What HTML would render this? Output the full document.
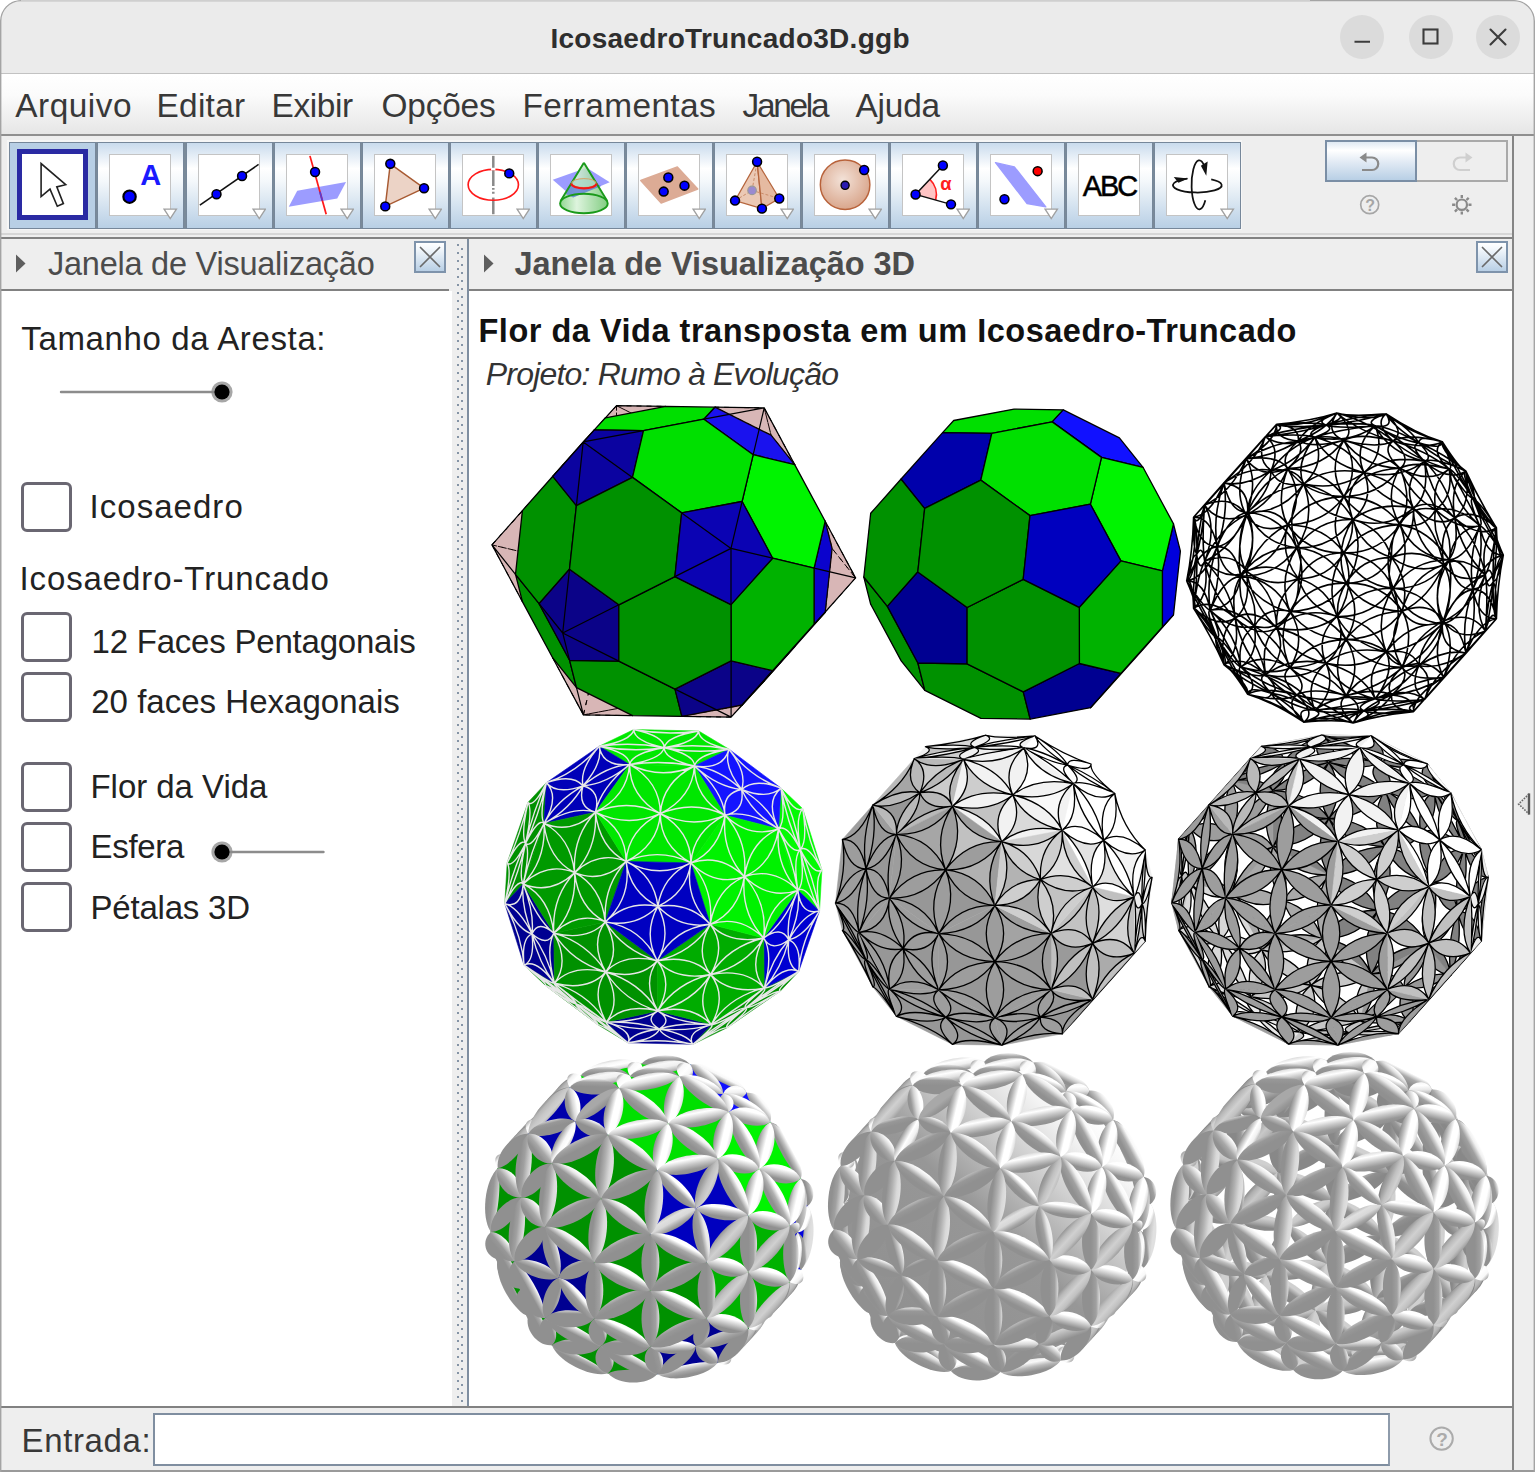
<!DOCTYPE html>
<html><head><meta charset="utf-8"><title>IcosaedroTruncado3D.ggb</title>
<style>
html,body{margin:0;padding:0;background:#fff;}
body{width:1535px;height:1472px;position:relative;overflow:hidden;font-family:"Liberation Sans",sans-serif;}
#win{position:absolute;left:0;top:0;width:1535px;height:1472px;background:#eeeeee;border-radius:21px 21px 0 0;overflow:hidden;}
#win div,#win svg{position:absolute;}
.tx{white-space:nowrap;}
#title{left:0;top:0;width:1535px;height:73px;background:#ebebeb;}
.wb{top:15px;width:44px;height:44px;border-radius:50%;background:#dbdbdb;}
#menu{left:0;top:74px;width:1535px;height:60px;background:linear-gradient(#ffffff 0%,#fbfbfb 35%,#e6e6e6 100%);}
.tb{top:141.5px;width:85px;height:85px;background:linear-gradient(#c9dbed 0%,#ffffff 30%,#f4f8fb 45%,#b8cfe5 100%);border:1px solid #76879a;}
.ic{left:11.3px;top:11.3px;width:60px;height:60px;background:#fff;border:1px solid #c4c4c4;}
.ic svg{left:0;top:0;}
.dd{left:65.3px;top:65.6px;}
.ph{top:239px;height:50px;background:#eeeeee;}
.cbx{left:21px;width:45px;height:44px;border:3px solid #6a6772;border-radius:6px;background:#fff;}
.xb{top:241px;width:28px;height:28px;border:2px solid #7e93ab;background:linear-gradient(#ffffff 0%,#f4f8fc 20%,#b8cfe5 100%);}
</style></head><body>
<div id="win">
<div id="title"></div><div style="left:0;top:73px;width:1535px;height:1.7px;background:#c2c2c2"></div>
<div class="wb" style="left:1340px"></div><div class="wb" style="left:1408.5px"></div><div class="wb" style="left:1476px"></div>
<svg style="left:1330px;top:10px" width="200" height="56" viewBox="1330 10 200 56" fill="none" stroke="#3c3c3c" stroke-width="2.1"><path d="M1354.5,41.8 L1370,41.8"/><rect x="1423.5" y="29.5" width="14" height="14"/><path d="M1490.5,29.5 L1505.5,44.5 M1505.5,29.5 L1490.5,44.5" stroke-linecap="round"/></svg>
<div id="menu"></div><div style="left:0;top:134px;width:1535px;height:2px;background:#8f8f8f"></div>
<div style="left:7px;top:140px;width:1235px;height:90px;background:#f6f6f6"></div><div style="left:9.2px;top:141.5px;width:1231.7px;height:87px;background:#7a8a99"></div>
<div class="tb" style="left:9.0px;background:#b8cfe5"><div class="ic" style="left:6.6px;top:6.4px;width:61px;height:61px;border:5.5px solid #2a2aa3"><svg width="61" height="61" viewBox="0 0 61 61"><path d="M19.1,9.6 L19.1,42.5 L28,35.1 L35.3,52.2 L41.4,49.6 L34.8,32.9 L43.7,30.7 Z" fill="#fff" stroke="#222" stroke-width="1.6" stroke-linejoin="miter"/></svg></div></div>
<div class="tb" style="left:97.0px"><div class="ic"><svg width="60" height="60" viewBox="0 0 62 62"><circle cx="20.2" cy="43.1" r="6.4" fill="#0000ff" stroke="#000" stroke-width="2.2"/><text x="31.2" y="30.8" font-family="Liberation Sans, sans-serif" font-weight="bold" font-size="30" fill="#1a1aff">A</text></svg></div><svg class="dd" width="14.5" height="11.8" viewBox="0 0 16 13"><path d="M1.2,1.2 L14.8,1.2 L8,11.6 Z" fill="#fff" stroke="#a0a0a0" stroke-width="1.5"/></svg></div>
<div class="tb" style="left:185.5px"><div class="ic"><svg width="60" height="60" viewBox="0 0 62 62"><path d="M0.9,51.9 L61.6,9.7" stroke="#111" stroke-width="1.6"/><circle cx="18.1" cy="40.5" r="4.6" fill="#0000ff" stroke="#000" stroke-width="1.6"/><circle cx="44.5" cy="21.7" r="4.6" fill="#0000ff" stroke="#000" stroke-width="1.6"/></svg></div><svg class="dd" width="14.5" height="11.8" viewBox="0 0 16 13"><path d="M1.2,1.2 L14.8,1.2 L8,11.6 Z" fill="#fff" stroke="#a0a0a0" stroke-width="1.5"/></svg></div>
<div class="tb" style="left:273.5px"><div class="ic"><svg width="60" height="60" viewBox="0 0 62 62"><path d="M1.8,53.6 L10.6,36.9 L61,27.8 L51.9,44.9 Z" fill="#9c9cff"/><path d="M23.7,0.9 L40.5,61.2" stroke="#ff1a1a" stroke-width="1.8"/><path d="M34,38 L36.5,47" stroke="#5a3ad0" stroke-width="1.8"/><circle cx="29" cy="17.6" r="4.6" fill="#0000ff" stroke="#000" stroke-width="1.6"/></svg></div><svg class="dd" width="14.5" height="11.8" viewBox="0 0 16 13"><path d="M1.2,1.2 L14.8,1.2 L8,11.6 Z" fill="#fff" stroke="#a0a0a0" stroke-width="1.5"/></svg></div>
<div class="tb" style="left:361.5px"><div class="ic"><svg width="60" height="60" viewBox="0 0 62 62"><path d="M15.8,9.1 L50.7,34.3 L10.6,53.1 Z" fill="#ecd3c6" stroke="#a85a32" stroke-width="1.5"/><circle cx="15.8" cy="9.1" r="4.6" fill="#0000ff" stroke="#000" stroke-width="1.6"/><circle cx="50.7" cy="34.3" r="4.6" fill="#0000ff" stroke="#000" stroke-width="1.6"/><circle cx="10.6" cy="53.1" r="4.6" fill="#0000ff" stroke="#000" stroke-width="1.6"/></svg></div><svg class="dd" width="14.5" height="11.8" viewBox="0 0 16 13"><path d="M1.2,1.2 L14.8,1.2 L8,11.6 Z" fill="#fff" stroke="#a0a0a0" stroke-width="1.5"/></svg></div>
<div class="tb" style="left:449.5px"><div class="ic"><svg width="60" height="60" viewBox="0 0 62 62"><path d="M31.3,0.9 L31.3,30" stroke="#8a8a8a" stroke-width="2.6"/><path d="M31.3,30 L31.3,42" stroke="#8a8a8a" stroke-width="2.6" stroke-dasharray="2 2"/><path d="M31.3,44 L31.3,61.2" stroke="#8a8a8a" stroke-width="2.6"/><ellipse cx="31.3" cy="30.8" rx="26" ry="16" fill="none" stroke="#ff1a1a" stroke-width="1.7"/><path d="M29,14.5 L33.5,14.5" stroke="#fff" stroke-width="2.6"/><circle cx="47.8" cy="19" r="4.6" fill="#0000ff" stroke="#000" stroke-width="1.6"/></svg></div><svg class="dd" width="14.5" height="11.8" viewBox="0 0 16 13"><path d="M1.2,1.2 L14.8,1.2 L8,11.6 Z" fill="#fff" stroke="#a0a0a0" stroke-width="1.5"/></svg></div>
<div class="tb" style="left:537.5px"><div class="ic"><svg width="60" height="60" viewBox="0 0 62 62"><defs><linearGradient id="cg" x1="0" x2="1" y1="0" y2="0"><stop offset="0" stop-color="#7fcf7f"/><stop offset="0.35" stop-color="#d8f2d8"/><stop offset="1" stop-color="#6cc46c"/></linearGradient></defs>
<path d="M1.8,25.5 L36.9,13.2 L60.7,28.1 L22.9,44 Z" fill="#9c9cff"/>
<path d="M34,7.9 L9.4,50.1 A24.6,10 0 0 0 58.6,50.1 Z" fill="url(#cg)" fill-opacity="0.85"/>
<path d="M20.5,30 L14.5,40 L22.9,44 L52,32 L47.5,30 A13.2,5 0 0 1 20.5,30Z" fill="#5a78d8" fill-opacity="0.75"/>
<ellipse cx="34" cy="50.1" rx="24.6" ry="10" fill="none" stroke="#1a9a1a" stroke-width="2"/>
<path d="M34,7.9 L9.9,47.5 M34,7.9 L58.1,47.5" stroke="#1a9a1a" stroke-width="2" fill="none"/>
<ellipse cx="34" cy="29" rx="12.6" ry="4.6" fill="#a8d8c8" fill-opacity="0.7" stroke="#d8a060" stroke-width="1"/>
<path d="M21,29.5 A13,5 0 0 0 47,29.5" fill="none" stroke="#f01818" stroke-width="2.2"/></svg></div></div>
<div class="tb" style="left:625.5px"><div class="ic"><svg width="60" height="60" viewBox="0 0 62 62"><path d="M1.8,26.4 L39.6,12.3 L60.7,35.2 L22.9,49.6 Z" fill="#dcab95" stroke="#dcab95" stroke-width="1.5" stroke-linejoin="round"/><circle cx="30.3" cy="23.2" r="4.6" fill="#0000ff" stroke="#000" stroke-width="1.6"/><circle cx="47" cy="31.7" r="4.6" fill="#0000ff" stroke="#000" stroke-width="1.6"/><circle cx="25.5" cy="37.8" r="4.6" fill="#0000ff" stroke="#000" stroke-width="1.6"/></svg></div><svg class="dd" width="14.5" height="11.8" viewBox="0 0 16 13"><path d="M1.2,1.2 L14.8,1.2 L8,11.6 Z" fill="#fff" stroke="#a0a0a0" stroke-width="1.5"/></svg></div>
<div class="tb" style="left:713.5px"><div class="ic"><svg width="60" height="60" viewBox="0 0 62 62"><path d="M31.1,7 L8.3,47.1 L36.1,55.4 Z" fill="#e9c3ad" fill-opacity="0.9" stroke="#b5653d" stroke-width="1.3"/>
<path d="M31.1,7 L36.1,55.4 L54,44.9 Z" fill="#e2b297" fill-opacity="0.9" stroke="#b5653d" stroke-width="1.3"/>
<path d="M8.3,47.1 L25.9,36.6 L54,44.9 M25.9,36.6 L31.1,7" fill="none" stroke="#c88a68" stroke-width="1" stroke-dasharray="3 2"/>
<circle cx="25.9" cy="36.6" r="4.4" fill="#9a8ad0" stroke="#999" stroke-width="1.2"/><circle cx="31.1" cy="7" r="4.6" fill="#0000ff" stroke="#000" stroke-width="1.6"/><circle cx="8.3" cy="47.1" r="4.6" fill="#0000ff" stroke="#000" stroke-width="1.6"/><circle cx="36.1" cy="55.4" r="4.6" fill="#0000ff" stroke="#000" stroke-width="1.6"/><circle cx="54" cy="44.9" r="4.6" fill="#0000ff" stroke="#000" stroke-width="1.6"/></svg></div><svg class="dd" width="14.5" height="11.8" viewBox="0 0 16 13"><path d="M1.2,1.2 L14.8,1.2 L8,11.6 Z" fill="#fff" stroke="#a0a0a0" stroke-width="1.5"/></svg></div>
<div class="tb" style="left:801.5px"><div class="ic"><svg width="60" height="60" viewBox="0 0 62 62"><defs><radialGradient id="sg" cx="0.45" cy="0.4" r="0.6"><stop offset="0" stop-color="#f3e2d8"/><stop offset="1" stop-color="#d9a68c"/></radialGradient></defs>
<circle cx="31.1" cy="30.8" r="25.6" fill="url(#sg)" stroke="#b8623a" stroke-width="1.5"/><circle cx="31.1" cy="31.3" r="4.2" fill="#2a1ab0" stroke="#000" stroke-width="1.4"/><circle cx="50.8" cy="15.5" r="4.6" fill="#0000ff" stroke="#000" stroke-width="1.6"/></svg></div><svg class="dd" width="14.5" height="11.8" viewBox="0 0 16 13"><path d="M1.2,1.2 L14.8,1.2 L8,11.6 Z" fill="#fff" stroke="#a0a0a0" stroke-width="1.5"/></svg></div>
<div class="tb" style="left:889.5px"><div class="ic"><svg width="60" height="60" viewBox="0 0 62 62"><path d="M13,40.8 L27.8,25.1 A21.6,21.6 0 0 1 33.7,46.6 Z" fill="#ffc4c4"/><path d="M27.8,25.1 A21.6,21.6 0 0 1 33.7,46.6" fill="none" stroke="#ff2020" stroke-width="1.7"/>
<path d="M41.2,10.9 L13,40.8 L49.6,51" fill="none" stroke="#111" stroke-width="1.5"/>
<text x="38.5" y="36.5" font-family="Liberation Sans, sans-serif" font-weight="bold" font-size="19" fill="#ff2020">α</text><circle cx="13" cy="40.8" r="4.6" fill="#0000ff" stroke="#000" stroke-width="1.6"/><circle cx="41.2" cy="10.9" r="4.6" fill="#0000ff" stroke="#000" stroke-width="1.6"/><circle cx="49.6" cy="51" r="4.6" fill="#0000ff" stroke="#000" stroke-width="1.6"/></svg></div><svg class="dd" width="14.5" height="11.8" viewBox="0 0 16 13"><path d="M1.2,1.2 L14.8,1.2 L8,11.6 Z" fill="#fff" stroke="#a0a0a0" stroke-width="1.5"/></svg></div>
<div class="tb" style="left:978.0px"><div class="ic"><svg width="60" height="60" viewBox="0 0 62 62"><path d="M4.7,7.9 L24.1,12.3 L56.6,53.6 L37.3,50.1 Z" fill="#9c9cff" stroke="#9c9cff" stroke-width="1.5" stroke-linejoin="round"/><circle cx="48.2" cy="16.7" r="4.6" fill="#ff0000" stroke="#000" stroke-width="1.6"/><circle cx="13.9" cy="45.7" r="4.6" fill="#0000ff" stroke="#000" stroke-width="1.6"/></svg></div><svg class="dd" width="14.5" height="11.8" viewBox="0 0 16 13"><path d="M1.2,1.2 L14.8,1.2 L8,11.6 Z" fill="#fff" stroke="#a0a0a0" stroke-width="1.5"/></svg></div>
<div class="tb" style="left:1066.0px"><div class="ic"><svg width="60" height="60" viewBox="0 0 62 62"><text x="4" y="42.2" font-family="Liberation Sans, sans-serif" font-size="30" letter-spacing="-2.2" fill="#000" stroke="#000" stroke-width="0.5">ABC</text></svg></div></div>
<div class="tb" style="left:1154.0px"><div class="ic"><svg width="60" height="60" viewBox="0 0 62 62"><path d="M21.1,24.4 A25.2,7.5 0 1 0 45.7,25.1" fill="none" stroke="#111" stroke-width="1.8"/>
<path d="M22,24.2 L7,22.8 L11.8,28.6 Z" fill="#111"/>
<path d="M38.5,11.3 A8,25.3 0 1 0 39.6,46.8" fill="none" stroke="#111" stroke-width="1.8"/>
<path d="M40.6,21.4 L35,11 L42,6.8 Z" fill="#111"/></svg></div><svg class="dd" width="14.5" height="11.8" viewBox="0 0 16 13"><path d="M1.2,1.2 L14.8,1.2 L8,11.6 Z" fill="#fff" stroke="#a0a0a0" stroke-width="1.5"/></svg></div>
<div style="left:1324.5px;top:139.8px;width:88px;height:38.5px;border:2px solid #7a8ea5;background:linear-gradient(#dfe9f3 0%,#ffffff 22%,#e4ecf5 50%,#b8cfe5 100%)"></div>
<div style="left:1416.5px;top:139.8px;width:89px;height:38.5px;border:2px solid #a9a9a9;border-left:none;background:#eeeeee"></div>
<svg style="left:1320px;top:136px" width="192" height="100" viewBox="1320 136 192 100" fill="none">
<path d="M1363,157.5 L1372,157.5 A6.2,6.2 0 0 1 1372,170 L1362,170" stroke="#8a8a8a" stroke-width="2.2"/><path d="M1359.5,157.5 L1366.5,152.5 L1366.5,162.5 Z" fill="#8a8a8a"/>
<path d="M1469,157.5 L1460,157.5 A6.2,6.2 0 0 0 1460,170 L1470,170" stroke="#cfcfcf" stroke-width="2.2"/><path d="M1472.5,157.5 L1465.5,152.5 L1465.5,162.5 Z" fill="#cfcfcf"/>
<circle cx="1369.7" cy="204.7" r="9" stroke="#a6a6a6" stroke-width="1.7"/>
<text x="1365.3" y="210.6" font-family="Liberation Sans, sans-serif" font-size="16" font-weight="bold" fill="#a6a6a6">?</text>
<g stroke="#8a8a8a" stroke-width="2.4"><circle cx="1461.8" cy="204.7" r="5.2" stroke-width="2.2"/><path d="M1461.8,195 L1461.8,198 M1461.8,211.4 L1461.8,214.4 M1452.1,204.7 L1455.1,204.7 M1468.5,204.7 L1471.5,204.7 M1454.9,197.8 L1457.1,200 M1466.5,209.4 L1468.7,211.6 M1454.9,211.6 L1457.1,209.4 M1466.5,200 L1468.7,197.8"/></g>
</svg>
<div style="left:0;top:233px;width:1513px;height:2px;background:#d6d6d6"></div>
<div style="left:0;top:237px;width:1513px;height:2px;background:#818181"></div>
<div style="left:2px;top:291px;width:450px;height:1115px;background:#fff"></div>
<div class="ph" style="left:2px;width:447px"></div><div style="left:0;top:289px;width:449px;height:2px;background:#818181"></div>
<svg style="left:14px;top:252px" width="14" height="24" viewBox="0 0 14 24"><path d="M2,2.5 L11.5,11.5 L2,20.5 Z" fill="#5e5e5e"/></svg>
<div class="xb" style="left:413.5px"><svg width="28" height="28" viewBox="0 0 28 28" style="left:0;top:0"><path d="M4.5,4.5 L23.5,23.5 M23.5,4.5 L4.5,23.5" stroke="#6a6a6a" stroke-width="1.7" stroke-linecap="round"/></svg></div>
<div style="left:452px;top:239px;width:15px;height:1167px;background:#eeeeee"></div>
<svg style="left:0;top:0" width="470" height="1410" fill="#8594a6"><rect x="457" y="244" width="2" height="2"/><rect x="461" y="248" width="2" height="2"/><rect x="457" y="252" width="2" height="2"/><rect x="461" y="256" width="2" height="2"/><rect x="457" y="260" width="2" height="2"/><rect x="461" y="264" width="2" height="2"/><rect x="457" y="268" width="2" height="2"/><rect x="461" y="272" width="2" height="2"/><rect x="457" y="276" width="2" height="2"/><rect x="461" y="280" width="2" height="2"/><rect x="457" y="284" width="2" height="2"/><rect x="461" y="288" width="2" height="2"/><rect x="457" y="292" width="2" height="2"/><rect x="461" y="296" width="2" height="2"/><rect x="457" y="300" width="2" height="2"/><rect x="461" y="304" width="2" height="2"/><rect x="457" y="308" width="2" height="2"/><rect x="461" y="312" width="2" height="2"/><rect x="457" y="316" width="2" height="2"/><rect x="461" y="320" width="2" height="2"/><rect x="457" y="324" width="2" height="2"/><rect x="461" y="328" width="2" height="2"/><rect x="457" y="332" width="2" height="2"/><rect x="461" y="336" width="2" height="2"/><rect x="457" y="340" width="2" height="2"/><rect x="461" y="344" width="2" height="2"/><rect x="457" y="348" width="2" height="2"/><rect x="461" y="352" width="2" height="2"/><rect x="457" y="356" width="2" height="2"/><rect x="461" y="360" width="2" height="2"/><rect x="457" y="364" width="2" height="2"/><rect x="461" y="368" width="2" height="2"/><rect x="457" y="372" width="2" height="2"/><rect x="461" y="376" width="2" height="2"/><rect x="457" y="380" width="2" height="2"/><rect x="461" y="384" width="2" height="2"/><rect x="457" y="388" width="2" height="2"/><rect x="461" y="392" width="2" height="2"/><rect x="457" y="396" width="2" height="2"/><rect x="461" y="400" width="2" height="2"/><rect x="457" y="404" width="2" height="2"/><rect x="461" y="408" width="2" height="2"/><rect x="457" y="412" width="2" height="2"/><rect x="461" y="416" width="2" height="2"/><rect x="457" y="420" width="2" height="2"/><rect x="461" y="424" width="2" height="2"/><rect x="457" y="428" width="2" height="2"/><rect x="461" y="432" width="2" height="2"/><rect x="457" y="436" width="2" height="2"/><rect x="461" y="440" width="2" height="2"/><rect x="457" y="444" width="2" height="2"/><rect x="461" y="448" width="2" height="2"/><rect x="457" y="452" width="2" height="2"/><rect x="461" y="456" width="2" height="2"/><rect x="457" y="460" width="2" height="2"/><rect x="461" y="464" width="2" height="2"/><rect x="457" y="468" width="2" height="2"/><rect x="461" y="472" width="2" height="2"/><rect x="457" y="476" width="2" height="2"/><rect x="461" y="480" width="2" height="2"/><rect x="457" y="484" width="2" height="2"/><rect x="461" y="488" width="2" height="2"/><rect x="457" y="492" width="2" height="2"/><rect x="461" y="496" width="2" height="2"/><rect x="457" y="500" width="2" height="2"/><rect x="461" y="504" width="2" height="2"/><rect x="457" y="508" width="2" height="2"/><rect x="461" y="512" width="2" height="2"/><rect x="457" y="516" width="2" height="2"/><rect x="461" y="520" width="2" height="2"/><rect x="457" y="524" width="2" height="2"/><rect x="461" y="528" width="2" height="2"/><rect x="457" y="532" width="2" height="2"/><rect x="461" y="536" width="2" height="2"/><rect x="457" y="540" width="2" height="2"/><rect x="461" y="544" width="2" height="2"/><rect x="457" y="548" width="2" height="2"/><rect x="461" y="552" width="2" height="2"/><rect x="457" y="556" width="2" height="2"/><rect x="461" y="560" width="2" height="2"/><rect x="457" y="564" width="2" height="2"/><rect x="461" y="568" width="2" height="2"/><rect x="457" y="572" width="2" height="2"/><rect x="461" y="576" width="2" height="2"/><rect x="457" y="580" width="2" height="2"/><rect x="461" y="584" width="2" height="2"/><rect x="457" y="588" width="2" height="2"/><rect x="461" y="592" width="2" height="2"/><rect x="457" y="596" width="2" height="2"/><rect x="461" y="600" width="2" height="2"/><rect x="457" y="604" width="2" height="2"/><rect x="461" y="608" width="2" height="2"/><rect x="457" y="612" width="2" height="2"/><rect x="461" y="616" width="2" height="2"/><rect x="457" y="620" width="2" height="2"/><rect x="461" y="624" width="2" height="2"/><rect x="457" y="628" width="2" height="2"/><rect x="461" y="632" width="2" height="2"/><rect x="457" y="636" width="2" height="2"/><rect x="461" y="640" width="2" height="2"/><rect x="457" y="644" width="2" height="2"/><rect x="461" y="648" width="2" height="2"/><rect x="457" y="652" width="2" height="2"/><rect x="461" y="656" width="2" height="2"/><rect x="457" y="660" width="2" height="2"/><rect x="461" y="664" width="2" height="2"/><rect x="457" y="668" width="2" height="2"/><rect x="461" y="672" width="2" height="2"/><rect x="457" y="676" width="2" height="2"/><rect x="461" y="680" width="2" height="2"/><rect x="457" y="684" width="2" height="2"/><rect x="461" y="688" width="2" height="2"/><rect x="457" y="692" width="2" height="2"/><rect x="461" y="696" width="2" height="2"/><rect x="457" y="700" width="2" height="2"/><rect x="461" y="704" width="2" height="2"/><rect x="457" y="708" width="2" height="2"/><rect x="461" y="712" width="2" height="2"/><rect x="457" y="716" width="2" height="2"/><rect x="461" y="720" width="2" height="2"/><rect x="457" y="724" width="2" height="2"/><rect x="461" y="728" width="2" height="2"/><rect x="457" y="732" width="2" height="2"/><rect x="461" y="736" width="2" height="2"/><rect x="457" y="740" width="2" height="2"/><rect x="461" y="744" width="2" height="2"/><rect x="457" y="748" width="2" height="2"/><rect x="461" y="752" width="2" height="2"/><rect x="457" y="756" width="2" height="2"/><rect x="461" y="760" width="2" height="2"/><rect x="457" y="764" width="2" height="2"/><rect x="461" y="768" width="2" height="2"/><rect x="457" y="772" width="2" height="2"/><rect x="461" y="776" width="2" height="2"/><rect x="457" y="780" width="2" height="2"/><rect x="461" y="784" width="2" height="2"/><rect x="457" y="788" width="2" height="2"/><rect x="461" y="792" width="2" height="2"/><rect x="457" y="796" width="2" height="2"/><rect x="461" y="800" width="2" height="2"/><rect x="457" y="804" width="2" height="2"/><rect x="461" y="808" width="2" height="2"/><rect x="457" y="812" width="2" height="2"/><rect x="461" y="816" width="2" height="2"/><rect x="457" y="820" width="2" height="2"/><rect x="461" y="824" width="2" height="2"/><rect x="457" y="828" width="2" height="2"/><rect x="461" y="832" width="2" height="2"/><rect x="457" y="836" width="2" height="2"/><rect x="461" y="840" width="2" height="2"/><rect x="457" y="844" width="2" height="2"/><rect x="461" y="848" width="2" height="2"/><rect x="457" y="852" width="2" height="2"/><rect x="461" y="856" width="2" height="2"/><rect x="457" y="860" width="2" height="2"/><rect x="461" y="864" width="2" height="2"/><rect x="457" y="868" width="2" height="2"/><rect x="461" y="872" width="2" height="2"/><rect x="457" y="876" width="2" height="2"/><rect x="461" y="880" width="2" height="2"/><rect x="457" y="884" width="2" height="2"/><rect x="461" y="888" width="2" height="2"/><rect x="457" y="892" width="2" height="2"/><rect x="461" y="896" width="2" height="2"/><rect x="457" y="900" width="2" height="2"/><rect x="461" y="904" width="2" height="2"/><rect x="457" y="908" width="2" height="2"/><rect x="461" y="912" width="2" height="2"/><rect x="457" y="916" width="2" height="2"/><rect x="461" y="920" width="2" height="2"/><rect x="457" y="924" width="2" height="2"/><rect x="461" y="928" width="2" height="2"/><rect x="457" y="932" width="2" height="2"/><rect x="461" y="936" width="2" height="2"/><rect x="457" y="940" width="2" height="2"/><rect x="461" y="944" width="2" height="2"/><rect x="457" y="948" width="2" height="2"/><rect x="461" y="952" width="2" height="2"/><rect x="457" y="956" width="2" height="2"/><rect x="461" y="960" width="2" height="2"/><rect x="457" y="964" width="2" height="2"/><rect x="461" y="968" width="2" height="2"/><rect x="457" y="972" width="2" height="2"/><rect x="461" y="976" width="2" height="2"/><rect x="457" y="980" width="2" height="2"/><rect x="461" y="984" width="2" height="2"/><rect x="457" y="988" width="2" height="2"/><rect x="461" y="992" width="2" height="2"/><rect x="457" y="996" width="2" height="2"/><rect x="461" y="1000" width="2" height="2"/><rect x="457" y="1004" width="2" height="2"/><rect x="461" y="1008" width="2" height="2"/><rect x="457" y="1012" width="2" height="2"/><rect x="461" y="1016" width="2" height="2"/><rect x="457" y="1020" width="2" height="2"/><rect x="461" y="1024" width="2" height="2"/><rect x="457" y="1028" width="2" height="2"/><rect x="461" y="1032" width="2" height="2"/><rect x="457" y="1036" width="2" height="2"/><rect x="461" y="1040" width="2" height="2"/><rect x="457" y="1044" width="2" height="2"/><rect x="461" y="1048" width="2" height="2"/><rect x="457" y="1052" width="2" height="2"/><rect x="461" y="1056" width="2" height="2"/><rect x="457" y="1060" width="2" height="2"/><rect x="461" y="1064" width="2" height="2"/><rect x="457" y="1068" width="2" height="2"/><rect x="461" y="1072" width="2" height="2"/><rect x="457" y="1076" width="2" height="2"/><rect x="461" y="1080" width="2" height="2"/><rect x="457" y="1084" width="2" height="2"/><rect x="461" y="1088" width="2" height="2"/><rect x="457" y="1092" width="2" height="2"/><rect x="461" y="1096" width="2" height="2"/><rect x="457" y="1100" width="2" height="2"/><rect x="461" y="1104" width="2" height="2"/><rect x="457" y="1108" width="2" height="2"/><rect x="461" y="1112" width="2" height="2"/><rect x="457" y="1116" width="2" height="2"/><rect x="461" y="1120" width="2" height="2"/><rect x="457" y="1124" width="2" height="2"/><rect x="461" y="1128" width="2" height="2"/><rect x="457" y="1132" width="2" height="2"/><rect x="461" y="1136" width="2" height="2"/><rect x="457" y="1140" width="2" height="2"/><rect x="461" y="1144" width="2" height="2"/><rect x="457" y="1148" width="2" height="2"/><rect x="461" y="1152" width="2" height="2"/><rect x="457" y="1156" width="2" height="2"/><rect x="461" y="1160" width="2" height="2"/><rect x="457" y="1164" width="2" height="2"/><rect x="461" y="1168" width="2" height="2"/><rect x="457" y="1172" width="2" height="2"/><rect x="461" y="1176" width="2" height="2"/><rect x="457" y="1180" width="2" height="2"/><rect x="461" y="1184" width="2" height="2"/><rect x="457" y="1188" width="2" height="2"/><rect x="461" y="1192" width="2" height="2"/><rect x="457" y="1196" width="2" height="2"/><rect x="461" y="1200" width="2" height="2"/><rect x="457" y="1204" width="2" height="2"/><rect x="461" y="1208" width="2" height="2"/><rect x="457" y="1212" width="2" height="2"/><rect x="461" y="1216" width="2" height="2"/><rect x="457" y="1220" width="2" height="2"/><rect x="461" y="1224" width="2" height="2"/><rect x="457" y="1228" width="2" height="2"/><rect x="461" y="1232" width="2" height="2"/><rect x="457" y="1236" width="2" height="2"/><rect x="461" y="1240" width="2" height="2"/><rect x="457" y="1244" width="2" height="2"/><rect x="461" y="1248" width="2" height="2"/><rect x="457" y="1252" width="2" height="2"/><rect x="461" y="1256" width="2" height="2"/><rect x="457" y="1260" width="2" height="2"/><rect x="461" y="1264" width="2" height="2"/><rect x="457" y="1268" width="2" height="2"/><rect x="461" y="1272" width="2" height="2"/><rect x="457" y="1276" width="2" height="2"/><rect x="461" y="1280" width="2" height="2"/><rect x="457" y="1284" width="2" height="2"/><rect x="461" y="1288" width="2" height="2"/><rect x="457" y="1292" width="2" height="2"/><rect x="461" y="1296" width="2" height="2"/><rect x="457" y="1300" width="2" height="2"/><rect x="461" y="1304" width="2" height="2"/><rect x="457" y="1308" width="2" height="2"/><rect x="461" y="1312" width="2" height="2"/><rect x="457" y="1316" width="2" height="2"/><rect x="461" y="1320" width="2" height="2"/><rect x="457" y="1324" width="2" height="2"/><rect x="461" y="1328" width="2" height="2"/><rect x="457" y="1332" width="2" height="2"/><rect x="461" y="1336" width="2" height="2"/><rect x="457" y="1340" width="2" height="2"/><rect x="461" y="1344" width="2" height="2"/><rect x="457" y="1348" width="2" height="2"/><rect x="461" y="1352" width="2" height="2"/><rect x="457" y="1356" width="2" height="2"/><rect x="461" y="1360" width="2" height="2"/><rect x="457" y="1364" width="2" height="2"/><rect x="461" y="1368" width="2" height="2"/><rect x="457" y="1372" width="2" height="2"/><rect x="461" y="1376" width="2" height="2"/><rect x="457" y="1380" width="2" height="2"/><rect x="461" y="1384" width="2" height="2"/><rect x="457" y="1388" width="2" height="2"/><rect x="461" y="1392" width="2" height="2"/><rect x="457" y="1396" width="2" height="2"/><rect x="461" y="1400" width="2" height="2"/></svg>
<div style="left:467px;top:239px;width:2px;height:1167px;background:#7f8ea0"></div>
<div style="left:469px;top:291px;width:1043px;height:1115px;background:#fff"></div>
<div class="ph" style="left:469px;width:1043px"></div><div style="left:469px;top:289px;width:1044px;height:2px;background:#818181"></div>
<svg style="left:482px;top:252px" width="14" height="24" viewBox="0 0 14 24"><path d="M2,2.5 L11.5,11.5 L2,20.5 Z" fill="#5e5e5e"/></svg>
<div class="xb" style="left:1476px"><svg width="28" height="28" viewBox="0 0 28 28" style="left:0;top:0"><path d="M4.5,4.5 L23.5,23.5 M23.5,4.5 L4.5,23.5" stroke="#6a6a6a" stroke-width="1.7" stroke-linecap="round"/></svg></div>
<div style="left:1512px;top:136px;width:2px;height:1334px;background:#858585"></div>
<svg style="left:1514px;top:788px" width="20" height="32" viewBox="1514 788 20 32"><path d="M1529,794 L1518.6,804 L1529,814" fill="#e4e4e4" stroke="#666" stroke-width="1.6" stroke-dasharray="1.6 1.2"/><path d="M1529,793.4 L1529,814.6" stroke="#5a5a5a" stroke-width="2.4"/></svg>
<svg style="left:0;top:0" width="1535" height="1472" viewBox="0 0 1535 1472"><g fill="#8a2a2a" fill-opacity="0.15" stroke="none"><path d="M855.6,577.9L825.2,521.2L814.1,568.1Z"/><path d="M855.6,577.9L814.1,568.1L814.1,624.3Z"/><path d="M855.6,577.9L814.1,624.3L825.2,612.2Z"/><path d="M764.2,407.9L703.9,419.2L753.2,454.7Z"/><path d="M764.2,407.9L753.2,454.7L794.7,464.6Z"/><path d="M764.2,407.9L715,407.2L703.9,419.2Z"/><path d="M583.2,441.9L632.5,477.4L643.5,430.6Z"/><path d="M583.2,441.9L643.5,430.6L594.3,429.9Z"/><path d="M583.2,441.9L552.8,476.3L576.4,505.6Z"/><path d="M583.2,441.9L576.4,505.6L632.5,477.4Z"/><path d="M562.7,633L569.5,569.3L539.1,603.7Z"/><path d="M562.7,633L539.1,603.7L569.6,660.3Z"/><path d="M562.7,633L569.6,660.3L618.8,661.1Z"/><path d="M562.7,633L618.8,661.1L618.8,604.8Z"/><path d="M562.7,633L618.8,604.8L569.5,569.3Z"/><path d="M492,544.9L522.4,601.6L515.5,574.3Z"/><path d="M492,544.9L515.5,574.3L522.4,510.6Z"/><path d="M616.5,405.7L605.4,417.8L665.7,406.4Z"/><path d="M731.1,717.1L742.2,705L772.6,670.7Z"/><path d="M731.1,717.1L772.6,670.7L731.1,660.8Z"/><path d="M731.1,717.1L731.1,660.8L675,689.1Z"/><path d="M731.1,717.1L675,689.1L681.9,716.4Z"/><path d="M764.4,680.9L794.8,646.5L753.3,692.9Z"/><path d="M583.4,714.9L632.6,715.6L576.5,687.6Z"/><path d="M583.4,714.9L576.5,687.6L552.9,658.2Z"/><path d="M731,548.4L674.9,576.6L731,604.6Z"/><path d="M731,548.4L731,604.6L772.6,558.2Z"/><path d="M731,548.4L772.6,558.2L742.1,501.5Z"/><path d="M731,548.4L742.1,501.5L681.7,512.9Z"/><path d="M731,548.4L681.7,512.9L674.9,576.6Z"/></g><g fill="#8a2a2a" fill-opacity="0.15" stroke="#000" stroke-width="1" stroke-dasharray="5 5" stroke-linejoin="round"><path d="M855.6,577.9L832.1,548.5L825.2,521.2Z"/><path d="M855.6,577.9L825.2,612.2L832.1,548.5Z"/><path d="M764.2,407.9L794.7,464.6L771.1,435.2Z"/><path d="M764.2,407.9L771.1,435.2L715,407.2Z"/><path d="M616.6,574.4L575,564.6L616.6,518.2Z"/><path d="M616.6,574.4L616.6,518.2L672.7,546.2Z"/><path d="M616.6,574.4L672.7,546.2L665.9,609.9Z"/><path d="M616.6,574.4L665.9,609.9L605.5,621.3Z"/><path d="M616.6,574.4L605.5,621.3L575,564.6Z"/><path d="M583.2,441.9L594.3,429.9L552.8,476.3Z"/><path d="M492,544.9L522.4,510.6L533.5,498.5Z"/><path d="M492,544.9L533.5,498.5L533.5,554.7Z"/><path d="M492,544.9L533.5,554.7L522.4,601.6Z"/><path d="M616.5,405.7L575,452.1L605.4,417.8Z"/><path d="M616.5,405.7L665.7,406.4L672.6,433.7Z"/><path d="M616.5,405.7L672.6,433.7L616.5,462Z"/><path d="M616.5,405.7L616.5,462L575,452.1Z"/><path d="M784.9,489.8L778.1,553.5L728.8,518Z"/><path d="M784.9,489.8L728.8,518L728.8,461.7Z"/><path d="M784.9,489.8L728.8,461.7L778,462.5Z"/><path d="M784.9,489.8L778,462.5L808.5,519.1Z"/><path d="M784.9,489.8L808.5,519.1L778.1,553.5Z"/><path d="M731.1,717.1L681.9,716.4L742.2,705Z"/><path d="M764.4,680.9L753.3,692.9L704.1,692.2Z"/><path d="M764.4,680.9L704.1,692.2L715.1,645.4Z"/><path d="M764.4,680.9L715.1,645.4L771.2,617.2Z"/><path d="M764.4,680.9L771.2,617.2L794.8,646.5Z"/><path d="M583.4,714.9L594.4,668.1L643.7,703.6Z"/><path d="M583.4,714.9L643.7,703.6L632.6,715.6Z"/><path d="M583.4,714.9L552.9,658.2L594.4,668.1Z"/></g><g stroke="#000" stroke-width="1.3" stroke-linejoin="round"><path d="M753.3,692.9L794.8,646.5L825.2,612.2L814.1,624.3L772.6,670.7L742.2,705Z" fill="#009400"/><path d="M522.4,601.6L552.9,658.2L576.5,687.6L569.6,660.3L539.1,603.7L515.5,574.3Z" fill="#009100"/><path d="M832.1,548.5L825.2,521.2L814.1,568.1L814.1,624.3L825.2,612.2Z" fill="#0000dc"/><path d="M703.9,419.2L715,407.2L665.7,406.4L605.4,417.8L594.3,429.9L643.5,430.6Z" fill="#00df00"/><path d="M703.9,419.2L753.2,454.7L794.7,464.6L771.1,435.2L715,407.2Z" fill="#1111ff"/><path d="M675,689.1L618.8,661.1L569.6,660.3L576.5,687.6L632.6,715.6L681.9,716.4Z" fill="#009100"/><path d="M681.9,716.4L742.2,705L772.6,670.7L731.1,660.8L675,689.1Z" fill="#000091"/><path d="M569.5,569.3L576.4,505.6L552.8,476.3L522.4,510.6L515.5,574.3L539.1,603.7Z" fill="#009100"/><path d="M742.1,501.5L772.6,558.2L814.1,568.1L825.2,521.2L794.7,464.6L753.2,454.7Z" fill="#00f400"/><path d="M632.5,477.4L643.5,430.6L594.3,429.9L552.8,476.3L576.4,505.6Z" fill="#0000ab"/><path d="M772.6,670.7L814.1,624.3L814.1,568.1L772.6,558.2L731,604.6L731.1,660.8Z" fill="#00b200"/><path d="M569.5,569.3L539.1,603.7L569.6,660.3L618.8,661.1L618.8,604.8Z" fill="#000091"/><path d="M643.5,430.6L632.5,477.4L681.7,512.9L742.1,501.5L753.2,454.7L703.9,419.2Z" fill="#00e000"/><path d="M675,689.1L731.1,660.8L731,604.6L674.9,576.6L618.8,604.8L618.8,661.1Z" fill="#009100"/><path d="M569.5,569.3L618.8,604.8L674.9,576.6L681.7,512.9L632.5,477.4L576.4,505.6Z" fill="#009100"/><path d="M674.9,576.6L731,604.6L772.6,558.2L742.1,501.5L681.7,512.9Z" fill="#0000bf"/></g><g fill="#8a2a2a" fill-opacity="0.08" stroke="none"><path d="M855.6,577.9L825.2,521.2L814.1,568.1Z"/><path d="M855.6,577.9L814.1,568.1L814.1,624.3Z"/><path d="M855.6,577.9L814.1,624.3L825.2,612.2Z"/><path d="M764.2,407.9L703.9,419.2L753.2,454.7Z"/><path d="M764.2,407.9L753.2,454.7L794.7,464.6Z"/><path d="M764.2,407.9L715,407.2L703.9,419.2Z"/><path d="M583.2,441.9L632.5,477.4L643.5,430.6Z"/><path d="M583.2,441.9L643.5,430.6L594.3,429.9Z"/><path d="M583.2,441.9L552.8,476.3L576.4,505.6Z"/><path d="M583.2,441.9L576.4,505.6L632.5,477.4Z"/><path d="M562.7,633L569.5,569.3L539.1,603.7Z"/><path d="M562.7,633L539.1,603.7L569.6,660.3Z"/><path d="M562.7,633L569.6,660.3L618.8,661.1Z"/><path d="M562.7,633L618.8,661.1L618.8,604.8Z"/><path d="M562.7,633L618.8,604.8L569.5,569.3Z"/><path d="M492,544.9L522.4,601.6L515.5,574.3Z"/><path d="M492,544.9L515.5,574.3L522.4,510.6Z"/><path d="M616.5,405.7L605.4,417.8L665.7,406.4Z"/><path d="M731.1,717.1L742.2,705L772.6,670.7Z"/><path d="M731.1,717.1L772.6,670.7L731.1,660.8Z"/><path d="M731.1,717.1L731.1,660.8L675,689.1Z"/><path d="M731.1,717.1L675,689.1L681.9,716.4Z"/><path d="M764.4,680.9L794.8,646.5L753.3,692.9Z"/><path d="M583.4,714.9L632.6,715.6L576.5,687.6Z"/><path d="M583.4,714.9L576.5,687.6L552.9,658.2Z"/><path d="M731,548.4L674.9,576.6L731,604.6Z"/><path d="M731,548.4L731,604.6L772.6,558.2Z"/><path d="M731,548.4L772.6,558.2L742.1,501.5Z"/><path d="M731,548.4L742.1,501.5L681.7,512.9Z"/><path d="M731,548.4L681.7,512.9L674.9,576.6Z"/></g><path d="M855.6,577.9L825.2,521.2M855.6,577.9L814.1,568.1M855.6,577.9L814.1,624.3M855.6,577.9L825.2,612.2M764.2,407.9L703.9,419.2M764.2,407.9L753.2,454.7M764.2,407.9L794.7,464.6M764.2,407.9L715,407.2M583.2,441.9L632.5,477.4M583.2,441.9L643.5,430.6M583.2,441.9L594.3,429.9M583.2,441.9L552.8,476.3M583.2,441.9L576.4,505.6M562.7,633L569.5,569.3M562.7,633L539.1,603.7M562.7,633L569.6,660.3M562.7,633L618.8,661.1M562.7,633L618.8,604.8M492,544.9L522.4,601.6M492,544.9L515.5,574.3M492,544.9L522.4,510.6M616.5,405.7L605.4,417.8M616.5,405.7L665.7,406.4M731.1,717.1L681.9,716.4M731.1,717.1L742.2,705M731.1,717.1L772.6,670.7M731.1,717.1L731.1,660.8M731.1,717.1L675,689.1M764.4,680.9L794.8,646.5M764.4,680.9L753.3,692.9M583.4,714.9L632.6,715.6M583.4,714.9L576.5,687.6M583.4,714.9L552.9,658.2M731,548.4L674.9,576.6M731,548.4L731,604.6M731,548.4L772.6,558.2M731,548.4L742.1,501.5M731,548.4L681.7,512.9" stroke="#000" stroke-width="1.2" fill="none" stroke-linecap="round"/><g stroke="#000" stroke-width="1.3" stroke-linejoin="round"><path d="M1101.6,695.6L1143.1,649.2L1173.5,614.9L1162.4,627L1120.9,673.4L1090.5,707.7Z" fill="#009400"/><path d="M870.7,604.3L901.2,660.9L924.8,690.3L917.9,663L887.4,606.4L863.8,577Z" fill="#009100"/><path d="M1180.4,551.2L1173.5,523.9L1162.4,570.8L1162.4,627L1173.5,614.9Z" fill="#0000dc"/><path d="M1052.2,421.9L1063.3,409.9L1014,409.1L953.7,420.5L942.6,432.6L991.8,433.3Z" fill="#00df00"/><path d="M1052.2,421.9L1101.5,457.4L1143,467.3L1119.4,437.9L1063.3,409.9Z" fill="#1111ff"/><path d="M1023.3,691.8L967.1,663.8L917.9,663L924.8,690.3L980.9,718.3L1030.2,719.1Z" fill="#009100"/><path d="M1030.2,719.1L1090.5,707.7L1120.9,673.4L1079.4,663.5L1023.3,691.8Z" fill="#000091"/><path d="M917.8,572L924.7,508.3L901.1,479L870.7,513.3L863.8,577L887.4,606.4Z" fill="#009100"/><path d="M1090.4,504.2L1120.9,560.9L1162.4,570.8L1173.5,523.9L1143,467.3L1101.5,457.4Z" fill="#00f400"/><path d="M980.8,480.1L991.8,433.3L942.6,432.6L901.1,479L924.7,508.3Z" fill="#0000ab"/><path d="M1120.9,673.4L1162.4,627L1162.4,570.8L1120.9,560.9L1079.3,607.3L1079.4,663.5Z" fill="#00b200"/><path d="M917.8,572L887.4,606.4L917.9,663L967.1,663.8L967.1,607.5Z" fill="#000091"/><path d="M991.8,433.3L980.8,480.1L1030,515.6L1090.4,504.2L1101.5,457.4L1052.2,421.9Z" fill="#00e000"/><path d="M1023.3,691.8L1079.4,663.5L1079.3,607.3L1023.2,579.3L967.1,607.5L967.1,663.8Z" fill="#009100"/><path d="M917.8,572L967.1,607.5L1023.2,579.3L1030,515.6L980.8,480.1L924.7,508.3Z" fill="#009100"/><path d="M1023.2,579.3L1079.3,607.3L1120.9,560.9L1090.4,504.2L1030,515.6Z" fill="#0000bf"/></g><path d="M1493.3,581.5Q1498.3,555.5 1503.3,555.1Q1498.3,581.1 1493.3,581.5M1493.3,581.5Q1492.3,557.4 1496.4,527.8Q1497.4,551.9 1493.3,581.5M1493.3,581.5Q1487.8,592.6 1485.3,574.7Q1490.9,563.5 1493.3,581.5M1493.3,581.5Q1490.9,612.4 1485.3,630.9Q1487.8,600 1493.3,581.5M1493.3,581.5Q1497.4,589.5 1496.4,618.8Q1492.4,610.8 1493.3,581.5M1503.3,555.1Q1497.3,557.1 1496.4,527.8M1496.4,527.8Q1491.8,563 1485.3,574.7M1485.3,574.7Q1488.4,594.5 1485.3,630.9M1485.3,630.9Q1491.8,608 1496.4,618.8M1496.4,618.8Q1497.3,584.8 1503.3,555.1M1454.8,518Q1437.1,529.1 1413.3,508.1Q1431.1,497 1454.8,518M1454.8,518Q1460.4,551.7 1443.8,564.8Q1438.2,531.1 1454.8,518M1454.8,518Q1478.2,540.6 1485.3,574.7Q1461.9,552 1454.8,518M1454.8,518Q1472.6,506.9 1496.4,527.8Q1478.6,538.9 1454.8,518M1454.8,518Q1449.2,484.3 1465.9,471.2Q1471.5,504.9 1454.8,518M1454.8,518Q1431.5,495.4 1424.4,461.3Q1447.7,483.9 1454.8,518M1413.3,508.1Q1436.7,530.7 1443.8,564.8M1443.8,564.8Q1461.5,553.7 1485.3,574.7M1485.3,574.7Q1479.7,541 1496.4,527.8M1496.4,527.8Q1473,505.2 1465.9,471.2M1465.9,471.2Q1448.1,482.2 1424.4,461.3M1424.4,461.3Q1430,495 1413.3,508.1M1364,472.7Q1328.3,463.9 1314.7,437.2Q1350.4,445.9 1364,472.7M1364,472.7Q1339.8,491.1 1303.7,484Q1327.9,465.6 1364,472.7M1364,472.7Q1375.4,499.8 1352.9,519.5Q1341.5,492.3 1364,472.7M1364,472.7Q1399.7,481.4 1413.3,508.1Q1377.6,499.4 1364,472.7M1364,472.7Q1388.3,454.2 1424.4,461.3Q1400.1,479.7 1364,472.7M1364,472.7Q1352.6,445.5 1375.1,425.8Q1386.5,453 1364,472.7M1314.7,437.2Q1326.2,464.3 1303.7,484M1303.7,484Q1339.4,492.7 1352.9,519.5M1352.9,519.5Q1377.2,501.1 1413.3,508.1M1413.3,508.1Q1401.9,481 1424.4,461.3M1424.4,461.3Q1388.7,452.6 1375.1,425.8M1375.1,425.8Q1350.8,444.2 1314.7,437.2M1418.8,442.8Q1402.3,441 1375.1,425.8Q1391.6,427.6 1418.8,442.8M1418.8,442.8Q1434.4,458.4 1424.4,461.3Q1408.8,445.6 1418.8,442.8M1418.8,442.8Q1444.9,454.2 1465.9,471.2Q1439.8,459.7 1418.8,442.8M1418.8,442.8Q1419.3,434.2 1442.3,441.8Q1441.8,450.3 1418.8,442.8M1418.8,442.8Q1393,426 1386.2,413.8Q1412,430.5 1418.8,442.8M1375.1,425.8Q1407.1,443.2 1424.4,461.3M1424.4,461.3Q1434.9,457.1 1465.9,471.2M1465.9,471.2Q1440.4,451.1 1442.3,441.8M1442.3,441.8Q1416,433.6 1386.2,413.8M1386.2,413.8Q1395.5,428.7 1375.1,425.8M1472.8,498.4Q1460.1,470.4 1442.3,441.8Q1455,469.8 1472.8,498.4M1472.8,498.4Q1477.7,498.1 1465.9,471.2Q1461,471.5 1472.8,498.4M1472.8,498.4Q1490.4,526.1 1496.4,527.8Q1478.8,500.1 1472.8,498.4M1472.8,498.4Q1485.4,526.5 1503.3,555.1Q1490.6,527.1 1472.8,498.4M1472.8,498.4Q1467.9,498.8 1479.7,525.7Q1484.6,525.4 1472.8,498.4M1472.8,498.4Q1455.2,470.8 1449.2,469.1Q1466.8,496.7 1472.8,498.4M1442.3,441.8Q1459.9,469.4 1465.9,471.2M1465.9,471.2Q1478.6,499.2 1496.4,527.8M1496.4,527.8Q1491.5,528.2 1503.3,555.1M1503.3,555.1Q1485.7,527.4 1479.7,525.7M1479.7,525.7Q1467,497.7 1449.2,469.1M1449.2,469.1Q1454.1,468.7 1442.3,441.8M1393.1,441Q1414.6,459.2 1449.2,469.1Q1427.7,450.9 1393.1,441M1393.1,441Q1380.2,450.3 1400,468.3Q1412.8,459.1 1393.1,441M1393.1,441Q1358.7,432.1 1343.8,440.3Q1378.2,449.2 1393.1,441M1393.1,441Q1371.6,422.9 1336.9,413Q1358.5,431.2 1393.1,441M1393.1,441Q1405.9,431.8 1386.2,413.8Q1373.3,423 1393.1,441M1393.1,441Q1427.4,450 1442.3,441.8Q1408,432.9 1393.1,441M1449.2,469.1Q1414.8,460.1 1400,468.3M1400,468.3Q1378.4,450.2 1343.8,440.3M1343.8,440.3Q1356.7,431.1 1336.9,413M1336.9,413Q1371.3,422 1386.2,413.8M1386.2,413.8Q1407.7,431.9 1442.3,441.8M1442.3,441.8Q1429.5,451 1449.2,469.1M1298.3,578.6Q1273.8,560.4 1246.2,571.2Q1270.7,589.4 1298.3,578.6M1298.3,578.6Q1306.8,549.1 1287.8,524.8Q1279.3,554.3 1298.3,578.6M1298.3,578.6Q1328.1,578.6 1343.9,552.8Q1314.2,552.8 1298.3,578.6M1298.3,578.6Q1308.2,608.2 1337.1,616.5Q1327.2,587 1298.3,578.6M1298.3,578.6Q1274.7,596.9 1276.7,627.9Q1300.3,609.6 1298.3,578.6M1246.2,571.2Q1279.2,559.9 1287.8,524.8M1287.8,524.8Q1309,554.3 1343.9,552.8M1343.9,552.8Q1324.1,582.3 1337.1,616.5M1337.1,616.5Q1303.6,605.2 1276.7,627.9M1276.7,627.9Q1275.8,591.4 1246.2,571.2M1325.8,425.1Q1361.5,421.8 1375.1,425.8Q1339.4,429.1 1325.8,425.1M1325.8,425.1Q1350.1,417.5 1386.2,413.8Q1361.9,421.4 1325.8,425.1M1325.8,425.1Q1314.4,420.7 1336.9,413Q1348.4,417.4 1325.8,425.1M1325.8,425.1Q1290.2,428.4 1276.6,424.4Q1312.3,421.1 1325.8,425.1M1325.8,425.1Q1301.6,432.8 1265.5,436.5Q1289.8,428.8 1325.8,425.1M1325.8,425.1Q1337.3,429.5 1314.7,437.2Q1303.3,432.8 1325.8,425.1M1375.1,425.8Q1363.7,421.4 1386.2,413.8M1386.2,413.8Q1350.5,417 1336.9,413M1336.9,413Q1312.7,420.7 1276.6,424.4M1276.6,424.4Q1288,428.8 1265.5,436.5M1265.5,436.5Q1301.2,433.2 1314.7,437.2M1314.7,437.2Q1339,429.5 1375.1,425.8M1235.1,470.8Q1217.3,490.5 1193.6,517.2Q1211.3,497.4 1235.1,470.8M1235.1,470.8Q1240.7,464.3 1224,482.9Q1218.4,489.3 1235.1,470.8M1235.1,470.8Q1258.4,444.6 1265.5,436.5Q1242.2,462.7 1235.1,470.8M1235.1,470.8Q1252.9,451 1276.6,424.4Q1258.8,444.1 1235.1,470.8M1235.1,470.8Q1229.5,477.2 1246.2,458.7Q1251.8,452.3 1235.1,470.8M1235.1,470.8Q1211.7,497 1204.7,505.1Q1228,478.9 1235.1,470.8M1193.6,517.2Q1216.9,491 1224,482.9M1224,482.9Q1241.8,463.1 1265.5,436.5M1265.5,436.5Q1259.9,442.9 1276.6,424.4M1276.6,424.4Q1253.3,450.6 1246.2,458.7M1246.2,458.7Q1228.4,478.5 1204.7,505.1M1204.7,505.1Q1210.2,498.6 1193.6,517.2M1271.1,470.5Q1296.8,466.7 1303.7,484Q1277.9,487.9 1271.1,470.5M1271.1,470.5Q1287.5,447.2 1314.7,437.2Q1298.3,460.6 1271.1,470.5M1271.1,470.5Q1255.5,459.9 1265.5,436.5Q1281.1,447.1 1271.1,470.5M1271.1,470.5Q1245,487.4 1224,482.9Q1250.1,466 1271.1,470.5M1271.1,470.5Q1270.6,491.6 1247.6,512.2Q1248.1,491.2 1271.1,470.5M1303.7,484Q1294.4,464.5 1314.7,437.2M1314.7,437.2Q1282.7,450 1265.5,436.5M1265.5,436.5Q1255,463.9 1224,482.9M1224,482.9Q1249.5,487 1247.6,512.2M1247.6,512.2Q1273.9,487.4 1303.7,484M1254.4,626.4Q1236.3,601 1240.7,575.9Q1258.8,601.3 1254.4,626.4M1254.4,626.4Q1232.4,631.2 1210.3,610.3Q1232.4,605.5 1254.4,626.4M1254.4,626.4Q1258.8,654.8 1240.8,666.9Q1236.4,638.6 1254.4,626.4M1254.4,626.4Q1279.1,639.2 1290,667.7Q1265.3,654.9 1254.4,626.4M1254.4,626.4Q1265.3,606 1290,611.4Q1279.1,631.8 1254.4,626.4M1240.7,575.9Q1236.8,606.1 1210.3,610.3M1210.3,610.3Q1236.8,633.9 1240.8,666.9M1240.8,666.9Q1261.1,651.4 1290,667.7M1290,667.7Q1276.2,634.4 1290,611.4M1290,611.4Q1261.1,606.4 1240.7,575.9M1217.2,546.6Q1234.7,546.1 1240.7,575.9Q1223.2,576.4 1217.2,546.6M1217.2,546.6Q1229.8,515 1247.6,512.2Q1235,543.8 1217.2,546.6M1217.2,546.6Q1212.2,515.5 1224,482.9Q1228.9,513.9 1217.2,546.6M1217.2,546.6Q1199.6,547 1193.6,517.2Q1211.1,516.7 1217.2,546.6M1217.2,546.6Q1204.5,578.1 1186.7,580.9Q1199.4,549.3 1217.2,546.6M1217.2,546.6Q1222.1,577.6 1210.3,610.3Q1205.4,579.2 1217.2,546.6M1240.7,575.9Q1235.8,544.8 1247.6,512.2M1247.6,512.2Q1230,512.7 1224,482.9M1224,482.9Q1211.4,514.4 1193.6,517.2M1193.6,517.2Q1198.5,548.3 1186.7,580.9M1186.7,580.9Q1204.3,580.4 1210.3,610.3M1210.3,610.3Q1222.9,578.7 1240.7,575.9M1196.7,554.5Q1192.6,584.1 1193.6,608.2Q1197.7,578.6 1196.7,554.5M1196.7,554.5Q1191.7,554.9 1186.7,580.9Q1191.7,580.5 1196.7,554.5M1196.7,554.5Q1197.6,525.2 1193.6,517.2Q1192.6,546.5 1196.7,554.5M1196.7,554.5Q1202.2,536 1204.7,505.1Q1199.1,523.6 1196.7,554.5M1196.7,554.5Q1199.1,572.5 1204.7,561.3Q1202.2,543.4 1196.7,554.5M1193.6,608.2Q1192.7,578.9 1186.7,580.9M1186.7,580.9Q1192.7,551.2 1193.6,517.2M1193.6,517.2Q1198.2,528 1204.7,505.1M1204.7,505.1Q1201.6,541.5 1204.7,561.3M1204.7,561.3Q1198.2,573 1193.6,608.2M1364.2,710.9Q1341.6,718.6 1353.1,723Q1375.6,715.3 1364.2,710.9M1364.2,710.9Q1328.1,714.6 1303.8,722.2Q1339.9,718.5 1364.2,710.9M1364.2,710.9Q1350.6,706.9 1314.9,710.2Q1328.5,714.2 1364.2,710.9M1364.2,710.9Q1386.7,703.2 1375.3,698.8Q1352.7,706.5 1364.2,710.9M1364.2,710.9Q1400.2,707.2 1424.5,699.5Q1388.4,703.2 1364.2,710.9M1364.2,710.9Q1377.7,714.9 1413.4,711.6Q1399.8,707.6 1364.2,710.9M1353.1,723Q1339.5,719 1303.8,722.2M1303.8,722.2Q1326.3,714.6 1314.9,710.2M1314.9,710.2Q1351,706.5 1375.3,698.8M1375.3,698.8Q1388.8,702.8 1424.5,699.5M1424.5,699.5Q1402,707.2 1413.4,711.6M1413.4,711.6Q1377.3,715.3 1353.1,723M1246.2,514.9Q1231.9,494.1 1204.7,505.1Q1219,525.9 1246.2,514.9M1246.2,514.9Q1259,481.2 1246.2,458.7Q1233.3,492.5 1246.2,514.9M1246.2,514.9Q1273.4,502 1287.7,468.6Q1260.5,481.5 1246.2,514.9M1246.2,514.9Q1260.6,535.8 1287.8,524.8Q1273.4,504 1246.2,514.9M1246.2,514.9Q1233.4,548.7 1246.2,571.2Q1259.1,537.4 1246.2,514.9M1246.2,514.9Q1219,527.9 1204.7,561.3Q1231.9,548.4 1246.2,514.9M1204.7,505.1Q1231.9,492.1 1246.2,458.7M1246.2,458.7Q1260.5,479.5 1287.7,468.6M1287.7,468.6Q1274.9,502.3 1287.8,524.8M1287.8,524.8Q1260.6,537.8 1246.2,571.2M1246.2,571.2Q1231.9,550.4 1204.7,561.3M1204.7,561.3Q1217.5,527.6 1204.7,505.1M1298.3,441Q1270.7,443.6 1246.2,458.7Q1273.8,456.1 1298.3,441M1298.3,441Q1300.2,426.3 1276.6,424.4Q1274.6,439.1 1298.3,441M1298.3,441Q1327.1,429.3 1336.9,413Q1308.1,424.8 1298.3,441M1298.3,441Q1314.1,448.5 1343.8,440.3Q1328,432.8 1298.3,441M1298.3,441Q1279.2,457.4 1287.7,468.6Q1306.7,452.2 1298.3,441M1246.2,458.7Q1275.7,441.3 1276.6,424.4M1276.6,424.4Q1303.5,427.4 1336.9,413M1336.9,413Q1324,432.3 1343.8,440.3M1343.8,440.3Q1309,449.2 1287.7,468.6M1287.7,468.6Q1279.1,454.8 1246.2,458.7M1435.6,509.6Q1431.2,534.7 1449.3,560.1Q1453.7,535 1435.6,509.6M1435.6,509.6Q1410.9,504.2 1400,524.6Q1424.7,530 1435.6,509.6M1435.6,509.6Q1424.7,481.1 1400,468.3Q1410.9,496.8 1435.6,509.6M1435.6,509.6Q1453.6,497.4 1449.2,469.1Q1431.2,481.2 1435.6,509.6M1435.6,509.6Q1457.6,530.5 1479.7,525.7Q1457.6,504.8 1435.6,509.6M1449.3,560.1Q1428.9,529.6 1400,524.6M1400,524.6Q1413.8,501.6 1400,468.3M1400,468.3Q1428.9,484.6 1449.2,469.1M1449.2,469.1Q1453.2,502.1 1479.7,525.7M1479.7,525.7Q1453.2,529.9 1449.3,560.1M1343.9,496.6Q1307.1,497.7 1287.8,524.8Q1324.5,523.7 1343.9,496.6M1343.9,496.6Q1324.5,469.5 1287.7,468.6Q1307.1,495.6 1343.9,496.6M1343.9,496.6Q1361.2,468.4 1343.8,440.3Q1326.5,468.5 1343.9,496.6M1343.9,496.6Q1380.6,495.5 1400,468.3Q1363.2,469.4 1343.9,496.6M1343.9,496.6Q1363.2,523.6 1400,524.6Q1380.6,497.5 1343.9,496.6M1343.9,496.6Q1326.5,524.7 1343.9,552.8Q1361.2,524.7 1343.9,496.6M1287.8,524.8Q1305.1,496.6 1287.7,468.6M1287.7,468.6Q1324.5,467.5 1343.8,440.3M1343.8,440.3Q1363.2,467.4 1400,468.3M1400,468.3Q1382.6,496.5 1400,524.6M1400,524.6Q1363.3,525.7 1343.9,552.8M1343.9,552.8Q1324.5,525.7 1287.8,524.8M1393.2,588.3Q1358.5,587.1 1337.1,616.5Q1371.7,617.7 1393.2,588.3M1393.2,588.3Q1378.3,556.3 1343.9,552.8Q1358.8,584.8 1393.2,588.3M1393.2,588.3Q1412.9,557.6 1400,524.6Q1380.3,555.3 1393.2,588.3M1393.2,588.3Q1427.8,589.5 1449.3,560.1Q1414.6,558.8 1393.2,588.3M1393.2,588.3Q1408.1,620.2 1442.4,623.8Q1427.5,591.8 1393.2,588.3M1393.2,588.3Q1373.4,619 1386.3,652Q1406,621.3 1393.2,588.3M1337.1,616.5Q1356.8,585.8 1343.9,552.8M1343.9,552.8Q1378.5,554 1400,524.6M1400,524.6Q1414.9,556.5 1449.3,560.1M1449.3,560.1Q1429.5,590.8 1442.4,623.8M1442.4,623.8Q1407.8,622.5 1386.3,652M1386.3,652Q1371.4,620 1337.1,616.5M1391.7,695Q1381.9,711.2 1353.1,723Q1362.9,706.7 1391.7,695M1391.7,695Q1415.4,696.9 1413.4,711.6Q1389.8,709.7 1391.7,695M1391.7,695Q1416.2,679.9 1443.8,677.3Q1419.3,692.4 1391.7,695M1391.7,695Q1383.3,683.8 1402.3,667.4Q1410.8,678.6 1391.7,695M1391.7,695Q1362,703.2 1346.2,695.7Q1375.9,687.5 1391.7,695M1353.1,723Q1386.5,708.6 1413.4,711.6M1413.4,711.6Q1414.3,694.7 1443.8,677.3M1443.8,677.3Q1410.9,681.2 1402.3,667.4M1402.3,667.4Q1381,686.8 1346.2,695.7M1346.2,695.7Q1366,703.7 1353.1,723M1472.8,589.4Q1466.8,559.6 1449.3,560.1Q1455.3,589.9 1472.8,589.4M1472.8,589.4Q1484.6,556.8 1479.7,525.7Q1467.9,558.4 1472.8,589.4M1472.8,589.4Q1490.6,586.7 1503.3,555.1Q1485.5,557.9 1472.8,589.4M1472.8,589.4Q1478.9,619.3 1496.4,618.8Q1490.4,589 1472.8,589.4M1472.8,589.4Q1461.1,622.1 1466,653.1Q1477.8,620.5 1472.8,589.4M1472.8,589.4Q1455,592.2 1442.4,623.8Q1460.2,621 1472.8,589.4M1449.3,560.1Q1467.1,557.3 1479.7,525.7M1479.7,525.7Q1485.7,555.6 1503.3,555.1M1503.3,555.1Q1491.5,587.7 1496.4,618.8M1496.4,618.8Q1478.6,621.6 1466,653.1M1466,653.1Q1460,623.3 1442.4,623.8M1442.4,623.8Q1454.2,591.2 1449.3,560.1M1454.9,665.2Q1447.8,673.3 1424.5,699.5Q1431.6,691.4 1454.9,665.2M1454.9,665.2Q1471.6,646.7 1466,653.1Q1449.3,671.7 1454.9,665.2M1454.9,665.2Q1478.7,638.6 1496.4,618.8Q1472.7,645.5 1454.9,665.2M1454.9,665.2Q1462,657.1 1485.3,630.9Q1478.3,639 1454.9,665.2M1454.9,665.2Q1438.2,683.7 1443.8,677.3Q1460.5,658.8 1454.9,665.2M1454.9,665.2Q1431.2,691.9 1413.4,711.6Q1437.1,685 1454.9,665.2M1424.5,699.5Q1448.2,672.9 1466,653.1M1466,653.1Q1473.1,645 1496.4,618.8M1496.4,618.8Q1479.8,637.4 1485.3,630.9M1485.3,630.9Q1461.6,657.5 1443.8,677.3M1443.8,677.3Q1436.7,685.4 1413.4,711.6M1413.4,711.6Q1430.1,693.1 1424.5,699.5M1418.9,665.5Q1439.9,670 1466,653.1Q1445,648.6 1418.9,665.5M1418.9,665.5Q1408.9,688.9 1424.5,699.5Q1434.5,676.1 1418.9,665.5M1418.9,665.5Q1391.7,675.4 1375.3,698.8Q1402.5,688.8 1418.9,665.5M1418.9,665.5Q1412.1,648.1 1386.3,652Q1393.2,669.3 1418.9,665.5M1418.9,665.5Q1441.9,644.8 1442.4,623.8Q1419.4,644.4 1418.9,665.5M1466,653.1Q1435,672.1 1424.5,699.5M1424.5,699.5Q1407.3,686 1375.3,698.8M1375.3,698.8Q1395.6,671.5 1386.3,652M1386.3,652Q1416.1,648.6 1442.4,623.8M1442.4,623.8Q1440.5,649 1466,653.1M1296.9,695Q1311.8,686.8 1346.2,695.7Q1331.3,703.9 1296.9,695M1296.9,695Q1277.2,676.9 1290,667.7Q1309.8,685.7 1296.9,695M1296.9,695Q1262.3,685.1 1240.8,666.9Q1275.4,676.8 1296.9,695M1296.9,695Q1282,703.1 1247.7,694.2Q1262.6,686 1296.9,695M1296.9,695Q1316.7,713 1303.8,722.2Q1284.1,704.2 1296.9,695M1296.9,695Q1331.5,704.8 1353.1,723Q1318.4,713.1 1296.9,695M1346.2,695.7Q1311.6,685.8 1290,667.7M1290,667.7Q1275.2,675.9 1240.8,666.9M1240.8,666.9Q1260.5,685 1247.7,694.2M1247.7,694.2Q1282.3,704.1 1303.8,722.2M1303.8,722.2Q1318.7,714 1353.1,723M1353.1,723Q1333.3,704.9 1346.2,695.7M1217.2,637.6Q1211.2,635.9 1193.6,608.2Q1199.6,609.9 1217.2,637.6M1217.2,637.6Q1229,664.5 1224.1,664.8Q1212.3,637.9 1217.2,637.6M1217.2,637.6Q1235,666.2 1247.7,694.2Q1229.9,665.6 1217.2,637.6M1217.2,637.6Q1223.2,639.3 1240.8,666.9Q1234.8,665.2 1217.2,637.6M1217.2,637.6Q1205.4,610.6 1210.3,610.3Q1222.1,637.2 1217.2,637.6M1217.2,637.6Q1199.4,608.9 1186.7,580.9Q1204.6,609.5 1217.2,637.6M1193.6,608.2Q1211.4,636.8 1224.1,664.8M1224.1,664.8Q1230.1,666.6 1247.7,694.2M1247.7,694.2Q1235.9,667.3 1240.8,666.9M1240.8,666.9Q1223,638.3 1210.3,610.3M1210.3,610.3Q1204.3,608.6 1186.7,580.9M1186.7,580.9Q1198.5,607.8 1193.6,608.2M1235.2,618Q1251.8,604.9 1246.2,571.2Q1229.6,584.3 1235.2,618M1235.2,618Q1258.9,639 1276.7,627.9Q1252.9,606.9 1235.2,618M1235.2,618Q1242.3,652.1 1265.6,674.7Q1258.5,640.6 1235.2,618M1235.2,618Q1218.5,631.1 1224.1,664.8Q1240.8,651.7 1235.2,618M1235.2,618Q1211.4,597.1 1193.6,608.2Q1217.4,629.1 1235.2,618M1235.2,618Q1228.1,584 1204.7,561.3Q1211.8,595.4 1235.2,618M1246.2,571.2Q1253.3,605.3 1276.7,627.9M1276.7,627.9Q1260,641 1265.6,674.7M1265.6,674.7Q1241.9,653.8 1224.1,664.8M1224.1,664.8Q1217,630.8 1193.6,608.2M1193.6,608.2Q1210.3,595 1204.7,561.3M1204.7,561.3Q1228.5,582.3 1246.2,571.2M1326,663.3Q1348.5,643.7 1337.1,616.5Q1314.6,636.2 1326,663.3M1326,663.3Q1362.1,670.4 1386.3,652Q1350.2,644.9 1326,663.3M1326,663.3Q1339.6,690.1 1375.3,698.8Q1361.7,672.1 1326,663.3M1326,663.3Q1303.5,683 1314.9,710.2Q1337.4,690.5 1326,663.3M1326,663.3Q1289.9,656.3 1265.6,674.7Q1301.7,681.8 1326,663.3M1326,663.3Q1312.4,636.6 1276.7,627.9Q1290.3,654.6 1326,663.3M1337.1,616.5Q1350.6,643.3 1386.3,652M1386.3,652Q1363.8,671.7 1375.3,698.8M1375.3,698.8Q1339.2,691.8 1314.9,710.2M1314.9,710.2Q1301.3,683.4 1265.6,674.7M1265.6,674.7Q1288.1,655 1276.7,627.9M1276.7,627.9Q1312.8,634.9 1337.1,616.5M1271.2,693.2Q1281.2,690.4 1265.6,674.7Q1255.6,677.6 1271.2,693.2M1271.2,693.2Q1298.4,708.4 1314.9,710.2Q1287.7,695 1271.2,693.2M1271.2,693.2Q1278,705.5 1303.8,722.2Q1297,710 1271.2,693.2M1271.2,693.2Q1248.2,685.7 1247.7,694.2Q1270.7,701.8 1271.2,693.2M1271.2,693.2Q1250.2,676.3 1224.1,664.8Q1245.1,681.8 1271.2,693.2M1265.6,674.7Q1282.9,692.8 1314.9,710.2M1314.9,710.2Q1294.5,707.3 1303.8,722.2M1303.8,722.2Q1274,702.4 1247.7,694.2M1247.7,694.2Q1249.6,684.9 1224.1,664.8M1224.1,664.8Q1255.1,678.9 1265.6,674.7M1443.8,621.1Q1456.7,643.5 1443.8,677.3Q1431,654.8 1443.8,621.1M1443.8,621.1Q1471,610.1 1485.3,630.9Q1458.1,641.9 1443.8,621.1M1443.8,621.1Q1458.1,587.6 1485.3,574.7Q1471,608.1 1443.8,621.1M1443.8,621.1Q1430.9,598.6 1443.8,564.8Q1456.6,587.3 1443.8,621.1M1443.8,621.1Q1416.6,632 1402.2,611.2Q1429.4,600.2 1443.8,621.1M1443.8,621.1Q1429.5,654.5 1402.3,667.4Q1416.6,634 1443.8,621.1M1443.8,677.3Q1458.1,643.9 1485.3,630.9M1485.3,630.9Q1472.5,608.4 1485.3,574.7M1485.3,574.7Q1458.1,585.6 1443.8,564.8M1443.8,564.8Q1429.4,598.2 1402.2,611.2M1402.2,611.2Q1415.1,633.7 1402.3,667.4M1402.3,667.4Q1429.5,656.5 1443.8,677.3M1296.8,547.7Q1275.4,577.2 1240.7,575.9Q1262.2,546.5 1296.8,547.7M1296.8,547.7Q1309.7,580.7 1290,611.4Q1277.1,578.4 1296.8,547.7M1296.8,547.7Q1331.2,551.2 1346.1,583.2Q1311.7,579.7 1296.8,547.7M1296.8,547.7Q1318.3,518.3 1352.9,519.5Q1331.5,548.9 1296.8,547.7M1296.8,547.7Q1284,514.7 1303.7,484Q1316.6,517 1296.8,547.7M1296.8,547.7Q1262.5,544.2 1247.6,512.2Q1281.9,515.8 1296.8,547.7M1240.7,575.9Q1275.1,579.5 1290,611.4M1290,611.4Q1311.5,582 1346.1,583.2M1346.1,583.2Q1333.2,550.2 1352.9,519.5M1352.9,519.5Q1318.6,516 1303.7,484M1303.7,484Q1282.2,513.5 1247.6,512.2M1247.6,512.2Q1260.5,545.2 1240.7,575.9M1391.7,557.4Q1375.8,583.2 1346.1,583.2Q1361.9,557.4 1391.7,557.4M1391.7,557.4Q1410.7,581.7 1402.2,611.2Q1383.2,586.9 1391.7,557.4M1391.7,557.4Q1419.3,546.6 1443.8,564.8Q1416.2,575.6 1391.7,557.4M1391.7,557.4Q1389.7,526.4 1413.3,508.1Q1415.3,539.1 1391.7,557.4M1391.7,557.4Q1362.8,549 1352.9,519.5Q1381.8,527.8 1391.7,557.4M1346.1,583.2Q1381,581.7 1402.2,611.2M1402.2,611.2Q1410.8,576.1 1443.8,564.8M1443.8,564.8Q1414.2,544.6 1413.3,508.1M1413.3,508.1Q1386.4,530.8 1352.9,519.5M1352.9,519.5Q1365.9,553.7 1346.1,583.2M1346.1,639.4Q1363.5,667.5 1346.2,695.7Q1328.8,667.6 1346.1,639.4M1346.1,639.4Q1382.9,640.4 1402.3,667.4Q1365.5,666.5 1346.1,639.4M1346.1,639.4Q1365.5,612.3 1402.2,611.2Q1382.9,638.3 1346.1,639.4M1346.1,639.4Q1328.8,611.3 1346.1,583.2Q1363.5,611.3 1346.1,639.4M1346.1,639.4Q1309.4,638.5 1290,611.4Q1326.8,612.4 1346.1,639.4M1346.1,639.4Q1326.8,666.6 1290,667.7Q1309.4,640.5 1346.1,639.4M1346.2,695.7Q1365.5,668.5 1402.3,667.4M1402.3,667.4Q1384.9,639.4 1402.2,611.2M1402.2,611.2Q1365.5,610.3 1346.1,583.2M1346.1,583.2Q1326.7,610.3 1290,611.4M1290,611.4Q1307.4,639.5 1290,667.7M1290,667.7Q1326.8,668.6 1346.2,695.7" fill="none" stroke="#000" stroke-width="1.6" stroke-linejoin="round"/><path d="M554.4,983.3L524.1,965.1L545.7,985.7L597.7,1024.6L628,1042.8L606.3,1022.2Z" fill="#009100" stroke="#009100" stroke-width="0.6"/><path d="M764.2,988.1L711.3,1024.6L692.9,1044.3L727.4,1027.6L780.3,991.1L798.7,971.4Z" fill="#009100" stroke="#009100" stroke-width="0.6"/><path d="M504.8,903.6L523.2,883.9L544,823.5L546.4,782.7L528,802.4L507.2,862.9Z" fill="#009100" stroke="#009100" stroke-width="0.6"/><path d="M778.6,828.9L797.9,890.3L819.5,910.9L821.9,870.1L802.7,808.7L781,788.1Z" fill="#03fa03" stroke="#03fa03" stroke-width="0.6"/><path d="M698.7,731L633.9,729.5L599.3,746.2L629.6,764.5L694.5,766L729,749.2Z" fill="#00e800" stroke="#00e800" stroke-width="0.6"/><path d="M657.8,1010.9L606.3,1022.2L628,1042.8L692.9,1044.3L711.3,1024.6Z" fill="#000091" stroke="#000091" stroke-width="0.6"/><path d="M554.4,983.3L553.8,933.2L523.2,883.9L504.8,903.6L524.1,965.1Z" fill="#000091" stroke="#000091" stroke-width="0.6"/><path d="M764.2,988.1L798.7,971.4L819.5,910.9L797.9,890.3L763.7,938Z" fill="#0000d2" stroke="#0000d2" stroke-width="0.6"/><path d="M546.4,782.7L544,823.5L595.4,812.2L629.6,764.5L599.3,746.2Z" fill="#0000b8" stroke="#0000b8" stroke-width="0.6"/><path d="M781,788.1L729,749.2L694.5,766L725.1,815.2L778.6,828.9Z" fill="#1414ff" stroke="#1414ff" stroke-width="0.6"/><path d="M606.3,1022.2L657.8,1010.9L657.3,960.8L605.3,921.9L553.8,933.2L554.4,983.3Z" fill="#009100" stroke="#009100" stroke-width="0.6"/><path d="M764.2,988.1L763.7,938L710.2,924.3L657.3,960.8L657.8,1010.9L711.3,1024.6Z" fill="#00ac00" stroke="#00ac00" stroke-width="0.6"/><path d="M605.3,921.9L626.1,861.4L595.4,812.2L544,823.5L523.2,883.9L553.8,933.2Z" fill="#009a00" stroke="#009a00" stroke-width="0.6"/><path d="M778.6,828.9L725.1,815.2L690.9,862.9L710.2,924.3L763.7,938L797.9,890.3Z" fill="#00f200" stroke="#00f200" stroke-width="0.6"/><path d="M694.5,766L629.6,764.5L595.4,812.2L626.1,861.4L690.9,862.9L725.1,815.2Z" fill="#00e700" stroke="#00e700" stroke-width="0.6"/><path d="M710.2,924.3L690.9,862.9L626.1,861.4L605.3,921.9L657.3,960.8Z" fill="#0000c1" stroke="#0000c1" stroke-width="0.6"/><path d="M576,1003.9Q552.5,984.8 554.4,983.3Q577.9,1002.5 576,1003.9M576,1003.9Q548.7,984.9 524.1,965.1Q551.4,984.1 576,1003.9M576,1003.9Q572.3,1004 545.7,985.7Q549.5,985.6 576,1003.9M576,1003.9Q599.6,1023.1 597.7,1024.6Q574.1,1005.4 576,1003.9M576,1003.9Q603.4,1023 628,1042.8Q600.7,1023.7 576,1003.9M576,1003.9Q579.8,1003.8 606.3,1022.2Q602.6,1022.3 576,1003.9M554.4,983.3Q550.6,983.4 524.1,965.1M524.1,965.1Q547.6,984.2 545.7,985.7M545.7,985.7Q573.1,1004.8 597.7,1024.6M597.7,1024.6Q601.5,1024.5 628,1042.8M628,1042.8Q604.5,1023.7 606.3,1022.2M606.3,1022.2Q579,1003.1 554.4,983.3M745.8,1007.9Q741.5,1006.2 764.2,988.1Q768.5,989.8 745.8,1007.9M745.8,1007.9Q717.5,1024.9 711.3,1024.6Q739.6,1007.5 745.8,1007.9M745.8,1007.9Q721.8,1026.5 692.9,1044.3Q716.8,1025.6 745.8,1007.9M745.8,1007.9Q750.1,1009.5 727.4,1027.6Q723.1,1025.9 745.8,1007.9M745.8,1007.9Q774.1,990.8 780.3,991.1Q752,1008.2 745.8,1007.9M745.8,1007.9Q769.8,989.2 798.7,971.4Q774.8,990.1 745.8,1007.9M764.2,988.1Q740.2,1006.8 711.3,1024.6M711.3,1024.6Q715.6,1026.2 692.9,1044.3M692.9,1044.3Q721.2,1027.2 727.4,1027.6M727.4,1027.6Q751.4,1008.9 780.3,991.1M780.3,991.1Q776,989.5 798.7,971.4M798.7,971.4Q770.4,988.5 764.2,988.1M525.6,843.2Q517.7,876.7 504.8,903.6Q512.7,870.1 525.6,843.2M525.6,843.2Q530.5,851.1 523.2,883.9Q518.3,876 525.6,843.2M525.6,843.2Q538.4,817.6 544,823.5Q531.2,849 525.6,843.2M525.6,843.2Q533.5,809.7 546.4,782.7Q538.5,816.2 525.6,843.2M525.6,843.2Q520.7,835.2 528,802.4Q532.9,810.4 525.6,843.2M525.6,843.2Q512.8,868.7 507.2,862.9Q520,837.4 525.6,843.2M504.8,903.6Q517.6,878.1 523.2,883.9M523.2,883.9Q531.1,850.4 544,823.5M544,823.5Q539.1,815.5 546.4,782.7M546.4,782.7Q533.6,808.2 528,802.4M528,802.4Q520.1,835.9 507.2,862.9M507.2,862.9Q512.1,870.9 504.8,903.6M800.3,849.5Q792,855 778.6,828.9Q786.8,823.4 800.3,849.5M800.3,849.5Q805.4,882.6 797.9,890.3Q792.7,857.2 800.3,849.5M800.3,849.5Q813.6,877.1 819.5,910.9Q806.2,883.3 800.3,849.5M800.3,849.5Q808.5,844 821.9,870.1Q813.7,875.6 800.3,849.5M800.3,849.5Q795.1,816.4 802.7,808.7Q807.8,841.8 800.3,849.5M800.3,849.5Q786.9,821.9 781,788.1Q794.4,815.7 800.3,849.5M778.6,828.9Q791.9,856.5 797.9,890.3M797.9,890.3Q806.1,884.8 819.5,910.9M819.5,910.9Q814.4,877.8 821.9,870.1M821.9,870.1Q808.6,842.6 802.7,808.7M802.7,808.7Q794.4,814.2 781,788.1M781,788.1Q786.1,821.2 778.6,828.9M664.2,747.7Q666.7,736.3 698.7,731Q696.2,742.4 664.2,747.7M664.2,747.7Q633.6,741 633.9,729.5Q664.4,736.2 664.2,747.7M664.2,747.7Q631.1,752.4 599.3,746.2Q632.4,741.6 664.2,747.7M664.2,747.7Q661.6,759.2 629.6,764.5Q632.2,753 664.2,747.7M664.2,747.7Q694.7,754.5 694.5,766Q664,759.2 664.2,747.7M664.2,747.7Q697.2,743.1 729,749.2Q695.9,753.9 664.2,747.7M698.7,731Q665.6,735.6 633.9,729.5M633.9,729.5Q631.3,740.9 599.3,746.2M599.3,746.2Q629.9,753 629.6,764.5M629.6,764.5Q662.7,759.8 694.5,766M694.5,766Q697,754.5 729,749.2M729,749.2Q698.5,742.5 698.7,731M659.3,1029Q643.7,1019.6 657.8,1010.9Q673.3,1020.3 659.3,1029M659.3,1029Q628.6,1030.1 606.3,1022.2Q637,1021.1 659.3,1029M659.3,1029Q655.8,1039 628,1042.8Q631.4,1032.8 659.3,1029M659.3,1029Q687.8,1034.1 692.9,1044.3Q664.3,1039.2 659.3,1029M659.3,1029Q680.3,1022.1 711.3,1024.6Q690.2,1031.5 659.3,1029M657.8,1010.9Q642.7,1021.4 606.3,1022.2M606.3,1022.2Q633.6,1031.1 628,1042.8M628,1042.8Q660,1037.9 692.9,1044.3M692.9,1044.3Q685.4,1032.3 711.3,1024.6M711.3,1024.6Q674.7,1022.1 657.8,1010.9M532,933.8Q547.4,954.1 554.4,983.3Q539,963.1 532,933.8M532,933.8Q538.5,919.5 553.8,933.2Q547.3,947.5 532,933.8M532,933.8Q520.7,904.7 523.2,883.9Q534.5,913 532,933.8M532,933.8Q518.5,930.2 504.8,903.6Q518.3,907.3 532,933.8M532,933.8Q535,960.7 524.1,965.1Q521.1,938.2 532,933.8M554.4,983.3Q545.5,948.7 553.8,933.2M553.8,933.2Q536,918.4 523.2,883.9M523.2,883.9Q521,909.4 504.8,903.6M504.8,903.6Q521.3,934.1 524.1,965.1M524.1,965.1Q536.4,958.5 554.4,983.3M788.8,939.8Q781.4,968.7 764.2,988.1Q771.6,959.2 788.8,939.8M788.8,939.8Q801.6,944.7 798.7,971.4Q786,966.5 788.8,939.8M788.8,939.8Q804,913.9 819.5,910.9Q804.3,936.8 788.8,939.8M788.8,939.8Q785.5,918.8 797.9,890.3Q801.2,911.2 788.8,939.8M788.8,939.8Q771.5,952.7 763.7,938Q781,925.1 788.8,939.8M764.2,988.1Q784.3,964.2 798.7,971.4M798.7,971.4Q801.2,940.6 819.5,910.9M819.5,910.9Q800.9,915.8 797.9,890.3M797.9,890.3Q783.9,924.1 763.7,938M763.7,938Q773.6,954 764.2,988.1M583,785.8Q556.9,795.1 546.4,782.7Q572.5,773.4 583,785.8M583,785.8Q570.4,808.8 544,823.5Q556.6,800.5 583,785.8M583,785.8Q601.3,790.7 595.4,812.2Q577.1,807.3 583,785.8M583,785.8Q606.9,765.8 629.6,764.5Q605.8,784.4 583,785.8M583,785.8Q579.4,768.6 599.3,746.2Q602.9,763.5 583,785.8M546.4,782.7Q559.9,796.3 544,823.5M544,823.5Q574.9,805.4 595.4,812.2M595.4,812.2Q601,787.4 629.6,764.5M629.6,764.5Q602.2,767.2 599.3,746.2M599.3,746.2Q576.8,772.8 546.4,782.7M741.6,789.5Q754.3,777.6 781,788.1Q768.3,800 741.6,789.5M741.6,789.5Q723.1,766.2 729,749.2Q747.5,772.5 741.6,789.5M741.6,789.5Q717.5,787 694.5,766Q718.6,768.4 741.6,789.5M741.6,789.5Q745.2,811.2 725.1,815.2Q721.5,793.5 741.6,789.5M741.6,789.5Q768,805.4 778.6,828.9Q752.2,813 741.6,789.5M781,788.1Q749.8,776.8 729,749.2M729,749.2Q723.4,770 694.5,766M694.5,766Q722.2,790.2 725.1,815.2M725.1,815.2Q747.9,809.4 778.6,828.9M778.6,828.9Q764.9,801.1 781,788.1M605.8,972Q622.1,1001.4 606.3,1022.2Q590.1,992.8 605.8,972M605.8,972Q639.7,982 657.8,1010.9Q623.9,1001 605.8,972M605.8,972Q623.4,952.6 657.3,960.8Q639.7,980.2 605.8,972M605.8,972Q589.5,942.7 605.3,921.9Q621.5,951.3 605.8,972M605.8,972Q571.9,962.1 553.8,933.2Q587.7,943.1 605.8,972M605.8,972Q588.2,991.4 554.4,983.3Q572,963.9 605.8,972M606.3,1022.2Q623.9,1002.8 657.8,1010.9M657.8,1010.9Q641.5,981.6 657.3,960.8M657.3,960.8Q623.4,950.8 605.3,921.9M605.3,921.9Q587.7,941.3 553.8,933.2M553.8,933.2Q570.1,962.5 554.4,983.3M554.4,983.3Q588.2,993.2 606.3,1022.2M710.7,974.5Q745.6,967.9 764.2,988.1Q729.4,994.7 710.7,974.5M710.7,974.5Q728.8,946.4 763.7,938Q745.5,966.1 710.7,974.5M710.7,974.5Q694,952.9 710.2,924.3Q726.9,945.9 710.7,974.5M710.7,974.5Q675.9,981 657.3,960.8Q692.1,954.2 710.7,974.5M710.7,974.5Q692.6,1002.6 657.8,1010.9Q675.9,982.8 710.7,974.5M710.7,974.5Q727.5,996 711.3,1024.6Q694.5,1003.1 710.7,974.5M764.2,988.1Q747.5,966.6 763.7,938M763.7,938Q728.8,944.6 710.2,924.3M710.2,924.3Q692.1,952.4 657.3,960.8M657.3,960.8Q674,982.3 657.8,1010.9M657.8,1010.9Q692.6,1004.4 711.3,1024.6M711.3,1024.6Q729.4,996.5 764.2,988.1M574.6,872.7Q601.1,886.2 605.3,921.9Q578.8,908.4 574.6,872.7M574.6,872.7Q598.8,850.1 626.1,861.4Q601.9,884 574.6,872.7M574.6,872.7Q572.3,836.6 595.4,812.2Q597.7,848.3 574.6,872.7M574.6,872.7Q548.1,859.2 544,823.5Q570.5,837 574.6,872.7M574.6,872.7Q550.4,895.3 523.2,883.9Q547.4,861.3 574.6,872.7M574.6,872.7Q576.9,908.8 553.8,933.2Q551.5,897.1 574.6,872.7M605.3,921.9Q603,885.8 626.1,861.4M626.1,861.4Q599.6,847.9 595.4,812.2M595.4,812.2Q571.2,834.8 544,823.5M544,823.5Q546.3,859.6 523.2,883.9M523.2,883.9Q549.7,897.5 553.8,933.2M553.8,933.2Q578,910.6 605.3,921.9M744.4,876.6Q750.2,841.1 778.6,828.9Q772.7,864.4 744.4,876.6M744.4,876.6Q721.2,851.2 725.1,815.2Q748.3,840.6 744.4,876.6M744.4,876.6Q715.3,886.7 690.9,862.9Q720,852.9 744.4,876.6M744.4,876.6Q738.5,912.1 710.2,924.3Q716,888.9 744.4,876.6M744.4,876.6Q767.6,902 763.7,938Q740.5,912.6 744.4,876.6M744.4,876.6Q773.4,866.6 797.9,890.3Q768.8,900.3 744.4,876.6M778.6,828.9Q749.5,838.9 725.1,815.2M725.1,815.2Q719.3,850.7 690.9,862.9M690.9,862.9Q714.1,888.4 710.2,924.3M710.2,924.3Q739.2,914.3 763.7,938M763.7,938Q769.5,902.5 797.9,890.3M797.9,890.3Q774.7,864.8 778.6,828.9M660.3,813.7Q662.6,782 694.5,766Q692.2,797.7 660.3,813.7M660.3,813.7Q629.6,796.2 629.6,764.5Q660.3,781.9 660.3,813.7M660.3,813.7Q627.3,828 595.4,812.2Q628.4,798 660.3,813.7M660.3,813.7Q658,845.4 626.1,861.4Q628.4,829.7 660.3,813.7M660.3,813.7Q690.9,831.2 690.9,862.9Q660.3,845.5 660.3,813.7M660.3,813.7Q693.3,799.5 725.1,815.2Q692.2,829.4 660.3,813.7M694.5,766Q661.5,780.2 629.6,764.5M629.6,764.5Q627.3,796.2 595.4,812.2M595.4,812.2Q626.1,829.7 626.1,861.4M626.1,861.4Q659.1,847.2 690.9,862.9M690.9,862.9Q693.3,831.2 725.1,815.2M725.1,815.2Q694.5,797.7 694.5,766M657.9,906.3Q688.8,901.5 710.2,924.3Q679.3,929.1 657.9,906.3M657.9,906.3Q662.6,875.7 690.9,862.9Q686.3,893.5 657.9,906.3M657.9,906.3Q629.9,892.2 626.1,861.4Q654.1,875.5 657.9,906.3M657.9,906.3Q636,928.1 605.3,921.9Q627.2,900.1 657.9,906.3M657.9,906.3Q672.4,933.9 657.3,960.8Q642.8,933.2 657.9,906.3M710.2,924.3Q684,898.6 690.9,862.9M690.9,862.9Q658.3,879.4 626.1,861.4M626.1,861.4Q632.1,897.4 605.3,921.9M605.3,921.9Q641.7,927.7 657.3,960.8M657.3,960.8Q673.7,928.4 710.2,924.3" fill="none" stroke="#e6e6e6" stroke-width="1.4" stroke-linejoin="round"/><g stroke="none"><path d="M1073.3,1021.7L1114.8,975.3L1145.2,941L1134.1,953.1L1092.6,999.5L1062.2,1033.8Z" fill="#a0a0a0" stroke="#a0a0a0" stroke-width="0.5"/><path d="M1103.7,987.4Q1096.6,995.5 1073.3,1021.7Q1097,995.1 1114.8,975.3Q1098.1,993.9 1103.7,987.4Z" fill="#979797"/><path d="M1103.7,987.4Q1120.4,968.9 1114.8,975.3Q1121.9,967.2 1145.2,941Q1121.5,967.7 1103.7,987.4Z" fill="#b3b3b3"/><path d="M1103.7,987.4Q1127.5,960.8 1145.2,941Q1128.6,959.6 1134.1,953.1Q1127.1,961.2 1103.7,987.4Z" fill="#c4c4c4"/><path d="M1103.7,987.4Q1110.8,979.3 1134.1,953.1Q1110.4,979.7 1092.6,999.5Q1109.3,981 1103.7,987.4Z" fill="#aaaaaa"/><path d="M1103.7,987.4Q1087,1005.9 1092.6,999.5Q1085.5,1007.6 1062.2,1033.8Q1085.9,1007.2 1103.7,987.4Z" fill="#979797"/><path d="M1103.7,987.4Q1080,1014.1 1062.2,1033.8Q1078.9,1015.3 1073.3,1021.7Q1080.4,1013.6 1103.7,987.4Z" fill="#979797"/><path d="M1103.7,987.4Q1096.6,995.5 1073.3,1021.7Q1080.4,1013.6 1103.7,987.4M1103.7,987.4Q1120.4,968.9 1114.8,975.3Q1098.1,993.9 1103.7,987.4M1103.7,987.4Q1127.5,960.8 1145.2,941Q1121.5,967.7 1103.7,987.4M1103.7,987.4Q1110.8,979.3 1134.1,953.1Q1127.1,961.2 1103.7,987.4M1103.7,987.4Q1087,1005.9 1092.6,999.5Q1109.3,981 1103.7,987.4M1103.7,987.4Q1080,1014.1 1062.2,1033.8Q1085.9,1007.2 1103.7,987.4M1073.3,1021.7Q1097,995.1 1114.8,975.3M1114.8,975.3Q1121.9,967.2 1145.2,941M1145.2,941Q1128.6,959.6 1134.1,953.1M1134.1,953.1Q1110.4,979.7 1092.6,999.5M1092.6,999.5Q1085.5,1007.6 1062.2,1033.8M1062.2,1033.8Q1078.9,1015.3 1073.3,1021.7" fill="none" stroke="#000" stroke-width="1.3" stroke-linejoin="round"/><path d="M842.4,930.4L872.9,987L896.5,1016.4L889.6,989.1L859.1,932.5L835.5,903.1Z" fill="#9d9d9d" stroke="#9d9d9d" stroke-width="0.5"/><path d="M866,959.8Q860,958.1 842.4,930.4Q860.2,959 872.9,987Q861.1,960.1 866,959.8Z" fill="#979797"/><path d="M866,959.8Q877.8,986.7 872.9,987Q878.9,988.8 896.5,1016.4Q878.7,987.8 866,959.8Z" fill="#979797"/><path d="M866,959.8Q883.8,988.4 896.5,1016.4Q884.7,989.5 889.6,989.1Q883.6,987.4 866,959.8Z" fill="#979797"/><path d="M866,959.8Q872,961.5 889.6,989.1Q871.8,960.5 859.1,932.5Q870.9,959.4 866,959.8Z" fill="#979797"/><path d="M866,959.8Q854.2,932.8 859.1,932.5Q853.1,930.8 835.5,903.1Q853.4,931.7 866,959.8Z" fill="#979797"/><path d="M866,959.8Q848.2,931.1 835.5,903.1Q847.3,930 842.4,930.4Q848.4,932.1 866,959.8Z" fill="#979797"/><path d="M866,959.8Q860,958.1 842.4,930.4Q848.4,932.1 866,959.8M866,959.8Q877.8,986.7 872.9,987Q861.1,960.1 866,959.8M866,959.8Q883.8,988.4 896.5,1016.4Q878.7,987.8 866,959.8M866,959.8Q872,961.5 889.6,989.1Q883.6,987.4 866,959.8M866,959.8Q854.2,932.8 859.1,932.5Q870.9,959.4 866,959.8M866,959.8Q848.2,931.1 835.5,903.1Q853.4,931.7 866,959.8M842.4,930.4Q860.2,959 872.9,987M872.9,987Q878.9,988.8 896.5,1016.4M896.5,1016.4Q884.7,989.5 889.6,989.1M889.6,989.1Q871.8,960.5 859.1,932.5M859.1,932.5Q853.1,930.8 835.5,903.1M835.5,903.1Q847.3,930 842.4,930.4" fill="none" stroke="#000" stroke-width="1.3" stroke-linejoin="round"/><path d="M1152.1,877.3L1145.2,850L1134.1,896.9L1134.1,953.1L1145.2,941Z" fill="#ededed" stroke="#ededed" stroke-width="0.5"/><path d="M1142.1,903.7Q1147.1,877.7 1152.1,877.3Q1146.1,879.3 1145.2,850Q1146.2,874.1 1142.1,903.7Z" fill="#f9f9f9"/><path d="M1142.1,903.7Q1141.1,879.6 1145.2,850Q1140.6,885.2 1134.1,896.9Q1139.7,885.7 1142.1,903.7Z" fill="#f3f3f3"/><path d="M1142.1,903.7Q1136.6,914.8 1134.1,896.9Q1137.2,916.7 1134.1,953.1Q1136.6,922.2 1142.1,903.7Z" fill="#d4d4d4"/><path d="M1142.1,903.7Q1139.7,934.6 1134.1,953.1Q1140.6,930.2 1145.2,941Q1141.2,933 1142.1,903.7Z" fill="#c6c6c6"/><path d="M1142.1,903.7Q1146.2,911.7 1145.2,941Q1146.1,907 1152.1,877.3Q1147.1,903.3 1142.1,903.7Z" fill="#dddddd"/><path d="M1142.1,903.7Q1147.1,877.7 1152.1,877.3Q1147.1,903.3 1142.1,903.7M1142.1,903.7Q1141.1,879.6 1145.2,850Q1146.2,874.1 1142.1,903.7M1142.1,903.7Q1136.6,914.8 1134.1,896.9Q1139.7,885.7 1142.1,903.7M1142.1,903.7Q1139.7,934.6 1134.1,953.1Q1136.6,922.2 1142.1,903.7M1142.1,903.7Q1146.2,911.7 1145.2,941Q1141.2,933 1142.1,903.7M1152.1,877.3Q1146.1,879.3 1145.2,850M1145.2,850Q1140.6,885.2 1134.1,896.9M1134.1,896.9Q1137.2,916.7 1134.1,953.1M1134.1,953.1Q1140.6,930.2 1145.2,941M1145.2,941Q1146.1,907 1152.1,877.3" fill="none" stroke="#000" stroke-width="1.3" stroke-linejoin="round"/><path d="M1023.9,748L1035,736L985.7,735.2L925.4,746.6L914.3,758.7L963.5,759.4Z" fill="#f0f0f0" stroke="#f0f0f0" stroke-width="0.5"/><path d="M974.6,747.3Q1010.3,744 1023.9,748Q1012.5,743.6 1035,736Q1010.7,743.6 974.6,747.3Z" fill="#ffffff"/><path d="M974.6,747.3Q998.9,739.7 1035,736Q999.3,739.2 985.7,735.2Q997.2,739.6 974.6,747.3Z" fill="#f7f7f7"/><path d="M974.6,747.3Q963.2,742.9 985.7,735.2Q961.5,742.9 925.4,746.6Q961.1,743.3 974.6,747.3Z" fill="#d7d7d7"/><path d="M974.6,747.3Q939,750.6 925.4,746.6Q936.8,751 914.3,758.7Q938.6,751 974.6,747.3Z" fill="#c2c2c2"/><path d="M974.6,747.3Q950.4,755 914.3,758.7Q950,755.4 963.5,759.4Q952.1,755 974.6,747.3Z" fill="#cdcdcd"/><path d="M974.6,747.3Q986.1,751.7 963.5,759.4Q987.8,751.7 1023.9,748Q988.2,751.3 974.6,747.3Z" fill="#ededed"/><path d="M974.6,747.3Q1010.3,744 1023.9,748Q988.2,751.3 974.6,747.3M974.6,747.3Q998.9,739.7 1035,736Q1010.7,743.6 974.6,747.3M974.6,747.3Q963.2,742.9 985.7,735.2Q997.2,739.6 974.6,747.3M974.6,747.3Q939,750.6 925.4,746.6Q961.1,743.3 974.6,747.3M974.6,747.3Q950.4,755 914.3,758.7Q938.6,751 974.6,747.3M974.6,747.3Q986.1,751.7 963.5,759.4Q952.1,755 974.6,747.3M1023.9,748Q1012.5,743.6 1035,736M1035,736Q999.3,739.2 985.7,735.2M985.7,735.2Q961.5,742.9 925.4,746.6M925.4,746.6Q936.8,751 914.3,758.7M914.3,758.7Q950,755.4 963.5,759.4M963.5,759.4Q987.8,751.7 1023.9,748" fill="none" stroke="#000" stroke-width="1.3" stroke-linejoin="round"/><path d="M1023.9,748L1073.2,783.5L1114.7,793.4L1091.1,764L1035,736Z" fill="#ffffff" stroke="#ffffff" stroke-width="0.5"/><path d="M1067.6,765Q1051.1,763.2 1023.9,748Q1055.9,765.4 1073.2,783.5Q1057.6,767.8 1067.6,765Z" fill="#ffffff"/><path d="M1067.6,765Q1083.2,780.6 1073.2,783.5Q1083.7,779.3 1114.7,793.4Q1088.6,781.9 1067.6,765Z" fill="#ffffff"/><path d="M1067.6,765Q1093.7,776.4 1114.7,793.4Q1089.2,773.3 1091.1,764Q1090.6,772.5 1067.6,765Z" fill="#ffffff"/><path d="M1067.6,765Q1068.1,756.4 1091.1,764Q1064.8,755.8 1035,736Q1060.8,752.7 1067.6,765Z" fill="#ffffff"/><path d="M1067.6,765Q1041.8,748.2 1035,736Q1044.3,750.9 1023.9,748Q1040.4,749.8 1067.6,765Z" fill="#ffffff"/><path d="M1067.6,765Q1051.1,763.2 1023.9,748Q1040.4,749.8 1067.6,765M1067.6,765Q1083.2,780.6 1073.2,783.5Q1057.6,767.8 1067.6,765M1067.6,765Q1093.7,776.4 1114.7,793.4Q1088.6,781.9 1067.6,765M1067.6,765Q1068.1,756.4 1091.1,764Q1090.6,772.5 1067.6,765M1067.6,765Q1041.8,748.2 1035,736Q1060.8,752.7 1067.6,765M1023.9,748Q1055.9,765.4 1073.2,783.5M1073.2,783.5Q1083.7,779.3 1114.7,793.4M1114.7,793.4Q1089.2,773.3 1091.1,764M1091.1,764Q1064.8,755.8 1035,736M1035,736Q1044.3,750.9 1023.9,748" fill="none" stroke="#000" stroke-width="1.3" stroke-linejoin="round"/><path d="M995,1017.9L938.8,989.9L889.6,989.1L896.5,1016.4L952.6,1044.4L1001.9,1045.2Z" fill="#9d9d9d" stroke="#9d9d9d" stroke-width="0.5"/><path d="M945.7,1017.2Q960.6,1009 995,1017.9Q960.4,1008 938.8,989.9Q958.6,1007.9 945.7,1017.2Z" fill="#979797"/><path d="M945.7,1017.2Q926,999.1 938.8,989.9Q924,998.1 889.6,989.1Q924.2,999 945.7,1017.2Z" fill="#979797"/><path d="M945.7,1017.2Q911.1,1007.3 889.6,989.1Q909.3,1007.2 896.5,1016.4Q911.4,1008.2 945.7,1017.2Z" fill="#979797"/><path d="M945.7,1017.2Q930.8,1025.3 896.5,1016.4Q931.1,1026.3 952.6,1044.4Q932.9,1026.4 945.7,1017.2Z" fill="#979797"/><path d="M945.7,1017.2Q965.5,1035.2 952.6,1044.4Q967.5,1036.2 1001.9,1045.2Q967.2,1035.3 945.7,1017.2Z" fill="#979797"/><path d="M945.7,1017.2Q980.3,1027 1001.9,1045.2Q982.1,1027.1 995,1017.9Q980.1,1026.1 945.7,1017.2Z" fill="#979797"/><path d="M945.7,1017.2Q960.6,1009 995,1017.9Q980.1,1026.1 945.7,1017.2M945.7,1017.2Q926,999.1 938.8,989.9Q958.6,1007.9 945.7,1017.2M945.7,1017.2Q911.1,1007.3 889.6,989.1Q924.2,999 945.7,1017.2M945.7,1017.2Q930.8,1025.3 896.5,1016.4Q911.4,1008.2 945.7,1017.2M945.7,1017.2Q965.5,1035.2 952.6,1044.4Q932.9,1026.4 945.7,1017.2M945.7,1017.2Q980.3,1027 1001.9,1045.2Q967.2,1035.3 945.7,1017.2M995,1017.9Q960.4,1008 938.8,989.9M938.8,989.9Q924,998.1 889.6,989.1M889.6,989.1Q909.3,1007.2 896.5,1016.4M896.5,1016.4Q931.1,1026.3 952.6,1044.4M952.6,1044.4Q967.5,1036.2 1001.9,1045.2M1001.9,1045.2Q982.1,1027.1 995,1017.9" fill="none" stroke="#000" stroke-width="1.3" stroke-linejoin="round"/><path d="M1001.9,1045.2L1062.2,1033.8L1092.6,999.5L1051.1,989.6L995,1017.9Z" fill="#9d9d9d" stroke="#9d9d9d" stroke-width="0.5"/><path d="M1040.5,1017.2Q1030.7,1033.4 1001.9,1045.2Q1035.3,1030.8 1062.2,1033.8Q1038.6,1031.9 1040.5,1017.2Z" fill="#979797"/><path d="M1040.5,1017.2Q1064.2,1019.1 1062.2,1033.8Q1063.1,1016.9 1092.6,999.5Q1068.1,1014.6 1040.5,1017.2Z" fill="#979797"/><path d="M1040.5,1017.2Q1065,1002.1 1092.6,999.5Q1059.7,1003.4 1051.1,989.6Q1059.6,1000.8 1040.5,1017.2Z" fill="#979797"/><path d="M1040.5,1017.2Q1032.1,1006 1051.1,989.6Q1029.8,1009 995,1017.9Q1024.7,1009.7 1040.5,1017.2Z" fill="#979797"/><path d="M1040.5,1017.2Q1010.8,1025.4 995,1017.9Q1014.8,1025.9 1001.9,1045.2Q1011.7,1028.9 1040.5,1017.2Z" fill="#979797"/><path d="M1040.5,1017.2Q1030.7,1033.4 1001.9,1045.2Q1011.7,1028.9 1040.5,1017.2M1040.5,1017.2Q1064.2,1019.1 1062.2,1033.8Q1038.6,1031.9 1040.5,1017.2M1040.5,1017.2Q1065,1002.1 1092.6,999.5Q1068.1,1014.6 1040.5,1017.2M1040.5,1017.2Q1032.1,1006 1051.1,989.6Q1059.6,1000.8 1040.5,1017.2M1040.5,1017.2Q1010.8,1025.4 995,1017.9Q1024.7,1009.7 1040.5,1017.2M1001.9,1045.2Q1035.3,1030.8 1062.2,1033.8M1062.2,1033.8Q1063.1,1016.9 1092.6,999.5M1092.6,999.5Q1059.7,1003.4 1051.1,989.6M1051.1,989.6Q1029.8,1009 995,1017.9M995,1017.9Q1014.8,1025.9 1001.9,1045.2" fill="none" stroke="#000" stroke-width="1.3" stroke-linejoin="round"/><path d="M889.5,898.1L896.4,834.4L872.8,805.1L842.4,839.4L835.5,903.1L859.1,932.5Z" fill="#9d9d9d" stroke="#9d9d9d" stroke-width="0.5"/><path d="M866,868.8Q883.5,868.3 889.5,898.1Q884.6,867 896.4,834.4Q883.8,866 866,868.8Z" fill="#979797"/><path d="M866,868.8Q878.6,837.2 896.4,834.4Q878.8,834.9 872.8,805.1Q877.7,836.1 866,868.8Z" fill="#979797"/><path d="M866,868.8Q861,837.7 872.8,805.1Q860.2,836.6 842.4,839.4Q859.9,838.9 866,868.8Z" fill="#979797"/><path d="M866,868.8Q848.4,869.2 842.4,839.4Q847.3,870.5 835.5,903.1Q848.2,871.5 866,868.8Z" fill="#979797"/><path d="M866,868.8Q853.3,900.3 835.5,903.1Q853.1,902.6 859.1,932.5Q854.2,901.4 866,868.8Z" fill="#979797"/><path d="M866,868.8Q870.9,899.8 859.1,932.5Q871.7,900.9 889.5,898.1Q872,898.6 866,868.8Z" fill="#979797"/><path d="M866,868.8Q883.5,868.3 889.5,898.1Q872,898.6 866,868.8M866,868.8Q878.6,837.2 896.4,834.4Q883.8,866 866,868.8M866,868.8Q861,837.7 872.8,805.1Q877.7,836.1 866,868.8M866,868.8Q848.4,869.2 842.4,839.4Q859.9,838.9 866,868.8M866,868.8Q853.3,900.3 835.5,903.1Q848.2,871.5 866,868.8M866,868.8Q870.9,899.8 859.1,932.5Q854.2,901.4 866,868.8M889.5,898.1Q884.6,867 896.4,834.4M896.4,834.4Q878.8,834.9 872.8,805.1M872.8,805.1Q860.2,836.6 842.4,839.4M842.4,839.4Q847.3,870.5 835.5,903.1M835.5,903.1Q853.1,902.6 859.1,932.5M859.1,932.5Q871.7,900.9 889.5,898.1" fill="none" stroke="#000" stroke-width="1.3" stroke-linejoin="round"/><path d="M1062.1,830.3L1092.6,887L1134.1,896.9L1145.2,850L1114.7,793.4L1073.2,783.5Z" fill="#ffffff" stroke="#ffffff" stroke-width="0.5"/><path d="M1103.6,840.2Q1085.9,851.3 1062.1,830.3Q1085.5,852.9 1092.6,887Q1087,853.3 1103.6,840.2Z" fill="#e3e3e3"/><path d="M1103.6,840.2Q1109.2,873.9 1092.6,887Q1110.3,875.9 1134.1,896.9Q1110.7,874.2 1103.6,840.2Z" fill="#e1e1e1"/><path d="M1103.6,840.2Q1127,862.8 1134.1,896.9Q1128.5,863.2 1145.2,850Q1127.4,861.1 1103.6,840.2Z" fill="#f4f4f4"/><path d="M1103.6,840.2Q1121.4,829.1 1145.2,850Q1121.8,827.4 1114.7,793.4Q1120.3,827.1 1103.6,840.2Z" fill="#ffffff"/><path d="M1103.6,840.2Q1098,806.5 1114.7,793.4Q1096.9,804.4 1073.2,783.5Q1096.5,806.1 1103.6,840.2Z" fill="#ffffff"/><path d="M1103.6,840.2Q1080.3,817.6 1073.2,783.5Q1078.8,817.2 1062.1,830.3Q1079.9,819.2 1103.6,840.2Z" fill="#fafafa"/><path d="M1103.6,840.2Q1085.9,851.3 1062.1,830.3Q1079.9,819.2 1103.6,840.2M1103.6,840.2Q1109.2,873.9 1092.6,887Q1087,853.3 1103.6,840.2M1103.6,840.2Q1127,862.8 1134.1,896.9Q1110.7,874.2 1103.6,840.2M1103.6,840.2Q1121.4,829.1 1145.2,850Q1127.4,861.1 1103.6,840.2M1103.6,840.2Q1098,806.5 1114.7,793.4Q1120.3,827.1 1103.6,840.2M1103.6,840.2Q1080.3,817.6 1073.2,783.5Q1096.5,806.1 1103.6,840.2M1062.1,830.3Q1085.5,852.9 1092.6,887M1092.6,887Q1110.3,875.9 1134.1,896.9M1134.1,896.9Q1128.5,863.2 1145.2,850M1145.2,850Q1121.8,827.4 1114.7,793.4M1114.7,793.4Q1096.9,804.4 1073.2,783.5M1073.2,783.5Q1078.8,817.2 1062.1,830.3" fill="none" stroke="#000" stroke-width="1.3" stroke-linejoin="round"/><path d="M952.5,806.2L963.5,759.4L914.3,758.7L872.8,805.1L896.4,834.4Z" fill="#b9b9b9" stroke="#b9b9b9" stroke-width="0.5"/><path d="M919.9,792.7Q945.6,788.9 952.5,806.2Q943.2,786.7 963.5,759.4Q947.1,782.8 919.9,792.7Z" fill="#cbcbcb"/><path d="M919.9,792.7Q936.3,769.4 963.5,759.4Q931.5,772.2 914.3,758.7Q929.9,769.3 919.9,792.7Z" fill="#cbcbcb"/><path d="M919.9,792.7Q904.3,782.1 914.3,758.7Q903.8,786.1 872.8,805.1Q898.9,788.2 919.9,792.7Z" fill="#a6a6a6"/><path d="M919.9,792.7Q893.8,809.6 872.8,805.1Q898.3,809.2 896.4,834.4Q896.9,813.4 919.9,792.7Z" fill="#979797"/><path d="M919.9,792.7Q919.4,813.8 896.4,834.4Q922.7,809.6 952.5,806.2Q926.7,810.1 919.9,792.7Z" fill="#a7a7a7"/><path d="M919.9,792.7Q945.6,788.9 952.5,806.2Q926.7,810.1 919.9,792.7M919.9,792.7Q936.3,769.4 963.5,759.4Q947.1,782.8 919.9,792.7M919.9,792.7Q904.3,782.1 914.3,758.7Q929.9,769.3 919.9,792.7M919.9,792.7Q893.8,809.6 872.8,805.1Q898.9,788.2 919.9,792.7M919.9,792.7Q919.4,813.8 896.4,834.4Q896.9,813.4 919.9,792.7M952.5,806.2Q943.2,786.7 963.5,759.4M963.5,759.4Q931.5,772.2 914.3,758.7M914.3,758.7Q903.8,786.1 872.8,805.1M872.8,805.1Q898.3,809.2 896.4,834.4M896.4,834.4Q922.7,809.6 952.5,806.2" fill="none" stroke="#000" stroke-width="1.3" stroke-linejoin="round"/><path d="M1092.6,999.5L1134.1,953.1L1134.1,896.9L1092.6,887L1051,933.4L1051.1,989.6Z" fill="#c0c0c0" stroke="#c0c0c0" stroke-width="0.5"/><path d="M1092.6,943.3Q1105.5,965.7 1092.6,999.5Q1106.9,966.1 1134.1,953.1Q1106.9,964.1 1092.6,943.3Z" fill="#ababab"/><path d="M1092.6,943.3Q1119.8,932.3 1134.1,953.1Q1121.3,930.6 1134.1,896.9Q1119.8,930.3 1092.6,943.3Z" fill="#d3d3d3"/><path d="M1092.6,943.3Q1106.9,909.8 1134.1,896.9Q1106.9,907.8 1092.6,887Q1105.4,909.5 1092.6,943.3Z" fill="#dedede"/><path d="M1092.6,943.3Q1079.7,920.8 1092.6,887Q1078.2,920.4 1051,933.4Q1078.2,922.4 1092.6,943.3Z" fill="#c2c2c2"/><path d="M1092.6,943.3Q1065.4,954.2 1051,933.4Q1063.9,955.9 1051.1,989.6Q1065.4,956.2 1092.6,943.3Z" fill="#9a9a9a"/><path d="M1092.6,943.3Q1078.3,976.7 1051.1,989.6Q1078.3,978.7 1092.6,999.5Q1079.8,977 1092.6,943.3Z" fill="#979797"/><path d="M1092.6,943.3Q1105.5,965.7 1092.6,999.5Q1079.8,977 1092.6,943.3M1092.6,943.3Q1119.8,932.3 1134.1,953.1Q1106.9,964.1 1092.6,943.3M1092.6,943.3Q1106.9,909.8 1134.1,896.9Q1119.8,930.3 1092.6,943.3M1092.6,943.3Q1079.7,920.8 1092.6,887Q1105.4,909.5 1092.6,943.3M1092.6,943.3Q1065.4,954.2 1051,933.4Q1078.2,922.4 1092.6,943.3M1092.6,943.3Q1078.3,976.7 1051.1,989.6Q1065.4,956.2 1092.6,943.3M1092.6,999.5Q1106.9,966.1 1134.1,953.1M1134.1,953.1Q1121.3,930.6 1134.1,896.9M1134.1,896.9Q1106.9,907.8 1092.6,887M1092.6,887Q1078.2,920.4 1051,933.4M1051,933.4Q1063.9,955.9 1051.1,989.6M1051.1,989.6Q1078.3,978.7 1092.6,999.5" fill="none" stroke="#000" stroke-width="1.3" stroke-linejoin="round"/><path d="M889.5,898.1L859.1,932.5L889.6,989.1L938.8,989.9L938.8,933.6Z" fill="#9d9d9d" stroke="#9d9d9d" stroke-width="0.5"/><path d="M903.2,948.6Q885.1,923.2 889.5,898.1Q885.6,928.3 859.1,932.5Q881.2,927.7 903.2,948.6Z" fill="#979797"/><path d="M903.2,948.6Q881.2,953.4 859.1,932.5Q885.6,956.1 889.6,989.1Q885.2,960.8 903.2,948.6Z" fill="#979797"/><path d="M903.2,948.6Q907.6,977 889.6,989.1Q909.9,973.6 938.8,989.9Q914.1,977.1 903.2,948.6Z" fill="#979797"/><path d="M903.2,948.6Q927.9,961.4 938.8,989.9Q925,956.6 938.8,933.6Q927.9,954 903.2,948.6Z" fill="#979797"/><path d="M903.2,948.6Q914.1,928.2 938.8,933.6Q909.9,928.6 889.5,898.1Q907.6,923.5 903.2,948.6Z" fill="#979797"/><path d="M903.2,948.6Q885.1,923.2 889.5,898.1Q907.6,923.5 903.2,948.6M903.2,948.6Q881.2,953.4 859.1,932.5Q881.2,927.7 903.2,948.6M903.2,948.6Q907.6,977 889.6,989.1Q885.2,960.8 903.2,948.6M903.2,948.6Q927.9,961.4 938.8,989.9Q914.1,977.1 903.2,948.6M903.2,948.6Q914.1,928.2 938.8,933.6Q927.9,954 903.2,948.6M889.5,898.1Q885.6,928.3 859.1,932.5M859.1,932.5Q885.6,956.1 889.6,989.1M889.6,989.1Q909.9,973.6 938.8,989.9M938.8,989.9Q925,956.6 938.8,933.6M938.8,933.6Q909.9,928.6 889.5,898.1" fill="none" stroke="#000" stroke-width="1.3" stroke-linejoin="round"/><path d="M963.5,759.4L952.5,806.2L1001.7,841.7L1062.1,830.3L1073.2,783.5L1023.9,748Z" fill="#f2f2f2" stroke="#f2f2f2" stroke-width="0.5"/><path d="M1012.8,794.9Q977.1,786.1 963.5,759.4Q975,786.5 952.5,806.2Q976.7,787.8 1012.8,794.9Z" fill="#cdcdcd"/><path d="M1012.8,794.9Q988.6,813.3 952.5,806.2Q988.2,814.9 1001.7,841.7Q990.3,814.5 1012.8,794.9Z" fill="#c3c3c3"/><path d="M1012.8,794.9Q1024.2,822 1001.7,841.7Q1026,823.3 1062.1,830.3Q1026.4,821.6 1012.8,794.9Z" fill="#d9d9d9"/><path d="M1012.8,794.9Q1048.5,803.6 1062.1,830.3Q1050.7,803.2 1073.2,783.5Q1048.9,801.9 1012.8,794.9Z" fill="#f9f9f9"/><path d="M1012.8,794.9Q1037.1,776.4 1073.2,783.5Q1037.5,774.8 1023.9,748Q1035.3,775.2 1012.8,794.9Z" fill="#ffffff"/><path d="M1012.8,794.9Q1001.4,767.7 1023.9,748Q999.6,766.4 963.5,759.4Q999.2,768.1 1012.8,794.9Z" fill="#ededed"/><path d="M1012.8,794.9Q977.1,786.1 963.5,759.4Q999.2,768.1 1012.8,794.9M1012.8,794.9Q988.6,813.3 952.5,806.2Q976.7,787.8 1012.8,794.9M1012.8,794.9Q1024.2,822 1001.7,841.7Q990.3,814.5 1012.8,794.9M1012.8,794.9Q1048.5,803.6 1062.1,830.3Q1026.4,821.6 1012.8,794.9M1012.8,794.9Q1037.1,776.4 1073.2,783.5Q1048.9,801.9 1012.8,794.9M1012.8,794.9Q1001.4,767.7 1023.9,748Q1035.3,775.2 1012.8,794.9M963.5,759.4Q975,786.5 952.5,806.2M952.5,806.2Q988.2,814.9 1001.7,841.7M1001.7,841.7Q1026,823.3 1062.1,830.3M1062.1,830.3Q1050.7,803.2 1073.2,783.5M1073.2,783.5Q1037.5,774.8 1023.9,748M1023.9,748Q999.6,766.4 963.5,759.4" fill="none" stroke="#000" stroke-width="1.3" stroke-linejoin="round"/><path d="M995,1017.9L1051.1,989.6L1051,933.4L994.9,905.4L938.8,933.6L938.8,989.9Z" fill="#9d9d9d" stroke="#9d9d9d" stroke-width="0.5"/><path d="M994.9,961.6Q1012.3,989.7 995,1017.9Q1014.3,990.7 1051.1,989.6Q1014.3,988.7 994.9,961.6Z" fill="#979797"/><path d="M994.9,961.6Q1031.7,962.6 1051.1,989.6Q1033.7,961.6 1051,933.4Q1031.7,960.5 994.9,961.6Z" fill="#979797"/><path d="M994.9,961.6Q1014.3,934.5 1051,933.4Q1014.3,932.5 994.9,905.4Q1012.3,933.5 994.9,961.6Z" fill="#a3a3a3"/><path d="M994.9,961.6Q977.6,933.5 994.9,905.4Q975.5,932.5 938.8,933.6Q975.6,934.6 994.9,961.6Z" fill="#979797"/><path d="M994.9,961.6Q958.2,960.7 938.8,933.6Q956.2,961.7 938.8,989.9Q958.2,962.7 994.9,961.6Z" fill="#979797"/><path d="M994.9,961.6Q975.6,988.8 938.8,989.9Q975.6,990.8 995,1017.9Q977.6,989.8 994.9,961.6Z" fill="#979797"/><path d="M994.9,961.6Q1012.3,989.7 995,1017.9Q977.6,989.8 994.9,961.6M994.9,961.6Q1031.7,962.6 1051.1,989.6Q1014.3,988.7 994.9,961.6M994.9,961.6Q1014.3,934.5 1051,933.4Q1031.7,960.5 994.9,961.6M994.9,961.6Q977.6,933.5 994.9,905.4Q1012.3,933.5 994.9,961.6M994.9,961.6Q958.2,960.7 938.8,933.6Q975.6,934.6 994.9,961.6M994.9,961.6Q975.6,988.8 938.8,989.9Q958.2,962.7 994.9,961.6M995,1017.9Q1014.3,990.7 1051.1,989.6M1051.1,989.6Q1033.7,961.6 1051,933.4M1051,933.4Q1014.3,932.5 994.9,905.4M994.9,905.4Q975.5,932.5 938.8,933.6M938.8,933.6Q956.2,961.7 938.8,989.9M938.8,989.9Q975.6,990.8 995,1017.9" fill="none" stroke="#000" stroke-width="1.3" stroke-linejoin="round"/><path d="M889.5,898.1L938.8,933.6L994.9,905.4L1001.7,841.7L952.5,806.2L896.4,834.4Z" fill="#9d9d9d" stroke="#9d9d9d" stroke-width="0.5"/><path d="M945.6,869.9Q924.2,899.4 889.5,898.1Q923.9,901.7 938.8,933.6Q925.9,900.6 945.6,869.9Z" fill="#979797"/><path d="M945.6,869.9Q958.5,902.9 938.8,933.6Q960.3,904.2 994.9,905.4Q960.5,901.9 945.6,869.9Z" fill="#979797"/><path d="M945.6,869.9Q980,873.4 994.9,905.4Q982,872.4 1001.7,841.7Q980.3,871.1 945.6,869.9Z" fill="#b1b1b1"/><path d="M945.6,869.9Q967.1,840.5 1001.7,841.7Q967.4,838.2 952.5,806.2Q965.4,839.2 945.6,869.9Z" fill="#c1c1c1"/><path d="M945.6,869.9Q932.8,836.9 952.5,806.2Q931,835.7 896.4,834.4Q930.7,838 945.6,869.9Z" fill="#a6a6a6"/><path d="M945.6,869.9Q911.3,866.4 896.4,834.4Q909.3,867.4 889.5,898.1Q911,868.7 945.6,869.9Z" fill="#979797"/><path d="M945.6,869.9Q924.2,899.4 889.5,898.1Q911,868.7 945.6,869.9M945.6,869.9Q958.5,902.9 938.8,933.6Q925.9,900.6 945.6,869.9M945.6,869.9Q980,873.4 994.9,905.4Q960.5,901.9 945.6,869.9M945.6,869.9Q967.1,840.5 1001.7,841.7Q980.3,871.1 945.6,869.9M945.6,869.9Q932.8,836.9 952.5,806.2Q965.4,839.2 945.6,869.9M945.6,869.9Q911.3,866.4 896.4,834.4Q930.7,838 945.6,869.9M889.5,898.1Q923.9,901.7 938.8,933.6M938.8,933.6Q960.3,904.2 994.9,905.4M994.9,905.4Q982,872.4 1001.7,841.7M1001.7,841.7Q967.4,838.2 952.5,806.2M952.5,806.2Q931,835.7 896.4,834.4M896.4,834.4Q909.3,867.4 889.5,898.1" fill="none" stroke="#000" stroke-width="1.3" stroke-linejoin="round"/><path d="M994.9,905.4L1051,933.4L1092.6,887L1062.1,830.3L1001.7,841.7Z" fill="#cecece" stroke="#cecece" stroke-width="0.5"/><path d="M1040.5,879.6Q1024.6,905.4 994.9,905.4Q1029.8,903.9 1051,933.4Q1032,909.1 1040.5,879.6Z" fill="#a6a6a6"/><path d="M1040.5,879.6Q1059.5,903.9 1051,933.4Q1059.6,898.3 1092.6,887Q1065,897.8 1040.5,879.6Z" fill="#c2c2c2"/><path d="M1040.5,879.6Q1068.1,868.8 1092.6,887Q1063,866.8 1062.1,830.3Q1064.1,861.3 1040.5,879.6Z" fill="#e1e1e1"/><path d="M1040.5,879.6Q1038.5,848.6 1062.1,830.3Q1035.2,853 1001.7,841.7Q1030.6,850 1040.5,879.6Z" fill="#d8d8d8"/><path d="M1040.5,879.6Q1011.6,871.2 1001.7,841.7Q1014.7,875.9 994.9,905.4Q1010.7,879.6 1040.5,879.6Z" fill="#b3b3b3"/><path d="M1040.5,879.6Q1024.6,905.4 994.9,905.4Q1010.7,879.6 1040.5,879.6M1040.5,879.6Q1059.5,903.9 1051,933.4Q1032,909.1 1040.5,879.6M1040.5,879.6Q1068.1,868.8 1092.6,887Q1065,897.8 1040.5,879.6M1040.5,879.6Q1038.5,848.6 1062.1,830.3Q1064.1,861.3 1040.5,879.6M1040.5,879.6Q1011.6,871.2 1001.7,841.7Q1030.6,850 1040.5,879.6M994.9,905.4Q1029.8,903.9 1051,933.4M1051,933.4Q1059.6,898.3 1092.6,887M1092.6,887Q1063,866.8 1062.1,830.3M1062.1,830.3Q1035.2,853 1001.7,841.7M1001.7,841.7Q1014.7,875.9 994.9,905.4" fill="none" stroke="#000" stroke-width="1.3" stroke-linejoin="round"/></g><g stroke="none"><path d="M1283.3,900.6Q1258.8,882.4 1231.2,893.2Q1255.7,911.4 1283.3,900.6ZM1283.3,900.6Q1291.8,871.1 1272.8,846.8Q1264.3,876.3 1283.3,900.6ZM1283.3,900.6Q1313.1,900.6 1328.9,874.8Q1299.2,874.8 1283.3,900.6ZM1283.3,900.6Q1293.2,930.2 1322.1,938.5Q1312.2,909 1283.3,900.6ZM1283.3,900.6Q1259.7,918.9 1261.7,949.9Q1285.3,931.6 1283.3,900.6ZM1231.2,893.2Q1264.2,881.9 1272.8,846.8ZM1272.8,846.8Q1294,876.3 1328.9,874.8ZM1328.9,874.8Q1309.1,904.3 1322.1,938.5ZM1322.1,938.5Q1288.6,927.2 1261.7,949.9ZM1261.7,949.9Q1260.8,913.4 1231.2,893.2Z" fill="#a9a9a9" stroke="#a9a9a9" stroke-width="0.7"/><path d="M1283.3,900.6Q1258.8,882.4 1231.2,893.2Q1255.7,911.4 1283.3,900.6M1283.3,900.6Q1291.8,871.1 1272.8,846.8Q1264.3,876.3 1283.3,900.6M1283.3,900.6Q1313.1,900.6 1328.9,874.8Q1299.2,874.8 1283.3,900.6M1283.3,900.6Q1293.2,930.2 1322.1,938.5Q1312.2,909 1283.3,900.6M1283.3,900.6Q1259.7,918.9 1261.7,949.9Q1285.3,931.6 1283.3,900.6M1231.2,893.2Q1264.2,881.9 1272.8,846.8M1272.8,846.8Q1294,876.3 1328.9,874.8M1328.9,874.8Q1309.1,904.3 1322.1,938.5M1322.1,938.5Q1288.6,927.2 1261.7,949.9M1261.7,949.9Q1260.8,913.4 1231.2,893.2" fill="none" stroke="#000" stroke-width="1.3" stroke-linejoin="round"/><path d="M1378.2,910.3Q1343.5,909.1 1322.1,938.5Q1356.7,939.7 1378.2,910.3ZM1378.2,910.3Q1363.3,878.3 1328.9,874.8Q1343.8,906.8 1378.2,910.3ZM1378.2,910.3Q1397.9,879.6 1385,846.6Q1365.3,877.3 1378.2,910.3ZM1378.2,910.3Q1412.8,911.5 1434.3,882.1Q1399.6,880.8 1378.2,910.3ZM1378.2,910.3Q1393.1,942.2 1427.4,945.8Q1412.5,913.8 1378.2,910.3ZM1378.2,910.3Q1358.4,941 1371.3,974Q1391,943.3 1378.2,910.3ZM1322.1,938.5Q1341.8,907.8 1328.9,874.8ZM1328.9,874.8Q1363.5,876 1385,846.6ZM1385,846.6Q1399.9,878.5 1434.3,882.1ZM1434.3,882.1Q1414.5,912.8 1427.4,945.8ZM1427.4,945.8Q1392.8,944.5 1371.3,974ZM1371.3,974Q1356.4,942 1322.1,938.5Z" fill="#818181" stroke="#818181" stroke-width="0.7"/><path d="M1378.2,910.3Q1343.5,909.1 1322.1,938.5Q1356.7,939.7 1378.2,910.3M1378.2,910.3Q1363.3,878.3 1328.9,874.8Q1343.8,906.8 1378.2,910.3M1378.2,910.3Q1397.9,879.6 1385,846.6Q1365.3,877.3 1378.2,910.3M1378.2,910.3Q1412.8,911.5 1434.3,882.1Q1399.6,880.8 1378.2,910.3M1378.2,910.3Q1393.1,942.2 1427.4,945.8Q1412.5,913.8 1378.2,910.3M1378.2,910.3Q1358.4,941 1371.3,974Q1391,943.3 1378.2,910.3M1322.1,938.5Q1341.8,907.8 1328.9,874.8M1328.9,874.8Q1363.5,876 1385,846.6M1385,846.6Q1399.9,878.5 1434.3,882.1M1434.3,882.1Q1414.5,912.8 1427.4,945.8M1427.4,945.8Q1392.8,944.5 1371.3,974M1371.3,974Q1356.4,942 1322.1,938.5" fill="none" stroke="#000" stroke-width="1.3" stroke-linejoin="round"/><path d="M1328.9,818.6Q1292.1,819.7 1272.8,846.8Q1309.5,845.7 1328.9,818.6ZM1328.9,818.6Q1309.5,791.5 1272.7,790.6Q1292.1,817.6 1328.9,818.6ZM1328.9,818.6Q1346.2,790.4 1328.8,762.3Q1311.5,790.5 1328.9,818.6ZM1328.9,818.6Q1365.6,817.5 1385,790.3Q1348.2,791.4 1328.9,818.6ZM1328.9,818.6Q1348.2,845.6 1385,846.6Q1365.6,819.5 1328.9,818.6ZM1328.9,818.6Q1311.5,846.7 1328.9,874.8Q1346.2,846.7 1328.9,818.6ZM1272.8,846.8Q1290.1,818.6 1272.7,790.6ZM1272.7,790.6Q1309.5,789.5 1328.8,762.3ZM1328.8,762.3Q1348.2,789.4 1385,790.3ZM1385,790.3Q1367.6,818.5 1385,846.6ZM1385,846.6Q1348.3,847.7 1328.9,874.8ZM1328.9,874.8Q1309.5,847.7 1272.8,846.8Z" fill="#818181" stroke="#818181" stroke-width="0.7"/><path d="M1328.9,818.6Q1292.1,819.7 1272.8,846.8Q1309.5,845.7 1328.9,818.6M1328.9,818.6Q1309.5,791.5 1272.7,790.6Q1292.1,817.6 1328.9,818.6M1328.9,818.6Q1346.2,790.4 1328.8,762.3Q1311.5,790.5 1328.9,818.6M1328.9,818.6Q1365.6,817.5 1385,790.3Q1348.2,791.4 1328.9,818.6M1328.9,818.6Q1348.2,845.6 1385,846.6Q1365.6,819.5 1328.9,818.6M1328.9,818.6Q1311.5,846.7 1328.9,874.8Q1346.2,846.7 1328.9,818.6M1272.8,846.8Q1290.1,818.6 1272.7,790.6M1272.7,790.6Q1309.5,789.5 1328.8,762.3M1328.8,762.3Q1348.2,789.4 1385,790.3M1385,790.3Q1367.6,818.5 1385,846.6M1385,846.6Q1348.3,847.7 1328.9,874.8M1328.9,874.8Q1309.5,847.7 1272.8,846.8" fill="none" stroke="#000" stroke-width="1.3" stroke-linejoin="round"/><path d="M1311,985.3Q1333.5,965.7 1322.1,938.5Q1299.6,958.2 1311,985.3ZM1311,985.3Q1347.1,992.4 1371.3,974Q1335.2,966.9 1311,985.3ZM1311,985.3Q1324.6,1012.1 1360.3,1020.8Q1346.7,994.1 1311,985.3ZM1311,985.3Q1288.5,1005 1299.9,1032.2Q1322.4,1012.5 1311,985.3ZM1311,985.3Q1274.9,978.3 1250.6,996.7Q1286.7,1003.8 1311,985.3ZM1311,985.3Q1297.4,958.6 1261.7,949.9Q1275.3,976.6 1311,985.3ZM1322.1,938.5Q1335.6,965.3 1371.3,974ZM1371.3,974Q1348.8,993.7 1360.3,1020.8ZM1360.3,1020.8Q1324.2,1013.8 1299.9,1032.2ZM1299.9,1032.2Q1286.3,1005.4 1250.6,996.7ZM1250.6,996.7Q1273.1,977 1261.7,949.9ZM1261.7,949.9Q1297.8,956.9 1322.1,938.5Z" fill="#c6c6c6" stroke="#c6c6c6" stroke-width="0.7"/><path d="M1311,985.3Q1333.5,965.7 1322.1,938.5Q1299.6,958.2 1311,985.3M1311,985.3Q1347.1,992.4 1371.3,974Q1335.2,966.9 1311,985.3M1311,985.3Q1324.6,1012.1 1360.3,1020.8Q1346.7,994.1 1311,985.3M1311,985.3Q1288.5,1005 1299.9,1032.2Q1322.4,1012.5 1311,985.3M1311,985.3Q1274.9,978.3 1250.6,996.7Q1286.7,1003.8 1311,985.3M1311,985.3Q1297.4,958.6 1261.7,949.9Q1275.3,976.6 1311,985.3M1322.1,938.5Q1335.6,965.3 1371.3,974M1371.3,974Q1348.8,993.7 1360.3,1020.8M1360.3,1020.8Q1324.2,1013.8 1299.9,1032.2M1299.9,1032.2Q1286.3,1005.4 1250.6,996.7M1250.6,996.7Q1273.1,977 1261.7,949.9M1261.7,949.9Q1297.8,956.9 1322.1,938.5" fill="none" stroke="#000" stroke-width="1.3" stroke-linejoin="round"/><path d="M1420.6,831.6Q1416.2,856.7 1434.3,882.1Q1438.7,857 1420.6,831.6ZM1420.6,831.6Q1395.9,826.2 1385,846.6Q1409.7,852 1420.6,831.6ZM1420.6,831.6Q1409.7,803.1 1385,790.3Q1395.9,818.8 1420.6,831.6ZM1420.6,831.6Q1438.6,819.4 1434.2,791.1Q1416.2,803.2 1420.6,831.6ZM1420.6,831.6Q1442.6,852.5 1464.7,847.7Q1442.6,826.8 1420.6,831.6ZM1434.3,882.1Q1413.9,851.6 1385,846.6ZM1385,846.6Q1398.8,823.6 1385,790.3ZM1385,790.3Q1413.9,806.6 1434.2,791.1ZM1434.2,791.1Q1438.2,824.1 1464.7,847.7ZM1464.7,847.7Q1438.2,851.9 1434.3,882.1Z" fill="#818181" stroke="#818181" stroke-width="0.7"/><path d="M1420.6,831.6Q1416.2,856.7 1434.3,882.1Q1438.7,857 1420.6,831.6M1420.6,831.6Q1395.9,826.2 1385,846.6Q1409.7,852 1420.6,831.6M1420.6,831.6Q1409.7,803.1 1385,790.3Q1395.9,818.8 1420.6,831.6M1420.6,831.6Q1438.6,819.4 1434.2,791.1Q1416.2,803.2 1420.6,831.6M1420.6,831.6Q1442.6,852.5 1464.7,847.7Q1442.6,826.8 1420.6,831.6M1434.3,882.1Q1413.9,851.6 1385,846.6M1385,846.6Q1398.8,823.6 1385,790.3M1385,790.3Q1413.9,806.6 1434.2,791.1M1434.2,791.1Q1438.2,824.1 1464.7,847.7M1464.7,847.7Q1438.2,851.9 1434.3,882.1" fill="none" stroke="#000" stroke-width="1.3" stroke-linejoin="round"/><path d="M1231.2,836.9Q1216.9,816.1 1189.7,827.1Q1204,847.9 1231.2,836.9ZM1231.2,836.9Q1244,803.2 1231.2,780.7Q1218.3,814.5 1231.2,836.9ZM1231.2,836.9Q1258.4,824 1272.7,790.6Q1245.5,803.5 1231.2,836.9ZM1231.2,836.9Q1245.6,857.8 1272.8,846.8Q1258.4,826 1231.2,836.9ZM1231.2,836.9Q1218.4,870.7 1231.2,893.2Q1244.1,859.4 1231.2,836.9ZM1231.2,836.9Q1204,849.9 1189.7,883.3Q1216.9,870.4 1231.2,836.9ZM1189.7,827.1Q1216.9,814.1 1231.2,780.7ZM1231.2,780.7Q1245.5,801.5 1272.7,790.6ZM1272.7,790.6Q1259.9,824.3 1272.8,846.8ZM1272.8,846.8Q1245.6,859.8 1231.2,893.2ZM1231.2,893.2Q1216.9,872.4 1189.7,883.3ZM1189.7,883.3Q1202.5,849.6 1189.7,827.1Z" fill="#9d9d9d" stroke="#9d9d9d" stroke-width="0.7"/><path d="M1231.2,836.9Q1216.9,816.1 1189.7,827.1Q1204,847.9 1231.2,836.9M1231.2,836.9Q1244,803.2 1231.2,780.7Q1218.3,814.5 1231.2,836.9M1231.2,836.9Q1258.4,824 1272.7,790.6Q1245.5,803.5 1231.2,836.9M1231.2,836.9Q1245.6,857.8 1272.8,846.8Q1258.4,826 1231.2,836.9M1231.2,836.9Q1218.4,870.7 1231.2,893.2Q1244.1,859.4 1231.2,836.9M1231.2,836.9Q1204,849.9 1189.7,883.3Q1216.9,870.4 1231.2,836.9M1189.7,827.1Q1216.9,814.1 1231.2,780.7M1231.2,780.7Q1245.5,801.5 1272.7,790.6M1272.7,790.6Q1259.9,824.3 1272.8,846.8M1272.8,846.8Q1245.6,859.8 1231.2,893.2M1231.2,893.2Q1216.9,872.4 1189.7,883.3M1189.7,883.3Q1202.5,849.6 1189.7,827.1" fill="none" stroke="#000" stroke-width="1.3" stroke-linejoin="round"/><path d="M1403.9,987.5Q1424.9,992 1451,975.1Q1430,970.6 1403.9,987.5ZM1403.9,987.5Q1393.9,1010.9 1409.5,1021.5Q1419.5,998.1 1403.9,987.5ZM1403.9,987.5Q1376.7,997.4 1360.3,1020.8Q1387.5,1010.8 1403.9,987.5ZM1403.9,987.5Q1397.1,970.1 1371.3,974Q1378.2,991.3 1403.9,987.5ZM1403.9,987.5Q1426.9,966.8 1427.4,945.8Q1404.4,966.4 1403.9,987.5ZM1451,975.1Q1420,994.1 1409.5,1021.5ZM1409.5,1021.5Q1392.3,1008 1360.3,1020.8ZM1360.3,1020.8Q1380.6,993.5 1371.3,974ZM1371.3,974Q1401.1,970.6 1427.4,945.8ZM1427.4,945.8Q1425.5,971 1451,975.1Z" fill="#979797" stroke="#979797" stroke-width="0.7"/><path d="M1403.9,987.5Q1424.9,992 1451,975.1Q1430,970.6 1403.9,987.5M1403.9,987.5Q1393.9,1010.9 1409.5,1021.5Q1419.5,998.1 1403.9,987.5M1403.9,987.5Q1376.7,997.4 1360.3,1020.8Q1387.5,1010.8 1403.9,987.5M1403.9,987.5Q1397.1,970.1 1371.3,974Q1378.2,991.3 1403.9,987.5M1403.9,987.5Q1426.9,966.8 1427.4,945.8Q1404.4,966.4 1403.9,987.5M1451,975.1Q1420,994.1 1409.5,1021.5M1409.5,1021.5Q1392.3,1008 1360.3,1020.8M1360.3,1020.8Q1380.6,993.5 1371.3,974M1371.3,974Q1401.1,970.6 1427.4,945.8M1427.4,945.8Q1425.5,971 1451,975.1" fill="none" stroke="#000" stroke-width="1.3" stroke-linejoin="round"/><path d="M1220.2,940Q1236.8,926.9 1231.2,893.2Q1214.6,906.3 1220.2,940ZM1220.2,940Q1243.9,961 1261.7,949.9Q1237.9,928.9 1220.2,940ZM1220.2,940Q1227.3,974.1 1250.6,996.7Q1243.5,962.6 1220.2,940ZM1220.2,940Q1203.5,953.1 1209.1,986.8Q1225.8,973.7 1220.2,940ZM1220.2,940Q1196.4,919.1 1178.6,930.2Q1202.4,951.1 1220.2,940ZM1220.2,940Q1213.1,906 1189.7,883.3Q1196.8,917.4 1220.2,940ZM1231.2,893.2Q1238.3,927.3 1261.7,949.9ZM1261.7,949.9Q1245,963 1250.6,996.7ZM1250.6,996.7Q1226.9,975.8 1209.1,986.8ZM1209.1,986.8Q1202,952.8 1178.6,930.2ZM1178.6,930.2Q1195.3,917 1189.7,883.3ZM1189.7,883.3Q1213.5,904.3 1231.2,893.2Z" fill="#d8d8d8" stroke="#d8d8d8" stroke-width="0.7"/><path d="M1220.2,940Q1236.8,926.9 1231.2,893.2Q1214.6,906.3 1220.2,940M1220.2,940Q1243.9,961 1261.7,949.9Q1237.9,928.9 1220.2,940M1220.2,940Q1227.3,974.1 1250.6,996.7Q1243.5,962.6 1220.2,940M1220.2,940Q1203.5,953.1 1209.1,986.8Q1225.8,973.7 1220.2,940M1220.2,940Q1196.4,919.1 1178.6,930.2Q1202.4,951.1 1220.2,940M1220.2,940Q1213.1,906 1189.7,883.3Q1196.8,917.4 1220.2,940M1231.2,893.2Q1238.3,927.3 1261.7,949.9M1261.7,949.9Q1245,963 1250.6,996.7M1250.6,996.7Q1226.9,975.8 1209.1,986.8M1209.1,986.8Q1202,952.8 1178.6,930.2M1178.6,930.2Q1195.3,917 1189.7,883.3M1189.7,883.3Q1213.5,904.3 1231.2,893.2" fill="none" stroke="#000" stroke-width="1.3" stroke-linejoin="round"/><path d="M1457.8,911.4Q1451.8,881.6 1434.3,882.1Q1440.3,911.9 1457.8,911.4ZM1457.8,911.4Q1469.6,878.8 1464.7,847.7Q1452.9,880.4 1457.8,911.4ZM1457.8,911.4Q1475.6,908.7 1488.3,877.1Q1470.5,879.9 1457.8,911.4ZM1457.8,911.4Q1463.9,941.3 1481.4,940.8Q1475.4,911 1457.8,911.4ZM1457.8,911.4Q1446.1,944.1 1451,975.1Q1462.8,942.5 1457.8,911.4ZM1457.8,911.4Q1440,914.2 1427.4,945.8Q1445.2,943 1457.8,911.4ZM1434.3,882.1Q1452.1,879.3 1464.7,847.7ZM1464.7,847.7Q1470.7,877.6 1488.3,877.1ZM1488.3,877.1Q1476.5,909.7 1481.4,940.8ZM1481.4,940.8Q1463.6,943.6 1451,975.1ZM1451,975.1Q1445,945.3 1427.4,945.8ZM1427.4,945.8Q1439.2,913.2 1434.3,882.1Z" fill="#818181" stroke="#818181" stroke-width="0.7"/><path d="M1457.8,911.4Q1451.8,881.6 1434.3,882.1Q1440.3,911.9 1457.8,911.4M1457.8,911.4Q1469.6,878.8 1464.7,847.7Q1452.9,880.4 1457.8,911.4M1457.8,911.4Q1475.6,908.7 1488.3,877.1Q1470.5,879.9 1457.8,911.4M1457.8,911.4Q1463.9,941.3 1481.4,940.8Q1475.4,911 1457.8,911.4M1457.8,911.4Q1446.1,944.1 1451,975.1Q1462.8,942.5 1457.8,911.4M1457.8,911.4Q1440,914.2 1427.4,945.8Q1445.2,943 1457.8,911.4M1434.3,882.1Q1452.1,879.3 1464.7,847.7M1464.7,847.7Q1470.7,877.6 1488.3,877.1M1488.3,877.1Q1476.5,909.7 1481.4,940.8M1481.4,940.8Q1463.6,943.6 1451,975.1M1451,975.1Q1445,945.3 1427.4,945.8M1427.4,945.8Q1439.2,913.2 1434.3,882.1" fill="none" stroke="#000" stroke-width="1.3" stroke-linejoin="round"/><path d="M1283.3,763Q1255.7,765.6 1231.2,780.7Q1258.8,778.1 1283.3,763ZM1283.3,763Q1285.2,748.3 1261.6,746.4Q1259.6,761.1 1283.3,763ZM1283.3,763Q1312.1,751.3 1321.9,735Q1293.1,746.8 1283.3,763ZM1283.3,763Q1299.1,770.5 1328.8,762.3Q1313,754.8 1283.3,763ZM1283.3,763Q1264.2,779.4 1272.7,790.6Q1291.7,774.2 1283.3,763ZM1231.2,780.7Q1260.7,763.3 1261.6,746.4ZM1261.6,746.4Q1288.5,749.4 1321.9,735ZM1321.9,735Q1309,754.3 1328.8,762.3ZM1328.8,762.3Q1294,771.2 1272.7,790.6ZM1272.7,790.6Q1264.1,776.8 1231.2,780.7Z" fill="#818181" stroke="#818181" stroke-width="0.7"/><path d="M1283.3,763Q1255.7,765.6 1231.2,780.7Q1258.8,778.1 1283.3,763M1283.3,763Q1285.2,748.3 1261.6,746.4Q1259.6,761.1 1283.3,763M1283.3,763Q1312.1,751.3 1321.9,735Q1293.1,746.8 1283.3,763M1283.3,763Q1299.1,770.5 1328.8,762.3Q1313,754.8 1283.3,763M1283.3,763Q1264.2,779.4 1272.7,790.6Q1291.7,774.2 1283.3,763M1231.2,780.7Q1260.7,763.3 1261.6,746.4M1261.6,746.4Q1288.5,749.4 1321.9,735M1321.9,735Q1309,754.3 1328.8,762.3M1328.8,762.3Q1294,771.2 1272.7,790.6M1272.7,790.6Q1264.1,776.8 1231.2,780.7" fill="none" stroke="#000" stroke-width="1.3" stroke-linejoin="round"/><path d="M1378.1,763Q1399.6,781.2 1434.2,791.1Q1412.7,772.9 1378.1,763ZM1378.1,763Q1365.2,772.3 1385,790.3Q1397.8,781.1 1378.1,763ZM1378.1,763Q1343.7,754.1 1328.8,762.3Q1363.2,771.2 1378.1,763ZM1378.1,763Q1356.6,744.9 1321.9,735Q1343.5,753.2 1378.1,763ZM1378.1,763Q1390.9,753.8 1371.2,735.8Q1358.3,745 1378.1,763ZM1378.1,763Q1412.4,772 1427.3,763.8Q1393,754.9 1378.1,763ZM1434.2,791.1Q1399.8,782.1 1385,790.3ZM1385,790.3Q1363.4,772.2 1328.8,762.3ZM1328.8,762.3Q1341.7,753.1 1321.9,735ZM1321.9,735Q1356.3,744 1371.2,735.8ZM1371.2,735.8Q1392.7,753.9 1427.3,763.8ZM1427.3,763.8Q1414.5,773 1434.2,791.1Z" fill="#818181" stroke="#818181" stroke-width="0.7"/><path d="M1378.1,763Q1399.6,781.2 1434.2,791.1Q1412.7,772.9 1378.1,763M1378.1,763Q1365.2,772.3 1385,790.3Q1397.8,781.1 1378.1,763M1378.1,763Q1343.7,754.1 1328.8,762.3Q1363.2,771.2 1378.1,763M1378.1,763Q1356.6,744.9 1321.9,735Q1343.5,753.2 1378.1,763M1378.1,763Q1390.9,753.8 1371.2,735.8Q1358.3,745 1378.1,763M1378.1,763Q1412.4,772 1427.3,763.8Q1393,754.9 1378.1,763M1434.2,791.1Q1399.8,782.1 1385,790.3M1385,790.3Q1363.4,772.2 1328.8,762.3M1328.8,762.3Q1341.7,753.1 1321.9,735M1321.9,735Q1356.3,744 1371.2,735.8M1371.2,735.8Q1392.7,753.9 1427.3,763.8M1427.3,763.8Q1414.5,773 1434.2,791.1" fill="none" stroke="#000" stroke-width="1.3" stroke-linejoin="round"/><path d="M1256.2,1015.2Q1266.2,1012.4 1250.6,996.7Q1240.6,999.6 1256.2,1015.2ZM1256.2,1015.2Q1283.4,1030.4 1299.9,1032.2Q1272.7,1017 1256.2,1015.2ZM1256.2,1015.2Q1263,1027.5 1288.8,1044.2Q1282,1032 1256.2,1015.2ZM1256.2,1015.2Q1233.2,1007.7 1232.7,1016.2Q1255.7,1023.8 1256.2,1015.2ZM1256.2,1015.2Q1235.2,998.3 1209.1,986.8Q1230.1,1003.8 1256.2,1015.2ZM1250.6,996.7Q1267.9,1014.8 1299.9,1032.2ZM1299.9,1032.2Q1279.5,1029.3 1288.8,1044.2ZM1288.8,1044.2Q1259,1024.4 1232.7,1016.2ZM1232.7,1016.2Q1234.6,1006.9 1209.1,986.8ZM1209.1,986.8Q1240.1,1000.9 1250.6,996.7Z" fill="#e8e8e8" stroke="#e8e8e8" stroke-width="0.7"/><path d="M1256.2,1015.2Q1266.2,1012.4 1250.6,996.7Q1240.6,999.6 1256.2,1015.2M1256.2,1015.2Q1283.4,1030.4 1299.9,1032.2Q1272.7,1017 1256.2,1015.2M1256.2,1015.2Q1263,1027.5 1288.8,1044.2Q1282,1032 1256.2,1015.2M1256.2,1015.2Q1233.2,1007.7 1232.7,1016.2Q1255.7,1023.8 1256.2,1015.2M1256.2,1015.2Q1235.2,998.3 1209.1,986.8Q1230.1,1003.8 1256.2,1015.2M1250.6,996.7Q1267.9,1014.8 1299.9,1032.2M1299.9,1032.2Q1279.5,1029.3 1288.8,1044.2M1288.8,1044.2Q1259,1024.4 1232.7,1016.2M1232.7,1016.2Q1234.6,1006.9 1209.1,986.8M1209.1,986.8Q1240.1,1000.9 1250.6,996.7" fill="none" stroke="#000" stroke-width="1.3" stroke-linejoin="round"/><path d="M1349.2,1032.9Q1326.6,1040.6 1338.1,1045Q1360.6,1037.3 1349.2,1032.9ZM1349.2,1032.9Q1313.1,1036.6 1288.8,1044.2Q1324.9,1040.5 1349.2,1032.9ZM1349.2,1032.9Q1335.6,1028.9 1299.9,1032.2Q1313.5,1036.2 1349.2,1032.9ZM1349.2,1032.9Q1371.7,1025.2 1360.3,1020.8Q1337.7,1028.5 1349.2,1032.9ZM1349.2,1032.9Q1385.2,1029.2 1409.5,1021.5Q1373.4,1025.2 1349.2,1032.9ZM1349.2,1032.9Q1362.7,1036.9 1398.4,1033.6Q1384.8,1029.6 1349.2,1032.9ZM1338.1,1045Q1324.5,1041 1288.8,1044.2ZM1288.8,1044.2Q1311.3,1036.6 1299.9,1032.2ZM1299.9,1032.2Q1336,1028.5 1360.3,1020.8ZM1360.3,1020.8Q1373.8,1024.8 1409.5,1021.5ZM1409.5,1021.5Q1387,1029.2 1398.4,1033.6ZM1398.4,1033.6Q1362.3,1037.3 1338.1,1045Z" fill="#c5c5c5" stroke="#c5c5c5" stroke-width="0.7"/><path d="M1349.2,1032.9Q1326.6,1040.6 1338.1,1045Q1360.6,1037.3 1349.2,1032.9M1349.2,1032.9Q1313.1,1036.6 1288.8,1044.2Q1324.9,1040.5 1349.2,1032.9M1349.2,1032.9Q1335.6,1028.9 1299.9,1032.2Q1313.5,1036.2 1349.2,1032.9M1349.2,1032.9Q1371.7,1025.2 1360.3,1020.8Q1337.7,1028.5 1349.2,1032.9M1349.2,1032.9Q1385.2,1029.2 1409.5,1021.5Q1373.4,1025.2 1349.2,1032.9M1349.2,1032.9Q1362.7,1036.9 1398.4,1033.6Q1384.8,1029.6 1349.2,1032.9M1338.1,1045Q1324.5,1041 1288.8,1044.2M1288.8,1044.2Q1311.3,1036.6 1299.9,1032.2M1299.9,1032.2Q1336,1028.5 1360.3,1020.8M1360.3,1020.8Q1373.8,1024.8 1409.5,1021.5M1409.5,1021.5Q1387,1029.2 1398.4,1033.6M1398.4,1033.6Q1362.3,1037.3 1338.1,1045" fill="none" stroke="#000" stroke-width="1.3" stroke-linejoin="round"/><path d="M1181.7,876.5Q1177.6,906.1 1178.6,930.2Q1182.7,900.6 1181.7,876.5ZM1181.7,876.5Q1176.7,876.9 1171.7,902.9Q1176.7,902.5 1181.7,876.5ZM1181.7,876.5Q1182.6,847.2 1178.6,839.2Q1177.6,868.5 1181.7,876.5ZM1181.7,876.5Q1187.2,858 1189.7,827.1Q1184.1,845.6 1181.7,876.5ZM1181.7,876.5Q1184.1,894.5 1189.7,883.3Q1187.2,865.4 1181.7,876.5ZM1178.6,930.2Q1177.7,900.9 1171.7,902.9ZM1171.7,902.9Q1177.7,873.2 1178.6,839.2ZM1178.6,839.2Q1183.2,850 1189.7,827.1ZM1189.7,827.1Q1186.6,863.5 1189.7,883.3ZM1189.7,883.3Q1183.2,895 1178.6,930.2Z" fill="#c2c2c2" stroke="#c2c2c2" stroke-width="0.7"/><path d="M1181.7,876.5Q1177.6,906.1 1178.6,930.2Q1182.7,900.6 1181.7,876.5M1181.7,876.5Q1176.7,876.9 1171.7,902.9Q1176.7,902.5 1181.7,876.5M1181.7,876.5Q1182.6,847.2 1178.6,839.2Q1177.6,868.5 1181.7,876.5M1181.7,876.5Q1187.2,858 1189.7,827.1Q1184.1,845.6 1181.7,876.5M1181.7,876.5Q1184.1,894.5 1189.7,883.3Q1187.2,865.4 1181.7,876.5M1178.6,930.2Q1177.7,900.9 1171.7,902.9M1171.7,902.9Q1177.7,873.2 1178.6,839.2M1178.6,839.2Q1183.2,850 1189.7,827.1M1189.7,827.1Q1186.6,863.5 1189.7,883.3M1189.7,883.3Q1183.2,895 1178.6,930.2" fill="none" stroke="#000" stroke-width="1.3" stroke-linejoin="round"/><path d="M1457.8,820.4Q1445.1,792.4 1427.3,763.8Q1440,791.8 1457.8,820.4ZM1457.8,820.4Q1462.7,820.1 1450.9,793.2Q1446,793.5 1457.8,820.4ZM1457.8,820.4Q1475.4,848.1 1481.4,849.8Q1463.8,822.1 1457.8,820.4ZM1457.8,820.4Q1470.4,848.5 1488.3,877.1Q1475.6,849.1 1457.8,820.4ZM1457.8,820.4Q1452.9,820.8 1464.7,847.7Q1469.6,847.4 1457.8,820.4ZM1457.8,820.4Q1440.2,792.8 1434.2,791.1Q1451.8,818.7 1457.8,820.4ZM1427.3,763.8Q1444.9,791.4 1450.9,793.2ZM1450.9,793.2Q1463.6,821.2 1481.4,849.8ZM1481.4,849.8Q1476.5,850.2 1488.3,877.1ZM1488.3,877.1Q1470.7,849.4 1464.7,847.7ZM1464.7,847.7Q1452,819.7 1434.2,791.1ZM1434.2,791.1Q1439.1,790.7 1427.3,763.8Z" fill="#818181" stroke="#818181" stroke-width="0.7"/><path d="M1457.8,820.4Q1445.1,792.4 1427.3,763.8Q1440,791.8 1457.8,820.4M1457.8,820.4Q1462.7,820.1 1450.9,793.2Q1446,793.5 1457.8,820.4M1457.8,820.4Q1475.4,848.1 1481.4,849.8Q1463.8,822.1 1457.8,820.4M1457.8,820.4Q1470.4,848.5 1488.3,877.1Q1475.6,849.1 1457.8,820.4M1457.8,820.4Q1452.9,820.8 1464.7,847.7Q1469.6,847.4 1457.8,820.4M1457.8,820.4Q1440.2,792.8 1434.2,791.1Q1451.8,818.7 1457.8,820.4M1427.3,763.8Q1444.9,791.4 1450.9,793.2M1450.9,793.2Q1463.6,821.2 1481.4,849.8M1481.4,849.8Q1476.5,850.2 1488.3,877.1M1488.3,877.1Q1470.7,849.4 1464.7,847.7M1464.7,847.7Q1452,819.7 1434.2,791.1M1434.2,791.1Q1439.1,790.7 1427.3,763.8" fill="none" stroke="#000" stroke-width="1.3" stroke-linejoin="round"/><path d="M1220.1,792.8Q1202.3,812.5 1178.6,839.2Q1196.3,819.4 1220.1,792.8ZM1220.1,792.8Q1225.7,786.3 1209,804.9Q1203.4,811.3 1220.1,792.8ZM1220.1,792.8Q1243.4,766.6 1250.5,758.5Q1227.2,784.7 1220.1,792.8ZM1220.1,792.8Q1237.9,773 1261.6,746.4Q1243.8,766.1 1220.1,792.8ZM1220.1,792.8Q1214.5,799.2 1231.2,780.7Q1236.8,774.3 1220.1,792.8ZM1220.1,792.8Q1196.7,819 1189.7,827.1Q1213,800.9 1220.1,792.8ZM1178.6,839.2Q1201.9,813 1209,804.9ZM1209,804.9Q1226.8,785.1 1250.5,758.5ZM1250.5,758.5Q1244.9,764.9 1261.6,746.4ZM1261.6,746.4Q1238.3,772.6 1231.2,780.7ZM1231.2,780.7Q1213.4,800.5 1189.7,827.1ZM1189.7,827.1Q1195.2,820.6 1178.6,839.2Z" fill="#838383" stroke="#838383" stroke-width="0.7"/><path d="M1220.1,792.8Q1202.3,812.5 1178.6,839.2Q1196.3,819.4 1220.1,792.8M1220.1,792.8Q1225.7,786.3 1209,804.9Q1203.4,811.3 1220.1,792.8M1220.1,792.8Q1243.4,766.6 1250.5,758.5Q1227.2,784.7 1220.1,792.8M1220.1,792.8Q1237.9,773 1261.6,746.4Q1243.8,766.1 1220.1,792.8M1220.1,792.8Q1214.5,799.2 1231.2,780.7Q1236.8,774.3 1220.1,792.8M1220.1,792.8Q1196.7,819 1189.7,827.1Q1213,800.9 1220.1,792.8M1178.6,839.2Q1201.9,813 1209,804.9M1209,804.9Q1226.8,785.1 1250.5,758.5M1250.5,758.5Q1244.9,764.9 1261.6,746.4M1261.6,746.4Q1238.3,772.6 1231.2,780.7M1231.2,780.7Q1213.4,800.5 1189.7,827.1M1189.7,827.1Q1195.2,820.6 1178.6,839.2" fill="none" stroke="#000" stroke-width="1.3" stroke-linejoin="round"/><path d="M1439.9,987.2Q1432.8,995.3 1409.5,1021.5Q1416.6,1013.4 1439.9,987.2ZM1439.9,987.2Q1456.6,968.7 1451,975.1Q1434.3,993.7 1439.9,987.2ZM1439.9,987.2Q1463.7,960.6 1481.4,940.8Q1457.7,967.5 1439.9,987.2ZM1439.9,987.2Q1447,979.1 1470.3,952.9Q1463.3,961 1439.9,987.2ZM1439.9,987.2Q1423.2,1005.7 1428.8,999.3Q1445.5,980.8 1439.9,987.2ZM1439.9,987.2Q1416.2,1013.9 1398.4,1033.6Q1422.1,1007 1439.9,987.2ZM1409.5,1021.5Q1433.2,994.9 1451,975.1ZM1451,975.1Q1458.1,967 1481.4,940.8ZM1481.4,940.8Q1464.8,959.4 1470.3,952.9ZM1470.3,952.9Q1446.6,979.5 1428.8,999.3ZM1428.8,999.3Q1421.7,1007.4 1398.4,1033.6ZM1398.4,1033.6Q1415.1,1015.1 1409.5,1021.5Z" fill="#a0a0a0" stroke="#a0a0a0" stroke-width="0.7"/><path d="M1439.9,987.2Q1432.8,995.3 1409.5,1021.5Q1416.6,1013.4 1439.9,987.2M1439.9,987.2Q1456.6,968.7 1451,975.1Q1434.3,993.7 1439.9,987.2M1439.9,987.2Q1463.7,960.6 1481.4,940.8Q1457.7,967.5 1439.9,987.2M1439.9,987.2Q1447,979.1 1470.3,952.9Q1463.3,961 1439.9,987.2M1439.9,987.2Q1423.2,1005.7 1428.8,999.3Q1445.5,980.8 1439.9,987.2M1439.9,987.2Q1416.2,1013.9 1398.4,1033.6Q1422.1,1007 1439.9,987.2M1409.5,1021.5Q1433.2,994.9 1451,975.1M1451,975.1Q1458.1,967 1481.4,940.8M1481.4,940.8Q1464.8,959.4 1470.3,952.9M1470.3,952.9Q1446.6,979.5 1428.8,999.3M1428.8,999.3Q1421.7,1007.4 1398.4,1033.6M1398.4,1033.6Q1415.1,1015.1 1409.5,1021.5" fill="none" stroke="#000" stroke-width="1.3" stroke-linejoin="round"/><path d="M1202.2,959.6Q1196.2,957.9 1178.6,930.2Q1184.6,931.9 1202.2,959.6ZM1202.2,959.6Q1214,986.5 1209.1,986.8Q1197.3,959.9 1202.2,959.6ZM1202.2,959.6Q1220,988.2 1232.7,1016.2Q1214.9,987.6 1202.2,959.6ZM1202.2,959.6Q1208.2,961.3 1225.8,988.9Q1219.8,987.2 1202.2,959.6ZM1202.2,959.6Q1190.4,932.6 1195.3,932.3Q1207.1,959.2 1202.2,959.6ZM1202.2,959.6Q1184.4,930.9 1171.7,902.9Q1189.6,931.5 1202.2,959.6ZM1178.6,930.2Q1196.4,958.8 1209.1,986.8ZM1209.1,986.8Q1215.1,988.6 1232.7,1016.2ZM1232.7,1016.2Q1220.9,989.3 1225.8,988.9ZM1225.8,988.9Q1208,960.3 1195.3,932.3ZM1195.3,932.3Q1189.3,930.6 1171.7,902.9ZM1171.7,902.9Q1183.5,929.8 1178.6,930.2Z" fill="#9d9d9d" stroke="#9d9d9d" stroke-width="0.7"/><path d="M1202.2,959.6Q1196.2,957.9 1178.6,930.2Q1184.6,931.9 1202.2,959.6M1202.2,959.6Q1214,986.5 1209.1,986.8Q1197.3,959.9 1202.2,959.6M1202.2,959.6Q1220,988.2 1232.7,1016.2Q1214.9,987.6 1202.2,959.6M1202.2,959.6Q1208.2,961.3 1225.8,988.9Q1219.8,987.2 1202.2,959.6M1202.2,959.6Q1190.4,932.6 1195.3,932.3Q1207.1,959.2 1202.2,959.6M1202.2,959.6Q1184.4,930.9 1171.7,902.9Q1189.6,931.5 1202.2,959.6M1178.6,930.2Q1196.4,958.8 1209.1,986.8M1209.1,986.8Q1215.1,988.6 1232.7,1016.2M1232.7,1016.2Q1220.9,989.3 1225.8,988.9M1225.8,988.9Q1208,960.3 1195.3,932.3M1195.3,932.3Q1189.3,930.6 1171.7,902.9M1171.7,902.9Q1183.5,929.8 1178.6,930.2" fill="none" stroke="#000" stroke-width="1.3" stroke-linejoin="round"/><path d="M1478.3,903.5Q1483.3,877.5 1488.3,877.1Q1483.3,903.1 1478.3,903.5ZM1478.3,903.5Q1477.3,879.4 1481.4,849.8Q1482.4,873.9 1478.3,903.5ZM1478.3,903.5Q1472.8,914.6 1470.3,896.7Q1475.9,885.5 1478.3,903.5ZM1478.3,903.5Q1475.9,934.4 1470.3,952.9Q1472.8,922 1478.3,903.5ZM1478.3,903.5Q1482.4,911.5 1481.4,940.8Q1477.4,932.8 1478.3,903.5ZM1488.3,877.1Q1482.3,879.1 1481.4,849.8ZM1481.4,849.8Q1476.8,885 1470.3,896.7ZM1470.3,896.7Q1473.4,916.5 1470.3,952.9ZM1470.3,952.9Q1476.8,930 1481.4,940.8ZM1481.4,940.8Q1482.3,906.8 1488.3,877.1Z" fill="#ededed" stroke="#ededed" stroke-width="0.7"/><path d="M1478.3,903.5Q1483.3,877.5 1488.3,877.1Q1483.3,903.1 1478.3,903.5M1478.3,903.5Q1477.3,879.4 1481.4,849.8Q1482.4,873.9 1478.3,903.5M1478.3,903.5Q1472.8,914.6 1470.3,896.7Q1475.9,885.5 1478.3,903.5M1478.3,903.5Q1475.9,934.4 1470.3,952.9Q1472.8,922 1478.3,903.5M1478.3,903.5Q1482.4,911.5 1481.4,940.8Q1477.4,932.8 1478.3,903.5M1488.3,877.1Q1482.3,879.1 1481.4,849.8M1481.4,849.8Q1476.8,885 1470.3,896.7M1470.3,896.7Q1473.4,916.5 1470.3,952.9M1470.3,952.9Q1476.8,930 1481.4,940.8M1481.4,940.8Q1482.3,906.8 1488.3,877.1" fill="none" stroke="#000" stroke-width="1.3" stroke-linejoin="round"/><path d="M1310.8,747.1Q1346.5,743.8 1360.1,747.8Q1324.4,751.1 1310.8,747.1ZM1310.8,747.1Q1335.1,739.5 1371.2,735.8Q1346.9,743.4 1310.8,747.1ZM1310.8,747.1Q1299.4,742.7 1321.9,735Q1333.4,739.4 1310.8,747.1ZM1310.8,747.1Q1275.2,750.4 1261.6,746.4Q1297.3,743.1 1310.8,747.1ZM1310.8,747.1Q1286.6,754.8 1250.5,758.5Q1274.8,750.8 1310.8,747.1ZM1310.8,747.1Q1322.3,751.5 1299.7,759.2Q1288.3,754.8 1310.8,747.1ZM1360.1,747.8Q1348.7,743.4 1371.2,735.8ZM1371.2,735.8Q1335.5,739 1321.9,735ZM1321.9,735Q1297.7,742.7 1261.6,746.4ZM1261.6,746.4Q1273,750.8 1250.5,758.5ZM1250.5,758.5Q1286.2,755.2 1299.7,759.2ZM1299.7,759.2Q1324,751.5 1360.1,747.8Z" fill="#f0f0f0" stroke="#f0f0f0" stroke-width="0.7"/><path d="M1310.8,747.1Q1346.5,743.8 1360.1,747.8Q1324.4,751.1 1310.8,747.1M1310.8,747.1Q1335.1,739.5 1371.2,735.8Q1346.9,743.4 1310.8,747.1M1310.8,747.1Q1299.4,742.7 1321.9,735Q1333.4,739.4 1310.8,747.1M1310.8,747.1Q1275.2,750.4 1261.6,746.4Q1297.3,743.1 1310.8,747.1M1310.8,747.1Q1286.6,754.8 1250.5,758.5Q1274.8,750.8 1310.8,747.1M1310.8,747.1Q1322.3,751.5 1299.7,759.2Q1288.3,754.8 1310.8,747.1M1360.1,747.8Q1348.7,743.4 1371.2,735.8M1371.2,735.8Q1335.5,739 1321.9,735M1321.9,735Q1297.7,742.7 1261.6,746.4M1261.6,746.4Q1273,750.8 1250.5,758.5M1250.5,758.5Q1286.2,755.2 1299.7,759.2M1299.7,759.2Q1324,751.5 1360.1,747.8" fill="none" stroke="#000" stroke-width="1.3" stroke-linejoin="round"/><path d="M1403.8,764.8Q1387.3,763 1360.1,747.8Q1376.6,749.6 1403.8,764.8ZM1403.8,764.8Q1419.4,780.4 1409.4,783.3Q1393.8,767.6 1403.8,764.8ZM1403.8,764.8Q1429.9,776.2 1450.9,793.2Q1424.8,781.7 1403.8,764.8ZM1403.8,764.8Q1404.3,756.2 1427.3,763.8Q1426.8,772.3 1403.8,764.8ZM1403.8,764.8Q1378,748 1371.2,735.8Q1397,752.5 1403.8,764.8ZM1360.1,747.8Q1392.1,765.2 1409.4,783.3ZM1409.4,783.3Q1419.9,779.1 1450.9,793.2ZM1450.9,793.2Q1425.4,773.1 1427.3,763.8ZM1427.3,763.8Q1401,755.6 1371.2,735.8ZM1371.2,735.8Q1380.5,750.7 1360.1,747.8Z" fill="#ffffff" stroke="#ffffff" stroke-width="0.7"/><path d="M1403.8,764.8Q1387.3,763 1360.1,747.8Q1376.6,749.6 1403.8,764.8M1403.8,764.8Q1419.4,780.4 1409.4,783.3Q1393.8,767.6 1403.8,764.8M1403.8,764.8Q1429.9,776.2 1450.9,793.2Q1424.8,781.7 1403.8,764.8M1403.8,764.8Q1404.3,756.2 1427.3,763.8Q1426.8,772.3 1403.8,764.8M1403.8,764.8Q1378,748 1371.2,735.8Q1397,752.5 1403.8,764.8M1360.1,747.8Q1392.1,765.2 1409.4,783.3M1409.4,783.3Q1419.9,779.1 1450.9,793.2M1450.9,793.2Q1425.4,773.1 1427.3,763.8M1427.3,763.8Q1401,755.6 1371.2,735.8M1371.2,735.8Q1380.5,750.7 1360.1,747.8" fill="none" stroke="#000" stroke-width="1.3" stroke-linejoin="round"/><path d="M1281.9,1017Q1296.8,1008.8 1331.2,1017.7Q1316.3,1025.9 1281.9,1017ZM1281.9,1017Q1262.2,998.9 1275,989.7Q1294.8,1007.7 1281.9,1017ZM1281.9,1017Q1247.3,1007.1 1225.8,988.9Q1260.4,998.8 1281.9,1017ZM1281.9,1017Q1267,1025.1 1232.7,1016.2Q1247.6,1008 1281.9,1017ZM1281.9,1017Q1301.7,1035 1288.8,1044.2Q1269.1,1026.2 1281.9,1017ZM1281.9,1017Q1316.5,1026.8 1338.1,1045Q1303.4,1035.1 1281.9,1017ZM1331.2,1017.7Q1296.6,1007.8 1275,989.7ZM1275,989.7Q1260.2,997.9 1225.8,988.9ZM1225.8,988.9Q1245.5,1007 1232.7,1016.2ZM1232.7,1016.2Q1267.3,1026.1 1288.8,1044.2ZM1288.8,1044.2Q1303.7,1036 1338.1,1045ZM1338.1,1045Q1318.3,1026.9 1331.2,1017.7Z" fill="#9d9d9d" stroke="#9d9d9d" stroke-width="0.7"/><path d="M1281.9,1017Q1296.8,1008.8 1331.2,1017.7Q1316.3,1025.9 1281.9,1017M1281.9,1017Q1262.2,998.9 1275,989.7Q1294.8,1007.7 1281.9,1017M1281.9,1017Q1247.3,1007.1 1225.8,988.9Q1260.4,998.8 1281.9,1017M1281.9,1017Q1267,1025.1 1232.7,1016.2Q1247.6,1008 1281.9,1017M1281.9,1017Q1301.7,1035 1288.8,1044.2Q1269.1,1026.2 1281.9,1017M1281.9,1017Q1316.5,1026.8 1338.1,1045Q1303.4,1035.1 1281.9,1017M1331.2,1017.7Q1296.6,1007.8 1275,989.7M1275,989.7Q1260.2,997.9 1225.8,988.9M1225.8,988.9Q1245.5,1007 1232.7,1016.2M1232.7,1016.2Q1267.3,1026.1 1288.8,1044.2M1288.8,1044.2Q1303.7,1036 1338.1,1045M1338.1,1045Q1318.3,1026.9 1331.2,1017.7" fill="none" stroke="#000" stroke-width="1.3" stroke-linejoin="round"/><path d="M1376.7,1017Q1366.9,1033.2 1338.1,1045Q1347.9,1028.7 1376.7,1017ZM1376.7,1017Q1400.4,1018.9 1398.4,1033.6Q1374.8,1031.7 1376.7,1017ZM1376.7,1017Q1401.2,1001.9 1428.8,999.3Q1404.3,1014.4 1376.7,1017ZM1376.7,1017Q1368.3,1005.8 1387.3,989.4Q1395.8,1000.6 1376.7,1017ZM1376.7,1017Q1347,1025.2 1331.2,1017.7Q1360.9,1009.5 1376.7,1017ZM1338.1,1045Q1371.5,1030.6 1398.4,1033.6ZM1398.4,1033.6Q1399.3,1016.7 1428.8,999.3ZM1428.8,999.3Q1395.9,1003.2 1387.3,989.4ZM1387.3,989.4Q1366,1008.8 1331.2,1017.7ZM1331.2,1017.7Q1351,1025.7 1338.1,1045Z" fill="#9d9d9d" stroke="#9d9d9d" stroke-width="0.7"/><path d="M1376.7,1017Q1366.9,1033.2 1338.1,1045Q1347.9,1028.7 1376.7,1017M1376.7,1017Q1400.4,1018.9 1398.4,1033.6Q1374.8,1031.7 1376.7,1017M1376.7,1017Q1401.2,1001.9 1428.8,999.3Q1404.3,1014.4 1376.7,1017M1376.7,1017Q1368.3,1005.8 1387.3,989.4Q1395.8,1000.6 1376.7,1017M1376.7,1017Q1347,1025.2 1331.2,1017.7Q1360.9,1009.5 1376.7,1017M1338.1,1045Q1371.5,1030.6 1398.4,1033.6M1398.4,1033.6Q1399.3,1016.7 1428.8,999.3M1428.8,999.3Q1395.9,1003.2 1387.3,989.4M1387.3,989.4Q1366,1008.8 1331.2,1017.7M1331.2,1017.7Q1351,1025.7 1338.1,1045" fill="none" stroke="#000" stroke-width="1.3" stroke-linejoin="round"/><path d="M1202.2,868.6Q1219.7,868.1 1225.7,897.9Q1208.2,898.4 1202.2,868.6ZM1202.2,868.6Q1214.8,837 1232.6,834.2Q1220,865.8 1202.2,868.6ZM1202.2,868.6Q1197.2,837.5 1209,804.9Q1213.9,835.9 1202.2,868.6ZM1202.2,868.6Q1184.6,869 1178.6,839.2Q1196.1,838.7 1202.2,868.6ZM1202.2,868.6Q1189.5,900.1 1171.7,902.9Q1184.4,871.3 1202.2,868.6ZM1202.2,868.6Q1207.1,899.6 1195.3,932.3Q1190.4,901.2 1202.2,868.6ZM1225.7,897.9Q1220.8,866.8 1232.6,834.2ZM1232.6,834.2Q1215,834.7 1209,804.9ZM1209,804.9Q1196.4,836.4 1178.6,839.2ZM1178.6,839.2Q1183.5,870.3 1171.7,902.9ZM1171.7,902.9Q1189.3,902.4 1195.3,932.3ZM1195.3,932.3Q1207.9,900.7 1225.7,897.9Z" fill="#9d9d9d" stroke="#9d9d9d" stroke-width="0.7"/><path d="M1202.2,868.6Q1219.7,868.1 1225.7,897.9Q1208.2,898.4 1202.2,868.6M1202.2,868.6Q1214.8,837 1232.6,834.2Q1220,865.8 1202.2,868.6M1202.2,868.6Q1197.2,837.5 1209,804.9Q1213.9,835.9 1202.2,868.6M1202.2,868.6Q1184.6,869 1178.6,839.2Q1196.1,838.7 1202.2,868.6M1202.2,868.6Q1189.5,900.1 1171.7,902.9Q1184.4,871.3 1202.2,868.6M1202.2,868.6Q1207.1,899.6 1195.3,932.3Q1190.4,901.2 1202.2,868.6M1225.7,897.9Q1220.8,866.8 1232.6,834.2M1232.6,834.2Q1215,834.7 1209,804.9M1209,804.9Q1196.4,836.4 1178.6,839.2M1178.6,839.2Q1183.5,870.3 1171.7,902.9M1171.7,902.9Q1189.3,902.4 1195.3,932.3M1195.3,932.3Q1207.9,900.7 1225.7,897.9" fill="none" stroke="#000" stroke-width="1.3" stroke-linejoin="round"/><path d="M1439.8,840Q1422.1,851.1 1398.3,830.1Q1416.1,819 1439.8,840ZM1439.8,840Q1445.4,873.7 1428.8,886.8Q1423.2,853.1 1439.8,840ZM1439.8,840Q1463.2,862.6 1470.3,896.7Q1446.9,874 1439.8,840ZM1439.8,840Q1457.6,828.9 1481.4,849.8Q1463.6,860.9 1439.8,840ZM1439.8,840Q1434.2,806.3 1450.9,793.2Q1456.5,826.9 1439.8,840ZM1439.8,840Q1416.5,817.4 1409.4,783.3Q1432.7,805.9 1439.8,840ZM1398.3,830.1Q1421.7,852.7 1428.8,886.8ZM1428.8,886.8Q1446.5,875.7 1470.3,896.7ZM1470.3,896.7Q1464.7,863 1481.4,849.8ZM1481.4,849.8Q1458,827.2 1450.9,793.2ZM1450.9,793.2Q1433.1,804.2 1409.4,783.3ZM1409.4,783.3Q1415,817 1398.3,830.1Z" fill="#ffffff" stroke="#ffffff" stroke-width="0.7"/><path d="M1439.8,840Q1422.1,851.1 1398.3,830.1Q1416.1,819 1439.8,840M1439.8,840Q1445.4,873.7 1428.8,886.8Q1423.2,853.1 1439.8,840M1439.8,840Q1463.2,862.6 1470.3,896.7Q1446.9,874 1439.8,840M1439.8,840Q1457.6,828.9 1481.4,849.8Q1463.6,860.9 1439.8,840M1439.8,840Q1434.2,806.3 1450.9,793.2Q1456.5,826.9 1439.8,840M1439.8,840Q1416.5,817.4 1409.4,783.3Q1432.7,805.9 1439.8,840M1398.3,830.1Q1421.7,852.7 1428.8,886.8M1428.8,886.8Q1446.5,875.7 1470.3,896.7M1470.3,896.7Q1464.7,863 1481.4,849.8M1481.4,849.8Q1458,827.2 1450.9,793.2M1450.9,793.2Q1433.1,804.2 1409.4,783.3M1409.4,783.3Q1415,817 1398.3,830.1" fill="none" stroke="#000" stroke-width="1.3" stroke-linejoin="round"/><path d="M1256.1,792.5Q1281.8,788.7 1288.7,806Q1262.9,809.9 1256.1,792.5ZM1256.1,792.5Q1272.5,769.2 1299.7,759.2Q1283.3,782.6 1256.1,792.5ZM1256.1,792.5Q1240.5,781.9 1250.5,758.5Q1266.1,769.1 1256.1,792.5ZM1256.1,792.5Q1230,809.4 1209,804.9Q1235.1,788 1256.1,792.5ZM1256.1,792.5Q1255.6,813.6 1232.6,834.2Q1233.1,813.2 1256.1,792.5ZM1288.7,806Q1279.4,786.5 1299.7,759.2ZM1299.7,759.2Q1267.7,772 1250.5,758.5ZM1250.5,758.5Q1240,785.9 1209,804.9ZM1209,804.9Q1234.5,809 1232.6,834.2ZM1232.6,834.2Q1258.9,809.4 1288.7,806Z" fill="#b9b9b9" stroke="#b9b9b9" stroke-width="0.7"/><path d="M1256.1,792.5Q1281.8,788.7 1288.7,806Q1262.9,809.9 1256.1,792.5M1256.1,792.5Q1272.5,769.2 1299.7,759.2Q1283.3,782.6 1256.1,792.5M1256.1,792.5Q1240.5,781.9 1250.5,758.5Q1266.1,769.1 1256.1,792.5M1256.1,792.5Q1230,809.4 1209,804.9Q1235.1,788 1256.1,792.5M1256.1,792.5Q1255.6,813.6 1232.6,834.2Q1233.1,813.2 1256.1,792.5M1288.7,806Q1279.4,786.5 1299.7,759.2M1299.7,759.2Q1267.7,772 1250.5,758.5M1250.5,758.5Q1240,785.9 1209,804.9M1209,804.9Q1234.5,809 1232.6,834.2M1232.6,834.2Q1258.9,809.4 1288.7,806" fill="none" stroke="#000" stroke-width="1.3" stroke-linejoin="round"/><path d="M1428.8,943.1Q1441.7,965.5 1428.8,999.3Q1416,976.8 1428.8,943.1ZM1428.8,943.1Q1456,932.1 1470.3,952.9Q1443.1,963.9 1428.8,943.1ZM1428.8,943.1Q1443.1,909.6 1470.3,896.7Q1456,930.1 1428.8,943.1ZM1428.8,943.1Q1415.9,920.6 1428.8,886.8Q1441.6,909.3 1428.8,943.1ZM1428.8,943.1Q1401.6,954 1387.2,933.2Q1414.4,922.2 1428.8,943.1ZM1428.8,943.1Q1414.5,976.5 1387.3,989.4Q1401.6,956 1428.8,943.1ZM1428.8,999.3Q1443.1,965.9 1470.3,952.9ZM1470.3,952.9Q1457.5,930.4 1470.3,896.7ZM1470.3,896.7Q1443.1,907.6 1428.8,886.8ZM1428.8,886.8Q1414.4,920.2 1387.2,933.2ZM1387.2,933.2Q1400.1,955.7 1387.3,989.4ZM1387.3,989.4Q1414.5,978.5 1428.8,999.3Z" fill="#c0c0c0" stroke="#c0c0c0" stroke-width="0.7"/><path d="M1428.8,943.1Q1441.7,965.5 1428.8,999.3Q1416,976.8 1428.8,943.1M1428.8,943.1Q1456,932.1 1470.3,952.9Q1443.1,963.9 1428.8,943.1M1428.8,943.1Q1443.1,909.6 1470.3,896.7Q1456,930.1 1428.8,943.1M1428.8,943.1Q1415.9,920.6 1428.8,886.8Q1441.6,909.3 1428.8,943.1M1428.8,943.1Q1401.6,954 1387.2,933.2Q1414.4,922.2 1428.8,943.1M1428.8,943.1Q1414.5,976.5 1387.3,989.4Q1401.6,956 1428.8,943.1M1428.8,999.3Q1443.1,965.9 1470.3,952.9M1470.3,952.9Q1457.5,930.4 1470.3,896.7M1470.3,896.7Q1443.1,907.6 1428.8,886.8M1428.8,886.8Q1414.4,920.2 1387.2,933.2M1387.2,933.2Q1400.1,955.7 1387.3,989.4M1387.3,989.4Q1414.5,978.5 1428.8,999.3" fill="none" stroke="#000" stroke-width="1.3" stroke-linejoin="round"/><path d="M1239.4,948.4Q1221.3,923 1225.7,897.9Q1243.8,923.3 1239.4,948.4ZM1239.4,948.4Q1217.4,953.2 1195.3,932.3Q1217.4,927.5 1239.4,948.4ZM1239.4,948.4Q1243.8,976.8 1225.8,988.9Q1221.4,960.6 1239.4,948.4ZM1239.4,948.4Q1264.1,961.2 1275,989.7Q1250.3,976.9 1239.4,948.4ZM1239.4,948.4Q1250.3,928 1275,933.4Q1264.1,953.8 1239.4,948.4ZM1225.7,897.9Q1221.8,928.1 1195.3,932.3ZM1195.3,932.3Q1221.8,955.9 1225.8,988.9ZM1225.8,988.9Q1246.1,973.4 1275,989.7ZM1275,989.7Q1261.2,956.4 1275,933.4ZM1275,933.4Q1246.1,928.4 1225.7,897.9Z" fill="#9d9d9d" stroke="#9d9d9d" stroke-width="0.7"/><path d="M1239.4,948.4Q1221.3,923 1225.7,897.9Q1243.8,923.3 1239.4,948.4M1239.4,948.4Q1217.4,953.2 1195.3,932.3Q1217.4,927.5 1239.4,948.4M1239.4,948.4Q1243.8,976.8 1225.8,988.9Q1221.4,960.6 1239.4,948.4M1239.4,948.4Q1264.1,961.2 1275,989.7Q1250.3,976.9 1239.4,948.4M1239.4,948.4Q1250.3,928 1275,933.4Q1264.1,953.8 1239.4,948.4M1225.7,897.9Q1221.8,928.1 1195.3,932.3M1195.3,932.3Q1221.8,955.9 1225.8,988.9M1225.8,988.9Q1246.1,973.4 1275,989.7M1275,989.7Q1261.2,956.4 1275,933.4M1275,933.4Q1246.1,928.4 1225.7,897.9" fill="none" stroke="#000" stroke-width="1.3" stroke-linejoin="round"/><path d="M1349,794.7Q1313.3,785.9 1299.7,759.2Q1335.4,767.9 1349,794.7ZM1349,794.7Q1324.8,813.1 1288.7,806Q1312.9,787.6 1349,794.7ZM1349,794.7Q1360.4,821.8 1337.9,841.5Q1326.5,814.3 1349,794.7ZM1349,794.7Q1384.7,803.4 1398.3,830.1Q1362.6,821.4 1349,794.7ZM1349,794.7Q1373.3,776.2 1409.4,783.3Q1385.1,801.7 1349,794.7ZM1349,794.7Q1337.6,767.5 1360.1,747.8Q1371.5,775 1349,794.7ZM1299.7,759.2Q1311.2,786.3 1288.7,806ZM1288.7,806Q1324.4,814.7 1337.9,841.5ZM1337.9,841.5Q1362.2,823.1 1398.3,830.1ZM1398.3,830.1Q1386.9,803 1409.4,783.3ZM1409.4,783.3Q1373.7,774.6 1360.1,747.8ZM1360.1,747.8Q1335.8,766.2 1299.7,759.2Z" fill="#f2f2f2" stroke="#f2f2f2" stroke-width="0.7"/><path d="M1349,794.7Q1313.3,785.9 1299.7,759.2Q1335.4,767.9 1349,794.7M1349,794.7Q1324.8,813.1 1288.7,806Q1312.9,787.6 1349,794.7M1349,794.7Q1360.4,821.8 1337.9,841.5Q1326.5,814.3 1349,794.7M1349,794.7Q1384.7,803.4 1398.3,830.1Q1362.6,821.4 1349,794.7M1349,794.7Q1373.3,776.2 1409.4,783.3Q1385.1,801.7 1349,794.7M1349,794.7Q1337.6,767.5 1360.1,747.8Q1371.5,775 1349,794.7M1299.7,759.2Q1311.2,786.3 1288.7,806M1288.7,806Q1324.4,814.7 1337.9,841.5M1337.9,841.5Q1362.2,823.1 1398.3,830.1M1398.3,830.1Q1386.9,803 1409.4,783.3M1409.4,783.3Q1373.7,774.6 1360.1,747.8M1360.1,747.8Q1335.8,766.2 1299.7,759.2" fill="none" stroke="#000" stroke-width="1.3" stroke-linejoin="round"/><path d="M1331.1,961.4Q1348.5,989.5 1331.2,1017.7Q1313.8,989.6 1331.1,961.4ZM1331.1,961.4Q1367.9,962.4 1387.3,989.4Q1350.5,988.5 1331.1,961.4ZM1331.1,961.4Q1350.5,934.3 1387.2,933.2Q1367.9,960.3 1331.1,961.4ZM1331.1,961.4Q1313.8,933.3 1331.1,905.2Q1348.5,933.3 1331.1,961.4ZM1331.1,961.4Q1294.4,960.5 1275,933.4Q1311.8,934.4 1331.1,961.4ZM1331.1,961.4Q1311.8,988.6 1275,989.7Q1294.4,962.5 1331.1,961.4ZM1331.2,1017.7Q1350.5,990.5 1387.3,989.4ZM1387.3,989.4Q1369.9,961.4 1387.2,933.2ZM1387.2,933.2Q1350.5,932.3 1331.1,905.2ZM1331.1,905.2Q1311.7,932.3 1275,933.4ZM1275,933.4Q1292.4,961.5 1275,989.7ZM1275,989.7Q1311.8,990.6 1331.2,1017.7Z" fill="#9d9d9d" stroke="#9d9d9d" stroke-width="0.7"/><path d="M1331.1,961.4Q1348.5,989.5 1331.2,1017.7Q1313.8,989.6 1331.1,961.4M1331.1,961.4Q1367.9,962.4 1387.3,989.4Q1350.5,988.5 1331.1,961.4M1331.1,961.4Q1350.5,934.3 1387.2,933.2Q1367.9,960.3 1331.1,961.4M1331.1,961.4Q1313.8,933.3 1331.1,905.2Q1348.5,933.3 1331.1,961.4M1331.1,961.4Q1294.4,960.5 1275,933.4Q1311.8,934.4 1331.1,961.4M1331.1,961.4Q1311.8,988.6 1275,989.7Q1294.4,962.5 1331.1,961.4M1331.2,1017.7Q1350.5,990.5 1387.3,989.4M1387.3,989.4Q1369.9,961.4 1387.2,933.2M1387.2,933.2Q1350.5,932.3 1331.1,905.2M1331.1,905.2Q1311.7,932.3 1275,933.4M1275,933.4Q1292.4,961.5 1275,989.7M1275,989.7Q1311.8,990.6 1331.2,1017.7" fill="none" stroke="#000" stroke-width="1.3" stroke-linejoin="round"/><path d="M1281.8,869.7Q1260.4,899.2 1225.7,897.9Q1247.2,868.5 1281.8,869.7ZM1281.8,869.7Q1294.7,902.7 1275,933.4Q1262.1,900.4 1281.8,869.7ZM1281.8,869.7Q1316.2,873.2 1331.1,905.2Q1296.7,901.7 1281.8,869.7ZM1281.8,869.7Q1303.3,840.3 1337.9,841.5Q1316.5,870.9 1281.8,869.7ZM1281.8,869.7Q1269,836.7 1288.7,806Q1301.6,839 1281.8,869.7ZM1281.8,869.7Q1247.5,866.2 1232.6,834.2Q1266.9,837.8 1281.8,869.7ZM1225.7,897.9Q1260.1,901.5 1275,933.4ZM1275,933.4Q1296.5,904 1331.1,905.2ZM1331.1,905.2Q1318.2,872.2 1337.9,841.5ZM1337.9,841.5Q1303.6,838 1288.7,806ZM1288.7,806Q1267.2,835.5 1232.6,834.2ZM1232.6,834.2Q1245.5,867.2 1225.7,897.9Z" fill="#9d9d9d" stroke="#9d9d9d" stroke-width="0.7"/><path d="M1281.8,869.7Q1260.4,899.2 1225.7,897.9Q1247.2,868.5 1281.8,869.7M1281.8,869.7Q1294.7,902.7 1275,933.4Q1262.1,900.4 1281.8,869.7M1281.8,869.7Q1316.2,873.2 1331.1,905.2Q1296.7,901.7 1281.8,869.7M1281.8,869.7Q1303.3,840.3 1337.9,841.5Q1316.5,870.9 1281.8,869.7M1281.8,869.7Q1269,836.7 1288.7,806Q1301.6,839 1281.8,869.7M1281.8,869.7Q1247.5,866.2 1232.6,834.2Q1266.9,837.8 1281.8,869.7M1225.7,897.9Q1260.1,901.5 1275,933.4M1275,933.4Q1296.5,904 1331.1,905.2M1331.1,905.2Q1318.2,872.2 1337.9,841.5M1337.9,841.5Q1303.6,838 1288.7,806M1288.7,806Q1267.2,835.5 1232.6,834.2M1232.6,834.2Q1245.5,867.2 1225.7,897.9" fill="none" stroke="#000" stroke-width="1.3" stroke-linejoin="round"/><path d="M1376.7,879.4Q1360.8,905.2 1331.1,905.2Q1346.9,879.4 1376.7,879.4ZM1376.7,879.4Q1395.7,903.7 1387.2,933.2Q1368.2,908.9 1376.7,879.4ZM1376.7,879.4Q1404.3,868.6 1428.8,886.8Q1401.2,897.6 1376.7,879.4ZM1376.7,879.4Q1374.7,848.4 1398.3,830.1Q1400.3,861.1 1376.7,879.4ZM1376.7,879.4Q1347.8,871 1337.9,841.5Q1366.8,849.8 1376.7,879.4ZM1331.1,905.2Q1366,903.7 1387.2,933.2ZM1387.2,933.2Q1395.8,898.1 1428.8,886.8ZM1428.8,886.8Q1399.2,866.6 1398.3,830.1ZM1398.3,830.1Q1371.4,852.8 1337.9,841.5ZM1337.9,841.5Q1350.9,875.7 1331.1,905.2Z" fill="#cecece" stroke="#cecece" stroke-width="0.7"/><path d="M1376.7,879.4Q1360.8,905.2 1331.1,905.2Q1346.9,879.4 1376.7,879.4M1376.7,879.4Q1395.7,903.7 1387.2,933.2Q1368.2,908.9 1376.7,879.4M1376.7,879.4Q1404.3,868.6 1428.8,886.8Q1401.2,897.6 1376.7,879.4M1376.7,879.4Q1374.7,848.4 1398.3,830.1Q1400.3,861.1 1376.7,879.4M1376.7,879.4Q1347.8,871 1337.9,841.5Q1366.8,849.8 1376.7,879.4M1331.1,905.2Q1366,903.7 1387.2,933.2M1387.2,933.2Q1395.8,898.1 1428.8,886.8M1428.8,886.8Q1399.2,866.6 1398.3,830.1M1398.3,830.1Q1371.4,852.8 1337.9,841.5M1337.9,841.5Q1350.9,875.7 1331.1,905.2" fill="none" stroke="#000" stroke-width="1.3" stroke-linejoin="round"/></g><defs><linearGradient id="as0"><stop offset="0" stop-color="#909090"/><stop offset="0.2" stop-color="#909090"/><stop offset="0.5" stop-color="#a8a8a8"/><stop offset="0.8" stop-color="#ffffff"/><stop offset="1" stop-color="#ffffff"/></linearGradient><linearGradient id="a0" href="#as0" gradientUnits="userSpaceOnUse" x1="672.3" y1="1113.1" x2="680" y2="1097.6"/><linearGradient id="as1"><stop offset="0" stop-color="#909090"/><stop offset="0.2" stop-color="#909090"/><stop offset="0.5" stop-color="#909090"/><stop offset="0.8" stop-color="#989898"/><stop offset="1" stop-color="#e0e0e0"/></linearGradient><linearGradient id="a1" href="#as1" gradientUnits="userSpaceOnUse" x1="728.8" y1="1128.3" x2="729" y2="1111.1"/><linearGradient id="as2"><stop offset="0" stop-color="#e8e8e8"/><stop offset="0.2" stop-color="#989898"/><stop offset="0.5" stop-color="#909090"/><stop offset="0.8" stop-color="#909090"/><stop offset="1" stop-color="#909090"/></linearGradient><linearGradient id="a2" href="#as2" gradientUnits="userSpaceOnUse" x1="709.2" y1="1103.6" x2="692.4" y2="1107.8"/><linearGradient id="as3"><stop offset="0" stop-color="#909090"/><stop offset="0.2" stop-color="#909090"/><stop offset="0.5" stop-color="#989898"/><stop offset="0.8" stop-color="#e8e8e8"/><stop offset="1" stop-color="#ffffff"/></linearGradient><linearGradient id="a3" href="#as3" gradientUnits="userSpaceOnUse" x1="589.5" y1="1350.4" x2="599.6" y2="1336.4"/><linearGradient id="as4"><stop offset="0" stop-color="#909090"/><stop offset="0.2" stop-color="#989898"/><stop offset="0.5" stop-color="#c8c8c8"/><stop offset="0.8" stop-color="#ffffff"/><stop offset="1" stop-color="#e0e0e0"/></linearGradient><linearGradient id="a4" href="#as4" gradientUnits="userSpaceOnUse" x1="651" y1="1364" x2="647.8" y2="1347"/><linearGradient id="a5" href="#as1" gradientUnits="userSpaceOnUse" x1="672.6" y1="1100.3" x2="672.9" y2="1083.1"/><linearGradient id="as5"><stop offset="0" stop-color="#909090"/><stop offset="0.2" stop-color="#909090"/><stop offset="0.5" stop-color="#a0a0a0"/><stop offset="0.8" stop-color="#f0f0f0"/><stop offset="1" stop-color="#ffffff"/></linearGradient><linearGradient id="a6" href="#as5" gradientUnits="userSpaceOnUse" x1="761.1" y1="1152.5" x2="776.3" y2="1144.3"/><linearGradient id="a7" href="#as2" gradientUnits="userSpaceOnUse" x1="653.1" y1="1075.6" x2="636.3" y2="1079.8"/><linearGradient id="a8" href="#as1" gradientUnits="userSpaceOnUse" x1="704" y1="1358.8" x2="704.3" y2="1341.5"/><linearGradient id="as6"><stop offset="0" stop-color="#909090"/><stop offset="0.2" stop-color="#909090"/><stop offset="0.5" stop-color="#c8c8c8"/><stop offset="0.8" stop-color="#ffffff"/><stop offset="1" stop-color="#ffffff"/></linearGradient><linearGradient id="a9" href="#as6" gradientUnits="userSpaceOnUse" x1="547.2" y1="1329.2" x2="551.2" y2="1312.4"/><linearGradient id="as7"><stop offset="0" stop-color="#ffffff"/><stop offset="0.2" stop-color="#ffffff"/><stop offset="0.5" stop-color="#a8a8a8"/><stop offset="0.8" stop-color="#909090"/><stop offset="1" stop-color="#909090"/></linearGradient><linearGradient id="a10" href="#as7" gradientUnits="userSpaceOnUse" x1="729.3" y1="1098.3" x2="721.6" y2="1113.8"/><linearGradient id="as8"><stop offset="0" stop-color="#d8d8d8"/><stop offset="0.2" stop-color="#a0a0a0"/><stop offset="0.5" stop-color="#909090"/><stop offset="0.8" stop-color="#909090"/><stop offset="1" stop-color="#909090"/></linearGradient><linearGradient id="a11" href="#as8" gradientUnits="userSpaceOnUse" x1="517.6" y1="1184.2" x2="500.3" y2="1184.2"/><linearGradient id="as9"><stop offset="0" stop-color="#909090"/><stop offset="0.2" stop-color="#909090"/><stop offset="0.5" stop-color="#d0d0d0"/><stop offset="0.8" stop-color="#ffffff"/><stop offset="1" stop-color="#ffffff"/></linearGradient><linearGradient id="a12" href="#as9" gradientUnits="userSpaceOnUse" x1="565.7" y1="1337.1" x2="579.8" y2="1332.9"/><linearGradient id="as10"><stop offset="0" stop-color="#909090"/><stop offset="0.2" stop-color="#b8b8b8"/><stop offset="0.5" stop-color="#ffffff"/><stop offset="0.8" stop-color="#ffffff"/><stop offset="1" stop-color="#e0e0e0"/></linearGradient><linearGradient id="a13" href="#as10" gradientUnits="userSpaceOnUse" x1="495.1" y1="1233.8" x2="511.9" y2="1237.7"/><linearGradient id="as11"><stop offset="0" stop-color="#a0a0a0"/><stop offset="0.2" stop-color="#c0c0c0"/><stop offset="0.5" stop-color="#d0d0d0"/><stop offset="0.8" stop-color="#b8b8b8"/><stop offset="1" stop-color="#989898"/></linearGradient><linearGradient id="a14" href="#as11" gradientUnits="userSpaceOnUse" x1="536.2" y1="1138.7" x2="523.3" y2="1127.1"/><linearGradient id="as12"><stop offset="0" stop-color="#b0b0b0"/><stop offset="0.2" stop-color="#f8f8f8"/><stop offset="0.5" stop-color="#ffffff"/><stop offset="0.8" stop-color="#f8f8f8"/><stop offset="1" stop-color="#b0b0b0"/></linearGradient><linearGradient id="a15" href="#as12" gradientUnits="userSpaceOnUse" x1="667.6" y1="1350" x2="680.4" y2="1361.7"/><linearGradient id="a16" href="#as11" gradientUnits="userSpaceOnUse" x1="756" y1="1333.1" x2="743.1" y2="1321.6"/><linearGradient id="as13"><stop offset="0" stop-color="#ffffff"/><stop offset="0.2" stop-color="#ffffff"/><stop offset="0.5" stop-color="#b8b8b8"/><stop offset="0.8" stop-color="#909090"/><stop offset="1" stop-color="#909090"/></linearGradient><linearGradient id="a17" href="#as13" gradientUnits="userSpaceOnUse" x1="600" y1="1345.9" x2="594.7" y2="1359.6"/><linearGradient id="as14"><stop offset="0" stop-color="#909090"/><stop offset="0.2" stop-color="#909090"/><stop offset="0.5" stop-color="#a8a8a8"/><stop offset="0.8" stop-color="#e0e0e0"/><stop offset="1" stop-color="#ffffff"/></linearGradient><linearGradient id="a18" href="#as14" gradientUnits="userSpaceOnUse" x1="789" y1="1196.8" x2="802.5" y2="1186"/><linearGradient id="as15"><stop offset="0" stop-color="#ffffff"/><stop offset="0.2" stop-color="#d0d0d0"/><stop offset="0.5" stop-color="#989898"/><stop offset="0.8" stop-color="#909090"/><stop offset="1" stop-color="#909090"/></linearGradient><linearGradient id="a19" href="#as15" gradientUnits="userSpaceOnUse" x1="509.7" y1="1203.3" x2="500.2" y2="1214.5"/><linearGradient id="a20" href="#as0" gradientUnits="userSpaceOnUse" x1="665.5" y1="1085.8" x2="673.2" y2="1070.3"/><linearGradient id="a21" href="#as2" gradientUnits="userSpaceOnUse" x1="788.9" y1="1161" x2="772.2" y2="1165.2"/><linearGradient id="a22" href="#as1" gradientUnits="userSpaceOnUse" x1="643.7" y1="1370.2" x2="644" y2="1352.9"/><linearGradient id="a23" href="#as14" gradientUnits="userSpaceOnUse" x1="758.6" y1="1140.2" x2="772" y2="1129.4"/><linearGradient id="a24" href="#as2" gradientUnits="userSpaceOnUse" x1="758.4" y1="1104.3" x2="741.7" y2="1108.5"/><linearGradient id="as16"><stop offset="0" stop-color="#909090"/><stop offset="0.2" stop-color="#909090"/><stop offset="0.5" stop-color="#a0a0a0"/><stop offset="0.8" stop-color="#ffffff"/><stop offset="1" stop-color="#ffffff"/></linearGradient><linearGradient id="a25" href="#as16" gradientUnits="userSpaceOnUse" x1="548.2" y1="1336.3" x2="555.7" y2="1323.8"/><linearGradient id="a26" href="#as12" gradientUnits="userSpaceOnUse" x1="607.3" y1="1361.4" x2="620" y2="1373.1"/><linearGradient id="as17"><stop offset="0" stop-color="#e0e0e0"/><stop offset="0.2" stop-color="#989898"/><stop offset="0.5" stop-color="#909090"/><stop offset="0.8" stop-color="#909090"/><stop offset="1" stop-color="#909090"/></linearGradient><linearGradient id="a27" href="#as17" gradientUnits="userSpaceOnUse" x1="722.1" y1="1083.8" x2="721.9" y2="1101"/><linearGradient id="as18"><stop offset="0" stop-color="#e0e0e0"/><stop offset="0.2" stop-color="#ffffff"/><stop offset="0.5" stop-color="#c8c8c8"/><stop offset="0.8" stop-color="#989898"/><stop offset="1" stop-color="#909090"/></linearGradient><linearGradient id="a28" href="#as18" gradientUnits="userSpaceOnUse" x1="697" y1="1347.7" x2="700.2" y2="1364.7"/><linearGradient id="as19"><stop offset="0" stop-color="#909090"/><stop offset="0.2" stop-color="#a0a0a0"/><stop offset="0.5" stop-color="#d8d8d8"/><stop offset="0.8" stop-color="#ffffff"/><stop offset="1" stop-color="#e0e0e0"/></linearGradient><linearGradient id="a29" href="#as19" gradientUnits="userSpaceOnUse" x1="497.7" y1="1179.6" x2="512.2" y2="1182"/><linearGradient id="a30" href="#as12" gradientUnits="userSpaceOnUse" x1="538.6" y1="1109.9" x2="551.3" y2="1121.6"/><linearGradient id="a31" href="#as12" gradientUnits="userSpaceOnUse" x1="758.4" y1="1304.3" x2="771.1" y2="1316"/><linearGradient id="as20"><stop offset="0" stop-color="#d8d8d8"/><stop offset="0.2" stop-color="#b8b8b8"/><stop offset="0.5" stop-color="#909090"/><stop offset="0.8" stop-color="#909090"/><stop offset="1" stop-color="#909090"/></linearGradient><linearGradient id="a32" href="#as20" gradientUnits="userSpaceOnUse" x1="506.8" y1="1232.8" x2="492.1" y2="1231.9"/><linearGradient id="as21"><stop offset="0" stop-color="#909090"/><stop offset="0.2" stop-color="#909090"/><stop offset="0.5" stop-color="#909090"/><stop offset="0.8" stop-color="#989898"/><stop offset="1" stop-color="#e8e8e8"/></linearGradient><linearGradient id="a33" href="#as21" gradientUnits="userSpaceOnUse" x1="685.6" y1="1080.5" x2="702.3" y2="1076.3"/><linearGradient id="as22"><stop offset="0" stop-color="#ffffff"/><stop offset="0.2" stop-color="#e0e0e0"/><stop offset="0.5" stop-color="#989898"/><stop offset="0.8" stop-color="#909090"/><stop offset="1" stop-color="#909090"/></linearGradient><linearGradient id="a34" href="#as22" gradientUnits="userSpaceOnUse" x1="596.7" y1="1353.3" x2="586.9" y2="1364.2"/><linearGradient id="as23"><stop offset="0" stop-color="#ffffff"/><stop offset="0.2" stop-color="#f0f0f0"/><stop offset="0.5" stop-color="#a0a0a0"/><stop offset="0.8" stop-color="#909090"/><stop offset="1" stop-color="#909090"/></linearGradient><linearGradient id="a35" href="#as23" gradientUnits="userSpaceOnUse" x1="799.9" y1="1173.7" x2="784.7" y2="1181.9"/><linearGradient id="a36" href="#as5" gradientUnits="userSpaceOnUse" x1="754.3" y1="1125.2" x2="769.5" y2="1117"/><linearGradient id="a37" href="#as4" gradientUnits="userSpaceOnUse" x1="639.9" y1="1376.1" x2="636.7" y2="1359.1"/><linearGradient id="a38" href="#as12" gradientUnits="userSpaceOnUse" x1="497.1" y1="1156.3" x2="509.8" y2="1168"/><linearGradient id="a39" href="#as12" gradientUnits="userSpaceOnUse" x1="716.9" y1="1350.7" x2="729.6" y2="1362.4"/><linearGradient id="as24"><stop offset="0" stop-color="#909090"/><stop offset="0.2" stop-color="#b0b0b0"/><stop offset="0.5" stop-color="#e8e8e8"/><stop offset="0.8" stop-color="#ffffff"/><stop offset="1" stop-color="#f8f8f8"/></linearGradient><linearGradient id="a40" href="#as24" gradientUnits="userSpaceOnUse" x1="564.1" y1="1352.1" x2="563.4" y2="1337.4"/><linearGradient id="as25"><stop offset="0" stop-color="#989898"/><stop offset="0.2" stop-color="#b8b8b8"/><stop offset="0.5" stop-color="#d0d0d0"/><stop offset="0.8" stop-color="#c0c0c0"/><stop offset="1" stop-color="#a0a0a0"/></linearGradient><linearGradient id="a41" href="#as25" gradientUnits="userSpaceOnUse" x1="553.7" y1="1092.8" x2="566.6" y2="1104.3"/><linearGradient id="a42" href="#as25" gradientUnits="userSpaceOnUse" x1="773.5" y1="1287.3" x2="786.4" y2="1298.8"/><linearGradient id="a43" href="#as17" gradientUnits="userSpaceOnUse" x1="693.2" y1="1353.6" x2="693" y2="1370.9"/><linearGradient id="as26"><stop offset="0" stop-color="#909090"/><stop offset="0.2" stop-color="#909090"/><stop offset="0.5" stop-color="#909090"/><stop offset="0.8" stop-color="#909090"/><stop offset="1" stop-color="#d8d8d8"/></linearGradient><linearGradient id="a44" href="#as26" gradientUnits="userSpaceOnUse" x1="492.1" y1="1187.5" x2="506.7" y2="1186.2"/><linearGradient id="as27"><stop offset="0" stop-color="#d8d8d8"/><stop offset="0.2" stop-color="#ffffff"/><stop offset="0.5" stop-color="#ffffff"/><stop offset="0.8" stop-color="#d0d0d0"/><stop offset="1" stop-color="#909090"/></linearGradient><linearGradient id="a45" href="#as27" gradientUnits="userSpaceOnUse" x1="502.9" y1="1221.3" x2="489.1" y2="1216.1"/><linearGradient id="a46" href="#as12" gradientUnits="userSpaceOnUse" x1="669.3" y1="1373.8" x2="656.5" y2="1362.1"/><linearGradient id="as28"><stop offset="0" stop-color="#ffffff"/><stop offset="0.2" stop-color="#e0e0e0"/><stop offset="0.5" stop-color="#a8a8a8"/><stop offset="0.8" stop-color="#909090"/><stop offset="1" stop-color="#909090"/></linearGradient><linearGradient id="a47" href="#as28" gradientUnits="userSpaceOnUse" x1="795.6" y1="1158.7" x2="782.2" y2="1169.5"/><linearGradient id="a48" href="#as11" gradientUnits="userSpaceOnUse" x1="525.1" y1="1150.7" x2="512.2" y2="1139.2"/><linearGradient id="a49" href="#as11" gradientUnits="userSpaceOnUse" x1="744.9" y1="1345.2" x2="732" y2="1333.7"/><linearGradient id="a50" href="#as21" gradientUnits="userSpaceOnUse" x1="765.3" y1="1137.9" x2="782" y2="1133.7"/><linearGradient id="a51" href="#as12" gradientUnits="userSpaceOnUse" x1="540.2" y1="1133.7" x2="527.5" y2="1122"/><linearGradient id="a52" href="#as12" gradientUnits="userSpaceOnUse" x1="760" y1="1328.1" x2="747.3" y2="1316.4"/><linearGradient id="as29"><stop offset="0" stop-color="#909090"/><stop offset="0.2" stop-color="#909090"/><stop offset="0.5" stop-color="#909090"/><stop offset="0.8" stop-color="#909090"/><stop offset="1" stop-color="#a8a8a8"/></linearGradient><linearGradient id="a53" href="#as29" gradientUnits="userSpaceOnUse" x1="505.5" y1="1291.6" x2="513.6" y2="1287.3"/><linearGradient id="as30"><stop offset="0" stop-color="#b8b8b8"/><stop offset="0.2" stop-color="#e0e0e0"/><stop offset="0.5" stop-color="#ffffff"/><stop offset="0.8" stop-color="#f8f8f8"/><stop offset="1" stop-color="#e0e0e0"/></linearGradient><linearGradient id="a54" href="#as30" gradientUnits="userSpaceOnUse" x1="611.3" y1="1071" x2="609.5" y2="1061.2"/><linearGradient id="as31"><stop offset="0" stop-color="#e0e0e0"/><stop offset="0.2" stop-color="#e0e0e0"/><stop offset="0.5" stop-color="#d8d8d8"/><stop offset="0.8" stop-color="#c0c0c0"/><stop offset="1" stop-color="#a0a0a0"/></linearGradient><linearGradient id="a55" href="#as31" gradientUnits="userSpaceOnUse" x1="812.7" y1="1238.9" x2="803" y2="1237.9"/><linearGradient id="as32"><stop offset="0" stop-color="#909090"/><stop offset="0.2" stop-color="#909090"/><stop offset="0.5" stop-color="#909090"/><stop offset="0.8" stop-color="#b0b0b0"/><stop offset="1" stop-color="#e0e0e0"/></linearGradient><linearGradient id="a56" href="#as32" gradientUnits="userSpaceOnUse" x1="665.9" y1="1065.7" x2="666" y2="1055.8"/><linearGradient id="as33"><stop offset="0" stop-color="#909090"/><stop offset="0.2" stop-color="#909090"/><stop offset="0.5" stop-color="#909090"/><stop offset="0.8" stop-color="#989898"/><stop offset="1" stop-color="#c0c0c0"/></linearGradient><linearGradient id="a57" href="#as33" gradientUnits="userSpaceOnUse" x1="533.4" y1="1335.9" x2="541.4" y2="1329.5"/><linearGradient id="as34"><stop offset="0" stop-color="#a0a0a0"/><stop offset="0.2" stop-color="#909090"/><stop offset="0.5" stop-color="#909090"/><stop offset="0.8" stop-color="#909090"/><stop offset="1" stop-color="#909090"/></linearGradient><linearGradient id="a58" href="#as34" gradientUnits="userSpaceOnUse" x1="529.6" y1="1301" x2="516.6" y2="1304.3"/><linearGradient id="as35"><stop offset="0" stop-color="#909090"/><stop offset="0.2" stop-color="#909090"/><stop offset="0.5" stop-color="#909090"/><stop offset="0.8" stop-color="#b8b8b8"/><stop offset="1" stop-color="#e0e0e0"/></linearGradient><linearGradient id="a59" href="#as35" gradientUnits="userSpaceOnUse" x1="503" y1="1279.3" x2="513" y2="1271.2"/><linearGradient id="as36"><stop offset="0" stop-color="#b0b0b0"/><stop offset="0.2" stop-color="#f8f8f8"/><stop offset="0.5" stop-color="#ffffff"/><stop offset="0.8" stop-color="#ffffff"/><stop offset="1" stop-color="#d0d0d0"/></linearGradient><linearGradient id="a60" href="#as36" gradientUnits="userSpaceOnUse" x1="629.3" y1="1064.2" x2="641.1" y2="1075"/><linearGradient id="as37"><stop offset="0" stop-color="#909090"/><stop offset="0.2" stop-color="#b8b8b8"/><stop offset="0.5" stop-color="#f8f8f8"/><stop offset="0.8" stop-color="#ffffff"/><stop offset="1" stop-color="#ffffff"/></linearGradient><linearGradient id="a61" href="#as37" gradientUnits="userSpaceOnUse" x1="717.7" y1="1080.5" x2="722.4" y2="1071"/><linearGradient id="as38"><stop offset="0" stop-color="#c8c8c8"/><stop offset="0.2" stop-color="#f8f8f8"/><stop offset="0.5" stop-color="#ffffff"/><stop offset="0.8" stop-color="#ffffff"/><stop offset="1" stop-color="#d8d8d8"/></linearGradient><linearGradient id="a62" href="#as38" gradientUnits="userSpaceOnUse" x1="798.7" y1="1217.8" x2="809.5" y2="1221.9"/><linearGradient id="as39"><stop offset="0" stop-color="#909090"/><stop offset="0.2" stop-color="#909090"/><stop offset="0.5" stop-color="#909090"/><stop offset="0.8" stop-color="#b0b0b0"/><stop offset="1" stop-color="#f0f0f0"/></linearGradient><linearGradient id="a63" href="#as39" gradientUnits="userSpaceOnUse" x1="576.2" y1="1367" x2="581.4" y2="1356.5"/><linearGradient id="a64" href="#as8" gradientUnits="userSpaceOnUse" x1="806.5" y1="1250.5" x2="795.5" y2="1251.5"/><linearGradient id="as40"><stop offset="0" stop-color="#909090"/><stop offset="0.2" stop-color="#909090"/><stop offset="0.5" stop-color="#909090"/><stop offset="0.8" stop-color="#a8a8a8"/><stop offset="1" stop-color="#e0e0e0"/></linearGradient><linearGradient id="a65" href="#as40" gradientUnits="userSpaceOnUse" x1="605.5" y1="1080" x2="605.6" y2="1067.1"/><linearGradient id="as41"><stop offset="0" stop-color="#e8e8e8"/><stop offset="0.2" stop-color="#b0b0b0"/><stop offset="0.5" stop-color="#909090"/><stop offset="0.8" stop-color="#909090"/><stop offset="1" stop-color="#909090"/></linearGradient><linearGradient id="a66" href="#as41" gradientUnits="userSpaceOnUse" x1="812.5" y1="1190.4" x2="801.3" y2="1193.2"/><linearGradient id="as42"><stop offset="0" stop-color="#f8f8f8"/><stop offset="0.2" stop-color="#ffffff"/><stop offset="0.5" stop-color="#f0f0f0"/><stop offset="0.8" stop-color="#c0c0c0"/><stop offset="1" stop-color="#909090"/></linearGradient><linearGradient id="a67" href="#as42" gradientUnits="userSpaceOnUse" x1="734.5" y1="1085.9" x2="735.1" y2="1099.1"/><linearGradient id="as43"><stop offset="0" stop-color="#b0b0b0"/><stop offset="0.2" stop-color="#f0f0f0"/><stop offset="0.5" stop-color="#ffffff"/><stop offset="0.8" stop-color="#ffffff"/><stop offset="1" stop-color="#f0f0f0"/></linearGradient><linearGradient id="a68" href="#as43" gradientUnits="userSpaceOnUse" x1="569" y1="1075.6" x2="579.2" y2="1085"/><linearGradient id="as44"><stop offset="0" stop-color="#909090"/><stop offset="0.2" stop-color="#a0a0a0"/><stop offset="0.5" stop-color="#c8c8c8"/><stop offset="0.8" stop-color="#f8f8f8"/><stop offset="1" stop-color="#ffffff"/></linearGradient><linearGradient id="a69" href="#as44" gradientUnits="userSpaceOnUse" x1="755.7" y1="1109.6" x2="765.2" y2="1102.1"/><linearGradient id="as45"><stop offset="0" stop-color="#f0f0f0"/><stop offset="0.2" stop-color="#ffffff"/><stop offset="0.5" stop-color="#ffffff"/><stop offset="0.8" stop-color="#f0f0f0"/><stop offset="1" stop-color="#b0b0b0"/></linearGradient><linearGradient id="a70" href="#as45" gradientUnits="userSpaceOnUse" x1="791.4" y1="1272.4" x2="801.5" y2="1281.7"/><linearGradient id="as46"><stop offset="0" stop-color="#e0e0e0"/><stop offset="0.2" stop-color="#f8f8f8"/><stop offset="0.5" stop-color="#f0f0f0"/><stop offset="0.8" stop-color="#c0c0c0"/><stop offset="1" stop-color="#989898"/></linearGradient><linearGradient id="a71" href="#as46" gradientUnits="userSpaceOnUse" x1="658.7" y1="1061.9" x2="661.1" y2="1074.3"/><linearGradient id="as47"><stop offset="0" stop-color="#e0e0e0"/><stop offset="0.2" stop-color="#a8a8a8"/><stop offset="0.5" stop-color="#909090"/><stop offset="0.8" stop-color="#909090"/><stop offset="1" stop-color="#909090"/></linearGradient><linearGradient id="a72" href="#as47" gradientUnits="userSpaceOnUse" x1="539.9" y1="1315.2" x2="529.1" y2="1321"/><linearGradient id="as48"><stop offset="0" stop-color="#d8d8d8"/><stop offset="0.2" stop-color="#b8b8b8"/><stop offset="0.5" stop-color="#989898"/><stop offset="0.8" stop-color="#909090"/><stop offset="1" stop-color="#909090"/></linearGradient><linearGradient id="a73" href="#as48" gradientUnits="userSpaceOnUse" x1="498.3" y1="1200.4" x2="485.9" y2="1199.1"/><linearGradient id="a74" href="#as40" gradientUnits="userSpaceOnUse" x1="498.7" y1="1264.3" x2="509.4" y2="1258.5"/><linearGradient id="as49"><stop offset="0" stop-color="#909090"/><stop offset="0.2" stop-color="#909090"/><stop offset="0.5" stop-color="#b8b8b8"/><stop offset="0.8" stop-color="#f0f0f0"/><stop offset="1" stop-color="#ffffff"/></linearGradient><linearGradient id="a75" href="#as49" gradientUnits="userSpaceOnUse" x1="704" y1="1082.4" x2="711.7" y2="1073.8"/><linearGradient id="as50"><stop offset="0" stop-color="#e8e8e8"/><stop offset="0.2" stop-color="#909090"/><stop offset="0.5" stop-color="#909090"/><stop offset="0.8" stop-color="#909090"/><stop offset="1" stop-color="#909090"/></linearGradient><linearGradient id="a76" href="#as50" gradientUnits="userSpaceOnUse" x1="612.8" y1="1357.6" x2="596.3" y2="1361.7"/><linearGradient id="as51"><stop offset="0" stop-color="#909090"/><stop offset="0.2" stop-color="#909090"/><stop offset="0.5" stop-color="#a8a8a8"/><stop offset="0.8" stop-color="#d8d8d8"/><stop offset="1" stop-color="#ffffff"/></linearGradient><linearGradient id="a77" href="#as51" gradientUnits="userSpaceOnUse" x1="689.1" y1="1376.8" x2="686.8" y2="1364.6"/><linearGradient id="as52"><stop offset="0" stop-color="#909090"/><stop offset="0.2" stop-color="#909090"/><stop offset="0.5" stop-color="#a8a8a8"/><stop offset="0.8" stop-color="#c0c0c0"/><stop offset="1" stop-color="#d8d8d8"/></linearGradient><linearGradient id="a78" href="#as52" gradientUnits="userSpaceOnUse" x1="795.9" y1="1205.5" x2="806.5" y2="1206.1"/><linearGradient id="as53"><stop offset="0" stop-color="#e0e0e0"/><stop offset="0.2" stop-color="#ffffff"/><stop offset="0.5" stop-color="#ffffff"/><stop offset="0.8" stop-color="#d0d0d0"/><stop offset="1" stop-color="#a0a0a0"/></linearGradient><linearGradient id="a79" href="#as53" gradientUnits="userSpaceOnUse" x1="800.9" y1="1258.4" x2="790.3" y2="1256.7"/><linearGradient id="as54"><stop offset="0" stop-color="#989898"/><stop offset="0.2" stop-color="#c0c0c0"/><stop offset="0.5" stop-color="#f0f0f0"/><stop offset="0.8" stop-color="#f8f8f8"/><stop offset="1" stop-color="#e0e0e0"/></linearGradient><linearGradient id="a80" href="#as54" gradientUnits="userSpaceOnUse" x1="600.7" y1="1085.7" x2="598.4" y2="1073.3"/><linearGradient id="as55"><stop offset="0" stop-color="#909090"/><stop offset="0.2" stop-color="#909090"/><stop offset="0.5" stop-color="#909090"/><stop offset="0.8" stop-color="#909090"/><stop offset="1" stop-color="#b8b8b8"/></linearGradient><linearGradient id="a81" href="#as55" gradientUnits="userSpaceOnUse" x1="576.5" y1="1354.2" x2="576.7" y2="1339.3"/><linearGradient id="a82" href="#as12" gradientUnits="userSpaceOnUse" x1="678.6" y1="1064.9" x2="691.1" y2="1076.5"/><linearGradient id="as56"><stop offset="0" stop-color="#909090"/><stop offset="0.2" stop-color="#909090"/><stop offset="0.5" stop-color="#c0c0c0"/><stop offset="0.8" stop-color="#ffffff"/><stop offset="1" stop-color="#ffffff"/></linearGradient><linearGradient id="a83" href="#as56" gradientUnits="userSpaceOnUse" x1="781.5" y1="1152.6" x2="793.1" y2="1146.4"/><linearGradient id="as57"><stop offset="0" stop-color="#ffffff"/><stop offset="0.2" stop-color="#ffffff"/><stop offset="0.5" stop-color="#c8c8c8"/><stop offset="0.8" stop-color="#909090"/><stop offset="1" stop-color="#909090"/></linearGradient><linearGradient id="a84" href="#as57" gradientUnits="userSpaceOnUse" x1="750.4" y1="1101.7" x2="744.7" y2="1111.3"/><linearGradient id="as58"><stop offset="0" stop-color="#c8c8c8"/><stop offset="0.2" stop-color="#909090"/><stop offset="0.5" stop-color="#909090"/><stop offset="0.8" stop-color="#909090"/><stop offset="1" stop-color="#909090"/></linearGradient><linearGradient id="a85" href="#as58" gradientUnits="userSpaceOnUse" x1="555.3" y1="1329.9" x2="540.2" y2="1333.7"/><linearGradient id="as59"><stop offset="0" stop-color="#ffffff"/><stop offset="0.2" stop-color="#d8d8d8"/><stop offset="0.5" stop-color="#a0a0a0"/><stop offset="0.8" stop-color="#909090"/><stop offset="1" stop-color="#909090"/></linearGradient><linearGradient id="a86" href="#as59" gradientUnits="userSpaceOnUse" x1="711.2" y1="1348.6" x2="702.4" y2="1360.1"/><linearGradient id="as60"><stop offset="0" stop-color="#e0e0e0"/><stop offset="0.2" stop-color="#b8b8b8"/><stop offset="0.5" stop-color="#909090"/><stop offset="0.8" stop-color="#909090"/><stop offset="1" stop-color="#909090"/></linearGradient><linearGradient id="a87" href="#as60" gradientUnits="userSpaceOnUse" x1="536.6" y1="1300.6" x2="526.6" y2="1308.6"/><linearGradient id="a88" href="#as14" gradientUnits="userSpaceOnUse" x1="502.9" y1="1188.3" x2="516" y2="1177.7"/><linearGradient id="a89" href="#as47" gradientUnits="userSpaceOnUse" x1="654.9" y1="1067.8" x2="654.7" y2="1080.8"/><linearGradient id="as61"><stop offset="0" stop-color="#909090"/><stop offset="0.2" stop-color="#909090"/><stop offset="0.5" stop-color="#909090"/><stop offset="0.8" stop-color="#909090"/><stop offset="1" stop-color="#a0a0a0"/></linearGradient><linearGradient id="a90" href="#as61" gradientUnits="userSpaceOnUse" x1="509.7" y1="1277" x2="522.7" y2="1273.7"/><linearGradient id="as62"><stop offset="0" stop-color="#ffffff"/><stop offset="0.2" stop-color="#d0d0d0"/><stop offset="0.5" stop-color="#909090"/><stop offset="0.8" stop-color="#909090"/><stop offset="1" stop-color="#909090"/></linearGradient><linearGradient id="a91" href="#as62" gradientUnits="userSpaceOnUse" x1="631.8" y1="1355" x2="625.4" y2="1367.7"/><linearGradient id="as63"><stop offset="0" stop-color="#909090"/><stop offset="0.2" stop-color="#909090"/><stop offset="0.5" stop-color="#989898"/><stop offset="0.8" stop-color="#d8d8d8"/><stop offset="1" stop-color="#ffffff"/></linearGradient><linearGradient id="a92" href="#as63" gradientUnits="userSpaceOnUse" x1="789.1" y1="1234.4" x2="798.4" y2="1223.5"/><linearGradient id="as64"><stop offset="0" stop-color="#909090"/><stop offset="0.2" stop-color="#909090"/><stop offset="0.5" stop-color="#989898"/><stop offset="0.8" stop-color="#d0d0d0"/><stop offset="1" stop-color="#ffffff"/></linearGradient><linearGradient id="a93" href="#as64" gradientUnits="userSpaceOnUse" x1="496.1" y1="1252" x2="508" y2="1242.4"/><linearGradient id="as65"><stop offset="0" stop-color="#909090"/><stop offset="0.2" stop-color="#a0a0a0"/><stop offset="0.5" stop-color="#d8d8d8"/><stop offset="0.8" stop-color="#ffffff"/><stop offset="1" stop-color="#ffffff"/></linearGradient><linearGradient id="a94" href="#as65" gradientUnits="userSpaceOnUse" x1="699.7" y1="1089.1" x2="703.9" y2="1078.4"/><linearGradient id="as66"><stop offset="0" stop-color="#b8b8b8"/><stop offset="0.2" stop-color="#d0d0d0"/><stop offset="0.5" stop-color="#c8c8c8"/><stop offset="0.8" stop-color="#b8b8b8"/><stop offset="1" stop-color="#989898"/></linearGradient><linearGradient id="a95" href="#as66" gradientUnits="userSpaceOnUse" x1="552.8" y1="1114" x2="542.6" y2="1104.9"/><linearGradient id="as67"><stop offset="0" stop-color="#d0d0d0"/><stop offset="0.2" stop-color="#ffffff"/><stop offset="0.5" stop-color="#ffffff"/><stop offset="0.8" stop-color="#f8f8f8"/><stop offset="1" stop-color="#b0b0b0"/></linearGradient><linearGradient id="a96" href="#as67" gradientUnits="userSpaceOnUse" x1="630" y1="1087.1" x2="618.2" y2="1076.3"/><linearGradient id="as68"><stop offset="0" stop-color="#a0a0a0"/><stop offset="0.2" stop-color="#b8b8b8"/><stop offset="0.5" stop-color="#d0d0d0"/><stop offset="0.8" stop-color="#c8c8c8"/><stop offset="1" stop-color="#b8b8b8"/></linearGradient><linearGradient id="a97" href="#as68" gradientUnits="userSpaceOnUse" x1="775.3" y1="1310.9" x2="764.9" y2="1301.5"/><linearGradient id="as69"><stop offset="0" stop-color="#989898"/><stop offset="0.2" stop-color="#d0d0d0"/><stop offset="0.5" stop-color="#ffffff"/><stop offset="0.8" stop-color="#ffffff"/><stop offset="1" stop-color="#e0e0e0"/></linearGradient><linearGradient id="a98" href="#as69" gradientUnits="userSpaceOnUse" x1="788.9" y1="1200.8" x2="803.5" y2="1204.2"/><linearGradient id="a99" href="#as57" gradientUnits="userSpaceOnUse" x1="781.9" y1="1165.5" x2="778" y2="1182.1"/><linearGradient id="as70"><stop offset="0" stop-color="#ffffff"/><stop offset="0.2" stop-color="#ffffff"/><stop offset="0.5" stop-color="#d8d8d8"/><stop offset="0.8" stop-color="#a0a0a0"/><stop offset="1" stop-color="#909090"/></linearGradient><linearGradient id="a100" href="#as70" gradientUnits="userSpaceOnUse" x1="732.9" y1="1100.9" x2="719.7" y2="1104.9"/><linearGradient id="as71"><stop offset="0" stop-color="#d8d8d8"/><stop offset="0.2" stop-color="#a8a8a8"/><stop offset="0.5" stop-color="#909090"/><stop offset="0.8" stop-color="#909090"/><stop offset="1" stop-color="#909090"/></linearGradient><linearGradient id="a101" href="#as71" gradientUnits="userSpaceOnUse" x1="798.3" y1="1253.8" x2="783.4" y2="1253.8"/><linearGradient id="as72"><stop offset="0" stop-color="#909090"/><stop offset="0.2" stop-color="#909090"/><stop offset="0.5" stop-color="#909090"/><stop offset="0.8" stop-color="#d0d0d0"/><stop offset="1" stop-color="#ffffff"/></linearGradient><linearGradient id="a102" href="#as72" gradientUnits="userSpaceOnUse" x1="569.3" y1="1339.7" x2="575.6" y2="1327"/><linearGradient id="as73"><stop offset="0" stop-color="#909090"/><stop offset="0.2" stop-color="#c0c0c0"/><stop offset="0.5" stop-color="#ffffff"/><stop offset="0.8" stop-color="#ffffff"/><stop offset="1" stop-color="#e0e0e0"/></linearGradient><linearGradient id="a103" href="#as73" gradientUnits="userSpaceOnUse" x1="757" y1="1143.7" x2="773.1" y2="1147.6"/><linearGradient id="as74"><stop offset="0" stop-color="#c8c8c8"/><stop offset="0.2" stop-color="#b8b8b8"/><stop offset="0.5" stop-color="#a0a0a0"/><stop offset="0.8" stop-color="#909090"/><stop offset="1" stop-color="#909090"/></linearGradient><linearGradient id="a104" href="#as74" gradientUnits="userSpaceOnUse" x1="720.5" y1="1332.4" x2="724.4" y2="1344.1"/><linearGradient id="as75"><stop offset="0" stop-color="#909090"/><stop offset="0.2" stop-color="#989898"/><stop offset="0.5" stop-color="#d0d0d0"/><stop offset="0.8" stop-color="#ffffff"/><stop offset="1" stop-color="#ffffff"/></linearGradient><linearGradient id="a105" href="#as75" gradientUnits="userSpaceOnUse" x1="747.7" y1="1124.4" x2="751.4" y2="1108.8"/><linearGradient id="as76"><stop offset="0" stop-color="#909090"/><stop offset="0.2" stop-color="#909090"/><stop offset="0.5" stop-color="#909090"/><stop offset="0.8" stop-color="#a0a0a0"/><stop offset="1" stop-color="#e0e0e0"/></linearGradient><linearGradient id="a106" href="#as76" gradientUnits="userSpaceOnUse" x1="594.3" y1="1094.3" x2="594.6" y2="1079.2"/><linearGradient id="as77"><stop offset="0" stop-color="#909090"/><stop offset="0.2" stop-color="#909090"/><stop offset="0.5" stop-color="#a0a0a0"/><stop offset="0.8" stop-color="#c8c8c8"/><stop offset="1" stop-color="#e0e0e0"/></linearGradient><linearGradient id="a107" href="#as77" gradientUnits="userSpaceOnUse" x1="516.3" y1="1164.8" x2="531" y2="1166.4"/><linearGradient id="as78"><stop offset="0" stop-color="#909090"/><stop offset="0.2" stop-color="#989898"/><stop offset="0.5" stop-color="#d8d8d8"/><stop offset="0.8" stop-color="#ffffff"/><stop offset="1" stop-color="#ffffff"/></linearGradient><linearGradient id="a108" href="#as78" gradientUnits="userSpaceOnUse" x1="565.4" y1="1105.7" x2="579.8" y2="1103.3"/><linearGradient id="a109" href="#as2" gradientUnits="userSpaceOnUse" x1="662.3" y1="1358.2" x2="645.5" y2="1362.4"/><linearGradient id="a110" href="#as57" gradientUnits="userSpaceOnUse" x1="770.9" y1="1268.6" x2="766.9" y2="1285.4"/><linearGradient id="as79"><stop offset="0" stop-color="#e0e0e0"/><stop offset="0.2" stop-color="#c8c8c8"/><stop offset="0.5" stop-color="#a0a0a0"/><stop offset="0.8" stop-color="#909090"/><stop offset="1" stop-color="#909090"/></linearGradient><linearGradient id="a111" href="#as79" gradientUnits="userSpaceOnUse" x1="524.2" y1="1230.1" x2="509.5" y2="1228.5"/><linearGradient id="as80"><stop offset="0" stop-color="#909090"/><stop offset="0.2" stop-color="#909090"/><stop offset="0.5" stop-color="#909090"/><stop offset="0.8" stop-color="#c8c8c8"/><stop offset="1" stop-color="#ffffff"/></linearGradient><linearGradient id="a112" href="#as80" gradientUnits="userSpaceOnUse" x1="522.3" y1="1293.7" x2="535" y2="1286.8"/><linearGradient id="as81"><stop offset="0" stop-color="#b8b8b8"/><stop offset="0.2" stop-color="#909090"/><stop offset="0.5" stop-color="#909090"/><stop offset="0.8" stop-color="#909090"/><stop offset="1" stop-color="#909090"/></linearGradient><linearGradient id="a113" href="#as81" gradientUnits="userSpaceOnUse" x1="625.9" y1="1340.1" x2="625.7" y2="1354.9"/><linearGradient id="as82"><stop offset="0" stop-color="#909090"/><stop offset="0.2" stop-color="#909090"/><stop offset="0.5" stop-color="#909090"/><stop offset="0.8" stop-color="#989898"/><stop offset="1" stop-color="#c8c8c8"/></linearGradient><linearGradient id="a114" href="#as82" gradientUnits="userSpaceOnUse" x1="553.4" y1="1133.8" x2="550" y2="1120.6"/><linearGradient id="as83"><stop offset="0" stop-color="#909090"/><stop offset="0.2" stop-color="#a8a8a8"/><stop offset="0.5" stop-color="#e0e0e0"/><stop offset="0.8" stop-color="#ffffff"/><stop offset="1" stop-color="#e0e0e0"/></linearGradient><linearGradient id="a115" href="#as83" gradientUnits="userSpaceOnUse" x1="650.4" y1="1088.8" x2="647.6" y2="1074"/><linearGradient id="as84"><stop offset="0" stop-color="#909090"/><stop offset="0.2" stop-color="#909090"/><stop offset="0.5" stop-color="#a8a8a8"/><stop offset="0.8" stop-color="#f0f0f0"/><stop offset="1" stop-color="#ffffff"/></linearGradient><linearGradient id="a116" href="#as84" gradientUnits="userSpaceOnUse" x1="700.1" y1="1100" x2="709.1" y2="1087.6"/><linearGradient id="a117" href="#as6" gradientUnits="userSpaceOnUse" x1="673.4" y1="1353.7" x2="673.2" y2="1340.8"/><linearGradient id="a118" href="#as8" gradientUnits="userSpaceOnUse" x1="756.7" y1="1300.2" x2="740.3" y2="1300.2"/><linearGradient id="as85"><stop offset="0" stop-color="#ffffff"/><stop offset="0.2" stop-color="#ffffff"/><stop offset="0.5" stop-color="#b0b0b0"/><stop offset="0.8" stop-color="#909090"/><stop offset="1" stop-color="#909090"/></linearGradient><linearGradient id="a119" href="#as85" gradientUnits="userSpaceOnUse" x1="782" y1="1193.2" x2="768.4" y2="1200.5"/><linearGradient id="as86"><stop offset="0" stop-color="#909090"/><stop offset="0.2" stop-color="#909090"/><stop offset="0.5" stop-color="#909090"/><stop offset="0.8" stop-color="#909090"/><stop offset="1" stop-color="#e8e8e8"/></linearGradient><linearGradient id="a120" href="#as86" gradientUnits="userSpaceOnUse" x1="589.4" y1="1334.4" x2="605.9" y2="1330.3"/><linearGradient id="as87"><stop offset="0" stop-color="#909090"/><stop offset="0.2" stop-color="#909090"/><stop offset="0.5" stop-color="#b0b0b0"/><stop offset="0.8" stop-color="#ffffff"/><stop offset="1" stop-color="#ffffff"/></linearGradient><linearGradient id="a121" href="#as87" gradientUnits="userSpaceOnUse" x1="737.9" y1="1143.9" x2="751.5" y2="1136.6"/><linearGradient id="as88"><stop offset="0" stop-color="#a8a8a8"/><stop offset="0.2" stop-color="#a8a8a8"/><stop offset="0.5" stop-color="#a8a8a8"/><stop offset="0.8" stop-color="#989898"/><stop offset="1" stop-color="#909090"/></linearGradient><linearGradient id="a122" href="#as88" gradientUnits="userSpaceOnUse" x1="592.8" y1="1099" x2="600.8" y2="1109.5"/><linearGradient id="a123" href="#as29" gradientUnits="userSpaceOnUse" x1="694.8" y1="1329.7" x2="708.2" y2="1334.8"/><linearGradient id="as89"><stop offset="0" stop-color="#a8a8a8"/><stop offset="0.2" stop-color="#c0c0c0"/><stop offset="0.5" stop-color="#d0d0d0"/><stop offset="0.8" stop-color="#b8b8b8"/><stop offset="1" stop-color="#a0a0a0"/></linearGradient><linearGradient id="a124" href="#as89" gradientUnits="userSpaceOnUse" x1="763.3" y1="1243.9" x2="775.3" y2="1254.6"/><linearGradient id="a125" href="#as6" gradientUnits="userSpaceOnUse" x1="725.3" y1="1331.8" x2="729.3" y2="1315.2"/><linearGradient id="as90"><stop offset="0" stop-color="#b0b0b0"/><stop offset="0.2" stop-color="#909090"/><stop offset="0.5" stop-color="#909090"/><stop offset="0.8" stop-color="#909090"/><stop offset="1" stop-color="#909090"/></linearGradient><linearGradient id="a126" href="#as90" gradientUnits="userSpaceOnUse" x1="558.8" y1="1300" x2="544.9" y2="1295.4"/><linearGradient id="a127" href="#as14" gradientUnits="userSpaceOnUse" x1="533.3" y1="1153.9" x2="546.8" y2="1143.1"/><linearGradient id="a128" href="#as10" gradientUnits="userSpaceOnUse" x1="665.5" y1="1098.2" x2="682.3" y2="1102.2"/><linearGradient id="as91"><stop offset="0" stop-color="#909090"/><stop offset="0.2" stop-color="#909090"/><stop offset="0.5" stop-color="#909090"/><stop offset="0.8" stop-color="#b8b8b8"/><stop offset="1" stop-color="#f8f8f8"/></linearGradient><linearGradient id="a129" href="#as91" gradientUnits="userSpaceOnUse" x1="534.1" y1="1276.2" x2="539.1" y2="1262.8"/><linearGradient id="as92"><stop offset="0" stop-color="#909090"/><stop offset="0.2" stop-color="#909090"/><stop offset="0.5" stop-color="#909090"/><stop offset="0.8" stop-color="#909090"/><stop offset="1" stop-color="#d0d0d0"/></linearGradient><linearGradient id="a130" href="#as92" gradientUnits="userSpaceOnUse" x1="569.6" y1="1326.9" x2="569.8" y2="1310.5"/><linearGradient id="a131" href="#as28" gradientUnits="userSpaceOnUse" x1="539.6" y1="1207.1" x2="526.5" y2="1217.6"/><linearGradient id="a132" href="#as5" gradientUnits="userSpaceOnUse" x1="638.9" y1="1112.5" x2="648.7" y2="1098.9"/><linearGradient id="as93"><stop offset="0" stop-color="#d0d0d0"/><stop offset="0.2" stop-color="#ffffff"/><stop offset="0.5" stop-color="#f8f8f8"/><stop offset="0.8" stop-color="#c0c0c0"/><stop offset="1" stop-color="#909090"/></linearGradient><linearGradient id="a133" href="#as93" gradientUnits="userSpaceOnUse" x1="569.1" y1="1145.5" x2="557.2" y2="1138.8"/><linearGradient id="as94"><stop offset="0" stop-color="#e0e0e0"/><stop offset="0.2" stop-color="#ffffff"/><stop offset="0.5" stop-color="#d0d0d0"/><stop offset="0.8" stop-color="#989898"/><stop offset="1" stop-color="#909090"/></linearGradient><linearGradient id="a134" href="#as94" gradientUnits="userSpaceOnUse" x1="696.9" y1="1109.5" x2="700" y2="1125.9"/><linearGradient id="a135" href="#as6" gradientUnits="userSpaceOnUse" x1="766.8" y1="1229.1" x2="770.8" y2="1212.3"/><linearGradient id="as95"><stop offset="0" stop-color="#a0a0a0"/><stop offset="0.2" stop-color="#b8b8b8"/><stop offset="0.5" stop-color="#d0d0d0"/><stop offset="0.8" stop-color="#c0c0c0"/><stop offset="1" stop-color="#a8a8a8"/></linearGradient><linearGradient id="a136" href="#as95" gradientUnits="userSpaceOnUse" x1="733.8" y1="1301" x2="721.8" y2="1290.3"/><linearGradient id="as96"><stop offset="0" stop-color="#e0e0e0"/><stop offset="0.2" stop-color="#ffffff"/><stop offset="0.5" stop-color="#ffffff"/><stop offset="0.8" stop-color="#c0c0c0"/><stop offset="1" stop-color="#909090"/></linearGradient><linearGradient id="a137" href="#as96" gradientUnits="userSpaceOnUse" x1="762" y1="1194.4" x2="745.9" y2="1190.6"/><linearGradient id="as97"><stop offset="0" stop-color="#909090"/><stop offset="0.2" stop-color="#909090"/><stop offset="0.5" stop-color="#909090"/><stop offset="0.8" stop-color="#989898"/><stop offset="1" stop-color="#b0b0b0"/></linearGradient><linearGradient id="a138" href="#as97" gradientUnits="userSpaceOnUse" x1="682.4" y1="1340.3" x2="675.1" y2="1325.7"/><linearGradient id="a139" href="#as16" gradientUnits="userSpaceOnUse" x1="618.6" y1="1340.4" x2="625.8" y2="1325.9"/><linearGradient id="a140" href="#as6" gradientUnits="userSpaceOnUse" x1="736.4" y1="1172.2" x2="740.4" y2="1155.7"/><linearGradient id="as98"><stop offset="0" stop-color="#f8f8f8"/><stop offset="0.2" stop-color="#b8b8b8"/><stop offset="0.5" stop-color="#909090"/><stop offset="0.8" stop-color="#909090"/><stop offset="1" stop-color="#909090"/></linearGradient><linearGradient id="a141" href="#as98" gradientUnits="userSpaceOnUse" x1="594.5" y1="1121.5" x2="588.9" y2="1135"/><linearGradient id="as99"><stop offset="0" stop-color="#ffffff"/><stop offset="0.2" stop-color="#f8f8f8"/><stop offset="0.5" stop-color="#a0a0a0"/><stop offset="0.8" stop-color="#909090"/><stop offset="1" stop-color="#909090"/></linearGradient><linearGradient id="a142" href="#as99" gradientUnits="userSpaceOnUse" x1="581.4" y1="1293.8" x2="571" y2="1302.9"/><linearGradient id="a143" href="#as10" gradientUnits="userSpaceOnUse" x1="605.1" y1="1109.6" x2="621.9" y2="1113.6"/><linearGradient id="as100"><stop offset="0" stop-color="#909090"/><stop offset="0.2" stop-color="#909090"/><stop offset="0.5" stop-color="#909090"/><stop offset="0.8" stop-color="#a0a0a0"/><stop offset="1" stop-color="#d8d8d8"/></linearGradient><linearGradient id="a144" href="#as100" gradientUnits="userSpaceOnUse" x1="740.2" y1="1243.9" x2="756.7" y2="1243.9"/><linearGradient id="a145" href="#as10" gradientUnits="userSpaceOnUse" x1="714.7" y1="1133.7" x2="731.5" y2="1137.7"/><linearGradient id="as101"><stop offset="0" stop-color="#909090"/><stop offset="0.2" stop-color="#909090"/><stop offset="0.5" stop-color="#909090"/><stop offset="0.8" stop-color="#b8b8b8"/><stop offset="1" stop-color="#f0f0f0"/></linearGradient><linearGradient id="a146" href="#as101" gradientUnits="userSpaceOnUse" x1="544.8" y1="1254.1" x2="558.3" y2="1250.5"/><linearGradient id="a147" href="#as8" gradientUnits="userSpaceOnUse" x1="659.1" y1="1318.5" x2="641.8" y2="1318.6"/><linearGradient id="as102"><stop offset="0" stop-color="#e0e0e0"/><stop offset="0.2" stop-color="#d8d8d8"/><stop offset="0.5" stop-color="#a8a8a8"/><stop offset="0.8" stop-color="#909090"/><stop offset="1" stop-color="#909090"/></linearGradient><linearGradient id="a148" href="#as102" gradientUnits="userSpaceOnUse" x1="556.3" y1="1195.9" x2="539.9" y2="1194.2"/><linearGradient id="a149" href="#as6" gradientUnits="userSpaceOnUse" x1="725.3" y1="1275.5" x2="729.3" y2="1258.7"/><linearGradient id="as103"><stop offset="0" stop-color="#909090"/><stop offset="0.2" stop-color="#989898"/><stop offset="0.5" stop-color="#d0d0d0"/><stop offset="0.8" stop-color="#ffffff"/><stop offset="1" stop-color="#e0e0e0"/></linearGradient><linearGradient id="a150" href="#as103" gradientUnits="userSpaceOnUse" x1="639.6" y1="1137.3" x2="636.5" y2="1120.8"/><linearGradient id="a151" href="#as23" gradientUnits="userSpaceOnUse" x1="698" y1="1134.4" x2="688.2" y2="1148"/><linearGradient id="a152" href="#as7" gradientUnits="userSpaceOnUse" x1="682.3" y1="1296.8" x2="674.6" y2="1312.2"/><linearGradient id="as104"><stop offset="0" stop-color="#909090"/><stop offset="0.2" stop-color="#909090"/><stop offset="0.5" stop-color="#909090"/><stop offset="0.8" stop-color="#989898"/><stop offset="1" stop-color="#b8b8b8"/></linearGradient><linearGradient id="a153" href="#as104" gradientUnits="userSpaceOnUse" x1="626.3" y1="1312.3" x2="618.6" y2="1296.9"/><linearGradient id="as105"><stop offset="0" stop-color="#909090"/><stop offset="0.2" stop-color="#909090"/><stop offset="0.5" stop-color="#909090"/><stop offset="0.8" stop-color="#a0a0a0"/><stop offset="1" stop-color="#b8b8b8"/></linearGradient><linearGradient id="a154" href="#as105" gradientUnits="userSpaceOnUse" x1="583.6" y1="1156.5" x2="576" y2="1141.4"/><linearGradient id="a155" href="#as90" gradientUnits="userSpaceOnUse" x1="573.6" y1="1263.2" x2="579.4" y2="1276.7"/><linearGradient id="a156" href="#as3" gradientUnits="userSpaceOnUse" x1="571.5" y1="1188" x2="581.6" y2="1174"/><linearGradient id="a157" href="#as8" gradientUnits="userSpaceOnUse" x1="715.2" y1="1290.3" x2="697.9" y2="1290.3"/><linearGradient id="a158" href="#as8" gradientUnits="userSpaceOnUse" x1="603" y1="1290.5" x2="585.7" y2="1290.5"/><linearGradient id="as106"><stop offset="0" stop-color="#909090"/><stop offset="0.2" stop-color="#909090"/><stop offset="0.5" stop-color="#a0a0a0"/><stop offset="0.8" stop-color="#f8f8f8"/><stop offset="1" stop-color="#ffffff"/></linearGradient><linearGradient id="a159" href="#as106" gradientUnits="userSpaceOnUse" x1="725.6" y1="1191.3" x2="740.4" y2="1183.4"/><linearGradient id="a160" href="#as104" gradientUnits="userSpaceOnUse" x1="577" y1="1220.5" x2="569.2" y2="1205.1"/><linearGradient id="as107"><stop offset="0" stop-color="#e0e0e0"/><stop offset="0.2" stop-color="#ffffff"/><stop offset="0.5" stop-color="#ffffff"/><stop offset="0.8" stop-color="#b8b8b8"/><stop offset="1" stop-color="#909090"/></linearGradient><linearGradient id="a161" href="#as107" gradientUnits="userSpaceOnUse" x1="671.2" y1="1149.1" x2="654.4" y2="1145.1"/><linearGradient id="a162" href="#as3" gradientUnits="userSpaceOnUse" x1="564.6" y1="1251.7" x2="574.7" y2="1237.7"/><linearGradient id="as108"><stop offset="0" stop-color="#f8f8f8"/><stop offset="0.2" stop-color="#ffffff"/><stop offset="0.5" stop-color="#b8b8b8"/><stop offset="0.8" stop-color="#909090"/><stop offset="1" stop-color="#909090"/></linearGradient><linearGradient id="a163" href="#as108" gradientUnits="userSpaceOnUse" x1="723" y1="1204.8" x2="721" y2="1219.4"/><linearGradient id="as109"><stop offset="0" stop-color="#909090"/><stop offset="0.2" stop-color="#909090"/><stop offset="0.5" stop-color="#b0b0b0"/><stop offset="0.8" stop-color="#d8d8d8"/><stop offset="1" stop-color="#e0e0e0"/></linearGradient><linearGradient id="a164" href="#as109" gradientUnits="userSpaceOnUse" x1="596" y1="1165.9" x2="613.1" y2="1167.8"/><linearGradient id="a165" href="#as11" gradientUnits="userSpaceOnUse" x1="733.7" y1="1244.8" x2="721" y2="1233.4"/><linearGradient id="as110"><stop offset="0" stop-color="#b8b8b8"/><stop offset="0.2" stop-color="#989898"/><stop offset="0.5" stop-color="#909090"/><stop offset="0.8" stop-color="#909090"/><stop offset="1" stop-color="#909090"/></linearGradient><linearGradient id="a166" href="#as110" gradientUnits="userSpaceOnUse" x1="674.7" y1="1268.7" x2="682.4" y2="1284"/><linearGradient id="a167" href="#as0" gradientUnits="userSpaceOnUse" x1="618.5" y1="1284.1" x2="626.2" y2="1268.8"/><linearGradient id="as111"><stop offset="0" stop-color="#909090"/><stop offset="0.2" stop-color="#a0a0a0"/><stop offset="0.5" stop-color="#c0c0c0"/><stop offset="0.8" stop-color="#d0d0d0"/><stop offset="1" stop-color="#c0c0c0"/></linearGradient><linearGradient id="a168" href="#as111" gradientUnits="userSpaceOnUse" x1="700" y1="1180.8" x2="713.5" y2="1186.7"/><linearGradient id="as112"><stop offset="0" stop-color="#e0e0e0"/><stop offset="0.2" stop-color="#d8d8d8"/><stop offset="0.5" stop-color="#b0b0b0"/><stop offset="0.8" stop-color="#909090"/><stop offset="1" stop-color="#909090"/></linearGradient><linearGradient id="a169" href="#as112" gradientUnits="userSpaceOnUse" x1="606.3" y1="1231.5" x2="589.1" y2="1229.6"/><linearGradient id="a170" href="#as3" gradientUnits="userSpaceOnUse" x1="627.6" y1="1159.8" x2="637.6" y2="1145.7"/><linearGradient id="a171" href="#as4" gradientUnits="userSpaceOnUse" x1="689" y1="1173.3" x2="685.8" y2="1156.3"/><linearGradient id="as113"><stop offset="0" stop-color="#f0f0f0"/><stop offset="0.2" stop-color="#e8e8e8"/><stop offset="0.5" stop-color="#a0a0a0"/><stop offset="0.8" stop-color="#909090"/><stop offset="1" stop-color="#909090"/></linearGradient><linearGradient id="a172" href="#as113" gradientUnits="userSpaceOnUse" x1="708.5" y1="1233.9" x2="694" y2="1236.7"/><linearGradient id="a173" href="#as100" gradientUnits="userSpaceOnUse" x1="641.8" y1="1262.3" x2="659.1" y2="1262.3"/><linearGradient id="a174" href="#as110" gradientUnits="userSpaceOnUse" x1="625.3" y1="1176.9" x2="633.1" y2="1192.3"/><linearGradient id="a175" href="#as16" gradientUnits="userSpaceOnUse" x1="671.5" y1="1194.7" x2="681.7" y2="1184.2"/><linearGradient id="as114"><stop offset="0" stop-color="#ffffff"/><stop offset="0.2" stop-color="#e8e8e8"/><stop offset="0.5" stop-color="#989898"/><stop offset="0.8" stop-color="#909090"/><stop offset="1" stop-color="#909090"/></linearGradient><linearGradient id="a176" href="#as114" gradientUnits="userSpaceOnUse" x1="630.8" y1="1209.4" x2="620.7" y2="1223.5"/><linearGradient id="as115"><stop offset="0" stop-color="#909090"/><stop offset="0.2" stop-color="#a8a8a8"/><stop offset="0.5" stop-color="#d8d8d8"/><stop offset="0.8" stop-color="#e0e0e0"/><stop offset="1" stop-color="#c0c0c0"/></linearGradient><linearGradient id="a177" href="#as115" gradientUnits="userSpaceOnUse" x1="676.8" y1="1227.7" x2="669.6" y2="1214.9"/><linearGradient id="a178" href="#as0" gradientUnits="userSpaceOnUse" x1="674.6" y1="1255.9" x2="682.3" y2="1240.5"/><linearGradient id="a179" href="#as104" gradientUnits="userSpaceOnUse" x1="626.2" y1="1256" x2="618.5" y2="1240.6"/><linearGradient id="a180" href="#as112" gradientUnits="userSpaceOnUse" x1="662.4" y1="1203.3" x2="645.2" y2="1201.4"/></defs><path d="M704.3,1119.3C698.4,1103 664.7,1086.2 648.1,1091.3C654,1107.6 687.7,1124.5 704.3,1119.3Z" fill="url(#a0)"/><path d="M753.5,1120.1C743.8,1107.9 714.3,1107.5 704.3,1119.3C713.9,1131.5 743.5,1131.9 753.5,1120.1Z" fill="url(#a1)"/><path d="M697.4,1092C687.1,1100.4 691.3,1116.8 704.3,1119.3C714.5,1111 710.4,1094.6 697.4,1092Z" fill="url(#a2)"/><path d="M619.2,1361.2C616.3,1344.4 586.8,1323.1 569.9,1325.7C572.8,1342.5 602.4,1363.8 619.2,1361.2Z" fill="url(#a3)"/><path d="M679.6,1349.8C665.3,1340.3 629.1,1347.1 619.2,1361.2C633.5,1370.7 669.7,1363.9 679.6,1349.8Z" fill="url(#a4)"/><path d="M697.4,1092C687.7,1079.9 658.2,1079.5 648.1,1091.3C657.8,1103.4 687.4,1103.9 697.4,1092Z" fill="url(#a5)"/><path d="M784,1176.7C788.4,1159.7 770.1,1125.7 753.5,1120.1C749.1,1137.1 767.3,1171.1 784,1176.7Z" fill="url(#a6)"/><path d="M641.2,1064C631,1072.4 635.1,1088.8 648.1,1091.3C658.4,1082.9 654.2,1066.6 641.2,1064Z" fill="url(#a7)"/><path d="M728.8,1350.5C719.1,1338.4 689.6,1338 679.6,1349.8C689.2,1361.9 718.8,1362.4 728.8,1350.5Z" fill="url(#a8)"/><path d="M569.9,1325.7C564.4,1312.1 539.5,1306.2 528.4,1315.8C533.9,1329.5 558.9,1335.4 569.9,1325.7Z" fill="url(#a9)"/><path d="M697.4,1092C703.3,1108.4 736.9,1125.2 753.5,1120.1C747.6,1103.7 713.9,1086.9 697.4,1092Z" fill="url(#a10)"/><path d="M509,1156.1C497,1167.4 497,1201.1 509,1212.3C521,1201.1 520.9,1167.3 509,1156.1Z" fill="url(#a11)"/><path d="M575.5,1344.2C584.2,1337.6 580.8,1326.5 569.9,1325.7C561.3,1332.3 564.7,1343.5 575.5,1344.2Z" fill="url(#a12)"/><path d="M497.9,1259.2C511.8,1252.6 518.4,1224.5 509,1212.3C495.1,1218.9 488.5,1247 497.9,1259.2Z" fill="url(#a13)"/><path d="M550.5,1109.7C533.3,1111 508.3,1138.8 509,1156.1C526.2,1154.8 551.1,1127 550.5,1109.7Z" fill="url(#a14)"/><path d="M668.5,1361.9C679.5,1367.6 686.1,1360.3 679.6,1349.8C668.5,1344.1 661.9,1351.4 668.5,1361.9Z" fill="url(#a15)"/><path d="M770.3,1304.1C753.1,1305.4 728.2,1333.3 728.8,1350.5C746,1349.2 770.9,1321.4 770.3,1304.1Z" fill="url(#a16)"/><path d="M575.5,1344.2C580.6,1357.1 606.8,1367.3 619.2,1361.2C614.1,1348.3 587.9,1338.1 575.5,1344.2Z" fill="url(#a17)"/><path d="M807.6,1206.1C812.2,1192.8 798,1175.1 784,1176.7C779.4,1190.1 793.5,1207.7 807.6,1206.1Z" fill="url(#a18)"/><path d="M501,1205.5C496,1214.7 500.8,1218.7 509,1212.3C514,1203.2 509.1,1199.1 501,1205.5Z" fill="url(#a19)"/><path d="M697.4,1092C691.5,1075.7 657.8,1058.9 641.2,1064C647.1,1080.4 680.8,1097.2 697.4,1092Z" fill="url(#a20)"/><path d="M777.1,1149.4C766.9,1157.8 771,1174.2 784,1176.7C794.2,1168.4 790.1,1152 777.1,1149.4Z" fill="url(#a21)"/><path d="M668.5,1361.9C658.8,1349.8 629.2,1349.3 619.2,1361.2C628.9,1373.3 658.4,1373.7 668.5,1361.9Z" fill="url(#a22)"/><path d="M777.1,1149.4C781.7,1136.1 767.6,1118.4 753.5,1120.1C748.9,1133.4 763,1151.1 777.1,1149.4Z" fill="url(#a23)"/><path d="M746.6,1092.8C736.4,1101.2 740.5,1117.5 753.5,1120.1C763.7,1111.7 759.6,1095.3 746.6,1092.8Z" fill="url(#a24)"/><path d="M580.9,1075.4C565.9,1074.3 547.6,1094.9 550.5,1109.7C565.5,1110.8 583.8,1090.2 580.9,1075.4Z" fill="#909090"/><path d="M800.7,1269.8C785.7,1268.8 767.4,1289.3 770.3,1304.1C785.4,1305.2 803.6,1284.6 800.7,1269.8Z" fill="#909090"/><path d="M575.5,1344.2C571.4,1329.8 543.1,1312.8 528.4,1315.8C532.6,1330.3 560.8,1347.3 575.5,1344.2Z" fill="url(#a25)"/><path d="M608.1,1373.2C619.1,1378.9 625.8,1371.7 619.2,1361.2C608.2,1355.5 601.5,1362.7 608.1,1373.2Z" fill="url(#a26)"/><path d="M697.4,1092C707.1,1104.2 736.6,1104.6 746.6,1092.8C736.9,1080.7 707.4,1080.2 697.4,1092Z" fill="url(#a27)"/><path d="M668.5,1361.9C682.7,1371.4 718.9,1364.6 728.8,1350.5C714.5,1341 678.3,1347.9 668.5,1361.9Z" fill="url(#a28)"/><path d="M501,1205.5C512.6,1197.3 517.4,1167.6 509,1156.1C497.3,1164.4 492.5,1194 501,1205.5Z" fill="url(#a29)"/><path d="M539.4,1121.8C550.4,1127.5 557.1,1120.2 550.5,1109.7C539.5,1104 532.8,1111.3 539.4,1121.8Z" fill="url(#a30)"/><path d="M759.2,1316.2C770.2,1321.9 776.9,1314.7 770.3,1304.1C759.3,1298.5 752.6,1305.7 759.2,1316.2Z" fill="url(#a31)"/><path d="M501,1205.5C490.2,1215.7 488.4,1247.9 497.9,1259.2C508.7,1249 510.5,1216.8 501,1205.5Z" fill="url(#a32)"/><path d="M697.4,1092C707.6,1083.7 703.5,1067.3 690.5,1064.8C680.3,1073.1 684.4,1089.5 697.4,1092Z" fill="url(#a33)"/><path d="M539.4,1121.8C524.3,1120.7 506.1,1141.3 509,1156.1C524,1157.2 542.3,1136.6 539.4,1121.8Z" fill="#909090"/><path d="M575.5,1344.2C575.3,1357.7 594.8,1375.1 608.1,1373.2C608.4,1359.8 588.8,1342.4 575.5,1344.2Z" fill="url(#a34)"/><path d="M759.2,1316.2C744.2,1315.1 725.9,1335.7 728.8,1350.5C743.8,1351.6 762.1,1331 759.2,1316.2Z" fill="#909090"/><path d="M777.1,1149.4C772.6,1166.5 790.9,1200.5 807.6,1206.1C812,1189.1 793.7,1155.1 777.1,1149.4Z" fill="url(#a35)"/><path d="M777.1,1149.4C781.5,1132.4 763.3,1098.4 746.6,1092.8C742.2,1109.8 760.5,1143.8 777.1,1149.4Z" fill="url(#a36)"/><path d="M668.5,1361.9C654.2,1352.4 618,1359.2 608.1,1373.2C622.4,1382.7 658.6,1375.9 668.5,1361.9Z" fill="url(#a37)"/><path d="M497.9,1168.2C508.9,1173.9 515.6,1166.6 509,1156.1C497.9,1150.4 491.3,1157.6 497.9,1168.2Z" fill="url(#a38)"/><path d="M717.7,1362.6C728.7,1368.3 735.4,1361.1 728.8,1350.5C717.8,1344.8 711.1,1352.1 717.7,1362.6Z" fill="url(#a39)"/><path d="M575.5,1344.2C570.4,1334.3 556.3,1334.9 552,1345.2C557.1,1355.2 571.2,1354.6 575.5,1344.2Z" fill="url(#a40)"/><path d="M539.4,1121.8C556.6,1120.5 581.5,1092.7 580.9,1075.4C563.7,1076.7 538.8,1104.5 539.4,1121.8Z" fill="url(#a41)"/><path d="M759.2,1316.2C776.4,1314.9 801.4,1287.1 800.7,1269.8C783.5,1271.1 758.6,1299 759.2,1316.2Z" fill="url(#a42)"/><path d="M668.5,1361.9C678.1,1374 707.7,1374.4 717.7,1362.6C708,1350.5 678.5,1350.1 668.5,1361.9Z" fill="url(#a43)"/><path d="M501,1205.5C510.5,1197.2 508.6,1174.8 497.9,1168.2C488.3,1176.5 490.2,1198.9 501,1205.5Z" fill="url(#a44)"/><path d="M501,1205.5C489.4,1207.2 483.5,1223 491,1231.9C502.6,1230.2 508.5,1214.4 501,1205.5Z" fill="url(#a45)"/><path d="M668.5,1361.9C657.4,1356.2 650.8,1363.4 657.4,1374C668.4,1379.7 675,1372.4 668.5,1361.9Z" fill="url(#a46)"/><path d="M777.1,1149.4C772.5,1162.8 786.6,1180.5 800.7,1178.8C805.3,1165.5 791.1,1147.8 777.1,1149.4Z" fill="url(#a47)"/><path d="M539.4,1121.8C522.2,1123.1 497.2,1150.9 497.9,1168.2C515.1,1166.9 540,1139 539.4,1121.8Z" fill="url(#a48)"/><path d="M759.2,1316.2C742,1317.5 717.1,1345.3 717.7,1362.6C734.9,1361.3 759.8,1333.5 759.2,1316.2Z" fill="url(#a49)"/><path d="M777.1,1149.4C787.3,1141.1 783.2,1124.7 770.2,1122.2C760,1130.5 764.1,1146.9 777.1,1149.4Z" fill="url(#a50)"/><path d="M539.4,1121.8C554.4,1122.9 572.7,1102.3 569.8,1087.5C554.8,1086.4 536.5,1107 539.4,1121.8Z" fill="#909090"/><path d="M759.2,1316.2C774.3,1317.3 792.5,1296.7 789.6,1281.9C774.6,1280.8 756.3,1301.4 759.2,1316.2Z" fill="#909090"/><path d="M539.4,1121.8C528.4,1116.1 521.7,1123.3 528.3,1133.9C539.3,1139.5 546,1132.3 539.4,1121.8Z" fill="url(#a51)"/><path d="M759.2,1316.2C748.2,1310.5 741.5,1317.8 748.1,1328.3C759.1,1334 765.8,1326.7 759.2,1316.2Z" fill="url(#a52)"/><path d="M728.8,1350.5L770.3,1304.1L800.7,1269.8L789.6,1281.9L748.1,1328.3L717.7,1362.6Z" fill="#009400" stroke="#009400" stroke-width="0.7"/><path d="M497.9,1259.2L528.4,1315.8L552,1345.2L545.1,1317.9L514.6,1261.3L491,1231.9Z" fill="#009100" stroke="#009100" stroke-width="0.7"/><path d="M807.6,1206.1L800.7,1178.8L789.6,1225.7L789.6,1281.9L800.7,1269.8Z" fill="#0000dc" stroke="#0000dc" stroke-width="0.7"/><path d="M679.4,1076.8L690.5,1064.8L641.2,1064L580.9,1075.4L569.8,1087.5L619,1088.2Z" fill="#00df00" stroke="#00df00" stroke-width="0.7"/><path d="M679.4,1076.8L728.7,1112.3L770.2,1122.2L746.6,1092.8L690.5,1064.8Z" fill="#1111ff" stroke="#1111ff" stroke-width="0.7"/><path d="M650.5,1346.7L594.3,1318.7L545.1,1317.9L552,1345.2L608.1,1373.2L657.4,1374Z" fill="#009100" stroke="#009100" stroke-width="0.7"/><path d="M657.4,1374L717.7,1362.6L748.1,1328.3L706.6,1318.4L650.5,1346.7Z" fill="#000091" stroke="#000091" stroke-width="0.7"/><path d="M545,1226.9L551.9,1163.2L528.3,1133.9L497.9,1168.2L491,1231.9L514.6,1261.3Z" fill="#009100" stroke="#009100" stroke-width="0.7"/><path d="M717.6,1159.1L748.1,1215.8L789.6,1225.7L800.7,1178.8L770.2,1122.2L728.7,1112.3Z" fill="#00f400" stroke="#00f400" stroke-width="0.7"/><path d="M608,1135L619,1088.2L569.8,1087.5L528.3,1133.9L551.9,1163.2Z" fill="#0000ab" stroke="#0000ab" stroke-width="0.7"/><path d="M748.1,1328.3L789.6,1281.9L789.6,1225.7L748.1,1215.8L706.5,1262.2L706.6,1318.4Z" fill="#00b200" stroke="#00b200" stroke-width="0.7"/><path d="M545,1226.9L514.6,1261.3L545.1,1317.9L594.3,1318.7L594.3,1262.4Z" fill="#000091" stroke="#000091" stroke-width="0.7"/><path d="M619,1088.2L608,1135L657.2,1170.5L717.6,1159.1L728.7,1112.3L679.4,1076.8Z" fill="#00e000" stroke="#00e000" stroke-width="0.7"/><path d="M650.5,1346.7L706.6,1318.4L706.5,1262.2L650.4,1234.2L594.3,1262.4L594.3,1318.7Z" fill="#009100" stroke="#009100" stroke-width="0.7"/><path d="M545,1226.9L594.3,1262.4L650.4,1234.2L657.2,1170.5L608,1135L551.9,1163.2Z" fill="#009100" stroke="#009100" stroke-width="0.7"/><path d="M650.4,1234.2L706.5,1262.2L748.1,1215.8L717.6,1159.1L657.2,1170.5Z" fill="#0000bf" stroke="#0000bf" stroke-width="0.7"/><path d="M528.4,1315.8C522.9,1304.2 504.6,1270.2 497.9,1259.2C493.5,1276.2 511.7,1310.2 528.4,1315.8Z" fill="url(#a53)"/><path d="M641.2,1064C627,1054.5 590.8,1061.4 580.9,1075.4C593.3,1074.9 629.5,1068.1 641.2,1064Z" fill="url(#a54)"/><path d="M807.6,1206.1C804.6,1218.7 800.5,1256.9 800.7,1269.8C814,1258.4 818.1,1220.1 807.6,1206.1Z" fill="url(#a55)"/><path d="M690.5,1064.8C680.8,1052.6 651.3,1052.2 641.2,1064C651.1,1066 680.6,1066.5 690.5,1064.8Z" fill="url(#a56)"/><path d="M552,1345.2C549,1338 534.8,1320.3 528.4,1315.8C523.8,1329.2 537.9,1346.9 552,1345.2Z" fill="url(#a57)"/><path d="M521.5,1288.6C511.3,1296.9 515.4,1313.3 528.4,1315.8C533.4,1308.8 529.3,1292.4 521.5,1288.6Z" fill="url(#a58)"/><path d="M521.5,1288.6C521.4,1279 507.2,1261.4 497.9,1259.2C493.3,1272.5 507.5,1290.2 521.5,1288.6Z" fill="url(#a59)"/><path d="M491,1231.9C480.8,1240.3 484.9,1256.6 497.9,1259.2C499.5,1253 495.4,1236.6 491,1231.9Z" fill="#909090"/><path d="M630.1,1076.1C639.9,1080.6 646.5,1073.3 641.2,1064C630.2,1058.3 623.6,1065.6 630.1,1076.1Z" fill="url(#a60)"/><path d="M746.6,1092.8C740.7,1076.5 707.1,1059.6 690.5,1064.8C700.5,1072.8 734.2,1089.6 746.6,1092.8Z" fill="url(#a61)"/><path d="M797.6,1232.5C809.2,1230.8 815.1,1215 807.6,1206.1C800.1,1209.3 794.2,1225.1 797.6,1232.5Z" fill="url(#a62)"/><path d="M608.1,1373.2C598.8,1363.8 565.1,1347 552,1345.2C557.9,1361.5 591.5,1378.4 608.1,1373.2Z" fill="url(#a63)"/><path d="M797.6,1232.5C793.1,1240.4 795,1262.8 800.7,1269.8C810.3,1261.5 808.4,1239.1 797.6,1232.5Z" fill="url(#a64)"/><path d="M630.1,1076.1C620.5,1064 590.9,1063.6 580.9,1075.4C590.7,1081.5 620.2,1081.9 630.1,1076.1Z" fill="url(#a65)"/><path d="M800.7,1178.8C798.2,1185.3 802.3,1201.7 807.6,1206.1C817.8,1197.7 813.7,1181.4 800.7,1178.8Z" fill="url(#a66)"/><path d="M723.1,1093.8C728.1,1101.7 742.3,1101.1 746.6,1092.8C741.5,1082.8 727.4,1083.4 723.1,1093.8Z" fill="url(#a67)"/><path d="M569.8,1087.5C577.4,1090 584,1082.7 580.9,1075.4C569.9,1069.7 563.2,1076.9 569.8,1087.5Z" fill="url(#a68)"/><path d="M770.2,1122.2C774.8,1108.8 760.7,1091.1 746.6,1092.8C747.6,1101.7 761.7,1119.3 770.2,1122.2Z" fill="url(#a69)"/><path d="M789.6,1281.9C800.7,1287.6 807.3,1280.4 800.7,1269.8C793.2,1267.4 786.6,1274.6 789.6,1281.9Z" fill="url(#a70)"/><path d="M630.1,1076.1C643.2,1079.2 679.4,1072.4 690.5,1064.8C676.2,1055.3 640,1062.1 630.1,1076.1Z" fill="url(#a71)"/><path d="M521.5,1288.6C517.1,1305.6 535.3,1339.6 552,1345.2C550.2,1331.6 531.9,1297.6 521.5,1288.6Z" fill="url(#a72)"/><path d="M657.4,1374C647.6,1368.7 618,1368.2 608.1,1373.2C617.8,1385.4 647.3,1385.8 657.4,1374Z" fill="#909090"/><path d="M497.9,1168.2C484.6,1179.6 480.5,1217.9 491,1231.9C497.8,1219.7 501.9,1181.5 497.9,1168.2Z" fill="url(#a73)"/><path d="M521.5,1288.6C519.7,1274.9 501.5,1240.9 491,1231.9C486.6,1248.9 504.9,1282.9 521.5,1288.6Z" fill="url(#a74)"/><path d="M723.1,1093.8C723.3,1080.3 703.8,1062.9 690.5,1064.8C693.1,1075 712.6,1092.4 723.1,1093.8Z" fill="url(#a75)"/><path d="M601.2,1346C591,1354.3 595.1,1370.7 608.1,1373.2C618,1365 613.8,1348.6 601.2,1346Z" fill="url(#a76)"/><path d="M717.7,1362.6C704.7,1359.8 668.5,1366.6 657.4,1374C671.6,1383.5 707.8,1376.6 717.7,1362.6Z" fill="url(#a77)"/><path d="M797.6,1232.5C808.4,1222.3 810.2,1190.1 800.7,1178.8C795.5,1189.3 793.7,1221.5 797.6,1232.5Z" fill="url(#a78)"/><path d="M797.6,1232.5C791.5,1241.6 786.7,1271.3 789.6,1281.9C801.3,1273.6 806.1,1244 797.6,1232.5Z" fill="url(#a79)"/><path d="M630.1,1076.1C615.9,1066.6 579.7,1073.4 569.8,1087.5C582.9,1090.6 619.1,1083.8 630.1,1076.1Z" fill="url(#a80)"/><path d="M601.2,1346C591.5,1337.1 562,1336.7 552,1345.2C561.7,1357.3 591.2,1357.8 601.2,1346Z" fill="url(#a81)"/><path d="M679.4,1076.8C690.2,1082.3 696.9,1075.1 690.5,1064.8C679.5,1059.1 672.8,1066.3 679.4,1076.8Z" fill="url(#a82)"/><path d="M800.7,1178.8C805.1,1161.8 786.9,1127.8 770.2,1122.2C770.9,1136.4 789.1,1170.4 800.7,1178.8Z" fill="url(#a83)"/><path d="M723.1,1093.8C729.7,1104 758,1121 770.2,1122.2C766,1107.7 737.8,1090.7 723.1,1093.8Z" fill="url(#a84)"/><path d="M528.3,1133.9C513.2,1132.8 495,1153.4 497.9,1168.2C509.4,1166.2 527.7,1145.6 528.3,1133.9Z" fill="#909090"/><path d="M748.1,1328.3C736.7,1330.5 718.5,1351.1 717.7,1362.6C732.7,1363.7 751,1343.1 748.1,1328.3Z" fill="#909090"/><path d="M545.1,1317.9C534.9,1326.3 539,1342.7 552,1345.2C560,1337.4 555.9,1321 545.1,1317.9Z" fill="url(#a85)"/><path d="M696,1346C694.2,1357.4 707.2,1367.4 717.7,1362.6C719.4,1351.4 706.4,1341.4 696,1346Z" fill="url(#a86)"/><path d="M521.5,1288.6C516.9,1301.9 531,1319.6 545.1,1317.9C544.9,1308.4 530.8,1290.8 521.5,1288.6Z" fill="url(#a87)"/><path d="M521.5,1197.6C525.6,1184.6 511.4,1167 497.9,1168.2C493.2,1181.5 507.4,1199.2 521.5,1197.6Z" fill="url(#a88)"/><path d="M630.1,1076.1C639.9,1082.2 669.5,1082.6 679.4,1076.8C669.7,1064.7 640.2,1064.3 630.1,1076.1Z" fill="url(#a89)"/><path d="M521.5,1288.6C526.5,1281.5 522.4,1265.1 514.6,1261.3C504.4,1269.6 508.5,1286 521.5,1288.6Z" fill="url(#a90)"/><path d="M601.2,1346C607.1,1362.3 640.8,1379.1 657.4,1374C649.5,1361.5 615.9,1344.7 601.2,1346Z" fill="url(#a91)"/><path d="M521.5,1197.6C506.4,1196.5 488.2,1217.1 491,1231.9C504.8,1231.8 523,1211.2 521.5,1197.6Z" fill="#909090"/><path d="M797.6,1232.5C802.6,1223.3 797.8,1219.3 789.6,1225.7C784.9,1234.4 789.8,1238.5 797.6,1232.5Z" fill="url(#a92)"/><path d="M514.6,1261.3C517.1,1249.6 502.9,1232 491,1231.9C486.4,1245.2 500.6,1262.9 514.6,1261.3Z" fill="url(#a93)"/><path d="M723.1,1093.8C718,1080.9 691.8,1070.7 679.4,1076.8C686.1,1085.5 712.3,1095.7 723.1,1093.8Z" fill="url(#a94)"/><path d="M696,1346C683.9,1345.5 660.7,1362.3 657.4,1374C671.1,1376.6 694.3,1359.8 696,1346Z" fill="#909090"/><path d="M569.8,1087.5C552.6,1088.8 527.7,1116.6 528.3,1133.9C541.8,1129.2 566.7,1101.4 569.8,1087.5Z" fill="url(#a95)"/><path d="M630.1,1076.1C619.1,1070.4 612.5,1077.7 619,1088.2C628.8,1092.6 635.4,1085.4 630.1,1076.1Z" fill="url(#a96)"/><path d="M789.6,1281.9C775.8,1286.2 750.9,1314.1 748.1,1328.3C765.3,1327 790.3,1299.2 789.6,1281.9Z" fill="url(#a97)"/><path d="M789.6,1225.7C803.5,1219.1 810.1,1191 800.7,1178.8C789.8,1186.1 783.2,1214.2 789.6,1225.7Z" fill="url(#a98)"/><path d="M759.1,1169C764.8,1182.3 789.7,1188.2 800.7,1178.8C795.1,1165.2 770.2,1159.3 759.1,1169Z" fill="url(#a99)"/><path d="M723.1,1093.8C715.6,1100.1 718.9,1111.2 728.7,1112.3C737.3,1105.7 733.9,1094.5 723.1,1093.8Z" fill="url(#a100)"/><path d="M789.6,1225.7C781,1236.9 781,1270.7 789.6,1281.9C801.6,1270.6 801.6,1236.9 789.6,1225.7Z" fill="url(#a101)"/><path d="M601.2,1346C593.4,1333.5 559.7,1316.7 545.1,1317.9C551,1334.3 584.7,1351.1 601.2,1346Z" fill="url(#a102)"/><path d="M759.1,1169C773,1162.4 779.6,1134.3 770.2,1122.2C757.3,1129 750.6,1157.1 759.1,1169Z" fill="url(#a103)"/><path d="M696,1346C709.7,1352.1 741,1341.5 748.1,1328.3C735.5,1325.3 704.2,1335.9 696,1346Z" fill="url(#a104)"/><path d="M770.2,1122.2C764.7,1108.5 739.7,1102.6 728.7,1112.3C734.6,1124.2 759.6,1130.1 770.2,1122.2Z" fill="url(#a105)"/><path d="M619,1088.2C609.4,1076.1 579.8,1075.6 569.8,1087.5C579.5,1096.6 609.1,1097 619,1088.2Z" fill="url(#a106)"/><path d="M521.5,1197.6C531.3,1185.7 535.4,1147.5 528.3,1133.9C515,1145.3 510.9,1183.5 521.5,1197.6Z" fill="url(#a107)"/><path d="M575.4,1121.5C584.3,1113.1 580.9,1092.6 569.8,1087.5C560.9,1095.9 564.2,1116.4 575.4,1121.5Z" fill="url(#a108)"/><path d="M650.5,1346.7C640.2,1355.1 644.4,1371.4 657.4,1374C667.6,1365.6 663.5,1349.2 650.5,1346.7Z" fill="url(#a109)"/><path d="M748.1,1272.1C753.6,1285.7 778.6,1291.6 789.6,1281.9C784.1,1268.3 759.2,1262.4 748.1,1272.1Z" fill="url(#a110)"/><path d="M521.5,1197.6C508.2,1209 504.1,1247.2 514.6,1261.3C524.5,1249.4 528.6,1211.2 521.5,1197.6Z" fill="url(#a111)"/><path d="M545.1,1317.9C546.2,1302.7 527.9,1268.7 514.6,1261.3C510.2,1278.3 528.5,1312.3 545.1,1317.9Z" fill="url(#a112)"/><path d="M601.2,1346C610.9,1358.1 640.4,1358.5 650.5,1346.7C640.7,1337.9 611.2,1337.4 601.2,1346Z" fill="url(#a113)"/><path d="M575.4,1121.5C563.4,1114.2 535.1,1121.5 528.3,1133.9C539.9,1139.8 568.2,1132.4 575.4,1121.5Z" fill="url(#a114)"/><path d="M679.4,1076.8C665.1,1067.3 628.9,1074.1 619,1088.2C632.8,1094.7 669,1087.9 679.4,1076.8Z" fill="url(#a115)"/><path d="M728.7,1112.3C725.8,1095.5 696.2,1074.2 679.4,1076.8C683.8,1091.5 713.4,1112.8 728.7,1112.3Z" fill="url(#a116)"/><path d="M696,1346C686.8,1338.5 659.5,1338.9 650.5,1346.7C659.7,1356.7 687.1,1356.3 696,1346Z" fill="url(#a117)"/><path d="M748.1,1272.1C737.2,1283.3 737.3,1317.1 748.1,1328.3C760.1,1317 760.1,1283.3 748.1,1272.1Z" fill="url(#a118)"/><path d="M759.1,1169C756.9,1184.8 775.2,1218.8 789.6,1225.7C794.1,1208.7 775.8,1174.6 759.1,1169Z" fill="url(#a119)"/><path d="M601.2,1346C611.1,1337.7 606.9,1321.3 594.3,1318.7C584.1,1327 588.2,1343.4 601.2,1346Z" fill="url(#a120)"/><path d="M759.1,1169C763.6,1152 745.3,1118 728.7,1112.3C726.5,1128.1 744.7,1162.1 759.1,1169Z" fill="url(#a121)"/><path d="M575.4,1121.5C589.1,1121.3 615.2,1101.3 619,1088.2C604.1,1086.8 577.9,1106.8 575.4,1121.5Z" fill="url(#a122)"/><path d="M696,1346C707.7,1344.1 714,1327.6 706.6,1318.4C695.5,1320.5 689.1,1337 696,1346Z" fill="url(#a123)"/><path d="M748.1,1272.1C765.3,1270.8 790.2,1242.9 789.6,1225.7C773.6,1228.1 748.7,1255.9 748.1,1272.1Z" fill="url(#a124)"/><path d="M748.1,1328.3C742.5,1315 717.6,1309.1 706.6,1318.4C712.1,1332.1 737,1338 748.1,1328.3Z" fill="url(#a125)"/><path d="M558.7,1277.4C546.3,1282.3 538.2,1306.6 545.1,1317.9C557.3,1313 565.5,1288.7 558.7,1277.4Z" fill="url(#a126)"/><path d="M551.9,1163.2C556.5,1149.9 542.3,1132.2 528.3,1133.9C523.7,1147.2 537.8,1164.9 551.9,1163.2Z" fill="url(#a127)"/><path d="M668.3,1123.7C682.2,1117 688.8,1088.9 679.4,1076.8C665.5,1083.4 658.9,1111.5 668.3,1123.7Z" fill="url(#a128)"/><path d="M558.7,1277.4C553.2,1265.1 526.8,1255.4 514.6,1261.3C519.9,1274 546.4,1283.8 558.7,1277.4Z" fill="url(#a129)"/><path d="M521.5,1197.6C535.2,1197.5 553.4,1176.9 551.9,1163.2C536.8,1162.2 518.6,1182.7 521.5,1197.6Z" fill="#909090"/><path d="M594.3,1318.7C584.7,1307.7 555.1,1307.2 545.1,1317.9C554.8,1330.1 584.3,1330.5 594.3,1318.7Z" fill="url(#a130)"/><path d="M521.5,1197.6C516.8,1210.9 531,1228.6 545,1226.9C549.2,1214 535,1196.3 521.5,1197.6Z" fill="url(#a131)"/><path d="M545,1226.9C530,1225.9 511.8,1246.4 514.6,1261.3C529.5,1262.1 547.7,1241.5 545,1226.9Z" fill="#909090"/><path d="M668.3,1123.7C665.5,1106.8 635.9,1085.6 619,1088.2C622.3,1104.4 651.9,1125.7 668.3,1123.7Z" fill="url(#a132)"/><path d="M575.4,1121.5C561.8,1124.9 547.7,1149.9 551.9,1163.2C564.2,1159.2 578.3,1134.2 575.4,1121.5Z" fill="url(#a133)"/><path d="M668.3,1123.7C682.5,1132.4 718.7,1125.6 728.7,1112.3C714.4,1102.8 678.2,1109.6 668.3,1123.7Z" fill="url(#a134)"/><path d="M789.6,1225.7C784.1,1212 759.1,1206.1 748.1,1215.8C753.6,1229.4 778.5,1235.3 789.6,1225.7Z" fill="url(#a135)"/><path d="M748.1,1272.1C732.1,1274.5 707.2,1302.3 706.6,1318.4C723.8,1317.1 748.7,1289.3 748.1,1272.1Z" fill="url(#a136)"/><path d="M759.1,1169C746.2,1175.8 739.6,1203.9 748.1,1215.8C761.9,1209.2 768.6,1181.1 759.1,1169Z" fill="url(#a137)"/><path d="M706.6,1318.4C690.6,1314.6 656.9,1331.5 650.5,1346.7C667.1,1351.7 700.7,1334.8 706.6,1318.4Z" fill="url(#a138)"/><path d="M650.5,1346.7C643.9,1331.7 610.2,1314.9 594.3,1318.7C600.2,1335 633.9,1351.8 650.5,1346.7Z" fill="url(#a139)"/><path d="M759.1,1169C753.6,1155.4 728.7,1149.4 717.6,1159.1C723.2,1172.4 748.1,1178.3 759.1,1169Z" fill="url(#a140)"/><path d="M575.4,1121.5C578.1,1133.6 597.6,1141.7 608,1135C605.3,1122.9 585.8,1114.8 575.4,1121.5Z" fill="url(#a141)"/><path d="M558.7,1277.4C558.1,1292.3 579.5,1317.1 594.3,1318.7C594,1304.5 572.6,1279.8 558.7,1277.4Z" fill="url(#a142)"/><path d="M608,1135C621.8,1128.4 628.5,1100.3 619,1088.2C605.2,1094.8 598.5,1122.9 608,1135Z" fill="url(#a143)"/><path d="M748.1,1272.1C760.1,1260.8 760,1227.1 748.1,1215.8C737.2,1227.1 737.2,1260.8 748.1,1272.1Z" fill="url(#a144)"/><path d="M717.6,1159.1C731.5,1152.5 738.1,1124.4 728.7,1112.3C714.8,1118.9 708.2,1147 717.6,1159.1Z" fill="url(#a145)"/><path d="M558.7,1277.4C564.8,1264.9 556.6,1234.6 545,1226.9C537.9,1239.7 546.1,1270 558.7,1277.4Z" fill="url(#a146)"/><path d="M650.4,1290.4C638.5,1301.7 638.5,1335.4 650.5,1346.7C662.4,1335.4 662.4,1301.7 650.4,1290.4Z" fill="url(#a147)"/><path d="M551.9,1163.2C538.6,1174.7 534.5,1212.9 545,1226.9C557.3,1215.4 561.4,1177.1 551.9,1163.2Z" fill="url(#a148)"/><path d="M748.1,1272.1C742.5,1258.4 717.6,1252.5 706.5,1262.2C712.1,1275.8 737,1281.7 748.1,1272.1Z" fill="url(#a149)"/><path d="M668.3,1123.7C654,1114.2 617.8,1121 608,1135C622.1,1143.7 658.3,1136.9 668.3,1123.7Z" fill="url(#a150)"/><path d="M668.3,1123.7C671.6,1139.9 701.2,1161.2 717.6,1159.1C714.7,1142.3 685.2,1121 668.3,1123.7Z" fill="url(#a151)"/><path d="M650.4,1290.4C656.3,1306.7 690,1323.5 706.6,1318.4C700.6,1302.2 667,1285.4 650.4,1290.4Z" fill="url(#a152)"/><path d="M650.4,1290.4C633.9,1285.5 600.2,1302.4 594.3,1318.7C610.9,1323.7 644.6,1306.8 650.4,1290.4Z" fill="url(#a153)"/><path d="M608,1135C591.4,1130 557.7,1146.9 551.9,1163.2C568.2,1167.8 601.9,1150.9 608,1135Z" fill="url(#a154)"/><path d="M558.7,1277.4C569.8,1283.8 591.1,1274.8 594.3,1262.4C583.2,1256 561.9,1265 558.7,1277.4Z" fill="url(#a155)"/><path d="M601.1,1198.7C598.3,1181.9 568.7,1160.6 551.9,1163.2C554.7,1180 584.3,1201.3 601.1,1198.7Z" fill="url(#a156)"/><path d="M706.5,1262.2C694.6,1273.5 694.6,1307.2 706.6,1318.4C718.5,1307.2 718.5,1273.4 706.5,1262.2Z" fill="url(#a157)"/><path d="M594.3,1262.4C582.3,1273.7 582.4,1307.4 594.3,1318.7C606.3,1307.4 606.3,1273.7 594.3,1262.4Z" fill="url(#a158)"/><path d="M748.1,1215.8C752.5,1198.8 734.2,1164.8 717.6,1159.1C713.7,1175.8 732,1209.8 748.1,1215.8Z" fill="url(#a159)"/><path d="M601.1,1198.7C584.5,1193.7 550.9,1210.6 545,1226.9C561.6,1232 595.3,1215 601.1,1198.7Z" fill="url(#a160)"/><path d="M668.3,1123.7C654.4,1130.3 647.8,1158.4 657.2,1170.5C671.1,1163.9 677.8,1135.8 668.3,1123.7Z" fill="url(#a161)"/><path d="M594.3,1262.4C591.4,1245.7 561.9,1224.4 545,1226.9C547.9,1243.7 577.5,1265 594.3,1262.4Z" fill="url(#a162)"/><path d="M696,1208.4C704.9,1219.9 736.2,1224.4 748.1,1215.8C739.1,1204.2 707.8,1199.8 696,1208.4Z" fill="url(#a163)"/><path d="M601.1,1198.7C614.4,1187.2 618.5,1149 608,1135C594.7,1146.5 590.6,1184.7 601.1,1198.7Z" fill="url(#a164)"/><path d="M748.1,1215.8C731,1217.3 706.1,1245.1 706.5,1262.2C723.8,1260.9 748.7,1233.1 748.1,1215.8Z" fill="url(#a165)"/><path d="M650.4,1290.4C667,1295.5 700.7,1278.5 706.5,1262.2C690,1257.3 656.3,1274.2 650.4,1290.4Z" fill="url(#a166)"/><path d="M650.4,1290.4C644.5,1274.2 610.8,1257.4 594.3,1262.4C600.2,1278.7 633.9,1295.5 650.4,1290.4Z" fill="url(#a167)"/><path d="M696,1208.4C709.6,1202.6 722.6,1173.1 717.6,1159.1C703.9,1164.9 691,1194.4 696,1208.4Z" fill="url(#a168)"/><path d="M601.1,1198.7C587.9,1210.2 583.8,1248.4 594.3,1262.4C607.6,1250.9 611.7,1212.7 601.1,1198.7Z" fill="url(#a169)"/><path d="M657.2,1170.5C654.4,1153.7 624.8,1132.4 608,1135C610.8,1151.8 640.4,1173.1 657.2,1170.5Z" fill="url(#a170)"/><path d="M717.6,1159.1C703.3,1149.6 667.1,1156.4 657.2,1170.5C671.5,1180 707.7,1173.2 717.6,1159.1Z" fill="url(#a171)"/><path d="M696,1208.4C688.1,1221.1 694.4,1253.4 706.5,1262.2C714.4,1249.5 708.1,1217.2 696,1208.4Z" fill="url(#a172)"/><path d="M650.4,1290.4C662.4,1279.2 662.4,1245.4 650.4,1234.2C638.4,1245.4 638.5,1279.2 650.4,1290.4Z" fill="url(#a173)"/><path d="M601.1,1198.7C617.7,1203.8 651.4,1186.8 657.2,1170.5C640.6,1165.4 607,1182.4 601.1,1198.7Z" fill="url(#a174)"/><path d="M696,1208.4C695.3,1193.5 672.1,1170.8 657.2,1170.5C657.9,1185.3 681.1,1208.1 696,1208.4Z" fill="url(#a175)"/><path d="M601.1,1198.7C604,1215.5 633.6,1236.8 650.4,1234.2C647.6,1217.4 618,1196.1 601.1,1198.7Z" fill="url(#a176)"/><path d="M696,1208.4C681.8,1204.7 654.5,1220.2 650.4,1234.2C664.5,1237.9 691.9,1222.4 696,1208.4Z" fill="url(#a177)"/><path d="M706.5,1262.2C700.7,1245.9 667,1229.1 650.4,1234.2C656.3,1250.5 690,1267.3 706.5,1262.2Z" fill="url(#a178)"/><path d="M650.4,1234.2C633.8,1229.1 600.2,1246.1 594.3,1262.4C610.9,1267.5 644.6,1250.5 650.4,1234.2Z" fill="url(#a179)"/><path d="M657.2,1170.5C644,1181.9 639.9,1220.2 650.4,1234.2C663.7,1222.7 667.8,1184.5 657.2,1170.5Z" fill="url(#a180)"/><defs><linearGradient id="bs0"><stop offset="0" stop-color="#909090"/><stop offset="0.2" stop-color="#909090"/><stop offset="0.5" stop-color="#a8a8a8"/><stop offset="0.8" stop-color="#ffffff"/><stop offset="1" stop-color="#ffffff"/></linearGradient><linearGradient id="b0" href="#bs0" gradientUnits="userSpaceOnUse" x1="1015.2" y1="1111" x2="1022.9" y2="1095.5"/><linearGradient id="bs1"><stop offset="0" stop-color="#909090"/><stop offset="0.2" stop-color="#909090"/><stop offset="0.5" stop-color="#909090"/><stop offset="0.8" stop-color="#989898"/><stop offset="1" stop-color="#e0e0e0"/></linearGradient><linearGradient id="b1" href="#bs1" gradientUnits="userSpaceOnUse" x1="1071.7" y1="1126.2" x2="1071.9" y2="1109"/><linearGradient id="bs2"><stop offset="0" stop-color="#e8e8e8"/><stop offset="0.2" stop-color="#989898"/><stop offset="0.5" stop-color="#909090"/><stop offset="0.8" stop-color="#909090"/><stop offset="1" stop-color="#909090"/></linearGradient><linearGradient id="b2" href="#bs2" gradientUnits="userSpaceOnUse" x1="1052.1" y1="1101.5" x2="1035.3" y2="1105.7"/><linearGradient id="bs3"><stop offset="0" stop-color="#909090"/><stop offset="0.2" stop-color="#909090"/><stop offset="0.5" stop-color="#989898"/><stop offset="0.8" stop-color="#e8e8e8"/><stop offset="1" stop-color="#ffffff"/></linearGradient><linearGradient id="b3" href="#bs3" gradientUnits="userSpaceOnUse" x1="932.4" y1="1348.3" x2="942.5" y2="1334.3"/><linearGradient id="bs4"><stop offset="0" stop-color="#909090"/><stop offset="0.2" stop-color="#989898"/><stop offset="0.5" stop-color="#c8c8c8"/><stop offset="0.8" stop-color="#ffffff"/><stop offset="1" stop-color="#e0e0e0"/></linearGradient><linearGradient id="b4" href="#bs4" gradientUnits="userSpaceOnUse" x1="993.9" y1="1361.9" x2="990.7" y2="1344.9"/><linearGradient id="b5" href="#bs1" gradientUnits="userSpaceOnUse" x1="1015.5" y1="1098.2" x2="1015.8" y2="1081"/><linearGradient id="bs5"><stop offset="0" stop-color="#909090"/><stop offset="0.2" stop-color="#909090"/><stop offset="0.5" stop-color="#a0a0a0"/><stop offset="0.8" stop-color="#f0f0f0"/><stop offset="1" stop-color="#ffffff"/></linearGradient><linearGradient id="b6" href="#bs5" gradientUnits="userSpaceOnUse" x1="1104" y1="1150.4" x2="1119.2" y2="1142.2"/><linearGradient id="b7" href="#bs2" gradientUnits="userSpaceOnUse" x1="996" y1="1073.5" x2="979.2" y2="1077.7"/><linearGradient id="b8" href="#bs1" gradientUnits="userSpaceOnUse" x1="1046.9" y1="1356.7" x2="1047.2" y2="1339.4"/><linearGradient id="bs6"><stop offset="0" stop-color="#909090"/><stop offset="0.2" stop-color="#909090"/><stop offset="0.5" stop-color="#c8c8c8"/><stop offset="0.8" stop-color="#ffffff"/><stop offset="1" stop-color="#ffffff"/></linearGradient><linearGradient id="b9" href="#bs6" gradientUnits="userSpaceOnUse" x1="890.1" y1="1327.1" x2="894.1" y2="1310.3"/><linearGradient id="bs7"><stop offset="0" stop-color="#ffffff"/><stop offset="0.2" stop-color="#ffffff"/><stop offset="0.5" stop-color="#a8a8a8"/><stop offset="0.8" stop-color="#909090"/><stop offset="1" stop-color="#909090"/></linearGradient><linearGradient id="b10" href="#bs7" gradientUnits="userSpaceOnUse" x1="1072.2" y1="1096.2" x2="1064.5" y2="1111.7"/><linearGradient id="bs8"><stop offset="0" stop-color="#d8d8d8"/><stop offset="0.2" stop-color="#a0a0a0"/><stop offset="0.5" stop-color="#909090"/><stop offset="0.8" stop-color="#909090"/><stop offset="1" stop-color="#909090"/></linearGradient><linearGradient id="b11" href="#bs8" gradientUnits="userSpaceOnUse" x1="860.5" y1="1182.1" x2="843.2" y2="1182.1"/><linearGradient id="bs9"><stop offset="0" stop-color="#909090"/><stop offset="0.2" stop-color="#909090"/><stop offset="0.5" stop-color="#d0d0d0"/><stop offset="0.8" stop-color="#ffffff"/><stop offset="1" stop-color="#ffffff"/></linearGradient><linearGradient id="b12" href="#bs9" gradientUnits="userSpaceOnUse" x1="908.6" y1="1335" x2="922.7" y2="1330.8"/><linearGradient id="bs10"><stop offset="0" stop-color="#909090"/><stop offset="0.2" stop-color="#b8b8b8"/><stop offset="0.5" stop-color="#ffffff"/><stop offset="0.8" stop-color="#ffffff"/><stop offset="1" stop-color="#e0e0e0"/></linearGradient><linearGradient id="b13" href="#bs10" gradientUnits="userSpaceOnUse" x1="838" y1="1231.7" x2="854.8" y2="1235.6"/><linearGradient id="bs11"><stop offset="0" stop-color="#a0a0a0"/><stop offset="0.2" stop-color="#c0c0c0"/><stop offset="0.5" stop-color="#d0d0d0"/><stop offset="0.8" stop-color="#b8b8b8"/><stop offset="1" stop-color="#989898"/></linearGradient><linearGradient id="b14" href="#bs11" gradientUnits="userSpaceOnUse" x1="879.1" y1="1136.6" x2="866.2" y2="1125"/><linearGradient id="bs12"><stop offset="0" stop-color="#b0b0b0"/><stop offset="0.2" stop-color="#f8f8f8"/><stop offset="0.5" stop-color="#ffffff"/><stop offset="0.8" stop-color="#f8f8f8"/><stop offset="1" stop-color="#b0b0b0"/></linearGradient><linearGradient id="b15" href="#bs12" gradientUnits="userSpaceOnUse" x1="1010.5" y1="1347.9" x2="1023.3" y2="1359.6"/><linearGradient id="b16" href="#bs11" gradientUnits="userSpaceOnUse" x1="1098.9" y1="1331" x2="1086" y2="1319.5"/><linearGradient id="bs13"><stop offset="0" stop-color="#ffffff"/><stop offset="0.2" stop-color="#ffffff"/><stop offset="0.5" stop-color="#b8b8b8"/><stop offset="0.8" stop-color="#909090"/><stop offset="1" stop-color="#909090"/></linearGradient><linearGradient id="b17" href="#bs13" gradientUnits="userSpaceOnUse" x1="942.9" y1="1343.8" x2="937.6" y2="1357.5"/><linearGradient id="bs14"><stop offset="0" stop-color="#909090"/><stop offset="0.2" stop-color="#909090"/><stop offset="0.5" stop-color="#a8a8a8"/><stop offset="0.8" stop-color="#e0e0e0"/><stop offset="1" stop-color="#ffffff"/></linearGradient><linearGradient id="b18" href="#bs14" gradientUnits="userSpaceOnUse" x1="1131.9" y1="1194.7" x2="1145.4" y2="1183.9"/><linearGradient id="bs15"><stop offset="0" stop-color="#ffffff"/><stop offset="0.2" stop-color="#d0d0d0"/><stop offset="0.5" stop-color="#989898"/><stop offset="0.8" stop-color="#909090"/><stop offset="1" stop-color="#909090"/></linearGradient><linearGradient id="b19" href="#bs15" gradientUnits="userSpaceOnUse" x1="852.6" y1="1201.2" x2="843.1" y2="1212.4"/><linearGradient id="b20" href="#bs0" gradientUnits="userSpaceOnUse" x1="1008.4" y1="1083.7" x2="1016.1" y2="1068.2"/><linearGradient id="b21" href="#bs2" gradientUnits="userSpaceOnUse" x1="1131.8" y1="1158.9" x2="1115.1" y2="1163.1"/><linearGradient id="b22" href="#bs1" gradientUnits="userSpaceOnUse" x1="986.6" y1="1368.1" x2="986.9" y2="1350.8"/><linearGradient id="b23" href="#bs14" gradientUnits="userSpaceOnUse" x1="1101.5" y1="1138.1" x2="1114.9" y2="1127.3"/><linearGradient id="b24" href="#bs2" gradientUnits="userSpaceOnUse" x1="1101.3" y1="1102.2" x2="1084.6" y2="1106.4"/><linearGradient id="bs16"><stop offset="0" stop-color="#909090"/><stop offset="0.2" stop-color="#909090"/><stop offset="0.5" stop-color="#a0a0a0"/><stop offset="0.8" stop-color="#ffffff"/><stop offset="1" stop-color="#ffffff"/></linearGradient><linearGradient id="b25" href="#bs16" gradientUnits="userSpaceOnUse" x1="891.1" y1="1334.2" x2="898.6" y2="1321.7"/><linearGradient id="b26" href="#bs12" gradientUnits="userSpaceOnUse" x1="950.2" y1="1359.3" x2="962.9" y2="1371"/><linearGradient id="bs17"><stop offset="0" stop-color="#e0e0e0"/><stop offset="0.2" stop-color="#989898"/><stop offset="0.5" stop-color="#909090"/><stop offset="0.8" stop-color="#909090"/><stop offset="1" stop-color="#909090"/></linearGradient><linearGradient id="b27" href="#bs17" gradientUnits="userSpaceOnUse" x1="1065" y1="1081.7" x2="1064.8" y2="1098.9"/><linearGradient id="bs18"><stop offset="0" stop-color="#e0e0e0"/><stop offset="0.2" stop-color="#ffffff"/><stop offset="0.5" stop-color="#c8c8c8"/><stop offset="0.8" stop-color="#989898"/><stop offset="1" stop-color="#909090"/></linearGradient><linearGradient id="b28" href="#bs18" gradientUnits="userSpaceOnUse" x1="1039.9" y1="1345.6" x2="1043.1" y2="1362.6"/><linearGradient id="bs19"><stop offset="0" stop-color="#909090"/><stop offset="0.2" stop-color="#a0a0a0"/><stop offset="0.5" stop-color="#d8d8d8"/><stop offset="0.8" stop-color="#ffffff"/><stop offset="1" stop-color="#e0e0e0"/></linearGradient><linearGradient id="b29" href="#bs19" gradientUnits="userSpaceOnUse" x1="840.6" y1="1177.5" x2="855.1" y2="1179.9"/><linearGradient id="b30" href="#bs12" gradientUnits="userSpaceOnUse" x1="881.5" y1="1107.8" x2="894.2" y2="1119.5"/><linearGradient id="b31" href="#bs12" gradientUnits="userSpaceOnUse" x1="1101.3" y1="1302.2" x2="1114" y2="1313.9"/><linearGradient id="bs20"><stop offset="0" stop-color="#d8d8d8"/><stop offset="0.2" stop-color="#b8b8b8"/><stop offset="0.5" stop-color="#909090"/><stop offset="0.8" stop-color="#909090"/><stop offset="1" stop-color="#909090"/></linearGradient><linearGradient id="b32" href="#bs20" gradientUnits="userSpaceOnUse" x1="849.7" y1="1230.7" x2="835" y2="1229.8"/><linearGradient id="bs21"><stop offset="0" stop-color="#909090"/><stop offset="0.2" stop-color="#909090"/><stop offset="0.5" stop-color="#909090"/><stop offset="0.8" stop-color="#989898"/><stop offset="1" stop-color="#e8e8e8"/></linearGradient><linearGradient id="b33" href="#bs21" gradientUnits="userSpaceOnUse" x1="1028.5" y1="1078.4" x2="1045.2" y2="1074.2"/><linearGradient id="bs22"><stop offset="0" stop-color="#ffffff"/><stop offset="0.2" stop-color="#e0e0e0"/><stop offset="0.5" stop-color="#989898"/><stop offset="0.8" stop-color="#909090"/><stop offset="1" stop-color="#909090"/></linearGradient><linearGradient id="b34" href="#bs22" gradientUnits="userSpaceOnUse" x1="939.6" y1="1351.2" x2="929.8" y2="1362.1"/><linearGradient id="bs23"><stop offset="0" stop-color="#ffffff"/><stop offset="0.2" stop-color="#f0f0f0"/><stop offset="0.5" stop-color="#a0a0a0"/><stop offset="0.8" stop-color="#909090"/><stop offset="1" stop-color="#909090"/></linearGradient><linearGradient id="b35" href="#bs23" gradientUnits="userSpaceOnUse" x1="1142.8" y1="1171.6" x2="1127.6" y2="1179.8"/><linearGradient id="b36" href="#bs5" gradientUnits="userSpaceOnUse" x1="1097.2" y1="1123.1" x2="1112.4" y2="1114.9"/><linearGradient id="b37" href="#bs4" gradientUnits="userSpaceOnUse" x1="982.8" y1="1374" x2="979.6" y2="1357"/><linearGradient id="b38" href="#bs12" gradientUnits="userSpaceOnUse" x1="840" y1="1154.2" x2="852.7" y2="1165.9"/><linearGradient id="b39" href="#bs12" gradientUnits="userSpaceOnUse" x1="1059.8" y1="1348.6" x2="1072.5" y2="1360.3"/><linearGradient id="bs24"><stop offset="0" stop-color="#909090"/><stop offset="0.2" stop-color="#b0b0b0"/><stop offset="0.5" stop-color="#e8e8e8"/><stop offset="0.8" stop-color="#ffffff"/><stop offset="1" stop-color="#f8f8f8"/></linearGradient><linearGradient id="b40" href="#bs24" gradientUnits="userSpaceOnUse" x1="907" y1="1350" x2="906.3" y2="1335.3"/><linearGradient id="bs25"><stop offset="0" stop-color="#989898"/><stop offset="0.2" stop-color="#b8b8b8"/><stop offset="0.5" stop-color="#d0d0d0"/><stop offset="0.8" stop-color="#c0c0c0"/><stop offset="1" stop-color="#a0a0a0"/></linearGradient><linearGradient id="b41" href="#bs25" gradientUnits="userSpaceOnUse" x1="896.6" y1="1090.7" x2="909.5" y2="1102.2"/><linearGradient id="b42" href="#bs25" gradientUnits="userSpaceOnUse" x1="1116.4" y1="1285.2" x2="1129.3" y2="1296.7"/><linearGradient id="b43" href="#bs17" gradientUnits="userSpaceOnUse" x1="1036.1" y1="1351.5" x2="1035.9" y2="1368.8"/><linearGradient id="bs26"><stop offset="0" stop-color="#909090"/><stop offset="0.2" stop-color="#909090"/><stop offset="0.5" stop-color="#909090"/><stop offset="0.8" stop-color="#909090"/><stop offset="1" stop-color="#d8d8d8"/></linearGradient><linearGradient id="b44" href="#bs26" gradientUnits="userSpaceOnUse" x1="835" y1="1185.4" x2="849.6" y2="1184.1"/><linearGradient id="bs27"><stop offset="0" stop-color="#d8d8d8"/><stop offset="0.2" stop-color="#ffffff"/><stop offset="0.5" stop-color="#ffffff"/><stop offset="0.8" stop-color="#d0d0d0"/><stop offset="1" stop-color="#909090"/></linearGradient><linearGradient id="b45" href="#bs27" gradientUnits="userSpaceOnUse" x1="845.8" y1="1219.2" x2="832" y2="1214"/><linearGradient id="b46" href="#bs12" gradientUnits="userSpaceOnUse" x1="1012.2" y1="1371.7" x2="999.4" y2="1360"/><linearGradient id="bs28"><stop offset="0" stop-color="#ffffff"/><stop offset="0.2" stop-color="#e0e0e0"/><stop offset="0.5" stop-color="#a8a8a8"/><stop offset="0.8" stop-color="#909090"/><stop offset="1" stop-color="#909090"/></linearGradient><linearGradient id="b47" href="#bs28" gradientUnits="userSpaceOnUse" x1="1138.5" y1="1156.6" x2="1125.1" y2="1167.4"/><linearGradient id="b48" href="#bs11" gradientUnits="userSpaceOnUse" x1="868" y1="1148.6" x2="855.1" y2="1137.1"/><linearGradient id="b49" href="#bs11" gradientUnits="userSpaceOnUse" x1="1087.8" y1="1343.1" x2="1074.9" y2="1331.6"/><linearGradient id="b50" href="#bs21" gradientUnits="userSpaceOnUse" x1="1108.2" y1="1135.8" x2="1124.9" y2="1131.6"/><linearGradient id="b51" href="#bs12" gradientUnits="userSpaceOnUse" x1="883.1" y1="1131.6" x2="870.4" y2="1119.9"/><linearGradient id="b52" href="#bs12" gradientUnits="userSpaceOnUse" x1="1102.9" y1="1326" x2="1090.2" y2="1314.3"/><linearGradient id="bsp" gradientUnits="userSpaceOnUse" x1="892.6" y1="1322.3" x2="1091.8" y2="1111.5"><stop offset="0" stop-color="#909090"/><stop offset="0.48" stop-color="#979797"/><stop offset="0.75" stop-color="#d4d4d4"/><stop offset="0.9" stop-color="#f4f4f4"/><stop offset="1" stop-color="#fff"/></linearGradient><linearGradient id="bs29"><stop offset="0" stop-color="#909090"/><stop offset="0.2" stop-color="#909090"/><stop offset="0.5" stop-color="#909090"/><stop offset="0.8" stop-color="#a8a8a8"/><stop offset="1" stop-color="#e8e8e8"/></linearGradient><linearGradient id="b53" href="#bs29" gradientUnits="userSpaceOnUse" x1="848.4" y1="1289.5" x2="859.4" y2="1283.6"/><linearGradient id="bs30"><stop offset="0" stop-color="#909090"/><stop offset="0.2" stop-color="#b8b8b8"/><stop offset="0.5" stop-color="#f0f0f0"/><stop offset="0.8" stop-color="#ffffff"/><stop offset="1" stop-color="#e0e0e0"/></linearGradient><linearGradient id="b54" href="#bs30" gradientUnits="userSpaceOnUse" x1="954.8" y1="1072.1" x2="952.4" y2="1059.1"/><linearGradient id="bs31"><stop offset="0" stop-color="#e0e0e0"/><stop offset="0.2" stop-color="#e0e0e0"/><stop offset="0.5" stop-color="#c8c8c8"/><stop offset="0.8" stop-color="#a0a0a0"/><stop offset="1" stop-color="#909090"/></linearGradient><linearGradient id="b55" href="#bs31" gradientUnits="userSpaceOnUse" x1="1155.6" y1="1236.8" x2="1142.7" y2="1235.4"/><linearGradient id="bs32"><stop offset="0" stop-color="#909090"/><stop offset="0.2" stop-color="#909090"/><stop offset="0.5" stop-color="#909090"/><stop offset="0.8" stop-color="#a8a8a8"/><stop offset="1" stop-color="#e0e0e0"/></linearGradient><linearGradient id="b56" href="#bs32" gradientUnits="userSpaceOnUse" x1="1008.7" y1="1066.9" x2="1008.9" y2="1053.7"/><linearGradient id="bs33"><stop offset="0" stop-color="#909090"/><stop offset="0.2" stop-color="#909090"/><stop offset="0.5" stop-color="#909090"/><stop offset="0.8" stop-color="#b8b8b8"/><stop offset="1" stop-color="#e8e8e8"/></linearGradient><linearGradient id="b57" href="#bs33" gradientUnits="userSpaceOnUse" x1="876.3" y1="1333.8" x2="886.8" y2="1325.5"/><linearGradient id="bs34"><stop offset="0" stop-color="#c8c8c8"/><stop offset="0.2" stop-color="#909090"/><stop offset="0.5" stop-color="#909090"/><stop offset="0.8" stop-color="#909090"/><stop offset="1" stop-color="#909090"/></linearGradient><linearGradient id="b58" href="#bs34" gradientUnits="userSpaceOnUse" x1="874.8" y1="1298.3" x2="859.5" y2="1302.2"/><linearGradient id="bs35"><stop offset="0" stop-color="#909090"/><stop offset="0.2" stop-color="#909090"/><stop offset="0.5" stop-color="#989898"/><stop offset="0.8" stop-color="#d0d0d0"/><stop offset="1" stop-color="#ffffff"/></linearGradient><linearGradient id="b59" href="#bs35" gradientUnits="userSpaceOnUse" x1="845.9" y1="1277.2" x2="857.9" y2="1267.5"/><linearGradient id="bs36"><stop offset="0" stop-color="#a8a8a8"/><stop offset="0.2" stop-color="#909090"/><stop offset="0.5" stop-color="#909090"/><stop offset="0.8" stop-color="#909090"/><stop offset="1" stop-color="#909090"/></linearGradient><linearGradient id="b60" href="#bs36" gradientUnits="userSpaceOnUse" x1="842.5" y1="1242.1" x2="829" y2="1245.5"/><linearGradient id="b61" href="#bs12" gradientUnits="userSpaceOnUse" x1="972.2" y1="1062.1" x2="984.9" y2="1073.7"/><linearGradient id="b62" href="#bs9" gradientUnits="userSpaceOnUse" x1="1059.2" y1="1081.2" x2="1065.3" y2="1068.9"/><linearGradient id="bs37"><stop offset="0" stop-color="#a0a0a0"/><stop offset="0.2" stop-color="#e0e0e0"/><stop offset="0.5" stop-color="#ffffff"/><stop offset="0.8" stop-color="#ffffff"/><stop offset="1" stop-color="#d8d8d8"/></linearGradient><linearGradient id="b63" href="#bs37" gradientUnits="userSpaceOnUse" x1="1139.7" y1="1215" x2="1152.4" y2="1219.8"/><linearGradient id="bs38"><stop offset="0" stop-color="#909090"/><stop offset="0.2" stop-color="#909090"/><stop offset="0.5" stop-color="#989898"/><stop offset="0.8" stop-color="#e0e0e0"/><stop offset="1" stop-color="#ffffff"/></linearGradient><linearGradient id="b64" href="#bs38" gradientUnits="userSpaceOnUse" x1="919.1" y1="1364.9" x2="925.6" y2="1351.8"/><linearGradient id="bs39"><stop offset="0" stop-color="#d8d8d8"/><stop offset="0.2" stop-color="#989898"/><stop offset="0.5" stop-color="#909090"/><stop offset="0.8" stop-color="#909090"/><stop offset="1" stop-color="#909090"/></linearGradient><linearGradient id="b65" href="#bs39" gradientUnits="userSpaceOnUse" x1="1149.4" y1="1248.4" x2="1136.2" y2="1249.5"/><linearGradient id="bs40"><stop offset="0" stop-color="#909090"/><stop offset="0.2" stop-color="#909090"/><stop offset="0.5" stop-color="#909090"/><stop offset="0.8" stop-color="#a0a0a0"/><stop offset="1" stop-color="#e0e0e0"/></linearGradient><linearGradient id="b66" href="#bs40" gradientUnits="userSpaceOnUse" x1="948.3" y1="1080.5" x2="948.5" y2="1065"/><linearGradient id="bs41"><stop offset="0" stop-color="#e8e8e8"/><stop offset="0.2" stop-color="#a0a0a0"/><stop offset="0.5" stop-color="#909090"/><stop offset="0.8" stop-color="#909090"/><stop offset="1" stop-color="#909090"/></linearGradient><linearGradient id="b67" href="#bs41" gradientUnits="userSpaceOnUse" x1="1155.4" y1="1188.3" x2="1141.4" y2="1191.8"/><linearGradient id="bs42"><stop offset="0" stop-color="#f8f8f8"/><stop offset="0.2" stop-color="#ffffff"/><stop offset="0.5" stop-color="#e8e8e8"/><stop offset="0.8" stop-color="#b0b0b0"/><stop offset="1" stop-color="#909090"/></linearGradient><linearGradient id="b68" href="#bs42" gradientUnits="userSpaceOnUse" x1="1077.4" y1="1083.8" x2="1078" y2="1098.3"/><linearGradient id="bs43"><stop offset="0" stop-color="#b0b0b0"/><stop offset="0.2" stop-color="#f8f8f8"/><stop offset="0.5" stop-color="#ffffff"/><stop offset="0.8" stop-color="#ffffff"/><stop offset="1" stop-color="#d0d0d0"/></linearGradient><linearGradient id="b69" href="#bs43" gradientUnits="userSpaceOnUse" x1="911.9" y1="1073.5" x2="923.8" y2="1084.4"/><linearGradient id="bs44"><stop offset="0" stop-color="#909090"/><stop offset="0.2" stop-color="#909090"/><stop offset="0.5" stop-color="#b8b8b8"/><stop offset="0.8" stop-color="#e8e8e8"/><stop offset="1" stop-color="#ffffff"/></linearGradient><linearGradient id="b70" href="#bs44" gradientUnits="userSpaceOnUse" x1="1096.4" y1="1109.3" x2="1108.1" y2="1100"/><linearGradient id="bs45"><stop offset="0" stop-color="#d0d0d0"/><stop offset="0.2" stop-color="#ffffff"/><stop offset="0.5" stop-color="#ffffff"/><stop offset="0.8" stop-color="#f8f8f8"/><stop offset="1" stop-color="#b0b0b0"/></linearGradient><linearGradient id="b71" href="#bs45" gradientUnits="userSpaceOnUse" x1="1132.6" y1="1268.7" x2="1144.4" y2="1279.6"/><linearGradient id="bs46"><stop offset="0" stop-color="#e0e0e0"/><stop offset="0.2" stop-color="#ffffff"/><stop offset="0.5" stop-color="#e0e0e0"/><stop offset="0.8" stop-color="#a8a8a8"/><stop offset="1" stop-color="#909090"/></linearGradient><linearGradient id="b72" href="#bs46" gradientUnits="userSpaceOnUse" x1="1001.6" y1="1059.8" x2="1004.4" y2="1074.9"/><linearGradient id="bs47"><stop offset="0" stop-color="#ffffff"/><stop offset="0.2" stop-color="#d0d0d0"/><stop offset="0.5" stop-color="#909090"/><stop offset="0.8" stop-color="#909090"/><stop offset="1" stop-color="#909090"/></linearGradient><linearGradient id="b73" href="#bs47" gradientUnits="userSpaceOnUse" x1="885.2" y1="1311.8" x2="872" y2="1318.9"/><linearGradient id="bs48"><stop offset="0" stop-color="#909090"/><stop offset="0.2" stop-color="#909090"/><stop offset="0.5" stop-color="#909090"/><stop offset="0.8" stop-color="#909090"/><stop offset="1" stop-color="#b8b8b8"/></linearGradient><linearGradient id="b74" href="#bs48" gradientUnits="userSpaceOnUse" x1="975.5" y1="1380.1" x2="975.7" y2="1365.1"/><linearGradient id="bs49"><stop offset="0" stop-color="#e0e0e0"/><stop offset="0.2" stop-color="#d0d0d0"/><stop offset="0.5" stop-color="#a0a0a0"/><stop offset="0.8" stop-color="#909090"/><stop offset="1" stop-color="#909090"/></linearGradient><linearGradient id="b75" href="#bs49" gradientUnits="userSpaceOnUse" x1="843.9" y1="1198.6" x2="828.8" y2="1197"/><linearGradient id="bs50"><stop offset="0" stop-color="#909090"/><stop offset="0.2" stop-color="#909090"/><stop offset="0.5" stop-color="#909090"/><stop offset="0.8" stop-color="#d0d0d0"/><stop offset="1" stop-color="#ffffff"/></linearGradient><linearGradient id="b76" href="#bs50" gradientUnits="userSpaceOnUse" x1="841.6" y1="1262.2" x2="854.8" y2="1255.1"/><linearGradient id="b77" href="#bs14" gradientUnits="userSpaceOnUse" x1="1045.5" y1="1081.8" x2="1054.6" y2="1071.7"/><linearGradient id="b78" href="#bs2" gradientUnits="userSpaceOnUse" x1="955.9" y1="1355.4" x2="939.2" y2="1359.6"/><linearGradient id="bs51"><stop offset="0" stop-color="#909090"/><stop offset="0.2" stop-color="#909090"/><stop offset="0.5" stop-color="#b8b8b8"/><stop offset="0.8" stop-color="#f8f8f8"/><stop offset="1" stop-color="#f0f0f0"/></linearGradient><linearGradient id="b79" href="#bs51" gradientUnits="userSpaceOnUse" x1="1032" y1="1374.7" x2="1029.2" y2="1359.8"/><linearGradient id="bs52"><stop offset="0" stop-color="#909090"/><stop offset="0.2" stop-color="#909090"/><stop offset="0.5" stop-color="#989898"/><stop offset="0.8" stop-color="#b8b8b8"/><stop offset="1" stop-color="#d8d8d8"/></linearGradient><linearGradient id="b80" href="#bs52" gradientUnits="userSpaceOnUse" x1="1136.5" y1="1203.2" x2="1149.4" y2="1204"/><linearGradient id="bs53"><stop offset="0" stop-color="#e0e0e0"/><stop offset="0.2" stop-color="#ffffff"/><stop offset="0.5" stop-color="#f0f0f0"/><stop offset="0.8" stop-color="#b0b0b0"/><stop offset="1" stop-color="#909090"/></linearGradient><linearGradient id="b81" href="#bs53" gradientUnits="userSpaceOnUse" x1="1143.8" y1="1256.3" x2="1131" y2="1254.2"/><linearGradient id="bs54"><stop offset="0" stop-color="#909090"/><stop offset="0.2" stop-color="#a8a8a8"/><stop offset="0.5" stop-color="#e0e0e0"/><stop offset="0.8" stop-color="#ffffff"/><stop offset="1" stop-color="#e0e0e0"/></linearGradient><linearGradient id="b82" href="#bs54" gradientUnits="userSpaceOnUse" x1="944.1" y1="1086.2" x2="941.3" y2="1071.2"/><linearGradient id="bs55"><stop offset="0" stop-color="#909090"/><stop offset="0.2" stop-color="#909090"/><stop offset="0.5" stop-color="#909090"/><stop offset="0.8" stop-color="#989898"/><stop offset="1" stop-color="#d8d8d8"/></linearGradient><linearGradient id="b83" href="#bs55" gradientUnits="userSpaceOnUse" x1="919.4" y1="1352.1" x2="919.6" y2="1335.4"/><linearGradient id="b84" href="#bs12" gradientUnits="userSpaceOnUse" x1="1021.5" y1="1062.8" x2="1034.2" y2="1074.5"/><linearGradient id="bs56"><stop offset="0" stop-color="#909090"/><stop offset="0.2" stop-color="#909090"/><stop offset="0.5" stop-color="#a8a8a8"/><stop offset="0.8" stop-color="#f8f8f8"/><stop offset="1" stop-color="#ffffff"/></linearGradient><linearGradient id="b85" href="#bs56" gradientUnits="userSpaceOnUse" x1="1122.2" y1="1151.7" x2="1136" y2="1144.3"/><linearGradient id="bs57"><stop offset="0" stop-color="#ffffff"/><stop offset="0.2" stop-color="#ffffff"/><stop offset="0.5" stop-color="#b0b0b0"/><stop offset="0.8" stop-color="#909090"/><stop offset="1" stop-color="#909090"/></linearGradient><linearGradient id="b86" href="#bs57" gradientUnits="userSpaceOnUse" x1="1093.3" y1="1099.6" x2="1086.5" y2="1111"/><linearGradient id="bs58"><stop offset="0" stop-color="#e8e8e8"/><stop offset="0.2" stop-color="#909090"/><stop offset="0.5" stop-color="#909090"/><stop offset="0.8" stop-color="#909090"/><stop offset="1" stop-color="#909090"/></linearGradient><linearGradient id="b87" href="#bs58" gradientUnits="userSpaceOnUse" x1="899.6" y1="1327.4" x2="883.1" y2="1331.6"/><linearGradient id="bs59"><stop offset="0" stop-color="#ffffff"/><stop offset="0.2" stop-color="#d8d8d8"/><stop offset="0.5" stop-color="#a0a0a0"/><stop offset="0.8" stop-color="#909090"/><stop offset="1" stop-color="#909090"/></linearGradient><linearGradient id="b88" href="#bs59" gradientUnits="userSpaceOnUse" x1="1054.2" y1="1346.4" x2="1045.3" y2="1358"/><linearGradient id="b89" href="#bs15" gradientUnits="userSpaceOnUse" x1="881.5" y1="1296.9" x2="869.5" y2="1306.5"/><linearGradient id="b90" href="#bs14" gradientUnits="userSpaceOnUse" x1="845.8" y1="1186.2" x2="859.3" y2="1175.4"/><linearGradient id="bs60"><stop offset="0" stop-color="#e0e0e0"/><stop offset="0.2" stop-color="#a0a0a0"/><stop offset="0.5" stop-color="#909090"/><stop offset="0.8" stop-color="#909090"/><stop offset="1" stop-color="#909090"/></linearGradient><linearGradient id="b91" href="#bs60" gradientUnits="userSpaceOnUse" x1="997.8" y1="1065.7" x2="997.6" y2="1081.2"/><linearGradient id="bs61"><stop offset="0" stop-color="#909090"/><stop offset="0.2" stop-color="#909090"/><stop offset="0.5" stop-color="#909090"/><stop offset="0.8" stop-color="#909090"/><stop offset="1" stop-color="#c8c8c8"/></linearGradient><linearGradient id="b92" href="#bs61" gradientUnits="userSpaceOnUse" x1="852.6" y1="1274.9" x2="867.9" y2="1271"/><linearGradient id="bs62"><stop offset="0" stop-color="#ffffff"/><stop offset="0.2" stop-color="#ffffff"/><stop offset="0.5" stop-color="#a0a0a0"/><stop offset="0.8" stop-color="#909090"/><stop offset="1" stop-color="#909090"/></linearGradient><linearGradient id="b93" href="#bs62" gradientUnits="userSpaceOnUse" x1="975.6" y1="1351" x2="968.3" y2="1365.6"/><linearGradient id="b94" href="#bs35" gradientUnits="userSpaceOnUse" x1="1131.8" y1="1232.6" x2="1141.3" y2="1221.4"/><linearGradient id="b95" href="#bs14" gradientUnits="userSpaceOnUse" x1="839" y1="1249.9" x2="852.2" y2="1239.3"/><linearGradient id="bs63"><stop offset="0" stop-color="#909090"/><stop offset="0.2" stop-color="#909090"/><stop offset="0.5" stop-color="#c0c0c0"/><stop offset="0.8" stop-color="#ffffff"/><stop offset="1" stop-color="#ffffff"/></linearGradient><linearGradient id="b96" href="#bs63" gradientUnits="userSpaceOnUse" x1="1041.9" y1="1088.9" x2="1046.8" y2="1076.3"/><linearGradient id="bs64"><stop offset="0" stop-color="#909090"/><stop offset="0.2" stop-color="#909090"/><stop offset="0.5" stop-color="#909090"/><stop offset="0.8" stop-color="#909090"/><stop offset="1" stop-color="#989898"/></linearGradient><linearGradient id="b97" href="#bs64" gradientUnits="userSpaceOnUse" x1="1023.9" y1="1363.8" x2="1015.6" y2="1352.3"/><linearGradient id="bs65"><stop offset="0" stop-color="#a8a8a8"/><stop offset="0.2" stop-color="#c0c0c0"/><stop offset="0.5" stop-color="#d0d0d0"/><stop offset="0.8" stop-color="#b8b8b8"/><stop offset="1" stop-color="#989898"/></linearGradient><linearGradient id="b98" href="#bs65" gradientUnits="userSpaceOnUse" x1="897.4" y1="1113.5" x2="885.5" y2="1102.8"/><linearGradient id="b99" href="#bs12" gradientUnits="userSpaceOnUse" x1="973.8" y1="1085.8" x2="961.1" y2="1074.2"/><linearGradient id="bs66"><stop offset="0" stop-color="#a0a0a0"/><stop offset="0.2" stop-color="#c0c0c0"/><stop offset="0.5" stop-color="#d0d0d0"/><stop offset="0.8" stop-color="#c0c0c0"/><stop offset="1" stop-color="#a8a8a8"/></linearGradient><linearGradient id="b100" href="#bs66" gradientUnits="userSpaceOnUse" x1="1118.2" y1="1308.8" x2="1106.1" y2="1298"/><linearGradient id="bs67"><stop offset="0" stop-color="#909090"/><stop offset="0.2" stop-color="#c0c0c0"/><stop offset="0.5" stop-color="#ffffff"/><stop offset="0.8" stop-color="#ffffff"/><stop offset="1" stop-color="#e0e0e0"/></linearGradient><linearGradient id="b101" href="#bs67" gradientUnits="userSpaceOnUse" x1="1130.1" y1="1198.3" x2="1146.4" y2="1202.1"/><linearGradient id="bs68"><stop offset="0" stop-color="#ffffff"/><stop offset="0.2" stop-color="#ffffff"/><stop offset="0.5" stop-color="#c8c8c8"/><stop offset="0.8" stop-color="#909090"/><stop offset="1" stop-color="#909090"/></linearGradient><linearGradient id="b102" href="#bs68" gradientUnits="userSpaceOnUse" x1="1124.8" y1="1163.4" x2="1120.8" y2="1180.2"/><linearGradient id="bs69"><stop offset="0" stop-color="#ffffff"/><stop offset="0.2" stop-color="#ffffff"/><stop offset="0.5" stop-color="#d0d0d0"/><stop offset="0.8" stop-color="#909090"/><stop offset="1" stop-color="#909090"/></linearGradient><linearGradient id="b103" href="#bs69" gradientUnits="userSpaceOnUse" x1="1075.8" y1="1098.8" x2="1061.8" y2="1103"/><linearGradient id="b104" href="#bs8" gradientUnits="userSpaceOnUse" x1="1141.2" y1="1251.7" x2="1124.4" y2="1251.7"/><linearGradient id="b105" href="#bs16" gradientUnits="userSpaceOnUse" x1="912.2" y1="1337.6" x2="919.5" y2="1323"/><linearGradient id="b106" href="#bs10" gradientUnits="userSpaceOnUse" x1="1099.2" y1="1141.5" x2="1116" y2="1145.5"/><linearGradient id="bs70"><stop offset="0" stop-color="#d0d0d0"/><stop offset="0.2" stop-color="#c0c0c0"/><stop offset="0.5" stop-color="#a8a8a8"/><stop offset="0.8" stop-color="#909090"/><stop offset="1" stop-color="#909090"/></linearGradient><linearGradient id="b107" href="#bs70" gradientUnits="userSpaceOnUse" x1="1062.8" y1="1328.7" x2="1067.3" y2="1342"/><linearGradient id="b108" href="#bs6" gradientUnits="userSpaceOnUse" x1="1090.4" y1="1123.4" x2="1094.3" y2="1106.7"/><linearGradient id="b109" href="#bs1" gradientUnits="userSpaceOnUse" x1="937.2" y1="1093.9" x2="937.5" y2="1077.1"/><linearGradient id="bs71"><stop offset="0" stop-color="#909090"/><stop offset="0.2" stop-color="#909090"/><stop offset="0.5" stop-color="#a8a8a8"/><stop offset="0.8" stop-color="#d8d8d8"/><stop offset="1" stop-color="#e0e0e0"/></linearGradient><linearGradient id="b110" href="#bs71" gradientUnits="userSpaceOnUse" x1="859.2" y1="1162.7" x2="875.8" y2="1164.5"/><linearGradient id="bs72"><stop offset="0" stop-color="#909090"/><stop offset="0.2" stop-color="#989898"/><stop offset="0.5" stop-color="#d8d8d8"/><stop offset="0.8" stop-color="#ffffff"/><stop offset="1" stop-color="#ffffff"/></linearGradient><linearGradient id="b111" href="#bs72" gradientUnits="userSpaceOnUse" x1="908.3" y1="1103.6" x2="922.7" y2="1101.2"/><linearGradient id="b112" href="#bs2" gradientUnits="userSpaceOnUse" x1="1005.2" y1="1356.1" x2="988.4" y2="1360.3"/><linearGradient id="b113" href="#bs68" gradientUnits="userSpaceOnUse" x1="1113.8" y1="1266.5" x2="1109.8" y2="1283.3"/><linearGradient id="bs73"><stop offset="0" stop-color="#e0e0e0"/><stop offset="0.2" stop-color="#d8d8d8"/><stop offset="0.5" stop-color="#a8a8a8"/><stop offset="0.8" stop-color="#909090"/><stop offset="1" stop-color="#909090"/></linearGradient><linearGradient id="b114" href="#bs73" gradientUnits="userSpaceOnUse" x1="868.9" y1="1228.2" x2="852.4" y2="1226.4"/><linearGradient id="b115" href="#bs3" gradientUnits="userSpaceOnUse" x1="865.2" y1="1291.6" x2="879.7" y2="1283.8"/><linearGradient id="b116" href="#bs39" gradientUnits="userSpaceOnUse" x1="968.9" y1="1336.1" x2="968.6" y2="1352.8"/><linearGradient id="bs74"><stop offset="0" stop-color="#909090"/><stop offset="0.2" stop-color="#909090"/><stop offset="0.5" stop-color="#909090"/><stop offset="0.8" stop-color="#989898"/><stop offset="1" stop-color="#c8c8c8"/></linearGradient><linearGradient id="b117" href="#bs74" gradientUnits="userSpaceOnUse" x1="896.6" y1="1132.6" x2="892.9" y2="1118.5"/><linearGradient id="bs75"><stop offset="0" stop-color="#909090"/><stop offset="0.2" stop-color="#989898"/><stop offset="0.5" stop-color="#d0d0d0"/><stop offset="0.8" stop-color="#ffffff"/><stop offset="1" stop-color="#e0e0e0"/></linearGradient><linearGradient id="b118" href="#bs75" gradientUnits="userSpaceOnUse" x1="993.6" y1="1088.4" x2="990.5" y2="1071.9"/><linearGradient id="bs76"><stop offset="0" stop-color="#909090"/><stop offset="0.2" stop-color="#909090"/><stop offset="0.5" stop-color="#a0a0a0"/><stop offset="0.8" stop-color="#e8e8e8"/><stop offset="1" stop-color="#ffffff"/></linearGradient><linearGradient id="b119" href="#bs76" gradientUnits="userSpaceOnUse" x1="1042.1" y1="1099.2" x2="1052" y2="1085.5"/><linearGradient id="bs77"><stop offset="0" stop-color="#909090"/><stop offset="0.2" stop-color="#989898"/><stop offset="0.5" stop-color="#d8d8d8"/><stop offset="0.8" stop-color="#ffffff"/><stop offset="1" stop-color="#f8f8f8"/></linearGradient><linearGradient id="b120" href="#bs77" gradientUnits="userSpaceOnUse" x1="1016.3" y1="1351.6" x2="1016.1" y2="1337.3"/><linearGradient id="b121" href="#bs8" gradientUnits="userSpaceOnUse" x1="1099.6" y1="1298.1" x2="1082.4" y2="1298.1"/><linearGradient id="bs78"><stop offset="0" stop-color="#ffffff"/><stop offset="0.2" stop-color="#f8f8f8"/><stop offset="0.5" stop-color="#a0a0a0"/><stop offset="0.8" stop-color="#909090"/><stop offset="1" stop-color="#909090"/></linearGradient><linearGradient id="b122" href="#bs78" gradientUnits="userSpaceOnUse" x1="1124.9" y1="1191.1" x2="1109.9" y2="1199.2"/><linearGradient id="b123" href="#bs21" gradientUnits="userSpaceOnUse" x1="932.3" y1="1332.3" x2="949.1" y2="1328.1"/><linearGradient id="bs79"><stop offset="0" stop-color="#909090"/><stop offset="0.2" stop-color="#909090"/><stop offset="0.5" stop-color="#a0a0a0"/><stop offset="0.8" stop-color="#f8f8f8"/><stop offset="1" stop-color="#ffffff"/></linearGradient><linearGradient id="b124" href="#bs79" gradientUnits="userSpaceOnUse" x1="1079.5" y1="1142.5" x2="1094.4" y2="1134.5"/><linearGradient id="bs80"><stop offset="0" stop-color="#a8a8a8"/><stop offset="0.2" stop-color="#a8a8a8"/><stop offset="0.5" stop-color="#a8a8a8"/><stop offset="0.8" stop-color="#989898"/><stop offset="1" stop-color="#909090"/></linearGradient><linearGradient id="b125" href="#bs80" gradientUnits="userSpaceOnUse" x1="935.7" y1="1096.9" x2="944.4" y2="1108.4"/><linearGradient id="bs81"><stop offset="0" stop-color="#909090"/><stop offset="0.2" stop-color="#909090"/><stop offset="0.5" stop-color="#909090"/><stop offset="0.8" stop-color="#909090"/><stop offset="1" stop-color="#a8a8a8"/></linearGradient><linearGradient id="b126" href="#bs81" gradientUnits="userSpaceOnUse" x1="1037.3" y1="1327.5" x2="1051.1" y2="1332.7"/><linearGradient id="b127" href="#bs25" gradientUnits="userSpaceOnUse" x1="1105.4" y1="1241.1" x2="1118.2" y2="1252.5"/><linearGradient id="b128" href="#bs6" gradientUnits="userSpaceOnUse" x1="1068.2" y1="1329.7" x2="1072.2" y2="1312.9"/><linearGradient id="bs82"><stop offset="0" stop-color="#b0b0b0"/><stop offset="0.2" stop-color="#909090"/><stop offset="0.5" stop-color="#909090"/><stop offset="0.8" stop-color="#909090"/><stop offset="1" stop-color="#909090"/></linearGradient><linearGradient id="b129" href="#bs82" gradientUnits="userSpaceOnUse" x1="901.8" y1="1297.9" x2="887.8" y2="1293.3"/><linearGradient id="b130" href="#bs14" gradientUnits="userSpaceOnUse" x1="876.2" y1="1151.8" x2="889.7" y2="1141"/><linearGradient id="b131" href="#bs10" gradientUnits="userSpaceOnUse" x1="1008.4" y1="1096.1" x2="1025.2" y2="1100.1"/><linearGradient id="bs83"><stop offset="0" stop-color="#909090"/><stop offset="0.2" stop-color="#909090"/><stop offset="0.5" stop-color="#909090"/><stop offset="0.8" stop-color="#c0c0c0"/><stop offset="1" stop-color="#f8f8f8"/></linearGradient><linearGradient id="b132" href="#bs83" gradientUnits="userSpaceOnUse" x1="877" y1="1274.1" x2="882.1" y2="1260.4"/><linearGradient id="b133" href="#bs1" gradientUnits="userSpaceOnUse" x1="912.5" y1="1324.8" x2="912.7" y2="1307.6"/><linearGradient id="b134" href="#bs28" gradientUnits="userSpaceOnUse" x1="882.9" y1="1204.7" x2="869.4" y2="1215.5"/><linearGradient id="b135" href="#bs3" gradientUnits="userSpaceOnUse" x1="981.5" y1="1110.8" x2="991.6" y2="1096.8"/><linearGradient id="bs84"><stop offset="0" stop-color="#c0c0c0"/><stop offset="0.2" stop-color="#f0f0f0"/><stop offset="0.5" stop-color="#ffffff"/><stop offset="0.8" stop-color="#c0c0c0"/><stop offset="1" stop-color="#909090"/></linearGradient><linearGradient id="b136" href="#bs84" gradientUnits="userSpaceOnUse" x1="912.9" y1="1143.9" x2="900.1" y2="1136.7"/><linearGradient id="b137" href="#bs18" gradientUnits="userSpaceOnUse" x1="1039.8" y1="1107.4" x2="1043" y2="1124.4"/><linearGradient id="b138" href="#bs6" gradientUnits="userSpaceOnUse" x1="1109.7" y1="1227" x2="1113.7" y2="1210.2"/><linearGradient id="b139" href="#bs11" gradientUnits="userSpaceOnUse" x1="1076.7" y1="1298.9" x2="1063.9" y2="1287.4"/><linearGradient id="bs85"><stop offset="0" stop-color="#e0e0e0"/><stop offset="0.2" stop-color="#ffffff"/><stop offset="0.5" stop-color="#ffffff"/><stop offset="0.8" stop-color="#b8b8b8"/><stop offset="1" stop-color="#909090"/></linearGradient><linearGradient id="b140" href="#bs85" gradientUnits="userSpaceOnUse" x1="1104.9" y1="1192.3" x2="1088.1" y2="1188.3"/><linearGradient id="bs86"><stop offset="0" stop-color="#909090"/><stop offset="0.2" stop-color="#909090"/><stop offset="0.5" stop-color="#909090"/><stop offset="0.8" stop-color="#989898"/><stop offset="1" stop-color="#b8b8b8"/></linearGradient><linearGradient id="b141" href="#bs86" gradientUnits="userSpaceOnUse" x1="1025.3" y1="1338.2" x2="1017.6" y2="1322.8"/><linearGradient id="b142" href="#bs0" gradientUnits="userSpaceOnUse" x1="961.5" y1="1338.3" x2="969.1" y2="1322.9"/><linearGradient id="b143" href="#bs6" gradientUnits="userSpaceOnUse" x1="1079.3" y1="1170.4" x2="1083.3" y2="1153.6"/><linearGradient id="bs87"><stop offset="0" stop-color="#f8f8f8"/><stop offset="0.2" stop-color="#b8b8b8"/><stop offset="0.5" stop-color="#909090"/><stop offset="0.8" stop-color="#909090"/><stop offset="1" stop-color="#909090"/></linearGradient><linearGradient id="b144" href="#bs87" gradientUnits="userSpaceOnUse" x1="937.4" y1="1119.4" x2="931.8" y2="1133"/><linearGradient id="b145" href="#bs62" gradientUnits="userSpaceOnUse" x1="924.9" y1="1291.2" x2="913.9" y2="1300.8"/><linearGradient id="b146" href="#bs10" gradientUnits="userSpaceOnUse" x1="948" y1="1107.5" x2="964.8" y2="1111.5"/><linearGradient id="bs88"><stop offset="0" stop-color="#909090"/><stop offset="0.2" stop-color="#909090"/><stop offset="0.5" stop-color="#909090"/><stop offset="0.8" stop-color="#a0a0a0"/><stop offset="1" stop-color="#d8d8d8"/></linearGradient><linearGradient id="b147" href="#bs88" gradientUnits="userSpaceOnUse" x1="1082.3" y1="1241.8" x2="1099.6" y2="1241.8"/><linearGradient id="b148" href="#bs10" gradientUnits="userSpaceOnUse" x1="1057.6" y1="1131.6" x2="1074.4" y2="1135.6"/><linearGradient id="bs89"><stop offset="0" stop-color="#909090"/><stop offset="0.2" stop-color="#909090"/><stop offset="0.5" stop-color="#909090"/><stop offset="0.8" stop-color="#c8c8c8"/><stop offset="1" stop-color="#f0f0f0"/></linearGradient><linearGradient id="b149" href="#bs89" gradientUnits="userSpaceOnUse" x1="887.7" y1="1252" x2="901.8" y2="1248.2"/><linearGradient id="b150" href="#bs8" gradientUnits="userSpaceOnUse" x1="1002" y1="1316.4" x2="984.7" y2="1316.5"/><linearGradient id="bs90"><stop offset="0" stop-color="#e0e0e0"/><stop offset="0.2" stop-color="#d8d8d8"/><stop offset="0.5" stop-color="#b0b0b0"/><stop offset="0.8" stop-color="#909090"/><stop offset="1" stop-color="#909090"/></linearGradient><linearGradient id="b151" href="#bs90" gradientUnits="userSpaceOnUse" x1="899.9" y1="1193.9" x2="882.8" y2="1192.1"/><linearGradient id="b152" href="#bs6" gradientUnits="userSpaceOnUse" x1="1068.2" y1="1273.4" x2="1072.2" y2="1256.6"/><linearGradient id="b153" href="#bs4" gradientUnits="userSpaceOnUse" x1="982.6" y1="1135.7" x2="979.4" y2="1118.7"/><linearGradient id="bs91"><stop offset="0" stop-color="#ffffff"/><stop offset="0.2" stop-color="#e8e8e8"/><stop offset="0.5" stop-color="#989898"/><stop offset="0.8" stop-color="#909090"/><stop offset="1" stop-color="#909090"/></linearGradient><linearGradient id="b154" href="#bs91" gradientUnits="userSpaceOnUse" x1="1040.9" y1="1132.3" x2="1030.8" y2="1146.3"/><linearGradient id="b155" href="#bs7" gradientUnits="userSpaceOnUse" x1="1025.3" y1="1294.6" x2="1017.5" y2="1310.1"/><linearGradient id="b156" href="#bs86" gradientUnits="userSpaceOnUse" x1="969.2" y1="1310.2" x2="961.4" y2="1294.7"/><linearGradient id="b157" href="#bs86" gradientUnits="userSpaceOnUse" x1="926.7" y1="1154.7" x2="918.9" y2="1139.3"/><linearGradient id="b158" href="#bs82" gradientUnits="userSpaceOnUse" x1="916.5" y1="1261.1" x2="922.3" y2="1274.6"/><linearGradient id="b159" href="#bs3" gradientUnits="userSpaceOnUse" x1="914.4" y1="1185.9" x2="924.5" y2="1171.9"/><linearGradient id="b160" href="#bs8" gradientUnits="userSpaceOnUse" x1="1058.1" y1="1288.2" x2="1040.8" y2="1288.2"/><linearGradient id="b161" href="#bs8" gradientUnits="userSpaceOnUse" x1="945.9" y1="1288.4" x2="928.6" y2="1288.4"/><linearGradient id="b162" href="#bs5" gradientUnits="userSpaceOnUse" x1="1068.1" y1="1189.5" x2="1083.3" y2="1181.3"/><linearGradient id="b163" href="#bs86" gradientUnits="userSpaceOnUse" x1="919.9" y1="1218.4" x2="912.1" y2="1203"/><linearGradient id="b164" href="#bs85" gradientUnits="userSpaceOnUse" x1="1014.1" y1="1147" x2="997.3" y2="1143"/><linearGradient id="b165" href="#bs3" gradientUnits="userSpaceOnUse" x1="907.5" y1="1249.6" x2="917.6" y2="1235.6"/><linearGradient id="bs92"><stop offset="0" stop-color="#f8f8f8"/><stop offset="0.2" stop-color="#ffffff"/><stop offset="0.5" stop-color="#b8b8b8"/><stop offset="0.8" stop-color="#909090"/><stop offset="1" stop-color="#909090"/></linearGradient><linearGradient id="b166" href="#bs92" gradientUnits="userSpaceOnUse" x1="1065.9" y1="1202.7" x2="1063.9" y2="1217.3"/><linearGradient id="bs93"><stop offset="0" stop-color="#909090"/><stop offset="0.2" stop-color="#909090"/><stop offset="0.5" stop-color="#b0b0b0"/><stop offset="0.8" stop-color="#d8d8d8"/><stop offset="1" stop-color="#e0e0e0"/></linearGradient><linearGradient id="b167" href="#bs93" gradientUnits="userSpaceOnUse" x1="938.9" y1="1163.8" x2="956" y2="1165.7"/><linearGradient id="b168" href="#bs11" gradientUnits="userSpaceOnUse" x1="1076.6" y1="1242.7" x2="1063.8" y2="1231.1"/><linearGradient id="bs94"><stop offset="0" stop-color="#b8b8b8"/><stop offset="0.2" stop-color="#989898"/><stop offset="0.5" stop-color="#909090"/><stop offset="0.8" stop-color="#909090"/><stop offset="1" stop-color="#909090"/></linearGradient><linearGradient id="b169" href="#bs94" gradientUnits="userSpaceOnUse" x1="1017.5" y1="1266.5" x2="1025.3" y2="1281.9"/><linearGradient id="b170" href="#bs0" gradientUnits="userSpaceOnUse" x1="961.4" y1="1282" x2="969.1" y2="1266.6"/><linearGradient id="bs95"><stop offset="0" stop-color="#909090"/><stop offset="0.2" stop-color="#a0a0a0"/><stop offset="0.5" stop-color="#c0c0c0"/><stop offset="0.8" stop-color="#d0d0d0"/><stop offset="1" stop-color="#c0c0c0"/></linearGradient><linearGradient id="b171" href="#bs95" gradientUnits="userSpaceOnUse" x1="1042.9" y1="1178.7" x2="1056.4" y2="1184.6"/><linearGradient id="b172" href="#bs90" gradientUnits="userSpaceOnUse" x1="949.2" y1="1229.4" x2="932" y2="1227.5"/><linearGradient id="b173" href="#bs3" gradientUnits="userSpaceOnUse" x1="970.5" y1="1157.7" x2="980.5" y2="1143.6"/><linearGradient id="b174" href="#bs4" gradientUnits="userSpaceOnUse" x1="1031.9" y1="1171.2" x2="1028.7" y2="1154.2"/><linearGradient id="bs96"><stop offset="0" stop-color="#f0f0f0"/><stop offset="0.2" stop-color="#e8e8e8"/><stop offset="0.5" stop-color="#a0a0a0"/><stop offset="0.8" stop-color="#909090"/><stop offset="1" stop-color="#909090"/></linearGradient><linearGradient id="b175" href="#bs96" gradientUnits="userSpaceOnUse" x1="1051.4" y1="1231.8" x2="1036.9" y2="1234.6"/><linearGradient id="b176" href="#bs88" gradientUnits="userSpaceOnUse" x1="984.7" y1="1260.2" x2="1002" y2="1260.2"/><linearGradient id="b177" href="#bs94" gradientUnits="userSpaceOnUse" x1="968.2" y1="1174.8" x2="976" y2="1190.2"/><linearGradient id="b178" href="#bs16" gradientUnits="userSpaceOnUse" x1="1014.4" y1="1192.6" x2="1024.6" y2="1182.1"/><linearGradient id="b179" href="#bs91" gradientUnits="userSpaceOnUse" x1="973.7" y1="1207.3" x2="963.6" y2="1221.4"/><linearGradient id="bs97"><stop offset="0" stop-color="#909090"/><stop offset="0.2" stop-color="#a8a8a8"/><stop offset="0.5" stop-color="#d8d8d8"/><stop offset="0.8" stop-color="#e0e0e0"/><stop offset="1" stop-color="#c0c0c0"/></linearGradient><linearGradient id="b180" href="#bs97" gradientUnits="userSpaceOnUse" x1="1019.7" y1="1225.6" x2="1012.5" y2="1212.8"/><linearGradient id="b181" href="#bs0" gradientUnits="userSpaceOnUse" x1="1017.5" y1="1253.8" x2="1025.2" y2="1238.4"/><linearGradient id="b182" href="#bs86" gradientUnits="userSpaceOnUse" x1="969.1" y1="1253.9" x2="961.4" y2="1238.5"/><linearGradient id="b183" href="#bs90" gradientUnits="userSpaceOnUse" x1="1005.3" y1="1201.2" x2="988.1" y2="1199.3"/></defs><path d="M1047.2,1117.2C1041.3,1100.9 1007.6,1084.1 991,1089.2C996.9,1105.5 1030.6,1122.4 1047.2,1117.2Z" fill="url(#b0)"/><path d="M1096.4,1118C1086.7,1105.8 1057.2,1105.4 1047.2,1117.2C1056.8,1129.4 1086.4,1129.8 1096.4,1118Z" fill="url(#b1)"/><path d="M1040.3,1089.9C1030,1098.3 1034.2,1114.7 1047.2,1117.2C1057.4,1108.9 1053.3,1092.5 1040.3,1089.9Z" fill="url(#b2)"/><path d="M962.1,1359.1C959.2,1342.3 929.7,1321 912.8,1323.6C915.7,1340.4 945.3,1361.7 962.1,1359.1Z" fill="url(#b3)"/><path d="M1022.5,1347.7C1008.2,1338.2 972,1345 962.1,1359.1C976.4,1368.6 1012.6,1361.8 1022.5,1347.7Z" fill="url(#b4)"/><path d="M1040.3,1089.9C1030.6,1077.8 1001.1,1077.4 991,1089.2C1000.7,1101.3 1030.3,1101.8 1040.3,1089.9Z" fill="url(#b5)"/><path d="M1126.9,1174.6C1131.3,1157.6 1113,1123.6 1096.4,1118C1092,1135 1110.2,1169 1126.9,1174.6Z" fill="url(#b6)"/><path d="M984.1,1061.9C973.9,1070.3 978,1086.7 991,1089.2C1001.3,1080.8 997.1,1064.5 984.1,1061.9Z" fill="url(#b7)"/><path d="M1071.7,1348.4C1062,1336.3 1032.5,1335.9 1022.5,1347.7C1032.1,1359.8 1061.7,1360.3 1071.7,1348.4Z" fill="url(#b8)"/><path d="M912.8,1323.6C907.3,1310 882.4,1304.1 871.3,1313.7C876.8,1327.4 901.8,1333.3 912.8,1323.6Z" fill="url(#b9)"/><path d="M1040.3,1089.9C1046.2,1106.3 1079.8,1123.1 1096.4,1118C1090.5,1101.6 1056.8,1084.8 1040.3,1089.9Z" fill="url(#b10)"/><path d="M851.9,1154C839.9,1165.3 839.9,1199 851.9,1210.2C863.9,1199 863.8,1165.2 851.9,1154Z" fill="url(#b11)"/><path d="M918.4,1342.1C927.1,1335.5 923.7,1324.4 912.8,1323.6C904.2,1330.2 907.6,1341.4 918.4,1342.1Z" fill="url(#b12)"/><path d="M840.8,1257.1C854.7,1250.5 861.3,1222.4 851.9,1210.2C838,1216.8 831.4,1244.9 840.8,1257.1Z" fill="url(#b13)"/><path d="M893.4,1107.6C876.2,1108.9 851.2,1136.7 851.9,1154C869.1,1152.7 894,1124.9 893.4,1107.6Z" fill="url(#b14)"/><path d="M1011.4,1359.8C1022.4,1365.5 1029,1358.2 1022.5,1347.7C1011.4,1342 1004.8,1349.3 1011.4,1359.8Z" fill="url(#b15)"/><path d="M1113.2,1302C1096,1303.3 1071.1,1331.2 1071.7,1348.4C1088.9,1347.1 1113.8,1319.3 1113.2,1302Z" fill="url(#b16)"/><path d="M918.4,1342.1C923.5,1355 949.7,1365.2 962.1,1359.1C957,1346.2 930.8,1336 918.4,1342.1Z" fill="url(#b17)"/><path d="M1150.5,1204C1155.1,1190.7 1140.9,1173 1126.9,1174.6C1122.3,1188 1136.4,1205.6 1150.5,1204Z" fill="url(#b18)"/><path d="M843.9,1203.4C838.9,1212.6 843.7,1216.6 851.9,1210.2C856.9,1201.1 852,1197 843.9,1203.4Z" fill="url(#b19)"/><path d="M1040.3,1089.9C1034.4,1073.6 1000.7,1056.8 984.1,1061.9C990,1078.3 1023.7,1095.1 1040.3,1089.9Z" fill="url(#b20)"/><path d="M1120,1147.3C1109.8,1155.7 1113.9,1172.1 1126.9,1174.6C1137.1,1166.3 1133,1149.9 1120,1147.3Z" fill="url(#b21)"/><path d="M1011.4,1359.8C1001.7,1347.7 972.1,1347.2 962.1,1359.1C971.8,1371.2 1001.3,1371.6 1011.4,1359.8Z" fill="url(#b22)"/><path d="M1120,1147.3C1124.6,1134 1110.5,1116.3 1096.4,1118C1091.8,1131.3 1105.9,1149 1120,1147.3Z" fill="url(#b23)"/><path d="M1089.5,1090.7C1079.3,1099.1 1083.4,1115.4 1096.4,1118C1106.6,1109.6 1102.5,1093.2 1089.5,1090.7Z" fill="url(#b24)"/><path d="M923.8,1073.3C908.8,1072.2 890.5,1092.8 893.4,1107.6C908.4,1108.7 926.7,1088.1 923.8,1073.3Z" fill="#909090"/><path d="M1143.6,1267.7C1128.6,1266.7 1110.3,1287.2 1113.2,1302C1128.3,1303.1 1146.5,1282.5 1143.6,1267.7Z" fill="#909090"/><path d="M918.4,1342.1C914.3,1327.7 886,1310.7 871.3,1313.7C875.5,1328.2 903.7,1345.2 918.4,1342.1Z" fill="url(#b25)"/><path d="M951,1371.1C962,1376.8 968.7,1369.6 962.1,1359.1C951.1,1353.4 944.4,1360.6 951,1371.1Z" fill="url(#b26)"/><path d="M1040.3,1089.9C1050,1102.1 1079.5,1102.5 1089.5,1090.7C1079.8,1078.6 1050.3,1078.1 1040.3,1089.9Z" fill="url(#b27)"/><path d="M1011.4,1359.8C1025.6,1369.3 1061.8,1362.5 1071.7,1348.4C1057.4,1338.9 1021.2,1345.8 1011.4,1359.8Z" fill="url(#b28)"/><path d="M843.9,1203.4C855.5,1195.2 860.3,1165.5 851.9,1154C840.2,1162.3 835.4,1191.9 843.9,1203.4Z" fill="url(#b29)"/><path d="M882.3,1119.7C893.3,1125.4 900,1118.1 893.4,1107.6C882.4,1101.9 875.7,1109.2 882.3,1119.7Z" fill="url(#b30)"/><path d="M1102.1,1314.1C1113.1,1319.8 1119.8,1312.6 1113.2,1302C1102.2,1296.4 1095.5,1303.6 1102.1,1314.1Z" fill="url(#b31)"/><path d="M843.9,1203.4C833.1,1213.6 831.3,1245.8 840.8,1257.1C851.6,1246.9 853.4,1214.7 843.9,1203.4Z" fill="url(#b32)"/><path d="M1040.3,1089.9C1050.5,1081.6 1046.4,1065.2 1033.4,1062.7C1023.2,1071 1027.3,1087.4 1040.3,1089.9Z" fill="url(#b33)"/><path d="M882.3,1119.7C867.2,1118.6 849,1139.2 851.9,1154C866.9,1155.1 885.2,1134.5 882.3,1119.7Z" fill="#909090"/><path d="M918.4,1342.1C918.2,1355.6 937.7,1373 951,1371.1C951.3,1357.7 931.7,1340.3 918.4,1342.1Z" fill="url(#b34)"/><path d="M1102.1,1314.1C1087.1,1313 1068.8,1333.6 1071.7,1348.4C1086.7,1349.5 1105,1328.9 1102.1,1314.1Z" fill="#909090"/><path d="M1120,1147.3C1115.5,1164.4 1133.8,1198.4 1150.5,1204C1154.9,1187 1136.6,1153 1120,1147.3Z" fill="url(#b35)"/><path d="M1120,1147.3C1124.4,1130.3 1106.2,1096.3 1089.5,1090.7C1085.1,1107.7 1103.4,1141.7 1120,1147.3Z" fill="url(#b36)"/><path d="M1011.4,1359.8C997.1,1350.3 960.9,1357.1 951,1371.1C965.3,1380.6 1001.5,1373.8 1011.4,1359.8Z" fill="url(#b37)"/><path d="M840.8,1166.1C851.8,1171.8 858.5,1164.5 851.9,1154C840.8,1148.3 834.2,1155.5 840.8,1166.1Z" fill="url(#b38)"/><path d="M1060.6,1360.5C1071.6,1366.2 1078.3,1359 1071.7,1348.4C1060.7,1342.7 1054,1350 1060.6,1360.5Z" fill="url(#b39)"/><path d="M918.4,1342.1C913.3,1332.2 899.2,1332.8 894.9,1343.1C900,1353.1 914.1,1352.5 918.4,1342.1Z" fill="url(#b40)"/><path d="M882.3,1119.7C899.5,1118.4 924.4,1090.6 923.8,1073.3C906.6,1074.6 881.7,1102.4 882.3,1119.7Z" fill="url(#b41)"/><path d="M1102.1,1314.1C1119.3,1312.8 1144.3,1285 1143.6,1267.7C1126.4,1269 1101.5,1296.9 1102.1,1314.1Z" fill="url(#b42)"/><path d="M1011.4,1359.8C1021,1371.9 1050.6,1372.3 1060.6,1360.5C1050.9,1348.4 1021.4,1348 1011.4,1359.8Z" fill="url(#b43)"/><path d="M843.9,1203.4C853.4,1195.1 851.5,1172.7 840.8,1166.1C831.2,1174.4 833.1,1196.8 843.9,1203.4Z" fill="url(#b44)"/><path d="M843.9,1203.4C832.3,1205.1 826.4,1220.9 833.9,1229.8C845.5,1228.1 851.4,1212.3 843.9,1203.4Z" fill="url(#b45)"/><path d="M1011.4,1359.8C1000.3,1354.1 993.7,1361.3 1000.3,1371.9C1011.3,1377.6 1017.9,1370.3 1011.4,1359.8Z" fill="url(#b46)"/><path d="M1120,1147.3C1115.4,1160.7 1129.5,1178.4 1143.6,1176.7C1148.2,1163.4 1134,1145.7 1120,1147.3Z" fill="url(#b47)"/><path d="M882.3,1119.7C865.1,1121 840.1,1148.8 840.8,1166.1C858,1164.8 882.9,1136.9 882.3,1119.7Z" fill="url(#b48)"/><path d="M1102.1,1314.1C1084.9,1315.4 1060,1343.2 1060.6,1360.5C1077.8,1359.2 1102.7,1331.4 1102.1,1314.1Z" fill="url(#b49)"/><path d="M1120,1147.3C1130.2,1139 1126.1,1122.6 1113.1,1120.1C1102.9,1128.4 1107,1144.8 1120,1147.3Z" fill="url(#b50)"/><path d="M882.3,1119.7C897.3,1120.8 915.6,1100.2 912.7,1085.4C897.7,1084.3 879.4,1104.9 882.3,1119.7Z" fill="#909090"/><path d="M1102.1,1314.1C1117.2,1315.2 1135.4,1294.6 1132.5,1279.8C1117.5,1278.7 1099.2,1299.3 1102.1,1314.1Z" fill="#909090"/><path d="M882.3,1119.7C871.3,1114 864.6,1121.2 871.2,1131.8C882.2,1137.4 888.9,1130.2 882.3,1119.7Z" fill="url(#b51)"/><path d="M1102.1,1314.1C1091.1,1308.4 1084.4,1315.7 1091,1326.2C1102,1331.9 1108.7,1324.6 1102.1,1314.1Z" fill="url(#b52)"/><circle cx="992.2" cy="1216.9" r="145" fill="url(#bsp)"/><path d="M871.3,1313.7C869.9,1299.9 851.6,1265.9 840.8,1257.1C836.4,1274.1 854.6,1308.1 871.3,1313.7Z" fill="url(#b53)"/><path d="M984.1,1061.9C969.9,1052.4 933.7,1059.3 923.8,1073.3C937,1077.2 973.2,1070.4 984.1,1061.9Z" fill="url(#b54)"/><path d="M1150.5,1204C1143,1216.1 1139,1254.3 1143.6,1267.7C1156.9,1256.3 1161,1218 1150.5,1204Z" fill="url(#b55)"/><path d="M1033.4,1062.7C1023.7,1050.5 994.2,1050.1 984.1,1061.9C993.9,1068.4 1023.5,1068.8 1033.4,1062.7Z" fill="url(#b56)"/><path d="M894.9,1343.1C895.3,1333.1 881.2,1315.5 871.3,1313.7C866.7,1327.1 880.8,1344.8 894.9,1343.1Z" fill="url(#b57)"/><path d="M864.4,1286.5C854.2,1294.8 858.3,1311.2 871.3,1313.7C879.6,1305.9 875.5,1289.5 864.4,1286.5Z" fill="url(#b58)"/><path d="M864.4,1286.5C867.1,1274.7 852.9,1257 840.8,1257.1C836.2,1270.4 850.4,1288.1 864.4,1286.5Z" fill="url(#b59)"/><path d="M833.9,1229.8C823.7,1238.2 827.8,1254.5 840.8,1257.1C846.5,1249.8 842.4,1233.4 833.9,1229.8Z" fill="url(#b60)"/><path d="M973,1074C984,1079.6 990.6,1072.4 984.1,1061.9C973.1,1056.2 966.5,1063.5 973,1074Z" fill="url(#b61)"/><path d="M1089.5,1090.7C1083.6,1074.4 1050,1057.5 1033.4,1062.7C1041.5,1074.6 1075.1,1091.4 1089.5,1090.7Z" fill="url(#b62)"/><path d="M1140.5,1230.4C1152.1,1228.7 1158,1212.9 1150.5,1204C1140.4,1206.3 1134.4,1222.1 1140.5,1230.4Z" fill="url(#b63)"/><path d="M951,1371.1C943.5,1358.1 909.8,1341.3 894.9,1343.1C900.8,1359.4 934.4,1376.3 951,1371.1Z" fill="url(#b64)"/><path d="M1140.5,1230.4C1133,1238.5 1134.9,1260.9 1143.6,1267.7C1153.2,1259.4 1151.3,1237 1140.5,1230.4Z" fill="url(#b65)"/><path d="M973,1074C963.4,1061.9 933.8,1061.5 923.8,1073.3C933.5,1083 963.1,1083.4 973,1074Z" fill="url(#b66)"/><path d="M1143.6,1176.7C1137.1,1184.2 1141.2,1200.6 1150.5,1204C1160.7,1195.6 1156.6,1179.3 1143.6,1176.7Z" fill="url(#b67)"/><path d="M1066,1091.7C1071.1,1101.3 1085.2,1100.7 1089.5,1090.7C1084.4,1080.7 1070.3,1081.3 1066,1091.7Z" fill="url(#b68)"/><path d="M912.7,1085.4C922.6,1090 929.2,1082.7 923.8,1073.3C912.8,1067.6 906.1,1074.8 912.7,1085.4Z" fill="url(#b69)"/><path d="M1113.1,1120.1C1117.7,1106.7 1103.6,1089 1089.5,1090.7C1087.4,1102 1101.6,1119.6 1113.1,1120.1Z" fill="url(#b70)"/><path d="M1132.5,1279.8C1143.6,1285.5 1150.2,1278.3 1143.6,1267.7C1133.8,1263.2 1127.1,1270.4 1132.5,1279.8Z" fill="url(#b71)"/><path d="M973,1074C986.8,1080.8 1023,1074 1033.4,1062.7C1019.1,1053.2 982.9,1060 973,1074Z" fill="url(#b72)"/><path d="M864.4,1286.5C860,1303.5 878.2,1337.5 894.9,1343.1C896.5,1327.6 878.2,1293.6 864.4,1286.5Z" fill="url(#b73)"/><path d="M1000.3,1371.9C990.5,1362.8 961,1362.3 951,1371.1C960.7,1383.3 990.2,1383.7 1000.3,1371.9Z" fill="url(#b74)"/><path d="M840.8,1166.1C827.5,1177.5 823.4,1215.8 833.9,1229.8C844.4,1218 848.5,1179.8 840.8,1166.1Z" fill="url(#b75)"/><path d="M864.4,1286.5C866,1271 847.8,1236.9 833.9,1229.8C829.5,1246.8 847.8,1280.8 864.4,1286.5Z" fill="url(#b76)"/><path d="M1066,1091.7C1066.2,1078.2 1046.7,1060.8 1033.4,1062.7C1034.1,1074.9 1053.7,1092.3 1066,1091.7Z" fill="url(#b77)"/><path d="M944.1,1343.9C933.9,1352.2 938,1368.6 951,1371.1C961.2,1362.8 957.1,1346.4 944.1,1343.9Z" fill="url(#b78)"/><path d="M1060.6,1360.5C1046.9,1353.9 1010.7,1360.8 1000.3,1371.9C1014.5,1381.4 1050.7,1374.5 1060.6,1360.5Z" fill="url(#b79)"/><path d="M1140.5,1230.4C1151.3,1220.2 1153.1,1188 1143.6,1176.7C1135.3,1187 1133.4,1219.2 1140.5,1230.4Z" fill="url(#b80)"/><path d="M1140.5,1230.4C1131.2,1239 1126.4,1268.7 1132.5,1279.8C1144.2,1271.5 1149,1241.9 1140.5,1230.4Z" fill="url(#b81)"/><path d="M973,1074C958.8,1064.5 922.6,1071.3 912.7,1085.4C926.5,1092.1 962.7,1085.3 973,1074Z" fill="url(#b82)"/><path d="M944.1,1343.9C934.4,1332.5 904.9,1332.1 894.9,1343.1C904.6,1355.2 934.1,1355.7 944.1,1343.9Z" fill="url(#b83)"/><path d="M1022.3,1074.7C1033.3,1080.4 1040,1073.2 1033.4,1062.7C1022.4,1057 1015.7,1064.2 1022.3,1074.7Z" fill="url(#b84)"/><path d="M1143.6,1176.7C1148,1159.7 1129.8,1125.7 1113.1,1120.1C1110.7,1136 1129,1170 1143.6,1176.7Z" fill="url(#b85)"/><path d="M1066,1091.7C1071.1,1104.4 1099.4,1121.5 1113.1,1120.1C1108.9,1105.6 1080.7,1088.6 1066,1091.7Z" fill="url(#b86)"/><path d="M871.2,1131.8C856.1,1130.7 837.9,1151.3 840.8,1166.1C854.7,1166.1 872.9,1145.5 871.2,1131.8Z" fill="#909090"/><path d="M1091,1326.2C1077.2,1326.2 1059,1346.8 1060.6,1360.5C1075.6,1361.6 1093.9,1341 1091,1326.2Z" fill="#909090"/><path d="M888,1315.8C877.8,1324.2 881.9,1340.6 894.9,1343.1C904.8,1334.8 900.7,1318.4 888,1315.8Z" fill="url(#b87)"/><path d="M1038.9,1343.9C1037.1,1355.3 1050.1,1365.3 1060.6,1360.5C1062.5,1349.1 1049.5,1339.1 1038.9,1343.9Z" fill="url(#b88)"/><path d="M864.4,1286.5C859.8,1299.8 873.9,1317.5 888,1315.8C890.7,1304 876.5,1286.4 864.4,1286.5Z" fill="url(#b89)"/><path d="M864.4,1195.5C869,1182.1 854.8,1164.4 840.8,1166.1C836.1,1179.4 850.3,1197.1 864.4,1195.5Z" fill="url(#b90)"/><path d="M973,1074C982.8,1083.7 1012.3,1084.1 1022.3,1074.7C1012.6,1062.6 983.1,1062.2 973,1074Z" fill="url(#b91)"/><path d="M864.4,1286.5C872.7,1278.6 868.6,1262.2 857.5,1259.2C847.3,1267.5 851.4,1283.9 864.4,1286.5Z" fill="url(#b92)"/><path d="M944.1,1343.9C950,1360.2 983.7,1377 1000.3,1371.9C993.8,1356.8 960.1,1339.9 944.1,1343.9Z" fill="url(#b93)"/><path d="M864.4,1195.5C849.3,1194.4 831.1,1215 833.9,1229.8C848.9,1230.8 867.1,1210.2 864.4,1195.5Z" fill="#909090"/><path d="M1140.5,1230.4C1145.5,1221.2 1140.7,1217.2 1132.5,1223.6C1127.5,1232.7 1132.4,1236.8 1140.5,1230.4Z" fill="url(#b94)"/><path d="M857.5,1259.2C861.7,1246.1 847.6,1228.5 833.9,1229.8C829.3,1243.1 843.5,1260.8 857.5,1259.2Z" fill="url(#b95)"/><path d="M1066,1091.7C1060.9,1078.8 1034.7,1068.6 1022.3,1074.7C1027.9,1086.1 1054.1,1096.2 1066,1091.7Z" fill="url(#b96)"/><path d="M1038.9,1343.9C1025.6,1341.7 1002.4,1358.5 1000.3,1371.9C1014,1374.5 1037.2,1357.7 1038.9,1343.9Z" fill="url(#b97)"/><path d="M912.7,1085.4C895.5,1086.7 870.6,1114.5 871.2,1131.8C887.1,1129.3 912,1101.5 912.7,1085.4Z" fill="url(#b98)"/><path d="M973,1074C962,1068.3 955.4,1075.6 961.9,1086.1C972.9,1091.7 979.5,1084.4 973,1074Z" fill="url(#b99)"/><path d="M1132.5,1279.8C1116.4,1282.1 1091.5,1309.9 1091,1326.2C1108.2,1324.9 1133.2,1297.1 1132.5,1279.8Z" fill="url(#b100)"/><path d="M1132.5,1223.6C1146.4,1217 1153,1188.9 1143.6,1176.7C1130.4,1183.5 1123.7,1211.6 1132.5,1223.6Z" fill="url(#b101)"/><path d="M1102,1166.9C1107.6,1180.5 1132.5,1186.4 1143.6,1176.7C1138,1163.1 1113.1,1157.2 1102,1166.9Z" fill="url(#b102)"/><path d="M1066,1091.7C1057.4,1098.3 1060.7,1109.4 1071.6,1110.2C1080.2,1103.6 1076.8,1092.4 1066,1091.7Z" fill="url(#b103)"/><path d="M1132.5,1223.6C1121.3,1234.8 1121.3,1268.6 1132.5,1279.8C1144.5,1268.5 1144.5,1234.8 1132.5,1223.6Z" fill="url(#b104)"/><path d="M944.1,1343.9C937.6,1328.7 904,1311.9 888,1315.8C893.9,1332.2 927.6,1349 944.1,1343.9Z" fill="url(#b105)"/><path d="M1102,1166.9C1115.9,1160.3 1122.5,1132.2 1113.1,1120.1C1099.2,1126.7 1092.6,1154.8 1102,1166.9Z" fill="url(#b106)"/><path d="M1038.9,1343.9C1052.6,1350 1083.9,1339.4 1091,1326.2C1077.6,1320.9 1046.4,1331.6 1038.9,1343.9Z" fill="url(#b107)"/><path d="M1113.1,1120.1C1107.6,1106.4 1082.6,1100.5 1071.6,1110.2C1077.1,1123.7 1102.1,1129.6 1113.1,1120.1Z" fill="url(#b108)"/><path d="M961.9,1086.1C952.3,1074 922.7,1073.5 912.7,1085.4C922.4,1096.9 951.9,1097.3 961.9,1086.1Z" fill="url(#b109)"/><path d="M864.4,1195.5C876.8,1183.9 880.9,1145.7 871.2,1131.8C857.9,1143.2 853.8,1181.4 864.4,1195.5Z" fill="url(#b110)"/><path d="M918.3,1119.4C927.2,1111 923.9,1090.5 912.7,1085.4C903.8,1093.8 907.1,1114.3 918.3,1119.4Z" fill="url(#b111)"/><path d="M993.4,1344.6C983.1,1353 987.3,1369.3 1000.3,1371.9C1010.5,1363.5 1006.4,1347.1 993.4,1344.6Z" fill="url(#b112)"/><path d="M1091,1270C1096.5,1283.6 1121.5,1289.5 1132.5,1279.8C1127,1266.2 1102.1,1260.3 1091,1270Z" fill="url(#b113)"/><path d="M864.4,1195.5C851.1,1206.9 847,1245.1 857.5,1259.2C870,1247.6 874.1,1209.4 864.4,1195.5Z" fill="url(#b114)"/><path d="M888,1315.8C891.5,1299.3 873.2,1265.3 857.5,1259.2C853.1,1276.2 871.4,1310.2 888,1315.8Z" fill="url(#b115)"/><path d="M944.1,1343.9C953.8,1356 983.3,1356.4 993.4,1344.6C983.7,1333.2 954.1,1332.8 944.1,1343.9Z" fill="url(#b116)"/><path d="M918.3,1119.4C906.3,1112.1 878,1119.4 871.2,1131.8C883.2,1139 911.4,1131.6 918.3,1119.4Z" fill="url(#b117)"/><path d="M1022.3,1074.7C1008,1065.2 971.8,1072 961.9,1086.1C976.1,1094.9 1012.3,1088.1 1022.3,1074.7Z" fill="url(#b118)"/><path d="M1071.6,1110.2C1068.7,1093.4 1039.1,1072.1 1022.3,1074.7C1025.4,1091.2 1055,1112.5 1071.6,1110.2Z" fill="url(#b119)"/><path d="M1038.9,1343.9C1029.7,1334.4 1002.3,1334.8 993.4,1344.6C1002.6,1354.6 1030,1354.2 1038.9,1343.9Z" fill="url(#b120)"/><path d="M1091,1270C1079,1281.2 1079,1315 1091,1326.2C1103,1314.9 1103,1281.2 1091,1270Z" fill="url(#b121)"/><path d="M1102,1166.9C1097.9,1183.7 1116.2,1217.7 1132.5,1223.6C1137,1206.6 1118.7,1172.5 1102,1166.9Z" fill="url(#b122)"/><path d="M944.1,1343.9C954.4,1335.5 950.2,1319.1 937.2,1316.6C927,1324.9 931.1,1341.3 944.1,1343.9Z" fill="url(#b123)"/><path d="M1102,1166.9C1106.5,1149.9 1088.2,1115.9 1071.6,1110.2C1067.5,1127 1085.8,1161 1102,1166.9Z" fill="url(#b124)"/><path d="M918.3,1119.4C933,1120.6 959.2,1100.6 961.9,1086.1C947,1084.7 920.8,1104.7 918.3,1119.4Z" fill="url(#b125)"/><path d="M1038.9,1343.9C1050.6,1342 1056.9,1325.5 1049.5,1316.3C1037.8,1318.2 1031.5,1334.7 1038.9,1343.9Z" fill="url(#b126)"/><path d="M1091,1270C1108.2,1268.7 1133.1,1240.8 1132.5,1223.6C1115.4,1224.9 1090.5,1252.8 1091,1270Z" fill="url(#b127)"/><path d="M1091,1326.2C1085.5,1312.6 1060.5,1306.7 1049.5,1316.3C1055,1330 1079.9,1335.9 1091,1326.2Z" fill="url(#b128)"/><path d="M901.6,1275.3C889.2,1280.2 881.1,1304.5 888,1315.8C900.4,1311 908.5,1286.7 901.6,1275.3Z" fill="url(#b129)"/><path d="M894.8,1161.1C899.4,1147.8 885.2,1130.1 871.2,1131.8C866.6,1145.1 880.7,1162.8 894.8,1161.1Z" fill="url(#b130)"/><path d="M1011.2,1121.6C1025.1,1114.9 1031.7,1086.8 1022.3,1074.7C1008.4,1081.3 1001.8,1109.4 1011.2,1121.6Z" fill="url(#b131)"/><path d="M901.6,1275.3C896.3,1262.5 869.9,1252.8 857.5,1259.2C862.8,1271.9 889.3,1281.7 901.6,1275.3Z" fill="url(#b132)"/><path d="M864.4,1195.5C879.3,1196.4 897.6,1175.9 894.8,1161.1C879.7,1160.1 861.5,1180.6 864.4,1195.5Z" fill="#909090"/><path d="M937.2,1316.6C927.6,1304.4 898,1304 888,1315.8C897.7,1328 927.2,1328.4 937.2,1316.6Z" fill="url(#b133)"/><path d="M864.4,1195.5C859.7,1208.8 873.9,1226.5 887.9,1224.8C892.6,1211.5 878.4,1193.8 864.4,1195.5Z" fill="url(#b134)"/><path d="M887.9,1224.8C872.9,1223.8 854.7,1244.3 857.5,1259.2C872.6,1260.2 890.8,1239.6 887.9,1224.8Z" fill="#909090"/><path d="M1011.2,1121.6C1008.4,1104.7 978.8,1083.5 961.9,1086.1C964.8,1102.9 994.4,1124.2 1011.2,1121.6Z" fill="url(#b135)"/><path d="M918.3,1119.4C904.7,1122.8 890.6,1147.8 894.8,1161.1C908.3,1157.8 922.4,1132.7 918.3,1119.4Z" fill="url(#b136)"/><path d="M1011.2,1121.6C1025.5,1131 1061.7,1124.2 1071.6,1110.2C1057.3,1100.7 1021.1,1107.5 1011.2,1121.6Z" fill="url(#b137)"/><path d="M1132.5,1223.6C1127,1209.9 1102,1204 1091,1213.7C1096.5,1227.3 1121.4,1233.2 1132.5,1223.6Z" fill="url(#b138)"/><path d="M1091,1270C1073.8,1271.3 1048.9,1299.2 1049.5,1316.3C1066.7,1315 1091.6,1287.2 1091,1270Z" fill="url(#b139)"/><path d="M1102,1166.9C1088.2,1173.5 1081.5,1201.6 1091,1213.7C1104.8,1207.1 1111.5,1179 1102,1166.9Z" fill="url(#b140)"/><path d="M1049.5,1316.3C1032.9,1311.3 999.2,1328.3 993.4,1344.6C1010,1349.6 1043.6,1332.7 1049.5,1316.3Z" fill="url(#b141)"/><path d="M993.4,1344.6C987.5,1328.3 953.8,1311.5 937.2,1316.6C943.1,1332.9 976.8,1349.7 993.4,1344.6Z" fill="url(#b142)"/><path d="M1102,1166.9C1096.5,1153.3 1071.6,1147.3 1060.5,1157C1066,1170.6 1091,1176.6 1102,1166.9Z" fill="url(#b143)"/><path d="M918.3,1119.4C920.9,1131.6 940.5,1139.6 950.9,1132.9C948.2,1120.8 928.7,1112.7 918.3,1119.4Z" fill="url(#b144)"/><path d="M901.6,1275.3C901,1290.2 922.4,1315 937.2,1316.6C937.8,1301.7 916.4,1276.9 901.6,1275.3Z" fill="url(#b145)"/><path d="M950.9,1132.9C964.7,1126.3 971.4,1098.2 961.9,1086.1C948.1,1092.7 941.4,1120.8 950.9,1132.9Z" fill="url(#b146)"/><path d="M1091,1270C1103,1258.7 1102.9,1225 1091,1213.7C1079,1225 1079,1258.7 1091,1270Z" fill="url(#b147)"/><path d="M1060.5,1157C1074.4,1150.4 1081,1122.3 1071.6,1110.2C1057.7,1116.8 1051,1144.9 1060.5,1157Z" fill="url(#b148)"/><path d="M901.6,1275.3C908.7,1262.6 900.5,1232.3 887.9,1224.8C880.8,1237.6 889,1267.9 901.6,1275.3Z" fill="url(#b149)"/><path d="M993.3,1288.3C981.4,1299.6 981.4,1333.3 993.4,1344.6C1005.3,1333.3 1005.3,1299.6 993.3,1288.3Z" fill="url(#b150)"/><path d="M894.8,1161.1C881.5,1172.6 877.4,1210.8 887.9,1224.8C901.2,1213.4 905.3,1175.2 894.8,1161.1Z" fill="url(#b151)"/><path d="M1091,1270C1085.4,1256.3 1060.5,1250.4 1049.4,1260.1C1055,1273.7 1079.9,1279.6 1091,1270Z" fill="url(#b152)"/><path d="M1011.2,1121.6C996.9,1112.1 960.7,1118.9 950.9,1132.9C965.2,1142.4 1001.4,1135.6 1011.2,1121.6Z" fill="url(#b153)"/><path d="M1011.2,1121.6C1014.1,1138.4 1043.6,1159.6 1060.5,1157C1057.6,1140.2 1028.1,1118.9 1011.2,1121.6Z" fill="url(#b154)"/><path d="M993.3,1288.3C999.2,1304.6 1032.9,1321.4 1049.5,1316.3C1043.6,1300 1009.9,1283.2 993.3,1288.3Z" fill="url(#b155)"/><path d="M993.3,1288.3C976.7,1283.3 943.1,1300.2 937.2,1316.6C953.8,1321.6 987.5,1304.7 993.3,1288.3Z" fill="url(#b156)"/><path d="M950.9,1132.9C934.3,1127.9 900.6,1144.8 894.8,1161.1C911.4,1166.2 945,1149.2 950.9,1132.9Z" fill="url(#b157)"/><path d="M901.6,1275.3C912.7,1281.7 934,1272.7 937.2,1260.3C926.1,1253.9 904.8,1262.9 901.6,1275.3Z" fill="url(#b158)"/><path d="M944,1196.6C941.2,1179.8 911.6,1158.5 894.8,1161.1C897.6,1177.9 927.2,1199.2 944,1196.6Z" fill="url(#b159)"/><path d="M1049.4,1260.1C1037.5,1271.4 1037.5,1305.1 1049.5,1316.3C1061.4,1305.1 1061.4,1271.3 1049.4,1260.1Z" fill="url(#b160)"/><path d="M937.2,1260.3C925.2,1271.6 925.3,1305.3 937.2,1316.6C949.2,1305.3 949.2,1271.6 937.2,1260.3Z" fill="url(#b161)"/><path d="M1091,1213.7C1095.4,1196.7 1077.1,1162.7 1060.5,1157C1056,1174 1074.3,1208 1091,1213.7Z" fill="url(#b162)"/><path d="M944,1196.6C927.4,1191.6 893.8,1208.5 887.9,1224.8C904.5,1229.9 938.2,1212.9 944,1196.6Z" fill="url(#b163)"/><path d="M1011.2,1121.6C997.3,1128.2 990.7,1156.3 1000.1,1168.4C1014,1161.8 1020.7,1133.7 1011.2,1121.6Z" fill="url(#b164)"/><path d="M937.2,1260.3C934.4,1243.5 904.8,1222.2 887.9,1224.8C890.8,1241.6 920.4,1262.9 937.2,1260.3Z" fill="url(#b165)"/><path d="M1038.9,1206.3C1047.8,1217.8 1079.1,1222.3 1091,1213.7C1082,1202.1 1050.7,1197.7 1038.9,1206.3Z" fill="url(#b166)"/><path d="M944,1196.6C957.3,1185.1 961.4,1146.9 950.9,1132.9C937.6,1144.4 933.5,1182.6 944,1196.6Z" fill="url(#b167)"/><path d="M1091,1213.7C1073.7,1215 1048.8,1242.8 1049.4,1260.1C1066.7,1258.8 1091.6,1231 1091,1213.7Z" fill="url(#b168)"/><path d="M993.3,1288.3C1009.9,1293.4 1043.6,1276.4 1049.4,1260.1C1032.8,1255 999.2,1272 993.3,1288.3Z" fill="url(#b169)"/><path d="M993.3,1288.3C987.5,1272 953.8,1255.2 937.2,1260.3C943.1,1276.6 976.8,1293.4 993.3,1288.3Z" fill="url(#b170)"/><path d="M1038.9,1206.3C1052.5,1200.5 1065.5,1171 1060.5,1157C1046.8,1162.8 1033.9,1192.3 1038.9,1206.3Z" fill="url(#b171)"/><path d="M944,1196.6C930.8,1208.1 926.7,1246.3 937.2,1260.3C950.5,1248.8 954.6,1210.6 944,1196.6Z" fill="url(#b172)"/><path d="M1000.1,1168.4C997.3,1151.6 967.7,1130.3 950.9,1132.9C953.7,1149.7 983.3,1171 1000.1,1168.4Z" fill="url(#b173)"/><path d="M1060.5,1157C1046.2,1147.5 1010,1154.3 1000.1,1168.4C1014.4,1177.9 1050.6,1171.1 1060.5,1157Z" fill="url(#b174)"/><path d="M1038.9,1206.3C1031,1219 1037.3,1251.3 1049.4,1260.1C1057.3,1247.4 1051,1215.1 1038.9,1206.3Z" fill="url(#b175)"/><path d="M993.3,1288.3C1005.3,1277.1 1005.3,1243.3 993.3,1232.1C981.3,1243.3 981.4,1277.1 993.3,1288.3Z" fill="url(#b176)"/><path d="M944,1196.6C960.6,1201.7 994.3,1184.7 1000.1,1168.4C983.5,1163.3 949.9,1180.3 944,1196.6Z" fill="url(#b177)"/><path d="M1038.9,1206.3C1038.2,1191.4 1015,1168.7 1000.1,1168.4C1000.8,1183.2 1024,1206 1038.9,1206.3Z" fill="url(#b178)"/><path d="M944,1196.6C946.9,1213.4 976.5,1234.7 993.3,1232.1C990.5,1215.3 960.9,1194 944,1196.6Z" fill="url(#b179)"/><path d="M1038.9,1206.3C1024.7,1202.6 997.4,1218.1 993.3,1232.1C1007.4,1235.8 1034.8,1220.3 1038.9,1206.3Z" fill="url(#b180)"/><path d="M1049.4,1260.1C1043.6,1243.8 1009.9,1227 993.3,1232.1C999.2,1248.4 1032.9,1265.2 1049.4,1260.1Z" fill="url(#b181)"/><path d="M993.3,1232.1C976.7,1227 943.1,1244 937.2,1260.3C953.8,1265.4 987.5,1248.4 993.3,1232.1Z" fill="url(#b182)"/><path d="M1000.1,1168.4C986.9,1179.8 982.8,1218.1 993.3,1232.1C1006.6,1220.6 1010.7,1182.4 1000.1,1168.4Z" fill="url(#b183)"/><defs><linearGradient id="cs0"><stop offset="0" stop-color="#d0d0d0"/><stop offset="0.2" stop-color="#d0d0d0"/><stop offset="0.5" stop-color="#a8a8a8"/><stop offset="0.8" stop-color="#888888"/><stop offset="1" stop-color="#888888"/></linearGradient><linearGradient id="c0" href="#cs0" gradientUnits="userSpaceOnUse" x1="1338.7" y1="1233.3" x2="1321.5" y2="1231.4"/><linearGradient id="cs1"><stop offset="0" stop-color="#888888"/><stop offset="0.2" stop-color="#888888"/><stop offset="0.5" stop-color="#888888"/><stop offset="0.8" stop-color="#909090"/><stop offset="1" stop-color="#b0b0b0"/></linearGradient><linearGradient id="c1" href="#cs1" gradientUnits="userSpaceOnUse" x1="1365.4" y1="1194.1" x2="1357.7" y2="1178.7"/><linearGradient id="cs2"><stop offset="0" stop-color="#888888"/><stop offset="0.2" stop-color="#888888"/><stop offset="0.5" stop-color="#a0a0a0"/><stop offset="0.8" stop-color="#d0d0d0"/><stop offset="1" stop-color="#d0d0d0"/></linearGradient><linearGradient id="c2" href="#cs2" gradientUnits="userSpaceOnUse" x1="1301.6" y1="1194.2" x2="1309.3" y2="1178.8"/><linearGradient id="cs3"><stop offset="0" stop-color="#b8b8b8"/><stop offset="0.2" stop-color="#d0d0d0"/><stop offset="0.5" stop-color="#c8c8c8"/><stop offset="0.8" stop-color="#a0a0a0"/><stop offset="1" stop-color="#888888"/></linearGradient><linearGradient id="c3" href="#cs3" gradientUnits="userSpaceOnUse" x1="1307.1" y1="1207" x2="1314.3" y2="1219.8"/><linearGradient id="cs4"><stop offset="0" stop-color="#888888"/><stop offset="0.2" stop-color="#888888"/><stop offset="0.5" stop-color="#909090"/><stop offset="0.8" stop-color="#d0d0d0"/><stop offset="1" stop-color="#d0d0d0"/></linearGradient><linearGradient id="c4" href="#cs4" gradientUnits="userSpaceOnUse" x1="1353.1" y1="1225.3" x2="1363.2" y2="1211.2"/><linearGradient id="cs5"><stop offset="0" stop-color="#d0d0d0"/><stop offset="0.2" stop-color="#d0d0d0"/><stop offset="0.5" stop-color="#989898"/><stop offset="0.8" stop-color="#888888"/><stop offset="1" stop-color="#888888"/></linearGradient><linearGradient id="c5" href="#cs5" gradientUnits="userSpaceOnUse" x1="1312.4" y1="1240" x2="1302.2" y2="1250.5"/><linearGradient id="c6" href="#cs1" gradientUnits="userSpaceOnUse" x1="1358.6" y1="1257.8" x2="1350.8" y2="1242.4"/><linearGradient id="cs6"><stop offset="0" stop-color="#d0d0d0"/><stop offset="0.2" stop-color="#989898"/><stop offset="0.5" stop-color="#888888"/><stop offset="0.8" stop-color="#888888"/><stop offset="1" stop-color="#888888"/></linearGradient><linearGradient id="c7" href="#cs6" gradientUnits="userSpaceOnUse" x1="1342.1" y1="1172.4" x2="1324.8" y2="1172.4"/><linearGradient id="cs7"><stop offset="0" stop-color="#888888"/><stop offset="0.2" stop-color="#888888"/><stop offset="0.5" stop-color="#989898"/><stop offset="0.8" stop-color="#d0d0d0"/><stop offset="1" stop-color="#d0d0d0"/></linearGradient><linearGradient id="c8" href="#cs7" gradientUnits="userSpaceOnUse" x1="1275.4" y1="1200.8" x2="1289.9" y2="1198"/><linearGradient id="cs8"><stop offset="0" stop-color="#888888"/><stop offset="0.2" stop-color="#909090"/><stop offset="0.5" stop-color="#c0c0c0"/><stop offset="0.8" stop-color="#d0d0d0"/><stop offset="1" stop-color="#d0d0d0"/></linearGradient><linearGradient id="c9" href="#cs8" gradientUnits="userSpaceOnUse" x1="1298.1" y1="1278.4" x2="1294.9" y2="1261.4"/><linearGradient id="c10" href="#cs4" gradientUnits="userSpaceOnUse" x1="1346.3" y1="1289" x2="1356.3" y2="1274.9"/><linearGradient id="cs9"><stop offset="0" stop-color="#888888"/><stop offset="0.2" stop-color="#888888"/><stop offset="0.5" stop-color="#a8a8a8"/><stop offset="0.8" stop-color="#d0d0d0"/><stop offset="1" stop-color="#d0d0d0"/></linearGradient><linearGradient id="c11" href="#cs9" gradientUnits="userSpaceOnUse" x1="1377.6" y1="1203.2" x2="1394.8" y2="1205.1"/><linearGradient id="cs10"><stop offset="0" stop-color="#b8b8b8"/><stop offset="0.2" stop-color="#c0c0c0"/><stop offset="0.5" stop-color="#b8b8b8"/><stop offset="0.8" stop-color="#989898"/><stop offset="1" stop-color="#888888"/></linearGradient><linearGradient id="c12" href="#cs10" gradientUnits="userSpaceOnUse" x1="1283.9" y1="1253.9" x2="1270.4" y2="1248"/><linearGradient id="cs11"><stop offset="0" stop-color="#d0d0d0"/><stop offset="0.2" stop-color="#d0d0d0"/><stop offset="0.5" stop-color="#a0a0a0"/><stop offset="0.8" stop-color="#888888"/><stop offset="1" stop-color="#888888"/></linearGradient><linearGradient id="c13" href="#cs11" gradientUnits="userSpaceOnUse" x1="1365.4" y1="1150.6" x2="1357.7" y2="1166"/><linearGradient id="c14" href="#cs1" gradientUnits="userSpaceOnUse" x1="1309.3" y1="1166.1" x2="1301.5" y2="1150.7"/><linearGradient id="cs12"><stop offset="0" stop-color="#989898"/><stop offset="0.2" stop-color="#b8b8b8"/><stop offset="0.5" stop-color="#c8c8c8"/><stop offset="0.8" stop-color="#b0b0b0"/><stop offset="1" stop-color="#909090"/></linearGradient><linearGradient id="c15" href="#cs12" gradientUnits="userSpaceOnUse" x1="1263" y1="1201.5" x2="1250.2" y2="1189.9"/><linearGradient id="c16" href="#cs0" gradientUnits="userSpaceOnUse" x1="1387.9" y1="1268.8" x2="1370.8" y2="1266.9"/><linearGradient id="cs13"><stop offset="0" stop-color="#888888"/><stop offset="0.2" stop-color="#888888"/><stop offset="0.5" stop-color="#b0b0b0"/><stop offset="0.8" stop-color="#d0d0d0"/><stop offset="1" stop-color="#d0d0d0"/></linearGradient><linearGradient id="c17" href="#cs13" gradientUnits="userSpaceOnUse" x1="1260.9" y1="1229.9" x2="1262.9" y2="1215.3"/><linearGradient id="c18" href="#cs4" gradientUnits="userSpaceOnUse" x1="1409.2" y1="1197" x2="1419.3" y2="1183"/><linearGradient id="cs14"><stop offset="0" stop-color="#888888"/><stop offset="0.2" stop-color="#b0b0b0"/><stop offset="0.5" stop-color="#d0d0d0"/><stop offset="0.8" stop-color="#d0d0d0"/><stop offset="1" stop-color="#d0d0d0"/></linearGradient><linearGradient id="c19" href="#cs14" gradientUnits="userSpaceOnUse" x1="1312.7" y1="1285.6" x2="1329.5" y2="1289.6"/><linearGradient id="cs15"><stop offset="0" stop-color="#b0b0b0"/><stop offset="0.2" stop-color="#909090"/><stop offset="0.5" stop-color="#888888"/><stop offset="0.8" stop-color="#888888"/><stop offset="1" stop-color="#888888"/></linearGradient><linearGradient id="c20" href="#cs15" gradientUnits="userSpaceOnUse" x1="1406.9" y1="1214.2" x2="1414.7" y2="1229.6"/><linearGradient id="c21" href="#cs7" gradientUnits="userSpaceOnUse" x1="1243.5" y1="1251.3" x2="1258.7" y2="1243.1"/><linearGradient id="c22" href="#cs6" gradientUnits="userSpaceOnUse" x1="1398.2" y1="1144.2" x2="1380.9" y2="1144.2"/><linearGradient id="c23" href="#cs6" gradientUnits="userSpaceOnUse" x1="1286" y1="1144.4" x2="1268.7" y2="1144.4"/><linearGradient id="cs16"><stop offset="0" stop-color="#d0d0d0"/><stop offset="0.2" stop-color="#d0d0d0"/><stop offset="0.5" stop-color="#909090"/><stop offset="0.8" stop-color="#888888"/><stop offset="1" stop-color="#888888"/></linearGradient><linearGradient id="c24" href="#cs16" gradientUnits="userSpaceOnUse" x1="1412.4" y1="1246.7" x2="1402.3" y2="1260.7"/><linearGradient id="cs17"><stop offset="0" stop-color="#888888"/><stop offset="0.2" stop-color="#888888"/><stop offset="0.5" stop-color="#888888"/><stop offset="0.8" stop-color="#888888"/><stop offset="1" stop-color="#a8a8a8"/></linearGradient><linearGradient id="c25" href="#cs17" gradientUnits="userSpaceOnUse" x1="1410.3" y1="1171.5" x2="1404.5" y2="1158"/><linearGradient id="c26" href="#cs1" gradientUnits="userSpaceOnUse" x1="1407.9" y1="1293.3" x2="1400.1" y2="1277.9"/><linearGradient id="c27" href="#cs15" gradientUnits="userSpaceOnUse" x1="1357.6" y1="1122.4" x2="1365.4" y2="1137.9"/><linearGradient id="c28" href="#cs2" gradientUnits="userSpaceOnUse" x1="1301.5" y1="1138" x2="1309.3" y2="1122.5"/><linearGradient id="c29" href="#cs4" gradientUnits="userSpaceOnUse" x1="1285.9" y1="1300.3" x2="1296" y2="1286.3"/><linearGradient id="cs18"><stop offset="0" stop-color="#d0d0d0"/><stop offset="0.2" stop-color="#d0d0d0"/><stop offset="0.5" stop-color="#c0c0c0"/><stop offset="0.8" stop-color="#909090"/><stop offset="1" stop-color="#888888"/></linearGradient><linearGradient id="c30" href="#cs18" gradientUnits="userSpaceOnUse" x1="1344.2" y1="1296.9" x2="1347.4" y2="1313.9"/><linearGradient id="cs19"><stop offset="0" stop-color="#d0d0d0"/><stop offset="0.2" stop-color="#d0d0d0"/><stop offset="0.5" stop-color="#c0c0c0"/><stop offset="0.8" stop-color="#888888"/><stop offset="1" stop-color="#888888"/></linearGradient><linearGradient id="c31" href="#cs19" gradientUnits="userSpaceOnUse" x1="1258.6" y1="1159.2" x2="1254.6" y2="1176"/><linearGradient id="c32" href="#cs0" gradientUnits="userSpaceOnUse" x1="1444" y1="1240.5" x2="1426.9" y2="1238.7"/><linearGradient id="cs20"><stop offset="0" stop-color="#888888"/><stop offset="0.2" stop-color="#888888"/><stop offset="0.5" stop-color="#888888"/><stop offset="0.8" stop-color="#989898"/><stop offset="1" stop-color="#d0d0d0"/></linearGradient><linearGradient id="c33" href="#cs20" gradientUnits="userSpaceOnUse" x1="1324.8" y1="1116.2" x2="1342.1" y2="1116.1"/><linearGradient id="cs21"><stop offset="0" stop-color="#d0d0d0"/><stop offset="0.2" stop-color="#b8b8b8"/><stop offset="0.5" stop-color="#888888"/><stop offset="0.8" stop-color="#888888"/><stop offset="1" stop-color="#888888"/></linearGradient><linearGradient id="c34" href="#cs21" gradientUnits="userSpaceOnUse" x1="1439.1" y1="1180.6" x2="1424.9" y2="1184.4"/><linearGradient id="c35" href="#cs14" gradientUnits="userSpaceOnUse" x1="1252.4" y1="1297" x2="1269.2" y2="1301"/><linearGradient id="c36" href="#cs6" gradientUnits="userSpaceOnUse" x1="1244.5" y1="1190.8" x2="1227.2" y2="1190.8"/><linearGradient id="c37" href="#cs14" gradientUnits="userSpaceOnUse" x1="1362" y1="1321.1" x2="1378.8" y2="1325.1"/><linearGradient id="c38" href="#cs7" gradientUnits="userSpaceOnUse" x1="1401.8" y1="1141.5" x2="1412.9" y2="1131.8"/><linearGradient id="cs22"><stop offset="0" stop-color="#888888"/><stop offset="0.2" stop-color="#888888"/><stop offset="0.5" stop-color="#888888"/><stop offset="0.8" stop-color="#b0b0b0"/><stop offset="1" stop-color="#d0d0d0"/></linearGradient><linearGradient id="c39" href="#cs22" gradientUnits="userSpaceOnUse" x1="1389.4" y1="1313.2" x2="1395" y2="1299.6"/><linearGradient id="c40" href="#cs19" gradientUnits="userSpaceOnUse" x1="1247.5" y1="1262.2" x2="1243.5" y2="1279"/><linearGradient id="c41" href="#cs2" gradientUnits="userSpaceOnUse" x1="1357.6" y1="1109.8" x2="1365.3" y2="1094.3"/><linearGradient id="c42" href="#cs1" gradientUnits="userSpaceOnUse" x1="1309.3" y1="1109.9" x2="1301.5" y2="1094.4"/><linearGradient id="c43" href="#cs14" gradientUnits="userSpaceOnUse" x1="1221.9" y1="1240.3" x2="1238.7" y2="1244.3"/><linearGradient id="cs23"><stop offset="0" stop-color="#909090"/><stop offset="0.2" stop-color="#b0b0b0"/><stop offset="0.5" stop-color="#c8c8c8"/><stop offset="0.8" stop-color="#b8b8b8"/><stop offset="1" stop-color="#989898"/></linearGradient><linearGradient id="c44" href="#cs23" gradientUnits="userSpaceOnUse" x1="1250.1" y1="1133.7" x2="1263" y2="1145.2"/><linearGradient id="cs24"><stop offset="0" stop-color="#888888"/><stop offset="0.2" stop-color="#888888"/><stop offset="0.5" stop-color="#c0c0c0"/><stop offset="0.8" stop-color="#d0d0d0"/><stop offset="1" stop-color="#d0d0d0"/></linearGradient><linearGradient id="c45" href="#cs24" gradientUnits="userSpaceOnUse" x1="1213.1" y1="1222.4" x2="1217.1" y2="1205.6"/><linearGradient id="c46" href="#cs8" gradientUnits="userSpaceOnUse" x1="1287" y1="1325.2" x2="1283.8" y2="1308.2"/><linearGradient id="cs25"><stop offset="0" stop-color="#888888"/><stop offset="0.2" stop-color="#b8b8b8"/><stop offset="0.5" stop-color="#d0d0d0"/><stop offset="0.8" stop-color="#d0d0d0"/><stop offset="1" stop-color="#b0b0b0"/></linearGradient><linearGradient id="c47" href="#cs25" gradientUnits="userSpaceOnUse" x1="1413.9" y1="1288.7" x2="1426.7" y2="1295.9"/><linearGradient id="c48" href="#cs16" gradientUnits="userSpaceOnUse" x1="1345.3" y1="1321.8" x2="1335.2" y2="1335.8"/><linearGradient id="c49" href="#cs2" gradientUnits="userSpaceOnUse" x1="1443.9" y1="1227.9" x2="1457.4" y2="1217.1"/><linearGradient id="cs26"><stop offset="0" stop-color="#888888"/><stop offset="0.2" stop-color="#888888"/><stop offset="0.5" stop-color="#888888"/><stop offset="0.8" stop-color="#909090"/><stop offset="1" stop-color="#d0d0d0"/></linearGradient><linearGradient id="c50" href="#cs26" gradientUnits="userSpaceOnUse" x1="1414.1" y1="1125" x2="1414.3" y2="1107.8"/><linearGradient id="c51" href="#cs21" gradientUnits="userSpaceOnUse" x1="1449.8" y1="1158.5" x2="1444.7" y2="1172.2"/><linearGradient id="cs27"><stop offset="0" stop-color="#d0d0d0"/><stop offset="0.2" stop-color="#d0d0d0"/><stop offset="0.5" stop-color="#d0d0d0"/><stop offset="0.8" stop-color="#b0b0b0"/><stop offset="1" stop-color="#888888"/></linearGradient><linearGradient id="c52" href="#cs27" gradientUnits="userSpaceOnUse" x1="1318.4" y1="1336.5" x2="1301.6" y2="1332.5"/><linearGradient id="c53" href="#cs2" gradientUnits="userSpaceOnUse" x1="1437.1" y1="1291.6" x2="1450.6" y2="1280.8"/><linearGradient id="c54" href="#cs17" gradientUnits="userSpaceOnUse" x1="1425" y1="1134.7" x2="1439" y2="1139.3"/><linearGradient id="c55" href="#cs24" gradientUnits="userSpaceOnUse" x1="1254.6" y1="1119.7" x2="1258.6" y2="1102.9"/><linearGradient id="c56" href="#cs12" gradientUnits="userSpaceOnUse" x1="1221.5" y1="1191.6" x2="1208.6" y2="1180.1"/><linearGradient id="cs28"><stop offset="0" stop-color="#a0a0a0"/><stop offset="0.2" stop-color="#888888"/><stop offset="0.5" stop-color="#888888"/><stop offset="0.8" stop-color="#888888"/><stop offset="1" stop-color="#888888"/></linearGradient><linearGradient id="c57" href="#cs28" gradientUnits="userSpaceOnUse" x1="1289.5" y1="1105.1" x2="1275.7" y2="1099.9"/><linearGradient id="cs29"><stop offset="0" stop-color="#888888"/><stop offset="0.2" stop-color="#909090"/><stop offset="0.5" stop-color="#989898"/><stop offset="0.8" stop-color="#a0a0a0"/><stop offset="1" stop-color="#a0a0a0"/></linearGradient><linearGradient id="c58" href="#cs29" gradientUnits="userSpaceOnUse" x1="1391.1" y1="1335.7" x2="1382.2" y2="1324"/><linearGradient id="c59" href="#cs5" gradientUnits="userSpaceOnUse" x1="1247.6" y1="1290" x2="1232.4" y2="1298.1"/><linearGradient id="cs30"><stop offset="0" stop-color="#d0d0d0"/><stop offset="0.2" stop-color="#909090"/><stop offset="0.5" stop-color="#888888"/><stop offset="0.8" stop-color="#888888"/><stop offset="1" stop-color="#888888"/></linearGradient><linearGradient id="c60" href="#cs30" gradientUnits="userSpaceOnUse" x1="1394.5" y1="1100.3" x2="1377.7" y2="1104.5"/><linearGradient id="c61" href="#cs7" gradientUnits="userSpaceOnUse" x1="1201.9" y1="1241.5" x2="1217.1" y2="1233.3"/><linearGradient id="c62" href="#cs20" gradientUnits="userSpaceOnUse" x1="1227.2" y1="1134.5" x2="1244.4" y2="1134.5"/><linearGradient id="cs31"><stop offset="0" stop-color="#d0d0d0"/><stop offset="0.2" stop-color="#d0d0d0"/><stop offset="0.5" stop-color="#d0d0d0"/><stop offset="0.8" stop-color="#909090"/><stop offset="1" stop-color="#888888"/></linearGradient><linearGradient id="c63" href="#cs31" gradientUnits="userSpaceOnUse" x1="1310.5" y1="1081" x2="1310.8" y2="1095.7"/><linearGradient id="c64" href="#cs4" gradientUnits="userSpaceOnUse" x1="1274.8" y1="1347.1" x2="1284.9" y2="1333.1"/><linearGradient id="c65" href="#cs8" gradientUnits="userSpaceOnUse" x1="1336.3" y1="1360.7" x2="1333.1" y2="1343.7"/><linearGradient id="cs32"><stop offset="0" stop-color="#c0c0c0"/><stop offset="0.2" stop-color="#909090"/><stop offset="0.5" stop-color="#888888"/><stop offset="0.8" stop-color="#888888"/><stop offset="1" stop-color="#888888"/></linearGradient><linearGradient id="c66" href="#cs32" gradientUnits="userSpaceOnUse" x1="1430.2" y1="1299.9" x2="1433.9" y2="1314.1"/><linearGradient id="c67" href="#cs26" gradientUnits="userSpaceOnUse" x1="1357.9" y1="1097" x2="1358.2" y2="1079.8"/><linearGradient id="c68" href="#cs7" gradientUnits="userSpaceOnUse" x1="1446.4" y1="1149.2" x2="1461.6" y2="1141"/><linearGradient id="c69" href="#cs9" gradientUnits="userSpaceOnUse" x1="1457.3" y1="1204.4" x2="1474.4" y2="1206.2"/><linearGradient id="c70" href="#cs24" gradientUnits="userSpaceOnUse" x1="1213" y1="1166.1" x2="1217" y2="1149.3"/><linearGradient id="c71" href="#cs30" gradientUnits="userSpaceOnUse" x1="1338.4" y1="1072.3" x2="1321.6" y2="1076.5"/><linearGradient id="c72" href="#cs31" gradientUnits="userSpaceOnUse" x1="1418.5" y1="1329" x2="1404.1" y2="1331.4"/><linearGradient id="c73" href="#cs0" gradientUnits="userSpaceOnUse" x1="1467.6" y1="1269.9" x2="1450.4" y2="1268.1"/><linearGradient id="c74" href="#cs26" gradientUnits="userSpaceOnUse" x1="1389.3" y1="1355.5" x2="1389.6" y2="1338.2"/><linearGradient id="c75" href="#cs24" gradientUnits="userSpaceOnUse" x1="1232.5" y1="1325.9" x2="1236.5" y2="1309.1"/><linearGradient id="cs33"><stop offset="0" stop-color="#888888"/><stop offset="0.2" stop-color="#888888"/><stop offset="0.5" stop-color="#a0a0a0"/><stop offset="0.8" stop-color="#b8b8b8"/><stop offset="1" stop-color="#c0c0c0"/></linearGradient><linearGradient id="c76" href="#cs33" gradientUnits="userSpaceOnUse" x1="1264.2" y1="1104.5" x2="1259.5" y2="1090.6"/><linearGradient id="c77" href="#cs27" gradientUnits="userSpaceOnUse" x1="1227.6" y1="1291.1" x2="1210.8" y2="1287.1"/><linearGradient id="c78" href="#cs11" gradientUnits="userSpaceOnUse" x1="1414.6" y1="1095" x2="1406.9" y2="1110.5"/><linearGradient id="c79" href="#cs6" gradientUnits="userSpaceOnUse" x1="1202.9" y1="1180.9" x2="1185.6" y2="1180.9"/><linearGradient id="cs34"><stop offset="0" stop-color="#888888"/><stop offset="0.2" stop-color="#909090"/><stop offset="0.5" stop-color="#c8c8c8"/><stop offset="0.8" stop-color="#d0d0d0"/><stop offset="1" stop-color="#d0d0d0"/></linearGradient><linearGradient id="c80" href="#cs34" gradientUnits="userSpaceOnUse" x1="1251" y1="1333.8" x2="1265.1" y2="1329.6"/><linearGradient id="c81" href="#cs24" gradientUnits="userSpaceOnUse" x1="1202" y1="1269.2" x2="1206" y2="1252.4"/><linearGradient id="c82" href="#cs14" gradientUnits="userSpaceOnUse" x1="1180.4" y1="1230.5" x2="1197.2" y2="1234.4"/><linearGradient id="c83" href="#cs12" gradientUnits="userSpaceOnUse" x1="1221.5" y1="1135.4" x2="1208.6" y2="1123.8"/><linearGradient id="cs35"><stop offset="0" stop-color="#a8a8a8"/><stop offset="0.2" stop-color="#d0d0d0"/><stop offset="0.5" stop-color="#d0d0d0"/><stop offset="0.8" stop-color="#d0d0d0"/><stop offset="1" stop-color="#a8a8a8"/></linearGradient><linearGradient id="c84" href="#cs35" gradientUnits="userSpaceOnUse" x1="1352.9" y1="1346.7" x2="1365.7" y2="1358.4"/><linearGradient id="c85" href="#cs12" gradientUnits="userSpaceOnUse" x1="1441.3" y1="1329.8" x2="1428.4" y2="1318.3"/><linearGradient id="cs36"><stop offset="0" stop-color="#989898"/><stop offset="0.2" stop-color="#888888"/><stop offset="0.5" stop-color="#888888"/><stop offset="0.8" stop-color="#888888"/><stop offset="1" stop-color="#888888"/></linearGradient><linearGradient id="c86" href="#cs36" gradientUnits="userSpaceOnUse" x1="1302.9" y1="1068.8" x2="1311.5" y2="1080.7"/><linearGradient id="cs37"><stop offset="0" stop-color="#d0d0d0"/><stop offset="0.2" stop-color="#d0d0d0"/><stop offset="0.5" stop-color="#b0b0b0"/><stop offset="0.8" stop-color="#888888"/><stop offset="1" stop-color="#888888"/></linearGradient><linearGradient id="c87" href="#cs37" gradientUnits="userSpaceOnUse" x1="1285.3" y1="1342.6" x2="1280" y2="1356.3"/><linearGradient id="c88" href="#cs2" gradientUnits="userSpaceOnUse" x1="1474.3" y1="1193.5" x2="1487.8" y2="1182.7"/><linearGradient id="cs38"><stop offset="0" stop-color="#d0d0d0"/><stop offset="0.2" stop-color="#c8c8c8"/><stop offset="0.5" stop-color="#909090"/><stop offset="0.8" stop-color="#888888"/><stop offset="1" stop-color="#888888"/></linearGradient><linearGradient id="c89" href="#cs38" gradientUnits="userSpaceOnUse" x1="1195" y1="1200" x2="1185.5" y2="1211.2"/><linearGradient id="c90" href="#cs2" gradientUnits="userSpaceOnUse" x1="1350.8" y1="1082.5" x2="1358.5" y2="1067"/><linearGradient id="c91" href="#cs30" gradientUnits="userSpaceOnUse" x1="1474.2" y1="1157.7" x2="1457.5" y2="1161.9"/><linearGradient id="c92" href="#cs26" gradientUnits="userSpaceOnUse" x1="1329" y1="1366.9" x2="1329.3" y2="1349.6"/><linearGradient id="c93" href="#cs11" gradientUnits="userSpaceOnUse" x1="1481" y1="1246.4" x2="1467.5" y2="1257.2"/><linearGradient id="c94" href="#cs2" gradientUnits="userSpaceOnUse" x1="1443.9" y1="1136.9" x2="1457.3" y2="1126.1"/><linearGradient id="c95" href="#cs7" gradientUnits="userSpaceOnUse" x1="1272.6" y1="1086.2" x2="1281.5" y2="1074.6"/><linearGradient id="c96" href="#cs30" gradientUnits="userSpaceOnUse" x1="1443.7" y1="1101" x2="1427" y2="1105.2"/><linearGradient id="c97" href="#cs7" gradientUnits="userSpaceOnUse" x1="1233.5" y1="1333" x2="1241" y2="1320.5"/><linearGradient id="c98" href="#cs35" gradientUnits="userSpaceOnUse" x1="1292.6" y1="1358.1" x2="1305.3" y2="1369.8"/><linearGradient id="c99" href="#cs30" gradientUnits="userSpaceOnUse" x1="1407.4" y1="1080.5" x2="1407.2" y2="1097.7"/><linearGradient id="c100" href="#cs18" gradientUnits="userSpaceOnUse" x1="1382.3" y1="1344.4" x2="1385.5" y2="1361.4"/><linearGradient id="cs39"><stop offset="0" stop-color="#888888"/><stop offset="0.2" stop-color="#989898"/><stop offset="0.5" stop-color="#d0d0d0"/><stop offset="0.8" stop-color="#d0d0d0"/><stop offset="1" stop-color="#d0d0d0"/></linearGradient><linearGradient id="c101" href="#cs39" gradientUnits="userSpaceOnUse" x1="1183" y1="1176.3" x2="1197.5" y2="1178.7"/><linearGradient id="c102" href="#cs35" gradientUnits="userSpaceOnUse" x1="1223.9" y1="1106.6" x2="1236.6" y2="1118.3"/><linearGradient id="c103" href="#cs35" gradientUnits="userSpaceOnUse" x1="1443.7" y1="1301" x2="1456.4" y2="1312.7"/><linearGradient id="cs40"><stop offset="0" stop-color="#d0d0d0"/><stop offset="0.2" stop-color="#b0b0b0"/><stop offset="0.5" stop-color="#888888"/><stop offset="0.8" stop-color="#888888"/><stop offset="1" stop-color="#888888"/></linearGradient><linearGradient id="c104" href="#cs40" gradientUnits="userSpaceOnUse" x1="1192.1" y1="1229.5" x2="1177.4" y2="1228.6"/><linearGradient id="c105" href="#cs26" gradientUnits="userSpaceOnUse" x1="1370.9" y1="1077.2" x2="1387.6" y2="1073"/><linearGradient id="c106" href="#cs5" gradientUnits="userSpaceOnUse" x1="1282" y1="1350" x2="1272.2" y2="1360.9"/><linearGradient id="c107" href="#cs5" gradientUnits="userSpaceOnUse" x1="1485.2" y1="1170.4" x2="1470" y2="1178.6"/><linearGradient id="c108" href="#cs7" gradientUnits="userSpaceOnUse" x1="1439.6" y1="1121.9" x2="1454.8" y2="1113.7"/><linearGradient id="c109" href="#cs8" gradientUnits="userSpaceOnUse" x1="1325.2" y1="1372.8" x2="1322" y2="1355.8"/><linearGradient id="c110" href="#cs35" gradientUnits="userSpaceOnUse" x1="1182.4" y1="1153" x2="1195.1" y2="1164.7"/><linearGradient id="c111" href="#cs35" gradientUnits="userSpaceOnUse" x1="1402.2" y1="1347.4" x2="1414.9" y2="1359.1"/><linearGradient id="cs41"><stop offset="0" stop-color="#888888"/><stop offset="0.2" stop-color="#a8a8a8"/><stop offset="0.5" stop-color="#d0d0d0"/><stop offset="0.8" stop-color="#d0d0d0"/><stop offset="1" stop-color="#d0d0d0"/></linearGradient><linearGradient id="c112" href="#cs41" gradientUnits="userSpaceOnUse" x1="1249.4" y1="1348.8" x2="1248.7" y2="1334.1"/><linearGradient id="c113" href="#cs23" gradientUnits="userSpaceOnUse" x1="1239" y1="1089.5" x2="1251.9" y2="1101"/><linearGradient id="c114" href="#cs23" gradientUnits="userSpaceOnUse" x1="1458.8" y1="1284" x2="1471.7" y2="1295.5"/><linearGradient id="c115" href="#cs30" gradientUnits="userSpaceOnUse" x1="1378.5" y1="1350.3" x2="1378.3" y2="1367.6"/><linearGradient id="cs42"><stop offset="0" stop-color="#888888"/><stop offset="0.2" stop-color="#888888"/><stop offset="0.5" stop-color="#888888"/><stop offset="0.8" stop-color="#888888"/><stop offset="1" stop-color="#d0d0d0"/></linearGradient><linearGradient id="c116" href="#cs42" gradientUnits="userSpaceOnUse" x1="1177.4" y1="1184.2" x2="1192" y2="1182.9"/><linearGradient id="cs43"><stop offset="0" stop-color="#c8c8c8"/><stop offset="0.2" stop-color="#d0d0d0"/><stop offset="0.5" stop-color="#d0d0d0"/><stop offset="0.8" stop-color="#c8c8c8"/><stop offset="1" stop-color="#888888"/></linearGradient><linearGradient id="c117" href="#cs43" gradientUnits="userSpaceOnUse" x1="1188.2" y1="1218" x2="1174.4" y2="1212.8"/><linearGradient id="c118" href="#cs35" gradientUnits="userSpaceOnUse" x1="1354.6" y1="1370.5" x2="1341.8" y2="1358.8"/><linearGradient id="c119" href="#cs11" gradientUnits="userSpaceOnUse" x1="1480.9" y1="1155.4" x2="1467.5" y2="1166.2"/><linearGradient id="c120" href="#cs12" gradientUnits="userSpaceOnUse" x1="1210.4" y1="1147.4" x2="1197.5" y2="1135.9"/><linearGradient id="c121" href="#cs12" gradientUnits="userSpaceOnUse" x1="1430.2" y1="1341.9" x2="1417.3" y2="1330.4"/><linearGradient id="c122" href="#cs26" gradientUnits="userSpaceOnUse" x1="1450.6" y1="1134.6" x2="1467.3" y2="1130.4"/><linearGradient id="c123" href="#cs35" gradientUnits="userSpaceOnUse" x1="1225.5" y1="1130.4" x2="1212.8" y2="1118.7"/><linearGradient id="c124" href="#cs35" gradientUnits="userSpaceOnUse" x1="1445.3" y1="1324.8" x2="1432.6" y2="1313.1"/><linearGradient id="cs44"><stop offset="0" stop-color="#909090"/><stop offset="0.2" stop-color="#909090"/><stop offset="0.5" stop-color="#a0a0a0"/><stop offset="0.8" stop-color="#f0f0f0"/><stop offset="1" stop-color="#ffffff"/></linearGradient><linearGradient id="c125" href="#cs44" gradientUnits="userSpaceOnUse" x1="1190.8" y1="1288.3" x2="1206.1" y2="1280.1"/><linearGradient id="cs45"><stop offset="0" stop-color="#909090"/><stop offset="0.2" stop-color="#989898"/><stop offset="0.5" stop-color="#c8c8c8"/><stop offset="0.8" stop-color="#ffffff"/><stop offset="1" stop-color="#e0e0e0"/></linearGradient><linearGradient id="c126" href="#cs45" gradientUnits="userSpaceOnUse" x1="1298" y1="1074.9" x2="1294.8" y2="1057.9"/><linearGradient id="cs46"><stop offset="0" stop-color="#e0e0e0"/><stop offset="0.2" stop-color="#d8d8d8"/><stop offset="0.5" stop-color="#b0b0b0"/><stop offset="0.8" stop-color="#909090"/><stop offset="1" stop-color="#909090"/></linearGradient><linearGradient id="c127" href="#cs46" gradientUnits="userSpaceOnUse" x1="1498" y1="1235.6" x2="1480.9" y2="1233.8"/><linearGradient id="cs47"><stop offset="0" stop-color="#909090"/><stop offset="0.2" stop-color="#909090"/><stop offset="0.5" stop-color="#909090"/><stop offset="0.8" stop-color="#989898"/><stop offset="1" stop-color="#e0e0e0"/></linearGradient><linearGradient id="c128" href="#cs47" gradientUnits="userSpaceOnUse" x1="1351" y1="1069.7" x2="1351.3" y2="1052.5"/><linearGradient id="cs48"><stop offset="0" stop-color="#909090"/><stop offset="0.2" stop-color="#909090"/><stop offset="0.5" stop-color="#a8a8a8"/><stop offset="0.8" stop-color="#e0e0e0"/><stop offset="1" stop-color="#ffffff"/></linearGradient><linearGradient id="c129" href="#cs48" gradientUnits="userSpaceOnUse" x1="1218.7" y1="1332.6" x2="1232.2" y2="1321.8"/><linearGradient id="cs49"><stop offset="0" stop-color="#e8e8e8"/><stop offset="0.2" stop-color="#989898"/><stop offset="0.5" stop-color="#909090"/><stop offset="0.8" stop-color="#909090"/><stop offset="1" stop-color="#909090"/></linearGradient><linearGradient id="c130" href="#cs49" gradientUnits="userSpaceOnUse" x1="1218.6" y1="1296.8" x2="1201.9" y2="1301"/><linearGradient id="c131" href="#cs48" gradientUnits="userSpaceOnUse" x1="1188.3" y1="1276" x2="1201.7" y2="1265.2"/><linearGradient id="c132" href="#cs49" gradientUnits="userSpaceOnUse" x1="1188.2" y1="1240.1" x2="1171.4" y2="1244.3"/><linearGradient id="cs50"><stop offset="0" stop-color="#b0b0b0"/><stop offset="0.2" stop-color="#f8f8f8"/><stop offset="0.5" stop-color="#ffffff"/><stop offset="0.8" stop-color="#f8f8f8"/><stop offset="1" stop-color="#b0b0b0"/></linearGradient><linearGradient id="c133" href="#cs50" gradientUnits="userSpaceOnUse" x1="1314.6" y1="1060.9" x2="1327.4" y2="1072.6"/><linearGradient id="cs51"><stop offset="0" stop-color="#909090"/><stop offset="0.2" stop-color="#909090"/><stop offset="0.5" stop-color="#a8a8a8"/><stop offset="0.8" stop-color="#ffffff"/><stop offset="1" stop-color="#ffffff"/></linearGradient><linearGradient id="c134" href="#cs51" gradientUnits="userSpaceOnUse" x1="1400" y1="1083.2" x2="1407.7" y2="1067.7"/><linearGradient id="cs52"><stop offset="0" stop-color="#909090"/><stop offset="0.2" stop-color="#d0d0d0"/><stop offset="0.5" stop-color="#ffffff"/><stop offset="0.8" stop-color="#ffffff"/><stop offset="1" stop-color="#d8d8d8"/></linearGradient><linearGradient id="c135" href="#cs52" gradientUnits="userSpaceOnUse" x1="1481" y1="1213.4" x2="1494.8" y2="1218.6"/><linearGradient id="c136" href="#cs51" gradientUnits="userSpaceOnUse" x1="1261.5" y1="1363.7" x2="1269.2" y2="1348.2"/><linearGradient id="cs53"><stop offset="0" stop-color="#d8d8d8"/><stop offset="0.2" stop-color="#909090"/><stop offset="0.5" stop-color="#909090"/><stop offset="0.8" stop-color="#909090"/><stop offset="1" stop-color="#909090"/></linearGradient><linearGradient id="c137" href="#cs53" gradientUnits="userSpaceOnUse" x1="1491.8" y1="1247.2" x2="1477.2" y2="1248.5"/><linearGradient id="c138" href="#cs47" gradientUnits="userSpaceOnUse" x1="1290.7" y1="1081.1" x2="1290.9" y2="1063.8"/><linearGradient id="c139" href="#cs49" gradientUnits="userSpaceOnUse" x1="1497.8" y1="1187.1" x2="1481" y2="1191.3"/><linearGradient id="cs54"><stop offset="0" stop-color="#f8f8f8"/><stop offset="0.2" stop-color="#ffffff"/><stop offset="0.5" stop-color="#e8e8e8"/><stop offset="0.8" stop-color="#b0b0b0"/><stop offset="1" stop-color="#909090"/></linearGradient><linearGradient id="c140" href="#cs54" gradientUnits="userSpaceOnUse" x1="1419.8" y1="1082.6" x2="1420.5" y2="1097.3"/><linearGradient id="c141" href="#cs50" gradientUnits="userSpaceOnUse" x1="1254.3" y1="1072.3" x2="1267" y2="1084"/><linearGradient id="c142" href="#cs48" gradientUnits="userSpaceOnUse" x1="1437" y1="1109.6" x2="1450.5" y2="1098.8"/><linearGradient id="c143" href="#cs50" gradientUnits="userSpaceOnUse" x1="1474.1" y1="1266.7" x2="1486.8" y2="1278.4"/><linearGradient id="cs55"><stop offset="0" stop-color="#e0e0e0"/><stop offset="0.2" stop-color="#ffffff"/><stop offset="0.5" stop-color="#c8c8c8"/><stop offset="0.8" stop-color="#989898"/><stop offset="1" stop-color="#909090"/></linearGradient><linearGradient id="c144" href="#cs55" gradientUnits="userSpaceOnUse" x1="1344" y1="1058.6" x2="1347.2" y2="1075.6"/><linearGradient id="cs56"><stop offset="0" stop-color="#ffffff"/><stop offset="0.2" stop-color="#f0f0f0"/><stop offset="0.5" stop-color="#a0a0a0"/><stop offset="0.8" stop-color="#909090"/><stop offset="1" stop-color="#909090"/></linearGradient><linearGradient id="c145" href="#cs56" gradientUnits="userSpaceOnUse" x1="1229.6" y1="1309.5" x2="1214.4" y2="1317.7"/><linearGradient id="c146" href="#cs47" gradientUnits="userSpaceOnUse" x1="1317.9" y1="1378.9" x2="1318.2" y2="1361.7"/><linearGradient id="c147" href="#cs46" gradientUnits="userSpaceOnUse" x1="1188.3" y1="1197.6" x2="1171.2" y2="1195.8"/><linearGradient id="c148" href="#cs44" gradientUnits="userSpaceOnUse" x1="1184" y1="1261" x2="1199.2" y2="1252.8"/><linearGradient id="cs57"><stop offset="0" stop-color="#909090"/><stop offset="0.2" stop-color="#909090"/><stop offset="0.5" stop-color="#989898"/><stop offset="0.8" stop-color="#e0e0e0"/><stop offset="1" stop-color="#ffffff"/></linearGradient><linearGradient id="c149" href="#cs57" gradientUnits="userSpaceOnUse" x1="1387.2" y1="1081.4" x2="1397" y2="1070.5"/><linearGradient id="c150" href="#cs49" gradientUnits="userSpaceOnUse" x1="1298.3" y1="1354.2" x2="1281.6" y2="1358.4"/><linearGradient id="c151" href="#cs45" gradientUnits="userSpaceOnUse" x1="1374.4" y1="1373.5" x2="1371.2" y2="1356.5"/><linearGradient id="cs58"><stop offset="0" stop-color="#909090"/><stop offset="0.2" stop-color="#909090"/><stop offset="0.5" stop-color="#909090"/><stop offset="0.8" stop-color="#b8b8b8"/><stop offset="1" stop-color="#d8d8d8"/></linearGradient><linearGradient id="c152" href="#cs58" gradientUnits="userSpaceOnUse" x1="1477.1" y1="1201.9" x2="1491.8" y2="1202.8"/><linearGradient id="cs59"><stop offset="0" stop-color="#e0e0e0"/><stop offset="0.2" stop-color="#ffffff"/><stop offset="0.5" stop-color="#d8d8d8"/><stop offset="0.8" stop-color="#a0a0a0"/><stop offset="1" stop-color="#909090"/></linearGradient><linearGradient id="c153" href="#cs59" gradientUnits="userSpaceOnUse" x1="1486.2" y1="1255.1" x2="1471.7" y2="1252.7"/><linearGradient id="c154" href="#cs45" gradientUnits="userSpaceOnUse" x1="1286.9" y1="1087" x2="1283.7" y2="1070"/><linearGradient id="c155" href="#cs47" gradientUnits="userSpaceOnUse" x1="1261.8" y1="1350.9" x2="1262" y2="1333.7"/><linearGradient id="c156" href="#cs50" gradientUnits="userSpaceOnUse" x1="1363.9" y1="1061.6" x2="1376.6" y2="1073.3"/><linearGradient id="c157" href="#cs44" gradientUnits="userSpaceOnUse" x1="1463.1" y1="1151.3" x2="1478.4" y2="1143.1"/><linearGradient id="cs60"><stop offset="0" stop-color="#ffffff"/><stop offset="0.2" stop-color="#ffffff"/><stop offset="0.5" stop-color="#a0a0a0"/><stop offset="0.8" stop-color="#909090"/><stop offset="1" stop-color="#909090"/></linearGradient><linearGradient id="c158" href="#cs60" gradientUnits="userSpaceOnUse" x1="1435.7" y1="1098.4" x2="1428.2" y2="1110.9"/><linearGradient id="c159" href="#cs49" gradientUnits="userSpaceOnUse" x1="1242.2" y1="1326.2" x2="1225.5" y2="1330.4"/><linearGradient id="cs61"><stop offset="0" stop-color="#ffffff"/><stop offset="0.2" stop-color="#d8d8d8"/><stop offset="0.5" stop-color="#a0a0a0"/><stop offset="0.8" stop-color="#909090"/><stop offset="1" stop-color="#909090"/></linearGradient><linearGradient id="c160" href="#cs61" gradientUnits="userSpaceOnUse" x1="1396.6" y1="1345.2" x2="1387.7" y2="1356.8"/><linearGradient id="cs62"><stop offset="0" stop-color="#ffffff"/><stop offset="0.2" stop-color="#e0e0e0"/><stop offset="0.5" stop-color="#a8a8a8"/><stop offset="0.8" stop-color="#909090"/><stop offset="1" stop-color="#909090"/></linearGradient><linearGradient id="c161" href="#cs62" gradientUnits="userSpaceOnUse" x1="1225.3" y1="1294.5" x2="1211.9" y2="1305.3"/><linearGradient id="c162" href="#cs48" gradientUnits="userSpaceOnUse" x1="1188.2" y1="1185" x2="1201.7" y2="1174.2"/><linearGradient id="cs63"><stop offset="0" stop-color="#e0e0e0"/><stop offset="0.2" stop-color="#989898"/><stop offset="0.5" stop-color="#909090"/><stop offset="0.8" stop-color="#909090"/><stop offset="1" stop-color="#909090"/></linearGradient><linearGradient id="c163" href="#cs63" gradientUnits="userSpaceOnUse" x1="1340.2" y1="1064.5" x2="1339.9" y2="1081.8"/><linearGradient id="cs64"><stop offset="0" stop-color="#909090"/><stop offset="0.2" stop-color="#909090"/><stop offset="0.5" stop-color="#909090"/><stop offset="0.8" stop-color="#989898"/><stop offset="1" stop-color="#e8e8e8"/></linearGradient><linearGradient id="c164" href="#cs64" gradientUnits="userSpaceOnUse" x1="1195" y1="1273.7" x2="1211.7" y2="1269.5"/><linearGradient id="cs65"><stop offset="0" stop-color="#ffffff"/><stop offset="0.2" stop-color="#ffffff"/><stop offset="0.5" stop-color="#a8a8a8"/><stop offset="0.8" stop-color="#909090"/><stop offset="1" stop-color="#909090"/></linearGradient><linearGradient id="c165" href="#cs65" gradientUnits="userSpaceOnUse" x1="1318.4" y1="1348.9" x2="1310.7" y2="1364.4"/><linearGradient id="cs66"><stop offset="0" stop-color="#909090"/><stop offset="0.2" stop-color="#909090"/><stop offset="0.5" stop-color="#989898"/><stop offset="0.8" stop-color="#d0d0d0"/><stop offset="1" stop-color="#ffffff"/></linearGradient><linearGradient id="c166" href="#cs66" gradientUnits="userSpaceOnUse" x1="1474.2" y1="1231.4" x2="1483.7" y2="1220.2"/><linearGradient id="c167" href="#cs48" gradientUnits="userSpaceOnUse" x1="1181.4" y1="1248.7" x2="1194.9" y2="1237.9"/><linearGradient id="cs67"><stop offset="0" stop-color="#909090"/><stop offset="0.2" stop-color="#909090"/><stop offset="0.5" stop-color="#b8b8b8"/><stop offset="0.8" stop-color="#ffffff"/><stop offset="1" stop-color="#ffffff"/></linearGradient><linearGradient id="c168" href="#cs67" gradientUnits="userSpaceOnUse" x1="1383.9" y1="1088.8" x2="1389.2" y2="1075.1"/><linearGradient id="cs68"><stop offset="0" stop-color="#909090"/><stop offset="0.2" stop-color="#909090"/><stop offset="0.5" stop-color="#909090"/><stop offset="0.8" stop-color="#909090"/><stop offset="1" stop-color="#a0a0a0"/></linearGradient><linearGradient id="c169" href="#cs68" gradientUnits="userSpaceOnUse" x1="1366.3" y1="1362.6" x2="1357.7" y2="1350.7"/><linearGradient id="cs69"><stop offset="0" stop-color="#a0a0a0"/><stop offset="0.2" stop-color="#c0c0c0"/><stop offset="0.5" stop-color="#d0d0d0"/><stop offset="0.8" stop-color="#b8b8b8"/><stop offset="1" stop-color="#989898"/></linearGradient><linearGradient id="c170" href="#cs69" gradientUnits="userSpaceOnUse" x1="1240.8" y1="1113.1" x2="1227.9" y2="1101.6"/><linearGradient id="c171" href="#cs50" gradientUnits="userSpaceOnUse" x1="1316.3" y1="1084.7" x2="1303.5" y2="1073"/><linearGradient id="c172" href="#cs69" gradientUnits="userSpaceOnUse" x1="1460.6" y1="1307.6" x2="1447.7" y2="1296"/><linearGradient id="cs70"><stop offset="0" stop-color="#909090"/><stop offset="0.2" stop-color="#b8b8b8"/><stop offset="0.5" stop-color="#ffffff"/><stop offset="0.8" stop-color="#ffffff"/><stop offset="1" stop-color="#e0e0e0"/></linearGradient><linearGradient id="c173" href="#cs70" gradientUnits="userSpaceOnUse" x1="1472" y1="1197" x2="1488.8" y2="1200.9"/><linearGradient id="cs71"><stop offset="0" stop-color="#ffffff"/><stop offset="0.2" stop-color="#ffffff"/><stop offset="0.5" stop-color="#c8c8c8"/><stop offset="0.8" stop-color="#909090"/><stop offset="1" stop-color="#909090"/></linearGradient><linearGradient id="c174" href="#cs71" gradientUnits="userSpaceOnUse" x1="1467.2" y1="1162.2" x2="1463.2" y2="1179"/><linearGradient id="cs72"><stop offset="0" stop-color="#ffffff"/><stop offset="0.2" stop-color="#ffffff"/><stop offset="0.5" stop-color="#d0d0d0"/><stop offset="0.8" stop-color="#909090"/><stop offset="1" stop-color="#909090"/></linearGradient><linearGradient id="c175" href="#cs72" gradientUnits="userSpaceOnUse" x1="1418.2" y1="1097.6" x2="1404.1" y2="1101.8"/><linearGradient id="cs73"><stop offset="0" stop-color="#d8d8d8"/><stop offset="0.2" stop-color="#a0a0a0"/><stop offset="0.5" stop-color="#909090"/><stop offset="0.8" stop-color="#909090"/><stop offset="1" stop-color="#909090"/></linearGradient><linearGradient id="c176" href="#cs73" gradientUnits="userSpaceOnUse" x1="1483.6" y1="1250.5" x2="1466.3" y2="1250.5"/><linearGradient id="c177" href="#cs51" gradientUnits="userSpaceOnUse" x1="1254.6" y1="1336.4" x2="1262.3" y2="1320.9"/><linearGradient id="c178" href="#cs70" gradientUnits="userSpaceOnUse" x1="1441.6" y1="1140.3" x2="1458.4" y2="1144.3"/><linearGradient id="cs74"><stop offset="0" stop-color="#d0d0d0"/><stop offset="0.2" stop-color="#c8c8c8"/><stop offset="0.5" stop-color="#a8a8a8"/><stop offset="0.8" stop-color="#909090"/><stop offset="1" stop-color="#909090"/></linearGradient><linearGradient id="c179" href="#cs74" gradientUnits="userSpaceOnUse" x1="1405" y1="1326.9" x2="1409.7" y2="1340.8"/><linearGradient id="cs75"><stop offset="0" stop-color="#909090"/><stop offset="0.2" stop-color="#909090"/><stop offset="0.5" stop-color="#c8c8c8"/><stop offset="0.8" stop-color="#ffffff"/><stop offset="1" stop-color="#ffffff"/></linearGradient><linearGradient id="c180" href="#cs75" gradientUnits="userSpaceOnUse" x1="1432.7" y1="1122.3" x2="1436.7" y2="1105.5"/><linearGradient id="c181" href="#cs47" gradientUnits="userSpaceOnUse" x1="1279.6" y1="1093.2" x2="1279.9" y2="1075.9"/><linearGradient id="cs76"><stop offset="0" stop-color="#909090"/><stop offset="0.2" stop-color="#909090"/><stop offset="0.5" stop-color="#b0b0b0"/><stop offset="0.8" stop-color="#d8d8d8"/><stop offset="1" stop-color="#e0e0e0"/></linearGradient><linearGradient id="c182" href="#cs76" gradientUnits="userSpaceOnUse" x1="1201.6" y1="1161.5" x2="1218.8" y2="1163.3"/><linearGradient id="cs77"><stop offset="0" stop-color="#909090"/><stop offset="0.2" stop-color="#989898"/><stop offset="0.5" stop-color="#d8d8d8"/><stop offset="0.8" stop-color="#ffffff"/><stop offset="1" stop-color="#ffffff"/></linearGradient><linearGradient id="c183" href="#cs77" gradientUnits="userSpaceOnUse" x1="1250.7" y1="1102.4" x2="1265.1" y2="1100"/><linearGradient id="c184" href="#cs49" gradientUnits="userSpaceOnUse" x1="1347.6" y1="1354.9" x2="1330.8" y2="1359.1"/><linearGradient id="c185" href="#cs71" gradientUnits="userSpaceOnUse" x1="1456.2" y1="1265.3" x2="1452.2" y2="1282.1"/><linearGradient id="c186" href="#cs46" gradientUnits="userSpaceOnUse" x1="1211.9" y1="1227" x2="1194.8" y2="1225.2"/><linearGradient id="c187" href="#cs44" gradientUnits="userSpaceOnUse" x1="1207.6" y1="1290.4" x2="1222.8" y2="1282.2"/><linearGradient id="c188" href="#cs63" gradientUnits="userSpaceOnUse" x1="1311.3" y1="1334.4" x2="1311" y2="1351.6"/><linearGradient id="cs78"><stop offset="0" stop-color="#909090"/><stop offset="0.2" stop-color="#909090"/><stop offset="0.5" stop-color="#909090"/><stop offset="0.8" stop-color="#909090"/><stop offset="1" stop-color="#c8c8c8"/></linearGradient><linearGradient id="c189" href="#cs78" gradientUnits="userSpaceOnUse" x1="1239" y1="1131.5" x2="1235.3" y2="1117.3"/><linearGradient id="c190" href="#cs45" gradientUnits="userSpaceOnUse" x1="1336.1" y1="1087.7" x2="1332.9" y2="1070.7"/><linearGradient id="cs79"><stop offset="0" stop-color="#909090"/><stop offset="0.2" stop-color="#909090"/><stop offset="0.5" stop-color="#989898"/><stop offset="0.8" stop-color="#e8e8e8"/><stop offset="1" stop-color="#ffffff"/></linearGradient><linearGradient id="c191" href="#cs79" gradientUnits="userSpaceOnUse" x1="1384.3" y1="1098.3" x2="1394.4" y2="1084.3"/><linearGradient id="cs80"><stop offset="0" stop-color="#909090"/><stop offset="0.2" stop-color="#989898"/><stop offset="0.5" stop-color="#d8d8d8"/><stop offset="0.8" stop-color="#ffffff"/><stop offset="1" stop-color="#f0f0f0"/></linearGradient><linearGradient id="c192" href="#cs80" gradientUnits="userSpaceOnUse" x1="1358.7" y1="1350.4" x2="1358.4" y2="1335.7"/><linearGradient id="c193" href="#cs73" gradientUnits="userSpaceOnUse" x1="1442" y1="1296.9" x2="1424.8" y2="1296.9"/><linearGradient id="c194" href="#cs56" gradientUnits="userSpaceOnUse" x1="1467.3" y1="1189.9" x2="1452.1" y2="1198.1"/><linearGradient id="c195" href="#cs64" gradientUnits="userSpaceOnUse" x1="1274.7" y1="1331.1" x2="1291.5" y2="1326.9"/><linearGradient id="c196" href="#cs44" gradientUnits="userSpaceOnUse" x1="1421.6" y1="1141.4" x2="1436.8" y2="1133.3"/><linearGradient id="cs81"><stop offset="0" stop-color="#a8a8a8"/><stop offset="0.2" stop-color="#a8a8a8"/><stop offset="0.5" stop-color="#a8a8a8"/><stop offset="0.8" stop-color="#989898"/><stop offset="1" stop-color="#909090"/></linearGradient><linearGradient id="c197" href="#cs81" gradientUnits="userSpaceOnUse" x1="1278.1" y1="1095.7" x2="1287" y2="1107.4"/><linearGradient id="cs82"><stop offset="0" stop-color="#909090"/><stop offset="0.2" stop-color="#909090"/><stop offset="0.5" stop-color="#909090"/><stop offset="0.8" stop-color="#909090"/><stop offset="1" stop-color="#a8a8a8"/></linearGradient><linearGradient id="c198" href="#cs82" gradientUnits="userSpaceOnUse" x1="1379.7" y1="1326.3" x2="1393.5" y2="1331.5"/><linearGradient id="cs83"><stop offset="0" stop-color="#989898"/><stop offset="0.2" stop-color="#b8b8b8"/><stop offset="0.5" stop-color="#d0d0d0"/><stop offset="0.8" stop-color="#c0c0c0"/><stop offset="1" stop-color="#a0a0a0"/></linearGradient><linearGradient id="c199" href="#cs83" gradientUnits="userSpaceOnUse" x1="1447.7" y1="1239.8" x2="1460.6" y2="1251.3"/><linearGradient id="c200" href="#cs75" gradientUnits="userSpaceOnUse" x1="1410.6" y1="1328.5" x2="1414.6" y2="1311.7"/><linearGradient id="cs84"><stop offset="0" stop-color="#b0b0b0"/><stop offset="0.2" stop-color="#909090"/><stop offset="0.5" stop-color="#909090"/><stop offset="0.8" stop-color="#909090"/><stop offset="1" stop-color="#909090"/></linearGradient><linearGradient id="c201" href="#cs84" gradientUnits="userSpaceOnUse" x1="1244.2" y1="1296.7" x2="1230.2" y2="1292.1"/><linearGradient id="c202" href="#cs48" gradientUnits="userSpaceOnUse" x1="1218.6" y1="1150.6" x2="1232.1" y2="1139.8"/><linearGradient id="c203" href="#cs70" gradientUnits="userSpaceOnUse" x1="1350.8" y1="1094.9" x2="1367.6" y2="1098.9"/><linearGradient id="cs85"><stop offset="0" stop-color="#909090"/><stop offset="0.2" stop-color="#909090"/><stop offset="0.5" stop-color="#909090"/><stop offset="0.8" stop-color="#c0c0c0"/><stop offset="1" stop-color="#f8f8f8"/></linearGradient><linearGradient id="c204" href="#cs85" gradientUnits="userSpaceOnUse" x1="1219.4" y1="1272.9" x2="1224.5" y2="1259.2"/><linearGradient id="c205" href="#cs47" gradientUnits="userSpaceOnUse" x1="1254.9" y1="1323.6" x2="1255.1" y2="1306.4"/><linearGradient id="c206" href="#cs62" gradientUnits="userSpaceOnUse" x1="1225.3" y1="1203.5" x2="1211.8" y2="1214.3"/><linearGradient id="c207" href="#cs79" gradientUnits="userSpaceOnUse" x1="1323.9" y1="1109.6" x2="1334" y2="1095.6"/><linearGradient id="cs86"><stop offset="0" stop-color="#c0c0c0"/><stop offset="0.2" stop-color="#f0f0f0"/><stop offset="0.5" stop-color="#ffffff"/><stop offset="0.8" stop-color="#c0c0c0"/><stop offset="1" stop-color="#909090"/></linearGradient><linearGradient id="c208" href="#cs86" gradientUnits="userSpaceOnUse" x1="1255.3" y1="1142.7" x2="1242.5" y2="1135.5"/><linearGradient id="c209" href="#cs55" gradientUnits="userSpaceOnUse" x1="1382.2" y1="1106.2" x2="1385.4" y2="1123.2"/><linearGradient id="c210" href="#cs75" gradientUnits="userSpaceOnUse" x1="1452.1" y1="1225.8" x2="1456.1" y2="1209"/><linearGradient id="c211" href="#cs69" gradientUnits="userSpaceOnUse" x1="1419.1" y1="1297.7" x2="1406.2" y2="1286.2"/><linearGradient id="cs87"><stop offset="0" stop-color="#e0e0e0"/><stop offset="0.2" stop-color="#ffffff"/><stop offset="0.5" stop-color="#ffffff"/><stop offset="0.8" stop-color="#b8b8b8"/><stop offset="1" stop-color="#909090"/></linearGradient><linearGradient id="c212" href="#cs87" gradientUnits="userSpaceOnUse" x1="1447.3" y1="1191.1" x2="1430.5" y2="1187.1"/><linearGradient id="cs88"><stop offset="0" stop-color="#909090"/><stop offset="0.2" stop-color="#909090"/><stop offset="0.5" stop-color="#909090"/><stop offset="0.8" stop-color="#989898"/><stop offset="1" stop-color="#b8b8b8"/></linearGradient><linearGradient id="c213" href="#cs88" gradientUnits="userSpaceOnUse" x1="1367.7" y1="1337" x2="1359.9" y2="1321.5"/><linearGradient id="c214" href="#cs51" gradientUnits="userSpaceOnUse" x1="1303.9" y1="1337.1" x2="1311.6" y2="1321.6"/><linearGradient id="c215" href="#cs75" gradientUnits="userSpaceOnUse" x1="1421.7" y1="1169.2" x2="1425.7" y2="1152.4"/><linearGradient id="cs89"><stop offset="0" stop-color="#f8f8f8"/><stop offset="0.2" stop-color="#b8b8b8"/><stop offset="0.5" stop-color="#909090"/><stop offset="0.8" stop-color="#909090"/><stop offset="1" stop-color="#909090"/></linearGradient><linearGradient id="c216" href="#cs89" gradientUnits="userSpaceOnUse" x1="1279.8" y1="1118.2" x2="1274.2" y2="1131.8"/><linearGradient id="c217" href="#cs65" gradientUnits="userSpaceOnUse" x1="1267.4" y1="1289.9" x2="1256.3" y2="1299.6"/><linearGradient id="c218" href="#cs70" gradientUnits="userSpaceOnUse" x1="1290.4" y1="1106.3" x2="1307.2" y2="1110.3"/><linearGradient id="cs90"><stop offset="0" stop-color="#909090"/><stop offset="0.2" stop-color="#909090"/><stop offset="0.5" stop-color="#909090"/><stop offset="0.8" stop-color="#a0a0a0"/><stop offset="1" stop-color="#d8d8d8"/></linearGradient><linearGradient id="c219" href="#cs90" gradientUnits="userSpaceOnUse" x1="1424.7" y1="1240.6" x2="1442" y2="1240.6"/><linearGradient id="c220" href="#cs70" gradientUnits="userSpaceOnUse" x1="1400" y1="1130.4" x2="1416.8" y2="1134.4"/><linearGradient id="cs91"><stop offset="0" stop-color="#909090"/><stop offset="0.2" stop-color="#909090"/><stop offset="0.5" stop-color="#909090"/><stop offset="0.8" stop-color="#c8c8c8"/><stop offset="1" stop-color="#f0f0f0"/></linearGradient><linearGradient id="c221" href="#cs91" gradientUnits="userSpaceOnUse" x1="1230.1" y1="1250.8" x2="1244.3" y2="1247"/><linearGradient id="c222" href="#cs73" gradientUnits="userSpaceOnUse" x1="1344.4" y1="1315.2" x2="1327.1" y2="1315.3"/><linearGradient id="c223" href="#cs46" gradientUnits="userSpaceOnUse" x1="1242.3" y1="1192.7" x2="1225.2" y2="1190.9"/><linearGradient id="c224" href="#cs75" gradientUnits="userSpaceOnUse" x1="1410.6" y1="1272.2" x2="1414.6" y2="1255.4"/><linearGradient id="c225" href="#cs45" gradientUnits="userSpaceOnUse" x1="1325" y1="1134.5" x2="1321.8" y2="1117.5"/><linearGradient id="cs92"><stop offset="0" stop-color="#ffffff"/><stop offset="0.2" stop-color="#e8e8e8"/><stop offset="0.5" stop-color="#989898"/><stop offset="0.8" stop-color="#909090"/><stop offset="1" stop-color="#909090"/></linearGradient><linearGradient id="c226" href="#cs92" gradientUnits="userSpaceOnUse" x1="1383.3" y1="1131.1" x2="1373.2" y2="1145.1"/><linearGradient id="c227" href="#cs65" gradientUnits="userSpaceOnUse" x1="1367.7" y1="1293.4" x2="1359.9" y2="1308.9"/><linearGradient id="c228" href="#cs88" gradientUnits="userSpaceOnUse" x1="1311.6" y1="1309" x2="1303.8" y2="1293.5"/><linearGradient id="c229" href="#cs88" gradientUnits="userSpaceOnUse" x1="1269.1" y1="1153.5" x2="1261.3" y2="1138.1"/><linearGradient id="c230" href="#cs84" gradientUnits="userSpaceOnUse" x1="1258.9" y1="1259.9" x2="1264.7" y2="1273.4"/><linearGradient id="c231" href="#cs79" gradientUnits="userSpaceOnUse" x1="1256.8" y1="1184.7" x2="1266.9" y2="1170.7"/><linearGradient id="c232" href="#cs73" gradientUnits="userSpaceOnUse" x1="1400.5" y1="1287" x2="1383.2" y2="1287"/><linearGradient id="c233" href="#cs73" gradientUnits="userSpaceOnUse" x1="1288.3" y1="1287.2" x2="1271" y2="1287.2"/><linearGradient id="c234" href="#cs44" gradientUnits="userSpaceOnUse" x1="1410.5" y1="1188.3" x2="1425.7" y2="1180.1"/><linearGradient id="c235" href="#cs88" gradientUnits="userSpaceOnUse" x1="1262.3" y1="1217.2" x2="1254.5" y2="1201.8"/><linearGradient id="c236" href="#cs87" gradientUnits="userSpaceOnUse" x1="1356.5" y1="1145.8" x2="1339.7" y2="1141.8"/><linearGradient id="c237" href="#cs79" gradientUnits="userSpaceOnUse" x1="1249.9" y1="1248.4" x2="1260" y2="1234.4"/><linearGradient id="cs93"><stop offset="0" stop-color="#f8f8f8"/><stop offset="0.2" stop-color="#ffffff"/><stop offset="0.5" stop-color="#b8b8b8"/><stop offset="0.8" stop-color="#909090"/><stop offset="1" stop-color="#909090"/></linearGradient><linearGradient id="c238" href="#cs93" gradientUnits="userSpaceOnUse" x1="1408.3" y1="1201.5" x2="1406.3" y2="1216.1"/><linearGradient id="c239" href="#cs76" gradientUnits="userSpaceOnUse" x1="1281.3" y1="1162.6" x2="1298.4" y2="1164.5"/><linearGradient id="c240" href="#cs69" gradientUnits="userSpaceOnUse" x1="1419" y1="1241.5" x2="1406.2" y2="1229.9"/><linearGradient id="cs94"><stop offset="0" stop-color="#b8b8b8"/><stop offset="0.2" stop-color="#989898"/><stop offset="0.5" stop-color="#909090"/><stop offset="0.8" stop-color="#909090"/><stop offset="1" stop-color="#909090"/></linearGradient><linearGradient id="c241" href="#cs94" gradientUnits="userSpaceOnUse" x1="1359.9" y1="1265.3" x2="1367.7" y2="1280.7"/><linearGradient id="c242" href="#cs51" gradientUnits="userSpaceOnUse" x1="1303.8" y1="1280.8" x2="1311.5" y2="1265.4"/><linearGradient id="cs95"><stop offset="0" stop-color="#909090"/><stop offset="0.2" stop-color="#a0a0a0"/><stop offset="0.5" stop-color="#c0c0c0"/><stop offset="0.8" stop-color="#d0d0d0"/><stop offset="1" stop-color="#c0c0c0"/></linearGradient><linearGradient id="c243" href="#cs95" gradientUnits="userSpaceOnUse" x1="1385.3" y1="1177.5" x2="1398.8" y2="1183.4"/><linearGradient id="c244" href="#cs46" gradientUnits="userSpaceOnUse" x1="1291.6" y1="1228.2" x2="1274.4" y2="1226.3"/><linearGradient id="c245" href="#cs79" gradientUnits="userSpaceOnUse" x1="1312.9" y1="1156.5" x2="1322.9" y2="1142.4"/><linearGradient id="c246" href="#cs45" gradientUnits="userSpaceOnUse" x1="1374.3" y1="1170" x2="1371.1" y2="1153"/><linearGradient id="cs96"><stop offset="0" stop-color="#f0f0f0"/><stop offset="0.2" stop-color="#e8e8e8"/><stop offset="0.5" stop-color="#a0a0a0"/><stop offset="0.8" stop-color="#909090"/><stop offset="1" stop-color="#909090"/></linearGradient><linearGradient id="c247" href="#cs96" gradientUnits="userSpaceOnUse" x1="1393.8" y1="1230.6" x2="1379.3" y2="1233.4"/><linearGradient id="c248" href="#cs90" gradientUnits="userSpaceOnUse" x1="1327.1" y1="1259" x2="1344.4" y2="1259"/><linearGradient id="c249" href="#cs94" gradientUnits="userSpaceOnUse" x1="1310.6" y1="1173.6" x2="1318.4" y2="1189"/><linearGradient id="cs97"><stop offset="0" stop-color="#909090"/><stop offset="0.2" stop-color="#909090"/><stop offset="0.5" stop-color="#a0a0a0"/><stop offset="0.8" stop-color="#ffffff"/><stop offset="1" stop-color="#ffffff"/></linearGradient><linearGradient id="c250" href="#cs97" gradientUnits="userSpaceOnUse" x1="1356.8" y1="1191.4" x2="1367" y2="1180.9"/><linearGradient id="c251" href="#cs92" gradientUnits="userSpaceOnUse" x1="1316.1" y1="1206.1" x2="1306" y2="1220.2"/><linearGradient id="cs98"><stop offset="0" stop-color="#909090"/><stop offset="0.2" stop-color="#a8a8a8"/><stop offset="0.5" stop-color="#d8d8d8"/><stop offset="0.8" stop-color="#e0e0e0"/><stop offset="1" stop-color="#c0c0c0"/></linearGradient><linearGradient id="c252" href="#cs98" gradientUnits="userSpaceOnUse" x1="1362.1" y1="1224.4" x2="1354.9" y2="1211.6"/><linearGradient id="c253" href="#cs51" gradientUnits="userSpaceOnUse" x1="1359.9" y1="1252.6" x2="1367.6" y2="1237.2"/><linearGradient id="c254" href="#cs88" gradientUnits="userSpaceOnUse" x1="1311.5" y1="1252.7" x2="1303.8" y2="1237.3"/><linearGradient id="c255" href="#cs46" gradientUnits="userSpaceOnUse" x1="1347.7" y1="1200" x2="1330.5" y2="1198.1"/></defs><path d="M1333.5,1200.5C1320.2,1212 1316.1,1250.2 1326.7,1264.2C1339.9,1252.8 1344,1214.5 1333.5,1200.5Z" fill="url(#c0)"/><path d="M1389.6,1172.3C1373,1167.2 1339.3,1184.2 1333.5,1200.5C1350.1,1205.6 1383.7,1188.6 1389.6,1172.3Z" fill="url(#c1)"/><path d="M1333.5,1200.5C1327.6,1184.2 1293.9,1167.4 1277.4,1172.5C1283.2,1188.8 1316.9,1205.6 1333.5,1200.5Z" fill="url(#c2)"/><path d="M1287.9,1226.3C1302.1,1230 1329.4,1214.5 1333.5,1200.5C1319.4,1196.8 1292,1212.3 1287.9,1226.3Z" fill="url(#c3)"/><path d="M1382.8,1236C1379.9,1219.2 1350.3,1197.9 1333.5,1200.5C1336.3,1217.3 1365.9,1238.6 1382.8,1236Z" fill="url(#c4)"/><path d="M1287.9,1226.3C1288.6,1241.2 1311.8,1263.9 1326.7,1264.2C1326,1249.4 1302.8,1226.6 1287.9,1226.3Z" fill="url(#c5)"/><path d="M1382.8,1236C1366.2,1230.9 1332.5,1247.9 1326.7,1264.2C1343.3,1269.3 1376.9,1252.3 1382.8,1236Z" fill="url(#c6)"/><path d="M1333.5,1144.3C1321.5,1155.5 1321.5,1189.3 1333.5,1200.5C1345.5,1189.3 1345.4,1155.5 1333.5,1144.3Z" fill="url(#c7)"/><path d="M1287.9,1226.3C1295.8,1213.6 1289.5,1181.3 1277.4,1172.5C1269.5,1185.2 1275.8,1217.5 1287.9,1226.3Z" fill="url(#c8)"/><path d="M1326.7,1264.2C1312.4,1254.7 1276.2,1261.5 1266.3,1275.6C1280.6,1285.1 1316.8,1278.3 1326.7,1264.2Z" fill="url(#c9)"/><path d="M1375.9,1299.7C1373.1,1282.9 1343.5,1261.6 1326.7,1264.2C1329.5,1281 1359.1,1302.3 1375.9,1299.7Z" fill="url(#c10)"/><path d="M1382.8,1236C1396,1224.5 1400.1,1186.3 1389.6,1172.3C1376.3,1183.8 1372.2,1222 1382.8,1236Z" fill="url(#c11)"/><path d="M1287.9,1226.3C1274.3,1232.1 1261.3,1261.6 1266.3,1275.6C1280,1269.8 1292.9,1240.3 1287.9,1226.3Z" fill="url(#c12)"/><path d="M1333.5,1144.3C1339.3,1160.6 1373,1177.4 1389.6,1172.3C1383.7,1156 1350,1139.2 1333.5,1144.3Z" fill="url(#c13)"/><path d="M1333.5,1144.3C1316.9,1139.2 1283.2,1156.2 1277.4,1172.5C1294,1177.6 1327.6,1160.6 1333.5,1144.3Z" fill="url(#c14)"/><path d="M1277.4,1172.5C1260.1,1173.8 1235.2,1201.6 1235.8,1218.9C1253.1,1217.6 1278,1189.8 1277.4,1172.5Z" fill="url(#c15)"/><path d="M1382.8,1236C1369.5,1247.5 1365.4,1285.7 1375.9,1299.7C1389.2,1288.2 1393.3,1250 1382.8,1236Z" fill="url(#c16)"/><path d="M1287.9,1226.3C1279,1214.8 1247.7,1210.3 1235.8,1218.9C1244.8,1230.5 1276.1,1234.9 1287.9,1226.3Z" fill="url(#c17)"/><path d="M1438.9,1207.8C1436,1191 1406.4,1169.7 1389.6,1172.3C1392.4,1189.1 1422,1210.4 1438.9,1207.8Z" fill="url(#c18)"/><path d="M1315.6,1311C1329.5,1304.4 1336.1,1276.3 1326.7,1264.2C1312.8,1270.8 1306.1,1298.9 1315.6,1311Z" fill="url(#c19)"/><path d="M1382.8,1236C1399.4,1241 1433,1224.1 1438.9,1207.8C1422.3,1202.7 1388.6,1219.7 1382.8,1236Z" fill="url(#c20)"/><path d="M1266.3,1275.6C1270.8,1258.6 1252.5,1224.6 1235.8,1218.9C1231.4,1235.9 1249.7,1269.9 1266.3,1275.6Z" fill="url(#c21)"/><path d="M1389.6,1116C1377.6,1127.3 1377.6,1161 1389.6,1172.3C1401.6,1161 1401.5,1127.3 1389.6,1116Z" fill="url(#c22)"/><path d="M1277.3,1116.3C1265.4,1127.5 1265.4,1161.3 1277.4,1172.5C1289.3,1161.2 1289.3,1127.5 1277.3,1116.3Z" fill="url(#c23)"/><path d="M1382.8,1236C1385.6,1252.8 1415.2,1274.1 1432,1271.5C1429.2,1254.7 1399.6,1233.4 1382.8,1236Z" fill="url(#c24)"/><path d="M1425.2,1157.3C1414.1,1150.9 1392.8,1159.9 1389.6,1172.3C1400.7,1178.7 1422,1169.7 1425.2,1157.3Z" fill="url(#c25)"/><path d="M1432,1271.5C1415.4,1266.4 1381.8,1283.4 1375.9,1299.7C1392.5,1304.7 1426.2,1287.8 1432,1271.5Z" fill="url(#c26)"/><path d="M1333.5,1144.3C1350.1,1149.3 1383.7,1132.4 1389.6,1116C1373,1111 1339.3,1127.9 1333.5,1144.3Z" fill="url(#c27)"/><path d="M1333.5,1144.3C1327.6,1128 1293.9,1111.2 1277.3,1116.3C1283.2,1132.6 1316.9,1149.4 1333.5,1144.3Z" fill="url(#c28)"/><path d="M1315.6,1311C1312.7,1294.2 1283.2,1273 1266.3,1275.6C1269.2,1292.4 1298.7,1313.7 1315.6,1311Z" fill="url(#c29)"/><path d="M1315.6,1311C1329.9,1320.5 1366.1,1313.7 1375.9,1299.7C1361.6,1290.2 1325.4,1297 1315.6,1311Z" fill="url(#c30)"/><path d="M1235.8,1162.6C1241.4,1176.3 1266.3,1182.2 1277.4,1172.5C1271.8,1158.9 1246.9,1153 1235.8,1162.6Z" fill="url(#c31)"/><path d="M1438.9,1207.8C1425.6,1219.2 1421.5,1257.4 1432,1271.5C1445.3,1260 1449.4,1221.8 1438.9,1207.8Z" fill="url(#c32)"/><path d="M1333.5,1144.3C1345.4,1133 1345.4,1099.3 1333.4,1088C1321.5,1099.3 1321.5,1133 1333.5,1144.3Z" fill="url(#c33)"/><path d="M1425.2,1157.3C1418.1,1170 1426.3,1200.3 1438.9,1207.8C1446,1195 1437.8,1164.7 1425.2,1157.3Z" fill="url(#c34)"/><path d="M1255.2,1322.4C1269.1,1315.8 1275.8,1287.7 1266.3,1275.6C1252.4,1282.2 1245.8,1310.3 1255.2,1322.4Z" fill="url(#c35)"/><path d="M1235.8,1162.6C1223.8,1173.9 1223.9,1207.6 1235.8,1218.9C1247.8,1207.6 1247.8,1173.9 1235.8,1162.6Z" fill="url(#c36)"/><path d="M1364.9,1346.5C1378.7,1339.9 1385.4,1311.8 1375.9,1299.7C1362.1,1306.3 1355.4,1334.4 1364.9,1346.5Z" fill="url(#c37)"/><path d="M1425.2,1157.3C1425.8,1142.4 1404.4,1117.6 1389.6,1116C1389,1131 1410.4,1155.7 1425.2,1157.3Z" fill="url(#c38)"/><path d="M1408.5,1313.2C1405.9,1301 1386.3,1293 1375.9,1299.7C1378.6,1311.8 1398.1,1319.9 1408.5,1313.2Z" fill="url(#c39)"/><path d="M1224.8,1265.7C1230.3,1279.3 1255.2,1285.3 1266.3,1275.6C1260.8,1262 1235.8,1256 1224.8,1265.7Z" fill="url(#c40)"/><path d="M1389.6,1116C1383.7,1099.7 1350,1082.9 1333.4,1088C1339.3,1104.3 1373,1121.2 1389.6,1116Z" fill="url(#c41)"/><path d="M1333.4,1088C1316.8,1083 1283.2,1099.9 1277.3,1116.3C1293.9,1121.3 1327.6,1104.4 1333.4,1088Z" fill="url(#c42)"/><path d="M1224.8,1265.7C1238.6,1259.1 1245.3,1231 1235.8,1218.9C1222,1225.5 1215.3,1253.6 1224.8,1265.7Z" fill="url(#c43)"/><path d="M1235.8,1162.6C1253,1161.4 1277.9,1133.5 1277.3,1116.3C1260.1,1117.6 1235.2,1145.4 1235.8,1162.6Z" fill="url(#c44)"/><path d="M1235.8,1218.9C1230.3,1205.3 1205.4,1199.4 1194.3,1209C1199.8,1222.7 1224.8,1228.6 1235.8,1218.9Z" fill="url(#c45)"/><path d="M1315.6,1311C1301.3,1301.6 1265.1,1308.4 1255.2,1322.4C1269.5,1331.9 1305.7,1325.1 1315.6,1311Z" fill="url(#c46)"/><path d="M1408.5,1313.2C1422.1,1309.8 1436.2,1284.8 1432,1271.5C1418.5,1274.8 1404.3,1299.8 1408.5,1313.2Z" fill="url(#c47)"/><path d="M1315.6,1311C1318.4,1327.9 1348,1349.1 1364.9,1346.5C1362,1329.7 1332.4,1308.4 1315.6,1311Z" fill="url(#c48)"/><path d="M1469.3,1173.4C1454.2,1172.4 1436,1193 1438.9,1207.8C1453.9,1208.8 1472.1,1188.3 1469.3,1173.4Z" fill="#888888"/><path d="M1462.4,1237.1C1467.1,1223.8 1452.9,1206.1 1438.9,1207.8C1434.2,1221.1 1448.4,1238.8 1462.4,1237.1Z" fill="url(#c49)"/><path d="M1438.8,1116.8C1429.1,1104.6 1399.6,1104.2 1389.6,1116C1399.2,1128.2 1428.8,1128.6 1438.8,1116.8Z" fill="url(#c50)"/><path d="M1462.4,1237.1C1447.4,1236.1 1429.1,1256.7 1432,1271.5C1447.1,1272.5 1465.3,1252 1462.4,1237.1Z" fill="#888888"/><path d="M1425.2,1157.3C1430.5,1170.1 1456.9,1179.8 1469.3,1173.4C1464,1160.7 1437.5,1150.9 1425.2,1157.3Z" fill="url(#c51)"/><path d="M1315.6,1311C1301.7,1317.7 1295.1,1345.8 1304.5,1357.9C1318.4,1351.3 1325,1323.2 1315.6,1311Z" fill="url(#c52)"/><path d="M1455.6,1300.8C1460.2,1287.5 1446.1,1269.8 1432,1271.5C1427.4,1284.8 1441.6,1302.5 1455.6,1300.8Z" fill="url(#c53)"/><path d="M1425.2,1157.3C1437.6,1152.4 1445.7,1128.1 1438.8,1116.8C1426.4,1121.6 1418.3,1145.9 1425.2,1157.3Z" fill="url(#c54)"/><path d="M1277.3,1116.3C1271.8,1102.6 1246.9,1096.7 1235.8,1106.4C1241.3,1120 1266.3,1125.9 1277.3,1116.3Z" fill="url(#c55)"/><path d="M1235.8,1162.6C1218.6,1163.9 1193.7,1191.8 1194.3,1209C1211.5,1207.7 1236.4,1179.9 1235.8,1162.6Z" fill="url(#c56)"/><path d="M1287.9,1088.7C1276.2,1090.6 1269.9,1107.1 1277.3,1116.3C1289,1114.4 1295.3,1097.9 1287.9,1088.7Z" fill="url(#c57)"/><path d="M1408.5,1313.2C1393.6,1311.7 1367.4,1331.8 1364.9,1346.5C1379.8,1347.9 1406,1327.9 1408.5,1313.2Z" fill="url(#c58)"/><path d="M1224.8,1265.7C1220.3,1282.7 1238.6,1316.7 1255.2,1322.4C1259.7,1305.4 1241.4,1271.4 1224.8,1265.7Z" fill="url(#c59)"/><path d="M1382.7,1088.7C1372.4,1097.1 1376.6,1113.5 1389.6,1116C1399.8,1107.7 1395.7,1091.3 1382.7,1088.7Z" fill="url(#c60)"/><path d="M1224.8,1265.7C1229.2,1248.7 1210.9,1214.7 1194.3,1209C1189.8,1226 1208.1,1260.1 1224.8,1265.7Z" fill="url(#c61)"/><path d="M1235.8,1162.6C1247.8,1151.4 1247.8,1117.6 1235.8,1106.4C1223.8,1117.7 1223.8,1151.4 1235.8,1162.6Z" fill="url(#c62)"/><path d="M1287.9,1088.7C1297.1,1098.8 1324.5,1098.4 1333.4,1088C1324.2,1078 1296.8,1078.4 1287.9,1088.7Z" fill="url(#c63)"/><path d="M1304.5,1357.9C1301.6,1341.1 1272.1,1319.8 1255.2,1322.4C1258.1,1339.2 1287.7,1360.5 1304.5,1357.9Z" fill="url(#c64)"/><path d="M1364.9,1346.5C1350.6,1337 1314.4,1343.8 1304.5,1357.9C1318.8,1367.4 1355,1360.6 1364.9,1346.5Z" fill="url(#c65)"/><path d="M1408.5,1313.2C1420.5,1320.5 1448.8,1313.2 1455.6,1300.8C1443.6,1293.5 1415.4,1300.8 1408.5,1313.2Z" fill="url(#c66)"/><path d="M1382.7,1088.7C1373,1076.6 1343.5,1076.2 1333.4,1088C1343.1,1100.1 1372.7,1100.6 1382.7,1088.7Z" fill="url(#c67)"/><path d="M1469.3,1173.4C1473.7,1156.4 1455.4,1122.4 1438.8,1116.8C1434.4,1133.8 1452.6,1167.8 1469.3,1173.4Z" fill="url(#c68)"/><path d="M1462.4,1237.1C1475.7,1225.7 1479.8,1187.5 1469.3,1173.4C1456,1184.9 1451.9,1223.1 1462.4,1237.1Z" fill="url(#c69)"/><path d="M1235.8,1162.6C1230.3,1149 1205.3,1143.1 1194.3,1152.8C1199.8,1166.4 1224.7,1172.3 1235.8,1162.6Z" fill="url(#c70)"/><path d="M1326.5,1060.7C1316.3,1069.1 1320.4,1085.5 1333.4,1088C1343.7,1079.6 1339.5,1063.3 1326.5,1060.7Z" fill="url(#c71)"/><path d="M1408.5,1313.2C1399.6,1321.6 1402.9,1342.1 1414.1,1347.2C1423,1338.8 1419.7,1318.3 1408.5,1313.2Z" fill="url(#c72)"/><path d="M1462.4,1237.1C1449.2,1248.6 1445.1,1286.8 1455.6,1300.8C1468.9,1289.4 1473,1251.2 1462.4,1237.1Z" fill="url(#c73)"/><path d="M1414.1,1347.2C1404.4,1335.1 1374.9,1334.7 1364.9,1346.5C1374.5,1358.6 1404.1,1359.1 1414.1,1347.2Z" fill="url(#c74)"/><path d="M1255.2,1322.4C1249.7,1308.8 1224.8,1302.9 1213.7,1312.5C1219.2,1326.2 1244.2,1332.1 1255.2,1322.4Z" fill="url(#c75)"/><path d="M1287.9,1088.7C1274.2,1082.6 1242.9,1093.2 1235.8,1106.4C1249.5,1112.5 1280.7,1101.9 1287.9,1088.7Z" fill="url(#c76)"/><path d="M1224.8,1265.7C1210.9,1272.3 1204.3,1300.4 1213.7,1312.5C1227.6,1305.9 1234.2,1277.8 1224.8,1265.7Z" fill="url(#c77)"/><path d="M1382.7,1088.7C1388.6,1105.1 1422.2,1121.9 1438.8,1116.8C1432.9,1100.4 1399.2,1083.6 1382.7,1088.7Z" fill="url(#c78)"/><path d="M1194.3,1152.8C1182.3,1164.1 1182.3,1197.8 1194.3,1209C1206.3,1197.8 1206.2,1164 1194.3,1152.8Z" fill="url(#c79)"/><path d="M1260.8,1340.9C1269.5,1334.3 1266.1,1323.2 1255.2,1322.4C1246.6,1329 1250,1340.2 1260.8,1340.9Z" fill="url(#c80)"/><path d="M1224.8,1265.7C1219.2,1252.1 1194.3,1246.2 1183.2,1255.9C1188.8,1269.5 1213.7,1275.4 1224.8,1265.7Z" fill="url(#c81)"/><path d="M1183.2,1255.9C1197.1,1249.3 1203.7,1221.2 1194.3,1209C1180.4,1215.6 1173.8,1243.7 1183.2,1255.9Z" fill="url(#c82)"/><path d="M1235.8,1106.4C1218.6,1107.7 1193.6,1135.5 1194.3,1152.8C1211.5,1151.5 1236.4,1123.7 1235.8,1106.4Z" fill="url(#c83)"/><path d="M1353.8,1358.6C1364.8,1364.3 1371.4,1357 1364.9,1346.5C1353.8,1340.8 1347.2,1348.1 1353.8,1358.6Z" fill="url(#c84)"/><path d="M1455.6,1300.8C1438.4,1302.1 1413.5,1330 1414.1,1347.2C1431.3,1345.9 1456.2,1318.1 1455.6,1300.8Z" fill="url(#c85)"/><path d="M1287.9,1088.7C1301.6,1091.4 1324.8,1074.6 1326.5,1060.7C1312.8,1058.1 1289.6,1074.9 1287.9,1088.7Z" fill="url(#c86)"/><path d="M1260.8,1340.9C1265.9,1353.8 1292.1,1364 1304.5,1357.9C1299.4,1345 1273.2,1334.8 1260.8,1340.9Z" fill="url(#c87)"/><path d="M1492.9,1202.8C1497.5,1189.5 1483.3,1171.8 1469.3,1173.4C1464.7,1186.8 1478.8,1204.4 1492.9,1202.8Z" fill="url(#c88)"/><path d="M1186.3,1202.2C1181.3,1211.4 1186.1,1215.4 1194.3,1209C1199.3,1199.9 1194.4,1195.8 1186.3,1202.2Z" fill="url(#c89)"/><path d="M1462.4,1237.1C1477.5,1238.2 1495.7,1217.6 1492.9,1202.8C1477.8,1201.8 1459.6,1222.3 1462.4,1237.1Z" fill="#888888"/><path d="M1382.7,1088.7C1376.8,1072.4 1343.1,1055.6 1326.5,1060.7C1332.4,1077.1 1366.1,1093.9 1382.7,1088.7Z" fill="url(#c90)"/><path d="M1462.4,1146.1C1452.2,1154.5 1456.3,1170.9 1469.3,1173.4C1479.5,1165.1 1475.4,1148.7 1462.4,1146.1Z" fill="url(#c91)"/><path d="M1353.8,1358.6C1344.1,1346.5 1314.5,1346 1304.5,1357.9C1314.2,1370 1343.7,1370.4 1353.8,1358.6Z" fill="url(#c92)"/><path d="M1462.4,1237.1C1457.8,1250.5 1472,1268.2 1486,1266.5C1490.7,1253.2 1476.5,1235.5 1462.4,1237.1Z" fill="url(#c93)"/><path d="M1462.4,1146.1C1467,1132.8 1452.9,1115.1 1438.8,1116.8C1434.2,1130.1 1448.3,1147.8 1462.4,1146.1Z" fill="url(#c94)"/><path d="M1287.9,1088.7C1289.7,1077.3 1276.7,1067.3 1266.2,1072.1C1264.3,1083.5 1277.3,1093.5 1287.9,1088.7Z" fill="url(#c95)"/><path d="M1431.9,1089.5C1421.7,1097.9 1425.8,1114.2 1438.8,1116.8C1449,1108.4 1444.9,1092 1431.9,1089.5Z" fill="url(#c96)"/><path d="M1266.2,1072.1C1251.2,1071 1232.9,1091.6 1235.8,1106.4C1250.8,1107.5 1269.1,1086.9 1266.2,1072.1Z" fill="#888888"/><path d="M1486,1266.5C1471,1265.5 1452.7,1286 1455.6,1300.8C1470.7,1301.9 1488.9,1281.3 1486,1266.5Z" fill="#888888"/><path d="M1260.8,1340.9C1256.7,1326.5 1228.4,1309.5 1213.7,1312.5C1217.9,1327 1246.1,1344 1260.8,1340.9Z" fill="url(#c97)"/><path d="M1293.4,1369.9C1304.4,1375.6 1311.1,1368.4 1304.5,1357.9C1293.5,1352.2 1286.8,1359.4 1293.4,1369.9Z" fill="url(#c98)"/><path d="M1382.7,1088.7C1392.4,1100.9 1421.9,1101.3 1431.9,1089.5C1422.2,1077.4 1392.7,1076.9 1382.7,1088.7Z" fill="url(#c99)"/><path d="M1353.8,1358.6C1368,1368.1 1404.2,1361.3 1414.1,1347.2C1399.8,1337.7 1363.6,1344.6 1353.8,1358.6Z" fill="url(#c100)"/><path d="M1186.3,1202.2C1197.9,1194 1202.7,1164.3 1194.3,1152.8C1182.6,1161.1 1177.8,1190.7 1186.3,1202.2Z" fill="url(#c101)"/><path d="M1224.7,1118.5C1235.7,1124.2 1242.4,1116.9 1235.8,1106.4C1224.8,1100.7 1218.1,1108 1224.7,1118.5Z" fill="url(#c102)"/><path d="M1444.5,1312.9C1455.5,1318.6 1462.2,1311.4 1455.6,1300.8C1444.6,1295.2 1437.9,1302.4 1444.5,1312.9Z" fill="url(#c103)"/><path d="M1186.3,1202.2C1175.5,1212.4 1173.7,1244.6 1183.2,1255.9C1194,1245.7 1195.8,1213.5 1186.3,1202.2Z" fill="url(#c104)"/><path d="M1382.7,1088.7C1392.9,1080.4 1388.8,1064 1375.8,1061.5C1365.6,1069.8 1369.7,1086.2 1382.7,1088.7Z" fill="url(#c105)"/><path d="M1224.7,1118.5C1209.6,1117.4 1191.4,1138 1194.3,1152.8C1209.3,1153.9 1227.6,1133.3 1224.7,1118.5Z" fill="#888888"/><path d="M1260.8,1340.9C1260.6,1354.4 1280.1,1371.8 1293.4,1369.9C1293.7,1356.5 1274.1,1339.1 1260.8,1340.9Z" fill="url(#c106)"/><path d="M1444.5,1312.9C1429.5,1311.8 1411.2,1332.4 1414.1,1347.2C1429.1,1348.3 1447.4,1327.7 1444.5,1312.9Z" fill="#888888"/><path d="M1462.4,1146.1C1457.9,1163.2 1476.2,1197.2 1492.9,1202.8C1497.3,1185.8 1479,1151.8 1462.4,1146.1Z" fill="url(#c107)"/><path d="M1462.4,1146.1C1466.8,1129.1 1448.6,1095.1 1431.9,1089.5C1427.5,1106.5 1445.8,1140.5 1462.4,1146.1Z" fill="url(#c108)"/><path d="M1353.8,1358.6C1339.5,1349.1 1303.3,1355.9 1293.4,1369.9C1307.7,1379.4 1343.9,1372.6 1353.8,1358.6Z" fill="url(#c109)"/><path d="M1183.2,1164.9C1194.2,1170.6 1200.9,1163.3 1194.3,1152.8C1183.2,1147.1 1176.6,1154.3 1183.2,1164.9Z" fill="url(#c110)"/><path d="M1403,1359.3C1414,1365 1420.7,1357.8 1414.1,1347.2C1403.1,1341.5 1396.4,1348.8 1403,1359.3Z" fill="url(#c111)"/><path d="M1260.8,1340.9C1255.7,1331 1241.6,1331.6 1237.3,1341.9C1242.4,1351.9 1256.5,1351.3 1260.8,1340.9Z" fill="url(#c112)"/><path d="M1224.7,1118.5C1241.9,1117.2 1266.8,1089.4 1266.2,1072.1C1249,1073.4 1224.1,1101.2 1224.7,1118.5Z" fill="url(#c113)"/><path d="M1444.5,1312.9C1461.7,1311.6 1486.7,1283.8 1486,1266.5C1468.8,1267.8 1443.9,1295.7 1444.5,1312.9Z" fill="url(#c114)"/><path d="M1353.8,1358.6C1363.4,1370.7 1393,1371.1 1403,1359.3C1393.3,1347.2 1363.8,1346.8 1353.8,1358.6Z" fill="url(#c115)"/><path d="M1186.3,1202.2C1195.8,1193.9 1193.9,1171.5 1183.2,1164.9C1173.6,1173.2 1175.5,1195.6 1186.3,1202.2Z" fill="url(#c116)"/><path d="M1186.3,1202.2C1174.7,1203.9 1168.8,1219.7 1176.3,1228.6C1187.9,1226.9 1193.8,1211.1 1186.3,1202.2Z" fill="url(#c117)"/><path d="M1353.8,1358.6C1342.7,1352.9 1336.1,1360.1 1342.7,1370.7C1353.7,1376.4 1360.3,1369.1 1353.8,1358.6Z" fill="url(#c118)"/><path d="M1462.4,1146.1C1457.8,1159.5 1471.9,1177.2 1486,1175.5C1490.6,1162.2 1476.4,1144.5 1462.4,1146.1Z" fill="url(#c119)"/><path d="M1224.7,1118.5C1207.5,1119.8 1182.5,1147.6 1183.2,1164.9C1200.4,1163.6 1225.3,1135.7 1224.7,1118.5Z" fill="url(#c120)"/><path d="M1444.5,1312.9C1427.3,1314.2 1402.4,1342 1403,1359.3C1420.2,1358 1445.1,1330.2 1444.5,1312.9Z" fill="url(#c121)"/><path d="M1462.4,1146.1C1472.6,1137.8 1468.5,1121.4 1455.5,1118.9C1445.3,1127.2 1449.4,1143.6 1462.4,1146.1Z" fill="url(#c122)"/><path d="M1224.7,1118.5C1239.7,1119.6 1258,1099 1255.1,1084.2C1240.1,1083.1 1221.8,1103.7 1224.7,1118.5Z" fill="#888888"/><path d="M1444.5,1312.9C1459.6,1314 1477.8,1293.4 1474.9,1278.6C1459.9,1277.5 1441.6,1298.1 1444.5,1312.9Z" fill="#888888"/><path d="M1224.7,1118.5C1213.7,1112.8 1207,1120 1213.6,1130.6C1224.6,1136.2 1231.3,1129 1224.7,1118.5Z" fill="url(#c123)"/><path d="M1444.5,1312.9C1433.5,1307.2 1426.8,1314.5 1433.4,1325C1444.4,1330.7 1451.1,1323.4 1444.5,1312.9Z" fill="url(#c124)"/><path d="M1213.7,1312.5C1218.1,1295.5 1199.9,1261.5 1183.2,1255.9C1178.8,1272.9 1197,1306.9 1213.7,1312.5Z" fill="url(#c125)"/><path d="M1326.5,1060.7C1312.3,1051.2 1276.1,1058.1 1266.2,1072.1C1280.5,1081.6 1316.7,1074.8 1326.5,1060.7Z" fill="url(#c126)"/><path d="M1492.9,1202.8C1479.6,1214.3 1475.5,1252.5 1486,1266.5C1499.3,1255.1 1503.4,1216.8 1492.9,1202.8Z" fill="url(#c127)"/><path d="M1375.8,1061.5C1366.1,1049.3 1336.6,1048.9 1326.5,1060.7C1336.2,1072.9 1365.8,1073.3 1375.8,1061.5Z" fill="url(#c128)"/><path d="M1237.3,1341.9C1241.9,1328.6 1227.7,1310.9 1213.7,1312.5C1209.1,1325.9 1223.2,1343.6 1237.3,1341.9Z" fill="url(#c129)"/><path d="M1206.8,1285.3C1196.6,1293.6 1200.7,1310 1213.7,1312.5C1223.9,1304.2 1219.8,1287.8 1206.8,1285.3Z" fill="url(#c130)"/><path d="M1206.8,1285.3C1211.4,1271.9 1197.3,1254.2 1183.2,1255.9C1178.6,1269.2 1192.8,1286.9 1206.8,1285.3Z" fill="url(#c131)"/><path d="M1176.3,1228.6C1166.1,1237 1170.2,1253.3 1183.2,1255.9C1193.5,1247.5 1189.3,1231.1 1176.3,1228.6Z" fill="url(#c132)"/><path d="M1315.4,1072.8C1326.5,1078.5 1333.1,1071.3 1326.5,1060.7C1315.5,1055 1308.9,1062.3 1315.4,1072.8Z" fill="url(#c133)"/><path d="M1431.9,1089.5C1426,1073.2 1392.4,1056.3 1375.8,1061.5C1381.7,1077.8 1415.4,1094.6 1431.9,1089.5Z" fill="url(#c134)"/><path d="M1482.9,1229.2C1494.5,1227.5 1500.4,1211.7 1492.9,1202.8C1481.3,1204.5 1475.4,1220.3 1482.9,1229.2Z" fill="url(#c135)"/><path d="M1293.4,1369.9C1287.5,1353.6 1253.8,1336.8 1237.3,1341.9C1243.2,1358.2 1276.8,1375.1 1293.4,1369.9Z" fill="url(#c136)"/><path d="M1482.9,1229.2C1473.4,1237.5 1475.3,1259.9 1486,1266.5C1495.6,1258.2 1493.7,1235.8 1482.9,1229.2Z" fill="url(#c137)"/><path d="M1315.4,1072.8C1305.8,1060.7 1276.2,1060.3 1266.2,1072.1C1275.9,1084.2 1305.4,1084.6 1315.4,1072.8Z" fill="url(#c138)"/><path d="M1486,1175.5C1475.7,1183.9 1479.9,1200.3 1492.9,1202.8C1503.1,1194.4 1499,1178.1 1486,1175.5Z" fill="url(#c139)"/><path d="M1408.4,1090.5C1413.5,1100.4 1427.6,1099.8 1431.9,1089.5C1426.8,1079.5 1412.7,1080.1 1408.4,1090.5Z" fill="url(#c140)"/><path d="M1255.1,1084.2C1266.1,1089.9 1272.8,1082.6 1266.2,1072.1C1255.2,1066.4 1248.5,1073.6 1255.1,1084.2Z" fill="url(#c141)"/><path d="M1455.5,1118.9C1460.1,1105.5 1446,1087.8 1431.9,1089.5C1427.3,1102.8 1441.5,1120.5 1455.5,1118.9Z" fill="url(#c142)"/><path d="M1474.9,1278.6C1486,1284.3 1492.6,1277.1 1486,1266.5C1475,1260.8 1468.3,1268.1 1474.9,1278.6Z" fill="url(#c143)"/><path d="M1315.4,1072.8C1329.7,1082.3 1365.9,1075.5 1375.8,1061.5C1361.5,1052 1325.3,1058.8 1315.4,1072.8Z" fill="url(#c144)"/><path d="M1206.8,1285.3C1202.4,1302.3 1220.6,1336.3 1237.3,1341.9C1241.7,1324.9 1223.4,1290.9 1206.8,1285.3Z" fill="url(#c145)"/><path d="M1342.7,1370.7C1333,1358.5 1303.4,1358.1 1293.4,1369.9C1303.1,1382.1 1332.6,1382.5 1342.7,1370.7Z" fill="url(#c146)"/><path d="M1183.2,1164.9C1169.9,1176.3 1165.8,1214.6 1176.3,1228.6C1189.6,1217.1 1193.7,1178.9 1183.2,1164.9Z" fill="url(#c147)"/><path d="M1206.8,1285.3C1211.3,1268.2 1193,1234.2 1176.3,1228.6C1171.9,1245.6 1190.2,1279.6 1206.8,1285.3Z" fill="url(#c148)"/><path d="M1408.4,1090.5C1408.6,1077 1389.1,1059.6 1375.8,1061.5C1375.5,1074.9 1395.1,1092.3 1408.4,1090.5Z" fill="url(#c149)"/><path d="M1286.5,1342.7C1276.3,1351 1280.4,1367.4 1293.4,1369.9C1303.6,1361.6 1299.5,1345.2 1286.5,1342.7Z" fill="url(#c150)"/><path d="M1403,1359.3C1388.7,1349.8 1352.5,1356.6 1342.7,1370.7C1356.9,1380.2 1393.1,1373.3 1403,1359.3Z" fill="url(#c151)"/><path d="M1482.9,1229.2C1493.7,1219 1495.5,1186.8 1486,1175.5C1475.2,1185.7 1473.4,1217.9 1482.9,1229.2Z" fill="url(#c152)"/><path d="M1482.9,1229.2C1471.3,1237.4 1466.5,1267.1 1474.9,1278.6C1486.6,1270.3 1491.4,1240.7 1482.9,1229.2Z" fill="url(#c153)"/><path d="M1315.4,1072.8C1301.2,1063.3 1265,1070.1 1255.1,1084.2C1269.4,1093.7 1305.6,1086.8 1315.4,1072.8Z" fill="url(#c154)"/><path d="M1286.5,1342.7C1276.8,1330.5 1247.3,1330.1 1237.3,1341.9C1247,1354 1276.5,1354.5 1286.5,1342.7Z" fill="url(#c155)"/><path d="M1364.7,1073.5C1375.7,1079.2 1382.4,1072 1375.8,1061.5C1364.8,1055.8 1358.1,1063 1364.7,1073.5Z" fill="url(#c156)"/><path d="M1486,1175.5C1490.4,1158.5 1472.2,1124.5 1455.5,1118.9C1451.1,1135.9 1469.3,1169.9 1486,1175.5Z" fill="url(#c157)"/><path d="M1408.4,1090.5C1412.5,1104.9 1440.8,1121.9 1455.5,1118.9C1451.3,1104.4 1423.1,1087.4 1408.4,1090.5Z" fill="url(#c158)"/><path d="M1213.6,1130.6C1198.5,1129.5 1180.3,1150.1 1183.2,1164.9C1198.2,1165.9 1216.5,1145.4 1213.6,1130.6Z" fill="#909090"/><path d="M1433.4,1325C1418.4,1323.9 1400.1,1344.5 1403,1359.3C1418,1360.4 1436.3,1339.8 1433.4,1325Z" fill="#909090"/><path d="M1230.4,1314.6C1220.2,1323 1224.3,1339.4 1237.3,1341.9C1247.5,1333.5 1243.4,1317.2 1230.4,1314.6Z" fill="url(#c159)"/><path d="M1381.3,1342.7C1379.5,1354.1 1392.5,1364.1 1403,1359.3C1404.9,1347.9 1391.9,1337.9 1381.3,1342.7Z" fill="url(#c160)"/><path d="M1206.8,1285.3C1202.2,1298.6 1216.3,1316.3 1230.4,1314.6C1235,1301.3 1220.9,1283.6 1206.8,1285.3Z" fill="url(#c161)"/><path d="M1206.8,1194.3C1211.4,1180.9 1197.2,1163.2 1183.2,1164.9C1178.5,1178.2 1192.7,1195.9 1206.8,1194.3Z" fill="url(#c162)"/><path d="M1315.4,1072.8C1325.1,1084.9 1354.7,1085.4 1364.7,1073.5C1355,1061.4 1325.5,1061 1315.4,1072.8Z" fill="url(#c163)"/><path d="M1206.8,1285.3C1217,1276.9 1212.9,1260.5 1199.9,1258C1189.7,1266.3 1193.8,1282.7 1206.8,1285.3Z" fill="url(#c164)"/><path d="M1286.5,1342.7C1292.4,1359 1326.1,1375.8 1342.7,1370.7C1336.8,1354.3 1303.1,1337.5 1286.5,1342.7Z" fill="url(#c165)"/><path d="M1206.8,1194.3C1191.7,1193.2 1173.5,1213.8 1176.3,1228.6C1191.4,1229.6 1209.6,1209.1 1206.8,1194.3Z" fill="#909090"/><path d="M1482.9,1229.2C1487.9,1220 1483.1,1216 1474.9,1222.4C1469.9,1231.5 1474.8,1235.6 1482.9,1229.2Z" fill="url(#c166)"/><path d="M1199.9,1258C1204.5,1244.6 1190.4,1227 1176.3,1228.6C1171.7,1241.9 1185.9,1259.6 1199.9,1258Z" fill="url(#c167)"/><path d="M1408.4,1090.5C1403.3,1077.6 1377.1,1067.4 1364.7,1073.5C1369.8,1086.4 1396,1096.6 1408.4,1090.5Z" fill="url(#c168)"/><path d="M1381.3,1342.7C1367.6,1340 1344.4,1356.8 1342.7,1370.7C1356.4,1373.3 1379.6,1356.5 1381.3,1342.7Z" fill="url(#c169)"/><path d="M1255.1,1084.2C1237.9,1085.5 1213,1113.3 1213.6,1130.6C1230.8,1129.3 1255.7,1101.4 1255.1,1084.2Z" fill="url(#c170)"/><path d="M1315.4,1072.8C1304.4,1067.1 1297.8,1074.4 1304.3,1084.9C1315.4,1090.6 1322,1083.3 1315.4,1072.8Z" fill="url(#c171)"/><path d="M1474.9,1278.6C1457.7,1279.9 1432.8,1307.7 1433.4,1325C1450.6,1323.7 1475.6,1295.9 1474.9,1278.6Z" fill="url(#c172)"/><path d="M1474.9,1222.4C1488.8,1215.8 1495.4,1187.7 1486,1175.5C1472.1,1182.1 1465.5,1210.2 1474.9,1222.4Z" fill="url(#c173)"/><path d="M1444.4,1165.7C1450,1179.3 1474.9,1185.2 1486,1175.5C1480.4,1161.9 1455.5,1156 1444.4,1165.7Z" fill="url(#c174)"/><path d="M1408.4,1090.5C1399.7,1097.1 1403.1,1108.2 1414,1109C1422.6,1102.4 1419.2,1091.2 1408.4,1090.5Z" fill="url(#c175)"/><path d="M1474.9,1222.4C1462.9,1233.6 1463,1267.4 1474.9,1278.6C1486.9,1267.3 1486.9,1233.6 1474.9,1222.4Z" fill="url(#c176)"/><path d="M1286.5,1342.7C1280.6,1326.3 1247,1309.5 1230.4,1314.6C1236.3,1331 1270,1347.8 1286.5,1342.7Z" fill="url(#c177)"/><path d="M1444.4,1165.7C1458.3,1159.1 1464.9,1131 1455.5,1118.9C1441.6,1125.5 1435,1153.6 1444.4,1165.7Z" fill="url(#c178)"/><path d="M1381.3,1342.7C1395,1348.8 1426.3,1338.2 1433.4,1325C1419.7,1318.9 1388.5,1329.5 1381.3,1342.7Z" fill="url(#c179)"/><path d="M1455.5,1118.9C1450,1105.2 1425,1099.3 1414,1109C1419.5,1122.6 1444.4,1128.5 1455.5,1118.9Z" fill="url(#c180)"/><path d="M1304.3,1084.9C1294.7,1072.8 1265.1,1072.3 1255.1,1084.2C1264.8,1096.3 1294.3,1096.7 1304.3,1084.9Z" fill="url(#c181)"/><path d="M1206.8,1194.3C1220,1182.8 1224.1,1144.6 1213.6,1130.6C1200.3,1142 1196.2,1180.2 1206.8,1194.3Z" fill="url(#c182)"/><path d="M1260.7,1118.2C1269.6,1109.8 1266.3,1089.3 1255.1,1084.2C1246.2,1092.6 1249.5,1113.1 1260.7,1118.2Z" fill="url(#c183)"/><path d="M1335.8,1343.4C1325.5,1351.8 1329.7,1368.1 1342.7,1370.7C1352.9,1362.3 1348.8,1345.9 1335.8,1343.4Z" fill="url(#c184)"/><path d="M1433.4,1268.8C1438.9,1282.4 1463.9,1288.3 1474.9,1278.6C1469.4,1265 1444.5,1259.1 1433.4,1268.8Z" fill="url(#c185)"/><path d="M1206.8,1194.3C1193.5,1205.7 1189.4,1243.9 1199.9,1258C1213.2,1246.5 1217.3,1208.3 1206.8,1194.3Z" fill="url(#c186)"/><path d="M1230.4,1314.6C1234.8,1297.6 1216.6,1263.6 1199.9,1258C1195.5,1275 1213.8,1309 1230.4,1314.6Z" fill="url(#c187)"/><path d="M1286.5,1342.7C1296.2,1354.8 1325.7,1355.2 1335.8,1343.4C1326.1,1331.3 1296.5,1330.8 1286.5,1342.7Z" fill="url(#c188)"/><path d="M1260.7,1118.2C1248.7,1110.9 1220.4,1118.2 1213.6,1130.6C1225.6,1137.9 1253.8,1130.6 1260.7,1118.2Z" fill="url(#c189)"/><path d="M1364.7,1073.5C1350.4,1064 1314.2,1070.8 1304.3,1084.9C1318.6,1094.4 1354.8,1087.6 1364.7,1073.5Z" fill="url(#c190)"/><path d="M1414,1109C1411.1,1092.2 1381.5,1070.9 1364.7,1073.5C1367.6,1090.3 1397.1,1111.6 1414,1109Z" fill="url(#c191)"/><path d="M1381.3,1342.7C1372.1,1332.6 1344.7,1333 1335.8,1343.4C1345,1353.4 1372.4,1353 1381.3,1342.7Z" fill="url(#c192)"/><path d="M1433.4,1268.8C1421.4,1280 1421.4,1313.8 1433.4,1325C1445.4,1313.7 1445.4,1280 1433.4,1268.8Z" fill="url(#c193)"/><path d="M1444.4,1165.7C1440,1182.7 1458.3,1216.7 1474.9,1222.4C1479.4,1205.4 1461.1,1171.3 1444.4,1165.7Z" fill="url(#c194)"/><path d="M1286.5,1342.7C1296.8,1334.3 1292.6,1317.9 1279.6,1315.4C1269.4,1323.7 1273.5,1340.1 1286.5,1342.7Z" fill="url(#c195)"/><path d="M1444.4,1165.7C1448.9,1148.7 1430.6,1114.7 1414,1109C1409.5,1126 1427.8,1160 1444.4,1165.7Z" fill="url(#c196)"/><path d="M1260.7,1118.2C1275.6,1119.7 1301.8,1099.6 1304.3,1084.9C1289.4,1083.5 1263.2,1103.5 1260.7,1118.2Z" fill="url(#c197)"/><path d="M1381.3,1342.7C1393,1340.8 1399.3,1324.3 1391.9,1315.1C1380.2,1317 1373.9,1333.5 1381.3,1342.7Z" fill="url(#c198)"/><path d="M1433.4,1268.8C1450.6,1267.5 1475.5,1239.6 1474.9,1222.4C1457.7,1223.7 1432.8,1251.5 1433.4,1268.8Z" fill="url(#c199)"/><path d="M1433.4,1325C1427.9,1311.4 1402.9,1305.5 1391.9,1315.1C1397.4,1328.8 1422.3,1334.7 1433.4,1325Z" fill="url(#c200)"/><path d="M1244,1274.1C1231.6,1279 1223.5,1303.3 1230.4,1314.6C1242.8,1309.8 1250.9,1285.5 1244,1274.1Z" fill="url(#c201)"/><path d="M1237.2,1159.9C1241.8,1146.6 1227.6,1128.9 1213.6,1130.6C1209,1143.9 1223.1,1161.6 1237.2,1159.9Z" fill="url(#c202)"/><path d="M1353.6,1120.4C1367.5,1113.7 1374.1,1085.6 1364.7,1073.5C1350.8,1080.1 1344.2,1108.2 1353.6,1120.4Z" fill="url(#c203)"/><path d="M1244,1274.1C1238.7,1261.3 1212.3,1251.6 1199.9,1258C1205.2,1270.7 1231.7,1280.5 1244,1274.1Z" fill="url(#c204)"/><path d="M1206.8,1194.3C1221.8,1195.3 1240.1,1174.7 1237.2,1159.9C1222.1,1158.9 1203.9,1179.4 1206.8,1194.3Z" fill="#909090"/><path d="M1279.6,1315.4C1270,1303.2 1240.4,1302.8 1230.4,1314.6C1240.1,1326.8 1269.6,1327.2 1279.6,1315.4Z" fill="url(#c205)"/><path d="M1206.8,1194.3C1202.1,1207.6 1216.3,1225.3 1230.3,1223.6C1235,1210.3 1220.8,1192.6 1206.8,1194.3Z" fill="url(#c206)"/><path d="M1230.3,1223.6C1215.3,1222.6 1197.1,1243.1 1199.9,1258C1215,1259 1233.2,1238.4 1230.3,1223.6Z" fill="#909090"/><path d="M1353.6,1120.4C1350.8,1103.5 1321.2,1082.3 1304.3,1084.9C1307.2,1101.7 1336.8,1123 1353.6,1120.4Z" fill="url(#c207)"/><path d="M1260.7,1118.2C1247.1,1121.6 1233,1146.6 1237.2,1159.9C1250.7,1156.6 1264.9,1131.6 1260.7,1118.2Z" fill="url(#c208)"/><path d="M1353.6,1120.4C1367.9,1129.8 1404.1,1123 1414,1109C1399.7,1099.5 1363.5,1106.3 1353.6,1120.4Z" fill="url(#c209)"/><path d="M1474.9,1222.4C1469.4,1208.7 1444.4,1202.8 1433.4,1212.5C1438.9,1226.1 1463.8,1232 1474.9,1222.4Z" fill="url(#c210)"/><path d="M1433.4,1268.8C1416.2,1270 1391.3,1297.9 1391.9,1315.1C1409.1,1313.8 1434,1286 1433.4,1268.8Z" fill="url(#c211)"/><path d="M1444.4,1165.7C1430.6,1172.3 1423.9,1200.4 1433.4,1212.5C1447.2,1205.9 1453.9,1177.8 1444.4,1165.7Z" fill="url(#c212)"/><path d="M1391.9,1315.1C1375.3,1310.1 1341.6,1327 1335.8,1343.4C1352.4,1348.4 1386,1331.5 1391.9,1315.1Z" fill="url(#c213)"/><path d="M1335.8,1343.4C1329.9,1327.1 1296.2,1310.2 1279.6,1315.4C1285.5,1331.7 1319.2,1348.5 1335.8,1343.4Z" fill="url(#c214)"/><path d="M1444.4,1165.7C1438.9,1152.1 1414,1146.1 1402.9,1155.8C1408.4,1169.4 1433.4,1175.4 1444.4,1165.7Z" fill="url(#c215)"/><path d="M1260.7,1118.2C1263.3,1130.4 1282.9,1138.4 1293.3,1131.7C1290.6,1119.6 1271.1,1111.5 1260.7,1118.2Z" fill="url(#c216)"/><path d="M1244,1274.1C1243.4,1289 1264.8,1313.8 1279.6,1315.4C1280.2,1300.4 1258.8,1275.7 1244,1274.1Z" fill="url(#c217)"/><path d="M1293.3,1131.7C1307.1,1125.1 1313.8,1097 1304.3,1084.9C1290.5,1091.5 1283.8,1119.6 1293.3,1131.7Z" fill="url(#c218)"/><path d="M1433.4,1268.8C1445.4,1257.5 1445.3,1223.8 1433.4,1212.5C1421.4,1223.8 1421.4,1257.5 1433.4,1268.8Z" fill="url(#c219)"/><path d="M1402.9,1155.8C1416.8,1149.2 1423.4,1121.1 1414,1109C1400.1,1115.6 1393.4,1143.7 1402.9,1155.8Z" fill="url(#c220)"/><path d="M1244,1274.1C1251.1,1261.4 1242.9,1231.1 1230.3,1223.6C1223.2,1236.4 1231.4,1266.7 1244,1274.1Z" fill="url(#c221)"/><path d="M1335.7,1287.1C1323.8,1298.4 1323.8,1332.1 1335.8,1343.4C1347.7,1332.1 1347.7,1298.4 1335.7,1287.1Z" fill="url(#c222)"/><path d="M1237.2,1159.9C1223.9,1171.4 1219.8,1209.6 1230.3,1223.6C1243.6,1212.2 1247.7,1174 1237.2,1159.9Z" fill="url(#c223)"/><path d="M1433.4,1268.8C1427.8,1255.1 1402.9,1249.2 1391.8,1258.9C1397.4,1272.5 1422.3,1278.4 1433.4,1268.8Z" fill="url(#c224)"/><path d="M1353.6,1120.4C1339.3,1110.9 1303.1,1117.7 1293.3,1131.7C1307.6,1141.2 1343.8,1134.4 1353.6,1120.4Z" fill="url(#c225)"/><path d="M1353.6,1120.4C1356.5,1137.2 1386,1158.4 1402.9,1155.8C1400,1139 1370.5,1117.7 1353.6,1120.4Z" fill="url(#c226)"/><path d="M1335.7,1287.1C1341.6,1303.4 1375.3,1320.2 1391.9,1315.1C1386,1298.8 1352.3,1282 1335.7,1287.1Z" fill="url(#c227)"/><path d="M1335.7,1287.1C1319.1,1282.1 1285.5,1299 1279.6,1315.4C1296.2,1320.4 1329.9,1303.5 1335.7,1287.1Z" fill="url(#c228)"/><path d="M1293.3,1131.7C1276.7,1126.7 1243,1143.6 1237.2,1159.9C1253.8,1165 1287.4,1148 1293.3,1131.7Z" fill="url(#c229)"/><path d="M1244,1274.1C1255.1,1280.5 1276.4,1271.5 1279.6,1259.1C1268.5,1252.7 1247.2,1261.7 1244,1274.1Z" fill="url(#c230)"/><path d="M1286.4,1195.4C1283.6,1178.6 1254,1157.3 1237.2,1159.9C1240,1176.7 1269.6,1198 1286.4,1195.4Z" fill="url(#c231)"/><path d="M1391.8,1258.9C1379.9,1270.2 1379.9,1303.9 1391.9,1315.1C1403.8,1303.9 1403.8,1270.1 1391.8,1258.9Z" fill="url(#c232)"/><path d="M1279.6,1259.1C1267.6,1270.4 1267.7,1304.1 1279.6,1315.4C1291.6,1304.1 1291.6,1270.4 1279.6,1259.1Z" fill="url(#c233)"/><path d="M1433.4,1212.5C1437.8,1195.5 1419.5,1161.5 1402.9,1155.8C1398.4,1172.8 1416.7,1206.8 1433.4,1212.5Z" fill="url(#c234)"/><path d="M1286.4,1195.4C1269.8,1190.4 1236.2,1207.3 1230.3,1223.6C1246.9,1228.7 1280.6,1211.7 1286.4,1195.4Z" fill="url(#c235)"/><path d="M1353.6,1120.4C1339.7,1127 1333.1,1155.1 1342.5,1167.2C1356.4,1160.6 1363.1,1132.5 1353.6,1120.4Z" fill="url(#c236)"/><path d="M1279.6,1259.1C1276.8,1242.3 1247.2,1221 1230.3,1223.6C1233.2,1240.4 1262.8,1261.7 1279.6,1259.1Z" fill="url(#c237)"/><path d="M1381.3,1205.1C1390.2,1216.6 1421.5,1221.1 1433.4,1212.5C1424.4,1200.9 1393.1,1196.5 1381.3,1205.1Z" fill="url(#c238)"/><path d="M1286.4,1195.4C1299.7,1183.9 1303.8,1145.7 1293.3,1131.7C1280,1143.2 1275.9,1181.4 1286.4,1195.4Z" fill="url(#c239)"/><path d="M1433.4,1212.5C1416.1,1213.8 1391.2,1241.6 1391.8,1258.9C1409.1,1257.6 1434,1229.8 1433.4,1212.5Z" fill="url(#c240)"/><path d="M1335.7,1287.1C1352.3,1292.2 1386,1275.2 1391.8,1258.9C1375.2,1253.8 1341.6,1270.8 1335.7,1287.1Z" fill="url(#c241)"/><path d="M1335.7,1287.1C1329.9,1270.8 1296.2,1254 1279.6,1259.1C1285.5,1275.4 1319.2,1292.2 1335.7,1287.1Z" fill="url(#c242)"/><path d="M1381.3,1205.1C1394.9,1199.3 1407.9,1169.8 1402.9,1155.8C1389.2,1161.6 1376.3,1191.1 1381.3,1205.1Z" fill="url(#c243)"/><path d="M1286.4,1195.4C1273.2,1206.9 1269.1,1245.1 1279.6,1259.1C1292.9,1247.6 1297,1209.4 1286.4,1195.4Z" fill="url(#c244)"/><path d="M1342.5,1167.2C1339.7,1150.4 1310.1,1129.1 1293.3,1131.7C1296.1,1148.5 1325.7,1169.8 1342.5,1167.2Z" fill="url(#c245)"/><path d="M1402.9,1155.8C1388.6,1146.3 1352.4,1153.1 1342.5,1167.2C1356.8,1176.7 1393,1169.9 1402.9,1155.8Z" fill="url(#c246)"/><path d="M1381.3,1205.1C1373.4,1217.8 1379.7,1250.1 1391.8,1258.9C1399.7,1246.2 1393.4,1213.9 1381.3,1205.1Z" fill="url(#c247)"/><path d="M1335.7,1287.1C1347.7,1275.9 1347.7,1242.1 1335.7,1230.9C1323.7,1242.1 1323.8,1275.9 1335.7,1287.1Z" fill="url(#c248)"/><path d="M1286.4,1195.4C1303,1200.5 1336.7,1183.5 1342.5,1167.2C1325.9,1162.1 1292.3,1179.1 1286.4,1195.4Z" fill="url(#c249)"/><path d="M1381.3,1205.1C1380.6,1190.2 1357.4,1167.5 1342.5,1167.2C1343.2,1182 1366.4,1204.8 1381.3,1205.1Z" fill="url(#c250)"/><path d="M1286.4,1195.4C1289.3,1212.2 1318.9,1233.5 1335.7,1230.9C1332.9,1214.1 1303.3,1192.8 1286.4,1195.4Z" fill="url(#c251)"/><path d="M1381.3,1205.1C1367.1,1201.4 1339.8,1216.9 1335.7,1230.9C1349.8,1234.6 1377.2,1219.1 1381.3,1205.1Z" fill="url(#c252)"/><path d="M1391.8,1258.9C1386,1242.6 1352.3,1225.8 1335.7,1230.9C1341.6,1247.2 1375.3,1264 1391.8,1258.9Z" fill="url(#c253)"/><path d="M1335.7,1230.9C1319.1,1225.8 1285.5,1242.8 1279.6,1259.1C1296.2,1264.2 1329.9,1247.2 1335.7,1230.9Z" fill="url(#c254)"/><path d="M1342.5,1167.2C1329.3,1178.6 1325.2,1216.9 1335.7,1230.9C1349,1219.4 1353.1,1181.2 1342.5,1167.2Z" fill="url(#c255)"/></svg>
<svg style="left:0;top:378px" width="450" height="28" viewBox="0 378 450 28"><path d="M61,392 L219,392" stroke="#8c8c8c" stroke-width="2.4" stroke-linecap="round"/><circle cx="222" cy="392" r="10.6" fill="#8a8a8a" fill-opacity="0.75"/><circle cx="222" cy="392" r="7.6" fill="#000"/></svg>
<div class="cbx" style="top:482px"></div>
<div class="cbx" style="top:612px"></div>
<div class="cbx" style="top:672px"></div>
<div class="cbx" style="top:762px"></div>
<div class="cbx" style="top:822px"></div>
<div class="cbx" style="top:882px"></div>
<svg style="left:0;top:838px" width="450" height="28" viewBox="0 838 450 28"><path d="M225,852 L323.5,852" stroke="#8c8c8c" stroke-width="2.4" stroke-linecap="round"/><circle cx="222" cy="852" r="10.6" fill="#8a8a8a" fill-opacity="0.75"/><circle cx="222" cy="852" r="7.6" fill="#000"/></svg>
<div style="left:0;top:1406px;width:1513px;height:2px;background:#818181"></div>
<div style="left:153px;top:1413px;width:1233px;height:49px;border:2px solid #7f8ea0;border-right-color:#8e9bab;background:#fff"></div>
<svg style="left:1425px;top:1422px" width="34" height="34" viewBox="1425 1422 34 34" fill="none"><circle cx="1441.6" cy="1438.6" r="11.2" stroke="#ababab" stroke-width="2"/><text x="1436.3" y="1445.6" font-family="Liberation Sans, sans-serif" font-size="19" font-weight="bold" fill="#ababab">?</text></svg>
<div style="left:0;top:1470px;width:1535px;height:2px;background:#9a9a9a"></div>
<svg style="left:0;top:0" width="1535" height="1472" viewBox="0 0 1535 1472" fill="none"><path d="M0.7,1472 L0.7,21 A20.3,20.3 0 0 1 21,0.6 L1514,0.6 A20.3,20.3 0 0 1 1534.3,21 L1534.3,1472" stroke="#a4a4a4" stroke-width="1.4"/><path d="M21,0.6 L1310,0.6" stroke="#cfcfcf" stroke-width="1.4"/></svg>
<div id="t_title" class="tx" style="left:550.40px;top:25.30px;font-size:28px;line-height:28px;letter-spacing:0.270px;font-weight:bold;font-style:normal;color:#2e2e2e">IcosaedroTruncado3D.ggb</div>
<div id="m1" class="tx" style="left:15.30px;top:88.73px;font-size:33.4px;line-height:33.4px;letter-spacing:0.509px;font-weight:normal;font-style:normal;color:#383838">Arquivo</div>
<div id="m2" class="tx" style="left:156.50px;top:88.73px;font-size:33.4px;line-height:33.4px;letter-spacing:0.279px;font-weight:normal;font-style:normal;color:#383838">Editar</div>
<div id="m3" class="tx" style="left:271.50px;top:88.73px;font-size:33.4px;line-height:33.4px;letter-spacing:-0.375px;font-weight:normal;font-style:normal;color:#383838">Exibir</div>
<div id="m4" class="tx" style="left:381.50px;top:88.73px;font-size:33.4px;line-height:33.4px;letter-spacing:-0.176px;font-weight:normal;font-style:normal;color:#383838">Opções</div>
<div id="m5" class="tx" style="left:522.50px;top:88.73px;font-size:33.4px;line-height:33.4px;letter-spacing:0.392px;font-weight:normal;font-style:normal;color:#383838">Ferramentas</div>
<div id="m6" class="tx" style="left:742.50px;top:88.73px;font-size:33.4px;line-height:33.4px;letter-spacing:-2.265px;font-weight:normal;font-style:normal;color:#383838">Janela</div>
<div id="m7" class="tx" style="left:855.50px;top:88.73px;font-size:33.4px;line-height:33.4px;letter-spacing:-0.208px;font-weight:normal;font-style:normal;color:#383838">Ajuda</div>
<div id="h1" class="tx" style="left:48.00px;top:248.29px;font-size:32.5px;line-height:32.5px;letter-spacing:-0.242px;font-weight:normal;font-style:normal;color:#4c4c4c">Janela de Visualização</div>
<div id="h2" class="tx" style="left:514.50px;top:248.29px;font-size:32.5px;line-height:32.5px;letter-spacing:-0.074px;font-weight:bold;font-style:normal;color:#4c4c4c">Janela de Visualização 3D</div>
<div id="l0" class="tx" style="left:21.30px;top:322.47px;font-size:33px;line-height:33px;letter-spacing:0.631px;font-weight:normal;font-style:normal;color:#222">Tamanho da Aresta:</div>
<div id="l1" class="tx" style="left:89.50px;top:490.37px;font-size:33px;line-height:33px;letter-spacing:1.041px;font-weight:normal;font-style:normal;color:#222">Icosaedro</div>
<div id="l2" class="tx" style="left:19.50px;top:562.27px;font-size:33px;line-height:33px;letter-spacing:0.891px;font-weight:normal;font-style:normal;color:#222">Icosaedro-Truncado</div>
<div id="l3" class="tx" style="left:91.50px;top:624.57px;font-size:33px;line-height:33px;letter-spacing:-0.215px;font-weight:normal;font-style:normal;color:#222">12 Faces Pentagonais</div>
<div id="l4" class="tx" style="left:91.20px;top:684.67px;font-size:33px;line-height:33px;letter-spacing:0.022px;font-weight:normal;font-style:normal;color:#222">20 faces Hexagonais</div>
<div id="l5" class="tx" style="left:90.50px;top:770.07px;font-size:33px;line-height:33px;letter-spacing:-0.043px;font-weight:normal;font-style:normal;color:#222">Flor da Vida</div>
<div id="l6" class="tx" style="left:90.50px;top:830.37px;font-size:33px;line-height:33px;letter-spacing:-0.304px;font-weight:normal;font-style:normal;color:#222">Esfera</div>
<div id="l7" class="tx" style="left:90.50px;top:891.07px;font-size:33px;line-height:33px;letter-spacing:-0.210px;font-weight:normal;font-style:normal;color:#222">Pétalas 3D</div>
<div id="g1" class="tx" style="left:478.50px;top:314.89px;font-size:32.5px;line-height:32.5px;letter-spacing:0.509px;font-weight:bold;font-style:normal;color:#111">Flor da Vida transposta em um Icosaedro-Truncado</div>
<div id="g2" class="tx" style="left:485.80px;top:357.51px;font-size:32px;line-height:32px;letter-spacing:-0.802px;font-weight:normal;font-style:italic;color:#333">Projeto: Rumo à Evolução</div>
<div id="e1" class="tx" style="left:21.50px;top:1424.47px;font-size:33px;line-height:33px;letter-spacing:0.631px;font-weight:normal;font-style:normal;color:#383838">Entrada:</div>
</div>
</body></html>
